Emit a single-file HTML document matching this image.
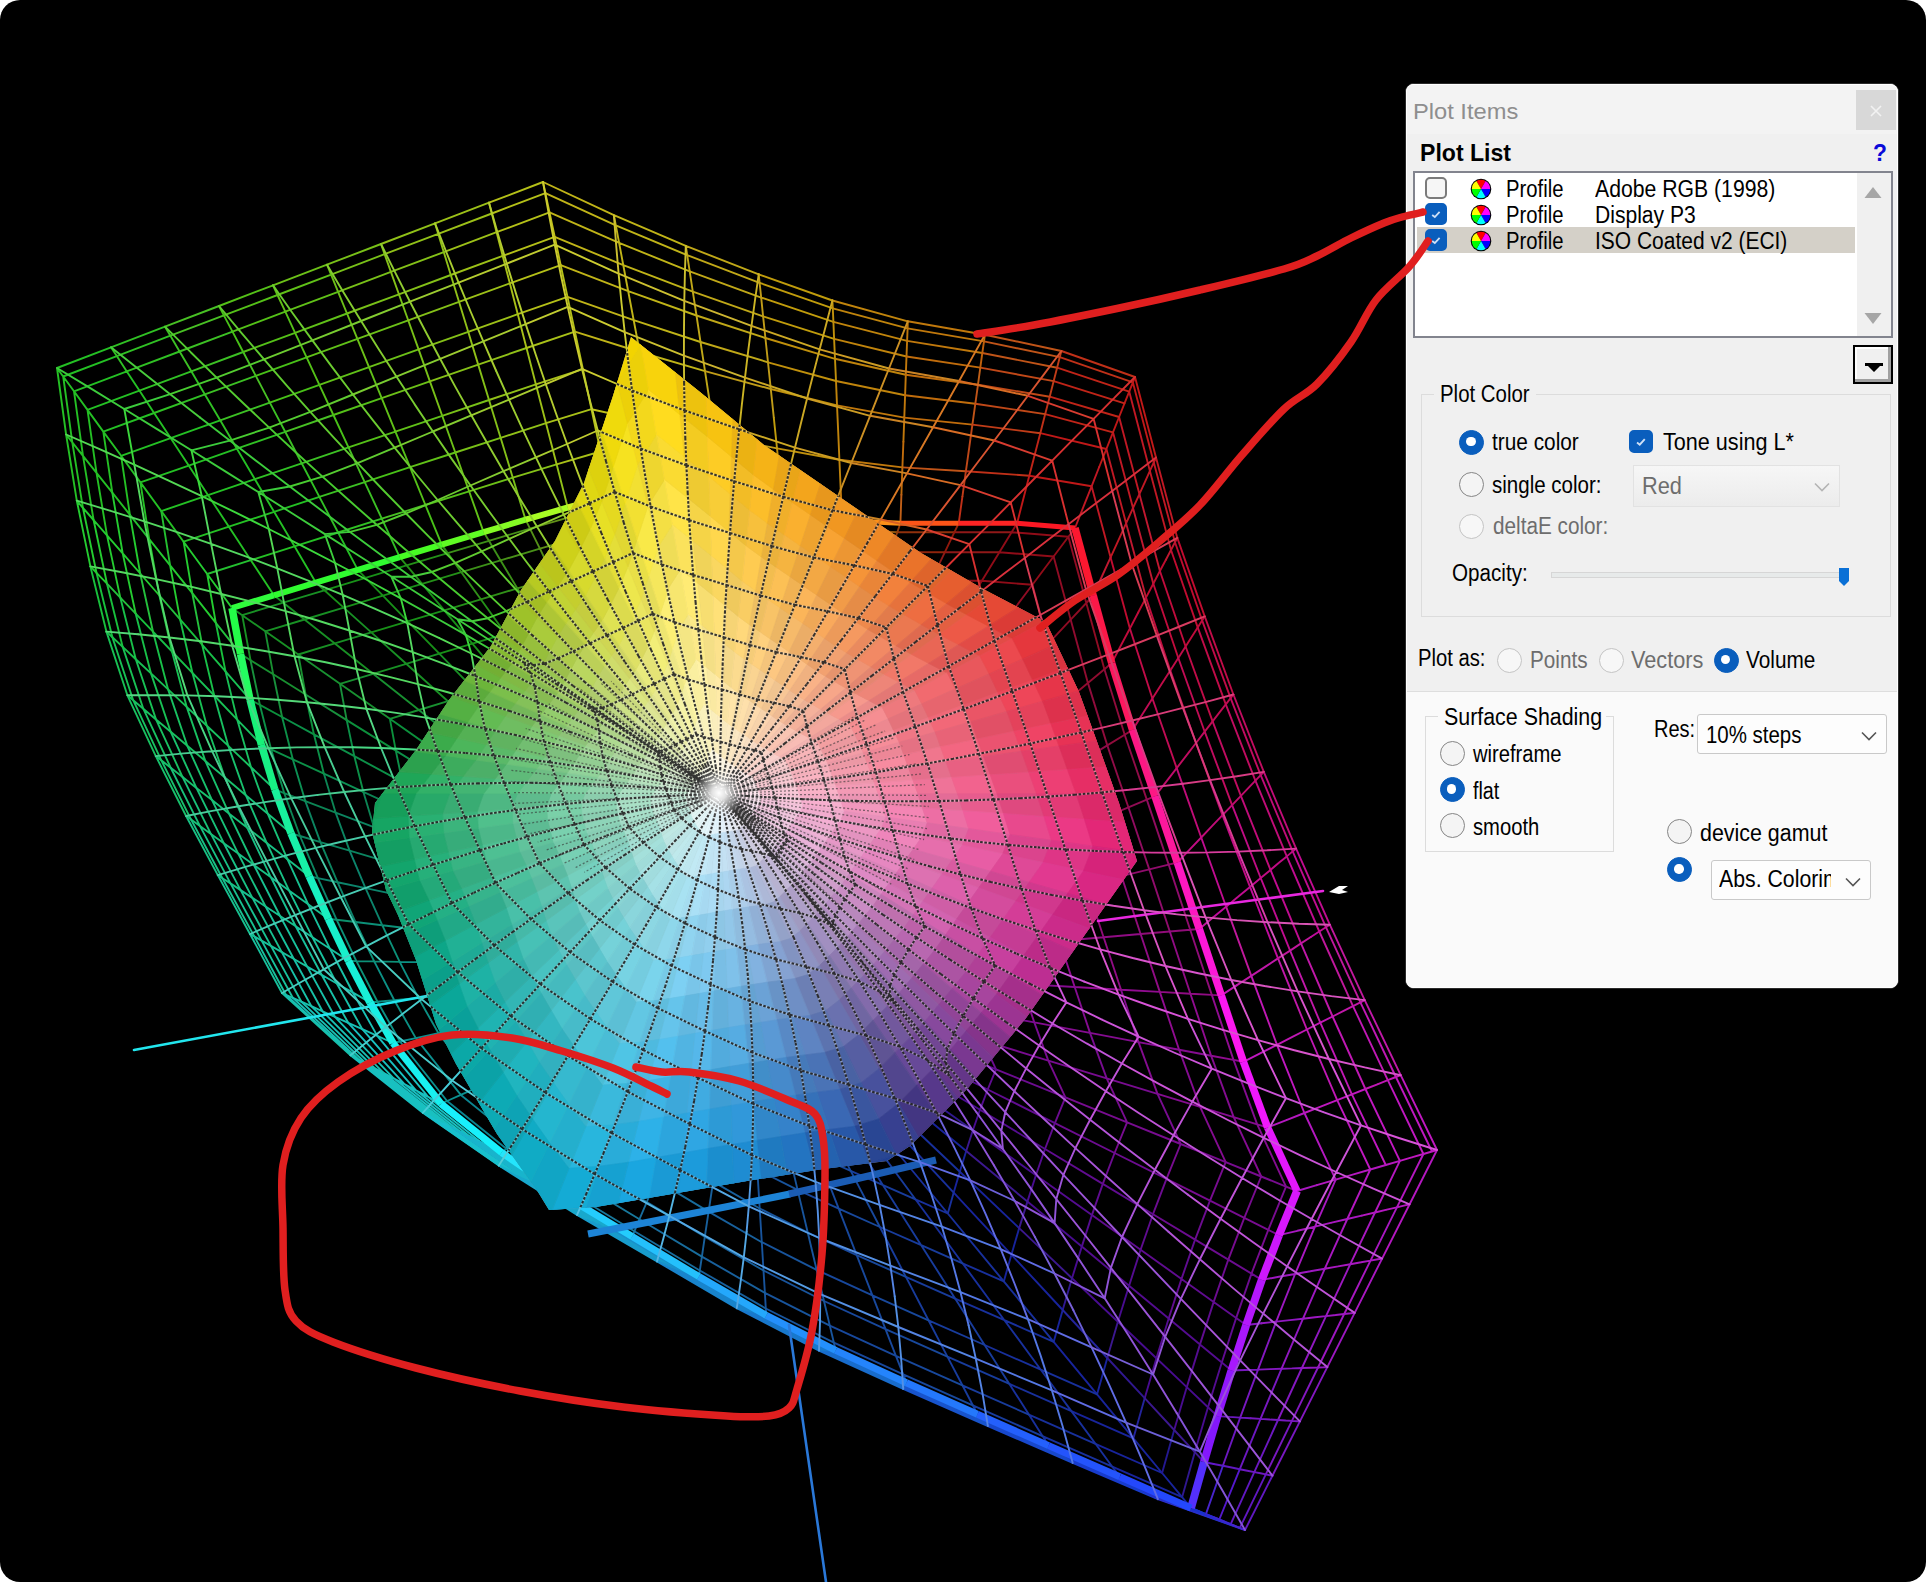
<!DOCTYPE html>
<html><head><meta charset="utf-8"><title>Plot Items</title>
<style>
html,body{margin:0;padding:0;background:#fff;overflow:hidden}
#root{position:relative;width:1926px;height:1582px;background:#000;border-radius:20px;overflow:hidden;font-family:"Liberation Sans",sans-serif}

#panel{position:absolute;left:1405px;top:83px;width:494px;height:906px;box-sizing:border-box;border:1.8px solid #2a2a2a;border-radius:9px;background:#f0f0f0;overflow:hidden}
#pglow{position:absolute;left:0;top:0;right:0;bottom:0;border:1.4px solid #fff;border-radius:7px}
#ptitle{position:absolute;left:0;top:0;width:100%;height:50px;background:#f3f3f3}
#pbottom{position:absolute;left:0;top:607px;width:100%;height:300px;background:#fafafa;border-top:1px solid #dedede}
#list{position:absolute;left:1413px;top:171px;width:480px;height:167px;box-sizing:border-box;border:2px solid #82848e;background:#fff}
.abs{position:absolute}
.t{position:absolute;white-space:nowrap;line-height:1;transform-origin:0 0;font-family:"Liberation Sans",sans-serif}
.rd{position:absolute;width:25px;height:25px;box-sizing:border-box;border:1.6px solid #858585;border-radius:50%}
.rd i{display:block}
.cb{position:absolute;box-sizing:border-box;border:2px solid #7b7b7b;border-radius:5px}
.grp{position:absolute;box-sizing:border-box;border:1.5px solid #dcdcdc}
.cmb{position:absolute;box-sizing:border-box;border:1.5px solid #c9c9c9;border-radius:3px;background:#fdfdfd}

</style></head><body>
<div id="root">
<svg id="plot" width="1926" height="1582" viewBox="0 0 1926 1582" style="position:absolute;left:0;top:0" fill="none" stroke-linecap="round">
<defs><radialGradient id="hub"><stop offset="0" stop-color="#fff"/><stop offset="0.3" stop-color="#fff" stop-opacity="0.85"/><stop offset="1" stop-color="#fff" stop-opacity="0"/></radialGradient><clipPath id="cs"><polygon points="631,337 700,392 764,445 828,489 921,553 985,590 1046,622 1079,692 1100,750 1119,803 1137,861 1096,919 1026,1018 968,1088 910,1146 887,1161 823,1169 747,1181 666,1195 596,1207 549,1210 538,1192 497,1134 456,1064 436,1024 416,960 398,915 386,890 372,832 375,803 416,750 449,700 491,646 521,590 555,541 584,483 613,396"/></clipPath>
<clipPath id="cx"><path clip-rule="evenodd" d="M0 0H1926V1582H0Z M631 337 L700 392 L764 445 L828 489 L921 553 L985 590 L1046 622 L1079 692 L1100 750 L1119 803 L1137 861 L1096 919 L1026 1018 L968 1088 L910 1146 L887 1161 L823 1169 L747 1181 L666 1195 L596 1207 L549 1210 L538 1192 L497 1134 L456 1064 L436 1024 L416 960 L398 915 L386 890 L372 832 L375 803 L416 750 L449 700 L491 646 L521 590 L555 541 L584 483 L613 396 Z"/></clipPath></defs>
<g id="back">
<path d="M57.0 368.0L111.0 347.3M76.8 500.7L66.1 434.5M66.1 434.5L57.0 368.0M63.2 376.5L116.8 356.1M82.9 507.8L72.3 442.3M72.3 442.3L63.2 376.5M74.0 391.3L126.8 371.4M93.6 520.0L83.0 455.8M83.0 455.8L74.0 391.3M87.5 409.9L139.4 390.6M107.0 535.4L96.5 472.8M96.5 472.8L87.5 409.9M103.3 431.6L154.1 413.0M112.3 492.6L103.3 431.6M121.1 455.8L170.6 438.1M170.6 438.1L220.2 420.3M129.9 514.8L121.1 455.8M140.4 482.4L188.7 465.6M188.7 465.6L236.9 448.7M149.2 539.1L140.4 482.4M161.3 511.1L208.1 495.2M208.1 495.2L254.9 479.2M183.6 541.7L228.9 526.7M228.9 526.7L274.1 511.8M274.1 511.8L319.4 496.9M250.8 560.2L294.5 546.3M294.5 546.3L338.1 532.5M273.9 595.3L315.8 582.6M315.8 582.6L357.8 569.9M357.8 569.9L399.7 557.2M57.0 368.0L63.2 376.5M63.2 376.5L74.0 391.3M74.0 391.3L87.5 409.9M87.5 409.9L103.3 431.6M103.3 431.6L121.1 455.8M121.1 455.8L140.4 482.4M140.4 482.4L161.3 511.1M161.3 511.1L183.6 541.7M126.8 371.4L139.4 390.6M139.4 390.6L154.1 413.0M154.1 413.0L170.6 438.1M170.6 438.1L188.7 465.6M188.7 465.6L208.1 495.2M208.1 495.2L228.9 526.7M228.9 526.7L250.8 560.2M250.8 560.2L273.9 595.3M236.9 448.7L254.9 479.2M254.9 479.2L274.1 511.8M274.1 511.8L294.5 546.3M294.5 546.3L315.8 582.6M338.1 532.5L357.8 569.9M66.1 434.5L72.3 442.3M72.3 442.3L83.0 455.8M83.0 455.8L96.5 472.8M96.5 472.8L112.3 492.6M112.3 492.6L129.9 514.8" stroke="#24c024" stroke-width="1.9" />
<path d="M111.0 347.3L165.0 326.7M116.8 356.1L170.4 335.7M126.8 371.4L179.6 351.5M139.4 390.6L191.3 371.3M154.1 413.0L204.9 394.4M236.9 448.7L285.2 431.8M254.9 479.2L301.7 463.3M338.1 532.5L381.8 518.7M111.0 347.3L116.8 356.1M116.8 356.1L126.8 371.4M191.3 371.3L204.9 394.4M204.9 394.4L220.2 420.3M220.2 420.3L236.9 448.7M301.7 463.3L319.4 496.9M319.4 496.9L338.1 532.5M381.8 518.7L399.7 557.2" stroke="#30c024" stroke-width="1.9" />
<path d="M165.0 326.7L219.0 306.0M170.4 335.7L223.9 315.4M285.2 431.8L333.4 415.0M381.8 518.7L425.4 505.0M243.2 352.0L255.8 375.9M255.8 375.9L269.8 402.6M348.5 447.4L364.7 482.1" stroke="#48c024" stroke-width="1.9" />
<path d="M219.0 306.0L273.0 285.3M223.9 315.4L277.5 295.0M232.5 331.6L285.3 311.7M243.2 352.0L295.1 332.8M333.4 415.0L381.7 398.1M348.5 447.4L395.4 431.6M425.4 505.0L469.1 491.3M441.7 544.6L483.6 532.1M285.3 311.7L295.1 332.8M295.1 332.8L306.6 357.3M306.6 357.3L319.4 384.9M319.4 384.9L333.4 415.0M395.4 431.6L410.0 467.2M410.0 467.2L425.4 505.0" stroke="#54c018" stroke-width="1.9" />
<path d="M273.0 285.3L327.0 264.7M357.4 338.8L408.2 320.3M369.0 367.1L418.6 349.4M381.7 398.1L429.9 381.4M469.1 491.3L512.8 477.7M483.6 532.1L525.6 519.7M327.0 264.7L331.1 274.6M331.1 274.6L338.1 291.8M338.1 291.8L347.0 313.5M347.0 313.5L357.4 338.8M357.4 338.8L369.0 367.1M442.2 415.8L455.3 452.5M455.3 452.5L469.1 491.3" stroke="#6cc018" stroke-width="1.9" />
<path d="M327.0 264.7L381.0 244.0M331.1 274.6L384.6 254.2M338.1 291.8L390.9 271.9M347.0 313.5L398.9 294.3M442.2 415.8L489.0 400.0M455.3 452.5L500.6 437.8M398.9 294.3L408.2 320.3M408.2 320.3L418.6 349.4M418.6 349.4L429.9 381.4M429.9 381.4L442.2 415.8M512.8 477.7L525.6 519.7" stroke="#78c018" stroke-width="1.9" />
<path d="M381.0 244.0L435.0 223.3M384.6 254.2L438.2 233.8M478.2 364.6L526.5 348.0M489.0 400.0L535.9 384.4M500.6 437.8L546.0 423.2M435.0 223.3L438.2 233.8M438.2 233.8L443.8 252.1M443.8 252.1L450.8 275.0M450.8 275.0L459.0 301.8M459.0 301.8L468.2 331.8M468.2 331.8L478.2 364.6M556.6 464.3L567.7 507.5" stroke="#90c018" stroke-width="1.9" />
<path d="M435.0 223.3L489.0 202.7M438.2 233.8L491.8 213.5M443.8 252.1L496.6 232.2M450.8 275.0L502.7 255.9M459.0 301.8L509.9 283.4M468.2 331.8L517.8 314.2M567.7 507.5L610.0 496.0M526.5 348.0L535.9 384.4M535.9 384.4L546.0 423.2M546.0 423.2L556.6 464.3" stroke="#9cc018" stroke-width="1.9" />
<path d="M489.0 202.7L543.0 182.0M491.8 213.5L545.4 193.1M496.6 232.2L549.5 212.4M502.7 255.9L554.7 236.8M509.9 283.4L560.7 265.2M517.8 314.2L567.5 296.9M560.7 265.2L567.5 296.9M567.5 296.9L574.9 331.7M574.9 331.7L582.9 369.2M582.9 369.2L591.5 409.2M591.5 409.2L600.5 451.5M600.5 451.5L610.0 496.0" stroke="#b4c018" stroke-width="1.9" />
<path d="M543.0 182.0L613.9 215.1M613.9 215.1L685.8 245.9M545.4 193.1L615.8 225.3M615.8 225.3L687.2 255.2M549.5 212.4L619.1 242.9M619.1 242.9L689.7 271.4M554.7 236.8L623.3 265.2M623.3 265.2L692.8 291.7M560.7 265.2L628.2 291.2M628.2 291.2L696.5 315.5M567.5 296.9L633.7 320.2M633.7 320.2L700.5 342.0M574.9 331.7L639.7 352.0M639.7 352.0L705.0 371.1M613.9 215.1L615.8 225.3M615.8 225.3L619.1 242.9M619.1 242.9L623.3 265.2M623.3 265.2L628.2 291.2M628.2 291.2L633.7 320.2M633.7 320.2L639.7 352.0M639.7 352.0L646.2 386.3M646.2 386.3L653.1 422.9M653.1 422.9L660.3 461.6M660.3 461.6L668.0 502.2" stroke="#c0b418" stroke-width="1.9" />
<path d="M685.8 245.9L758.7 274.3M687.2 255.2L759.6 282.8M689.7 271.4L761.2 297.6M692.8 291.7L763.1 316.3M696.5 315.5L765.4 338.0M700.5 342.0L768.0 362.3M653.1 422.9L714.9 435.9M668.0 502.2L726.0 508.5M685.8 245.9L687.2 255.2M687.2 255.2L689.7 271.4M689.7 271.4L692.8 291.7M692.8 291.7L696.5 315.5M696.5 315.5L700.5 342.0M700.5 342.0L705.0 371.1M705.0 371.1L709.8 402.5M709.8 402.5L714.9 435.9M714.9 435.9L720.3 471.3M720.3 471.3L726.0 508.5" stroke="#c0a818" stroke-width="1.9" />
<path d="M758.7 274.3L832.4 300.5M759.6 282.8L832.8 308.3M761.2 297.6L833.4 321.8M763.1 316.3L834.1 338.9M773.8 417.7L777.0 448.4" stroke="#c09c0c" stroke-width="1.9" />
<path d="M832.4 300.5L907.8 321.3M832.8 308.3L907.6 328.4M833.4 321.8L907.1 340.9M834.1 338.9L906.5 356.5M835.0 358.8L905.8 374.8M836.0 381.0L905.1 395.2M784.0 514.9L842.1 520.6M836.0 381.0L837.0 405.4M837.0 405.4L838.2 431.7M838.2 431.7L839.4 459.7M839.4 459.7L840.7 489.4" stroke="#c0840c" stroke-width="1.9" />
<path d="M907.8 321.3L984.9 334.7M907.6 328.4L984.0 341.4M907.1 340.9L982.3 353.0M837.0 405.4L904.3 417.6M839.4 459.7L902.4 467.4M840.7 489.4L842.1 520.6M907.8 321.3L907.6 328.4M907.6 328.4L907.1 340.9M907.1 340.9L906.5 356.5M906.5 356.5L905.8 374.8M905.8 374.8L905.1 395.2M905.1 395.2L904.3 417.6M904.3 417.6L903.4 441.7" stroke="#c0780c" stroke-width="1.9" />
<path d="M984.9 334.7L1061.4 351.0M984.0 341.4L1059.8 357.1M982.3 353.0L1057.1 367.7M902.4 467.4L965.9 471.2M978.0 384.7L975.3 403.8M975.3 403.8L972.4 424.6" stroke="#c05418" stroke-width="1.9" />
<path d="M1061.4 351.0L1135.0 377.0M1059.8 357.1L1132.9 382.4M965.9 471.2L1029.3 475.7M962.4 496.6L958.7 523.3M1049.7 396.7L1045.2 414.1M1045.2 414.1L1040.3 433.2" stroke="#c03018" stroke-width="1.9" />
<path d="M1135.0 377.0L1156.0 457.5M1132.9 382.4L1153.8 462.4M1040.3 433.2L1106.4 449.0M1029.3 475.7L1091.6 486.3M958.7 523.3L1017.1 523.3M1029.3 475.7L1023.3 498.9M1023.3 498.9L1017.1 523.3M1135.0 377.0L1132.9 382.4M1132.9 382.4L1129.2 391.6M1129.2 391.6L1124.5 403.4M1124.5 403.4L1119.1 417.0M1119.1 417.0L1113.0 432.3M1113.0 432.3L1106.4 449.0M1106.4 449.0L1099.2 467.0" stroke="#c01818" stroke-width="1.9" />
<path d="M1156.0 457.5L1177.3 537.9M1153.8 462.4L1175.0 542.3M1129.2 391.6L1149.9 470.9M1149.9 470.9L1171.0 550.0M1119.1 417.0L1139.4 494.1M1113.0 432.3L1133.0 508.0M1106.4 449.0L1126.1 523.3M1091.6 486.3L1110.6 557.4M1017.1 523.3L1075.0 528.0M1075.0 528.0L1093.2 595.6M1099.2 467.0L1091.6 486.3M1091.6 486.3L1083.5 506.6M1083.5 506.6L1075.0 528.0M1156.0 457.5L1153.8 462.4M1153.8 462.4L1149.9 470.9M1149.9 470.9L1145.1 481.6M1145.1 481.6L1139.4 494.1M1139.4 494.1L1133.0 508.0M1133.0 508.0L1126.1 523.3M1126.1 523.3L1118.6 539.8M1118.6 539.8L1110.6 557.4" stroke="#c01824" stroke-width="1.9" />
<path d="M1177.3 537.9L1204.7 616.4M1175.0 542.3L1202.1 620.4M1171.0 550.0L1197.7 627.4M1110.6 557.4L1129.9 628.5M1165.9 559.7L1159.9 571.0M1159.9 571.0L1153.3 583.7M1153.3 583.7L1146.0 597.6M1146.0 597.6L1138.2 612.5" stroke="#c00c30" stroke-width="1.9" />
<path d="M1204.7 616.4L1233.4 694.5M1202.1 620.4L1230.6 698.1M1197.7 627.4L1225.8 704.4M1185.6 646.5L1212.6 721.4M1129.9 628.5L1152.4 698.5M1111.7 663.1L1132.5 729.9M1185.6 646.5L1178.3 658.0M1178.3 658.0L1170.3 670.5M1170.3 670.5L1161.6 684.1M1161.6 684.1L1152.4 698.5" stroke="#c00c48" stroke-width="1.9" />
<path d="M1233.4 694.5L1263.8 771.9M1230.6 698.1L1260.7 775.2M1225.8 704.4L1255.4 780.7M1212.6 721.4L1240.9 795.9M1204.7 731.7L1232.1 805.1M1132.5 729.9L1155.0 796.2M1204.7 731.7L1196.0 743.0M1196.0 743.0L1186.7 755.1M1186.7 755.1L1176.7 768.1" stroke="#c00c60" stroke-width="1.9" />
<path d="M1263.8 771.9L1296.1 848.6M1260.7 775.2L1292.7 851.4M1255.4 780.7L1286.8 856.4M1240.9 795.9L1270.5 869.9M1176.7 768.1L1201.2 837.5M1155.0 796.2L1177.3 862.5M1232.1 805.1L1222.5 815.1M1222.5 815.1L1212.2 825.9M1212.2 825.9L1201.2 837.5" stroke="#c00c78" stroke-width="1.9" />
<path d="M1296.1 848.6L1329.8 924.7M1292.7 851.4L1325.9 927.2M1286.8 856.4L1319.3 931.5M1270.5 869.9L1301.0 943.4M1260.7 878.0L1290.1 950.6M1201.2 837.5L1226.1 906.7M1177.3 862.5L1199.3 929.0M1260.7 878.0L1250.0 886.9M1250.0 886.9L1238.4 896.5M1238.4 896.5L1226.1 906.7M1329.8 924.7L1325.9 927.2M1325.9 927.2L1319.3 931.5" stroke="#c00c90" stroke-width="1.9" />
<path d="M1329.8 924.7L1364.7 1000.1M1325.9 927.2L1360.4 1002.3M1319.3 931.5L1353.0 1006.1M1226.1 906.7L1251.3 975.9M1213.0 917.6L1199.3 929.0M1310.8 937.0L1301.0 943.4M1301.0 943.4L1290.1 950.6M1290.1 950.6L1278.0 958.4" stroke="#c0189c" stroke-width="1.9" />
<path d="M1364.7 1000.1L1400.7 1075.2M1301.0 943.4L1332.6 1016.5M1290.1 950.6L1320.3 1022.7M1278.0 958.4L1306.9 1029.5M1199.3 929.0L1221.3 995.4M1278.0 958.4L1265.1 966.9M1265.1 966.9L1251.3 975.9M1251.3 975.9L1236.6 985.4M1364.7 1000.1L1360.4 1002.3M1360.4 1002.3L1353.0 1006.1M1353.0 1006.1L1343.6 1010.9M1343.6 1010.9L1332.6 1016.5" stroke="#c018a8" stroke-width="1.9" />
<path d="M1400.7 1075.2L1437.0 1150.0M1395.9 1077.0L1432.0 1151.5M1387.8 1080.2L1423.4 1154.0M1365.4 1089.0L1399.9 1160.9M1351.9 1094.3L1385.8 1165.0M1337.2 1100.1L1370.3 1169.5M1277.0 1044.8L1304.4 1113.0M1221.3 995.4L1243.4 1061.8M1277.0 1044.8L1260.6 1053.1M1260.6 1053.1L1243.4 1061.8M1365.4 1089.0L1351.9 1094.3M1351.9 1094.3L1337.2 1100.1M1337.2 1100.1L1321.3 1106.4M1321.3 1106.4L1304.4 1113.0M1437.0 1150.0L1432.0 1151.5M1432.0 1151.5L1423.4 1154.0M1423.4 1154.0L1412.6 1157.2M1412.6 1157.2L1399.9 1160.9" stroke="#c018c0" stroke-width="1.9" />
<path d="M1437.0 1150.0L1409.6 1204.3M1409.6 1204.3L1382.1 1258.6M1423.4 1154.0L1396.9 1207.3M1399.9 1160.9L1375.0 1212.5M1370.3 1169.5L1347.3 1219.0M1304.4 1113.0L1335.7 1179.7M1243.4 1061.8L1267.6 1127.5M1267.6 1127.5L1297.0 1191.0M1304.4 1113.0L1286.4 1120.1M1286.4 1120.1L1267.6 1127.5M1399.9 1160.9L1385.8 1165.0M1385.8 1165.0L1370.3 1169.5M1370.3 1169.5L1353.5 1174.4M1353.5 1174.4L1335.7 1179.7M1335.7 1179.7L1316.8 1185.2M1409.6 1204.3L1404.9 1205.4M1404.9 1205.4L1396.9 1207.3M1396.9 1207.3L1386.8 1209.7M1386.8 1209.7L1375.0 1212.5M1375.0 1212.5L1361.7 1215.6" stroke="#b418c0" stroke-width="1.9" />
<path d="M1382.1 1258.6L1354.7 1312.9M1396.9 1207.3L1370.5 1260.6M1370.5 1260.6L1344.2 1314.0M1375.0 1212.5L1350.3 1264.2M1347.3 1219.0L1324.8 1268.7M1335.7 1179.7L1315.0 1226.7M1315.0 1226.7L1295.1 1274.0M1297.0 1191.0L1278.9 1235.2M1316.8 1185.2L1297.0 1191.0M1361.7 1215.6L1347.3 1219.0M1347.3 1219.0L1331.7 1222.7M1331.7 1222.7L1315.0 1226.7M1315.0 1226.7L1297.4 1230.8M1297.4 1230.8L1278.9 1235.2M1382.1 1258.6L1377.9 1259.3M1377.9 1259.3L1370.5 1260.6M1370.5 1260.6L1361.1 1262.3M1361.1 1262.3L1350.3 1264.2M1350.3 1264.2L1338.1 1266.4M1338.1 1266.4L1324.8 1268.7" stroke="#a818c0" stroke-width="1.9" />
<path d="M1354.7 1312.9L1327.3 1367.1M1344.2 1314.0L1318.0 1367.5M1350.3 1264.2L1326.0 1316.1M1324.8 1268.7L1303.0 1318.7M1295.1 1274.0L1276.2 1321.6M1278.9 1235.2L1261.8 1279.9M1324.8 1268.7L1310.4 1271.3M1310.4 1271.3L1295.1 1274.0M1295.1 1274.0L1278.9 1276.8M1278.9 1276.8L1261.8 1279.9M1354.7 1312.9L1350.9 1313.3M1350.9 1313.3L1344.2 1314.0M1344.2 1314.0L1335.8 1315.0M1335.8 1315.0L1326.0 1316.1M1326.0 1316.1L1315.0 1317.3M1315.0 1317.3L1303.0 1318.7" stroke="#9c18c0" stroke-width="1.9" />
<path d="M1327.3 1367.1L1299.9 1421.4M1318.0 1367.5L1291.9 1420.9M1301.9 1368.0L1278.0 1420.0M1276.2 1321.6L1258.0 1369.6M1246.2 1325.0L1231.5 1370.5M1261.6 1323.3L1246.2 1325.0M1301.9 1368.0L1292.2 1368.4M1292.2 1368.4L1281.6 1368.7M1281.6 1368.7L1270.2 1369.1M1270.2 1369.1L1258.0 1369.6" stroke="#8418c0" stroke-width="1.9" />
<path d="M1299.9 1421.4L1272.4 1475.7M1291.9 1420.9L1265.8 1474.4M1281.6 1368.7L1260.5 1418.9M1258.0 1369.6L1240.2 1417.6M1258.0 1369.6L1245.1 1370.0M1245.1 1370.0L1231.5 1370.5M1299.9 1421.4L1296.9 1421.2M1296.9 1421.2L1291.9 1420.9M1291.9 1420.9L1285.5 1420.5M1285.5 1420.5L1278.0 1420.0M1278.0 1420.0L1269.7 1419.5M1269.7 1419.5L1260.5 1418.9M1260.5 1418.9L1250.7 1418.3" stroke="#7818c0" stroke-width="1.9" />
<path d="M1272.4 1475.7L1245.0 1530.0M1265.8 1474.4L1239.8 1527.9M1254.3 1472.1L1230.7 1524.2M1217.4 1416.1L1204.0 1462.0M1239.8 1469.2L1231.6 1467.5M1231.6 1467.5L1222.9 1465.8M1222.9 1465.8L1213.7 1464.0" stroke="#6018c0" stroke-width="1.9" />
<path d="M1245.0 1530.0L1157.9 1499.2M1243.1 1529.2L1156.5 1498.4M1205.9 1514.1L1198.7 1511.1" stroke="#3030cc" stroke-width="1.9" />
<path d="M1157.9 1499.2L1072.7 1463.0M1156.5 1498.4L1071.9 1462.4M1154.2 1497.0L1070.4 1461.3M1151.2 1495.3L1068.5 1459.9M1147.8 1493.3L1066.3 1458.4M1143.9 1491.0L1063.9 1456.6M1139.7 1488.5L1061.2 1454.7M1135.2 1485.8L1058.3 1452.6M1130.3 1483.0L1055.3 1450.4M1125.2 1480.0L1052.0 1448.1M1119.8 1476.8L1048.6 1445.6M1157.9 1499.2L1156.5 1498.4M1156.5 1498.4L1154.2 1497.0M1154.2 1497.0L1151.2 1495.3M1151.2 1495.3L1147.8 1493.3M1147.8 1493.3L1143.9 1491.0M1143.9 1491.0L1139.7 1488.5M1139.7 1488.5L1135.2 1485.8M1135.2 1485.8L1130.3 1483.0M1130.3 1483.0L1125.2 1480.0M1125.2 1480.0L1119.8 1476.8" stroke="#183ccc" stroke-width="1.9" />
<path d="M1072.7 1463.0L987.9 1426.1M1071.9 1462.4L987.5 1425.6M1070.4 1461.3L986.9 1424.9M1068.5 1459.9L986.1 1424.0M1066.3 1458.4L985.1 1422.9M1063.9 1456.6L984.1 1421.7M1061.2 1454.7L982.9 1420.4M1058.3 1452.6L981.7 1419.0M1055.3 1450.4L980.3 1417.5M1052.0 1448.1L978.9 1415.9M1072.7 1463.0L1071.9 1462.4M1071.9 1462.4L1070.4 1461.3M1070.4 1461.3L1068.5 1459.9M1068.5 1459.9L1066.3 1458.4M1066.3 1458.4L1063.9 1456.6M1063.9 1456.6L1061.2 1454.7M1061.2 1454.7L1058.3 1452.6M1058.3 1452.6L1055.3 1450.4M1055.3 1450.4L1052.0 1448.1M1052.0 1448.1L1048.6 1445.6" stroke="#1848cc" stroke-width="1.9" />
<path d="M987.9 1426.1L903.2 1388.9M987.5 1425.6L903.3 1388.7M986.9 1424.9L903.5 1388.3M986.1 1424.0L903.7 1387.8M985.1 1422.9L904.0 1387.3M984.1 1421.7L904.4 1386.6M982.9 1420.4L904.7 1385.9M981.7 1419.0L905.1 1385.2M980.3 1417.5L905.5 1384.4M978.9 1415.9L905.9 1383.6M1048.6 1445.6L977.4 1414.2M977.4 1414.2L906.4 1382.7M987.9 1426.1L987.5 1425.6M987.5 1425.6L986.9 1424.9M986.9 1424.9L986.1 1424.0M986.1 1424.0L985.1 1422.9M985.1 1422.9L984.1 1421.7M984.1 1421.7L982.9 1420.4M982.9 1420.4L981.7 1419.0M981.7 1419.0L980.3 1417.5M980.3 1417.5L978.9 1415.9M978.9 1415.9L977.4 1414.2" stroke="#1854cc" stroke-width="1.9" />
<path d="M903.2 1388.9L819.0 1350.6M903.3 1388.7L819.6 1350.6M903.5 1388.3L820.6 1350.6M903.7 1387.8L821.9 1350.6M904.0 1387.3L823.4 1350.5M904.4 1386.6L825.1 1350.5M904.7 1385.9L826.9 1350.5M905.1 1385.2L828.9 1350.5M819.0 1350.6L819.6 1350.6M819.6 1350.6L820.6 1350.6M820.6 1350.6L821.9 1350.6M821.9 1350.6L823.4 1350.5M823.4 1350.5L825.1 1350.5M825.1 1350.5L826.9 1350.5M826.9 1350.5L828.9 1350.5M828.9 1350.5L831.1 1350.4M831.1 1350.4L833.3 1350.4M833.3 1350.4L835.7 1350.4" stroke="#186ccc" stroke-width="1.9" />
<path d="M819.0 1350.6L736.8 1308.2M819.6 1350.6L737.8 1308.4M820.6 1350.6L739.7 1308.9M821.9 1350.6L741.9 1309.4M823.4 1350.5L744.6 1310.1M825.1 1350.5L747.6 1310.8M826.9 1350.5L750.8 1311.6M828.9 1350.5L754.4 1312.5M831.1 1350.4L758.1 1313.4M833.3 1350.4L762.1 1314.4M835.7 1350.4L766.3 1315.4M744.6 1310.1L747.6 1310.8M747.6 1310.8L750.8 1311.6M750.8 1311.6L754.4 1312.5M754.4 1312.5L758.1 1313.4M758.1 1313.4L762.1 1314.4M762.1 1314.4L766.3 1315.4" stroke="#1878cc" stroke-width="1.9" />
<path d="M736.8 1308.2L657.0 1261.4M737.8 1308.4L658.5 1261.9M739.7 1308.9L661.1 1262.9M741.9 1309.4L664.3 1264.0M744.6 1310.1L668.1 1265.4M747.6 1310.8L672.3 1267.0M750.8 1311.6L677.0 1268.6M754.4 1312.5L682.0 1270.5M758.1 1313.4L687.3 1272.4M762.1 1314.4L693.0 1274.5M766.3 1315.4L698.9 1276.6M736.8 1308.2L737.8 1308.4M737.8 1308.4L739.7 1308.9M739.7 1308.9L741.9 1309.4M741.9 1309.4L744.6 1310.1M693.0 1274.5L698.9 1276.6" stroke="#1884cc" stroke-width="1.9" />
<path d="M657.0 1261.4L577.1 1214.9M658.5 1261.9L579.0 1215.6M661.1 1262.9L582.4 1217.0M664.3 1264.0L586.7 1218.7M668.1 1265.4L591.7 1220.6M672.3 1267.0L597.2 1222.8M677.0 1268.6L603.3 1225.3M624.4 1233.6L556.2 1192.0M632.2 1236.6L565.7 1196.4M586.7 1218.7L591.7 1220.6M591.7 1220.6L597.2 1222.8M597.2 1222.8L603.3 1225.3M603.3 1225.3L609.9 1227.9M609.9 1227.9L617.0 1230.6M617.0 1230.6L624.4 1233.6M624.4 1233.6L632.2 1236.6" stroke="#189ccc" stroke-width="1.9" />
<path d="M577.1 1214.9L498.8 1165.5M579.0 1215.6L501.2 1166.6M582.4 1217.0L505.3 1168.5M586.7 1218.7L510.5 1170.9M591.7 1220.6L516.5 1173.7M597.2 1222.8L523.3 1176.8M603.3 1225.3L530.7 1180.2M609.9 1227.9L538.7 1183.9M617.0 1230.6L547.2 1187.9M577.1 1214.9L579.0 1215.6M579.0 1215.6L582.4 1217.0M582.4 1217.0L586.7 1218.7M538.7 1183.9L547.2 1187.9M547.2 1187.9L556.2 1192.0M556.2 1192.0L565.7 1196.4" stroke="#18a8cc" stroke-width="1.9" />
<path d="M498.8 1165.5L422.8 1112.8M422.8 1112.8L350.5 1055.2M425.6 1114.2L353.7 1056.9M430.5 1116.6L359.2 1059.9M436.6 1119.7L366.3 1063.7M443.7 1123.3L374.5 1068.0M451.6 1127.3L383.6 1072.9M460.4 1131.7L393.7 1078.3M469.8 1136.4L404.5 1084.1M404.5 1084.1L348.2 1022.8M479.8 1141.5L416.0 1090.3M416.0 1090.3L362.3 1029.2M490.4 1146.8L428.2 1096.8M428.2 1096.8L377.3 1035.9M441.1 1103.7L393.0 1043.0M422.8 1112.8L425.6 1114.2M425.6 1114.2L430.5 1116.6M430.5 1116.6L436.6 1119.7M436.6 1119.7L443.7 1123.3M443.7 1123.3L451.6 1127.3M451.6 1127.3L460.4 1131.7M460.4 1131.7L469.8 1136.4M359.2 1059.9L366.3 1063.7M366.3 1063.7L374.5 1068.0M374.5 1068.0L383.6 1072.9M383.6 1072.9L393.7 1078.3M393.7 1078.3L404.5 1084.1M404.5 1084.1L416.0 1090.3M416.0 1090.3L428.2 1096.8M428.2 1096.8L441.1 1103.7" stroke="#18c0c0" stroke-width="1.9" />
<path d="M350.5 1055.2L282.0 993.0M311.4 1006.2L281.8 952.1M322.6 1011.3L293.9 959.0M334.9 1016.8L307.2 966.6M348.2 1022.8L321.6 974.8M362.3 1029.2L336.8 983.5M353.0 992.7L330.0 948.8M370.0 1002.4L348.5 960.9M282.0 993.0L285.9 994.8M285.9 994.8L292.8 997.8M292.8 997.8L301.4 1001.7M301.4 1001.7L311.4 1006.2M311.4 1006.2L322.6 1011.3M322.6 1011.3L334.9 1016.8M307.2 966.6L321.6 974.8M321.6 974.8L336.8 983.5M336.8 983.5L353.0 992.7M353.0 992.7L370.0 1002.4" stroke="#18c0a8" stroke-width="1.9" />
<path d="M282.0 993.0L250.0 934.0M285.9 994.8L254.3 936.4M292.8 997.8L261.6 940.6M301.4 1001.7L270.9 945.9M293.9 959.0L265.6 906.5M307.2 966.6L280.1 916.0M321.6 974.8L295.7 926.3M336.8 983.5L312.4 937.2M330.0 948.8L308.2 904.3M348.5 960.9L328.4 918.9M250.0 934.0L254.3 936.4M254.3 936.4L261.6 940.6M261.6 940.6L270.9 945.9M270.9 945.9L281.8 952.1M281.8 952.1L293.9 959.0M293.9 959.0L307.2 966.6M295.7 926.3L312.4 937.2M312.4 937.2L330.0 948.8M330.0 948.8L348.5 960.9" stroke="#18c09c" stroke-width="1.9" />
<path d="M250.0 934.0L217.8 875.1M254.3 936.4L222.4 878.2M261.6 940.6L230.5 883.4M270.9 945.9L240.6 890.1M281.8 952.1L252.4 897.9M280.1 916.0L253.9 865.0M295.7 926.3L270.9 877.3M312.4 937.2L289.0 890.4M308.2 904.3L287.5 859.3M328.4 918.9L309.2 876.3M240.6 890.1L252.4 897.9M252.4 897.9L265.6 906.5M265.6 906.5L280.1 916.0M280.1 916.0L295.7 926.3M270.9 877.3L289.0 890.4M289.0 890.4L308.2 904.3M308.2 904.3L328.4 918.9" stroke="#18c090" stroke-width="1.9" />
<path d="M217.8 875.1L186.1 816.0M222.4 878.2L191.1 819.6M230.5 883.4L199.9 825.9M240.6 890.1L210.9 833.9M252.4 897.9L223.8 843.2M265.6 906.5L238.2 853.6M270.9 877.3L247.3 827.8M289.0 890.4L266.8 843.1M309.2 876.3L291.0 833.3M217.8 875.1L222.4 878.2M222.4 878.2L230.5 883.4M230.5 883.4L240.6 890.1M223.8 843.2L238.2 853.6M238.2 853.6L253.9 865.0M253.9 865.0L270.9 877.3M266.8 843.1L287.5 859.3M287.5 859.3L309.2 876.3" stroke="#18c084" stroke-width="1.9" />
<path d="M186.1 816.0L155.8 756.1M191.1 819.6L161.3 760.3M196.4 787.9L170.7 731.8M212.0 800.1L187.3 745.8M228.9 813.4L205.4 761.1M245.8 795.2L228.3 745.9M267.8 813.8L251.0 767.2M274.8 789.5L261.4 744.8M155.8 756.1L161.3 760.3M161.3 760.3L170.7 767.7M170.7 767.7L182.6 777.1M182.6 777.1L196.4 787.9M196.4 787.9L212.0 800.1M205.4 761.1L224.9 777.6M224.9 777.6L245.8 795.2M251.0 767.2L274.8 789.5" stroke="#18c06c" stroke-width="1.9" />
<path d="M155.8 756.1L127.4 695.3M161.3 760.3L133.2 700.2M170.7 767.7L143.3 708.7M182.6 777.1L156.0 719.4M187.3 745.8L168.1 689.4M205.4 761.1L186.7 706.9M224.9 777.6L206.8 725.8M228.3 745.9L214.2 695.5M251.0 767.2L237.2 719.6M261.4 744.8L250.0 699.6M133.2 700.2L143.3 708.7M143.3 708.7L156.0 719.4M156.0 719.4L170.7 731.8M170.7 731.8L187.3 745.8M187.3 745.8L205.4 761.1M186.7 706.9L206.8 725.8M206.8 725.8L228.3 745.9M228.3 745.9L251.0 767.2M237.2 719.6L261.4 744.8" stroke="#18c060" stroke-width="1.9" />
<path d="M127.4 695.3L106.4 631.6M133.2 700.2L112.4 637.2M143.3 708.7L122.7 646.9M156.0 719.4L135.8 659.2M170.7 731.8L151.0 673.4M186.7 706.9L172.0 651.5M206.8 725.8L192.4 672.8M237.2 719.6L225.5 671.4M127.4 695.3L133.2 700.2M135.8 659.2L151.0 673.4M151.0 673.4L168.1 689.4M168.1 689.4L186.7 706.9M192.4 672.8L214.2 695.5M214.2 695.5L237.2 719.6M225.5 671.4L250.0 699.6" stroke="#18c054" stroke-width="1.9" />
<path d="M106.4 631.6L90.4 566.4M112.4 637.2L96.5 572.8M122.7 646.9L107.0 583.7M172.0 651.5L159.4 595.5M225.5 671.4L215.8 622.8M135.7 613.7L153.0 631.7M180.1 619.3L202.1 644.6" stroke="#18c03c" stroke-width="1.9" />
<path d="M90.4 566.4L76.8 500.7M96.5 572.8L82.9 507.8M107.0 583.7L93.6 520.0M120.3 597.6L107.0 535.4M135.7 613.7L122.7 553.4M122.7 553.4L112.3 492.6M140.2 573.5L129.9 514.8M159.4 595.5L149.2 539.1M180.1 619.3L170.1 565.3M192.3 593.2L183.6 541.7M215.8 622.8L207.2 574.0M232.0 608.0L273.9 595.3M183.6 541.7L207.2 574.0M207.2 574.0L232.0 608.0M90.4 566.4L96.5 572.8M96.5 572.8L107.0 583.7M76.8 500.7L82.9 507.8M82.9 507.8L93.6 520.0M93.6 520.0L107.0 535.4M107.0 535.4L122.7 553.4M122.7 553.4L140.2 573.5M140.2 573.5L159.4 595.5M149.2 539.1L170.1 565.3M170.1 565.3L192.3 593.2M192.3 593.2L215.8 622.8" stroke="#24cc30" stroke-width="1.9" />
<path d="M277.5 295.0L331.1 274.6M285.3 311.7L338.1 291.8M295.1 332.8L347.0 313.5M306.6 357.3L357.4 338.8M319.4 384.9L369.0 367.1M395.4 431.6L442.2 415.8M410.0 467.2L455.3 452.5M273.0 285.3L277.5 295.0M277.5 295.0L285.3 311.7M369.0 367.1L381.7 398.1M381.7 398.1L395.4 431.6M469.1 491.3L483.6 532.1" stroke="#60c018" stroke-width="1.9" />
<path d="M1360.4 1002.3L1395.9 1077.0M1353.0 1006.1L1387.8 1080.2M1332.6 1016.5L1365.4 1089.0M1320.3 1022.7L1351.9 1094.3M1306.9 1029.5L1337.2 1100.1M1251.3 975.9L1277.0 1044.8M1236.6 985.4L1221.3 995.4M1332.6 1016.5L1320.3 1022.7M1320.3 1022.7L1306.9 1029.5M1306.9 1029.5L1292.4 1036.9M1292.4 1036.9L1277.0 1044.8M1400.7 1075.2L1395.9 1077.0M1395.9 1077.0L1387.8 1080.2M1387.8 1080.2L1377.4 1084.3M1377.4 1084.3L1365.4 1089.0" stroke="#c018b4" stroke-width="1.9" />
<path d="M501.2 1166.6L425.6 1114.2M505.3 1168.5L430.5 1116.6M510.5 1170.9L436.6 1119.7M516.5 1173.7L443.7 1123.3M501.6 1152.5L441.1 1103.7M469.8 1136.4L479.8 1141.5M479.8 1141.5L490.4 1146.8" stroke="#18c0cc" stroke-width="1.9" />
<path d="M353.7 1056.9L285.9 994.8M359.2 1059.9L292.8 997.8M366.3 1063.7L301.4 1001.7M374.5 1068.0L311.4 1006.2M383.6 1072.9L322.6 1011.3M393.7 1078.3L334.9 1016.8M377.3 1035.9L353.0 992.7M393.0 1043.0L370.0 1002.4M350.5 1055.2L353.7 1056.9M353.7 1056.9L359.2 1059.9M334.9 1016.8L348.2 1022.8M348.2 1022.8L362.3 1029.2M362.3 1029.2L377.3 1035.9M377.3 1035.9L393.0 1043.0" stroke="#18c0b4" stroke-width="1.9" />
<path d="M179.6 351.5L232.5 331.6M191.3 371.3L243.2 352.0M204.9 394.4L255.8 375.9M220.2 420.3L269.8 402.6M301.7 463.3L348.5 447.4M319.4 496.9L364.7 482.1M399.7 557.2L441.7 544.6M165.0 326.7L170.4 335.7M170.4 335.7L179.6 351.5M179.6 351.5L191.3 371.3M269.8 402.6L285.2 431.8M285.2 431.8L301.7 463.3M364.7 482.1L381.8 518.7" stroke="#3cc024" stroke-width="1.9" />
<path d="M390.9 271.9L443.8 252.1M398.9 294.3L450.8 275.0M408.2 320.3L459.0 301.8M418.6 349.4L468.2 331.8M429.9 381.4L478.2 364.6M512.8 477.7L556.6 464.3M525.6 519.7L567.7 507.5M381.0 244.0L384.6 254.2M384.6 254.2L390.9 271.9M390.9 271.9L398.9 294.3M478.2 364.6L489.0 400.0M489.0 400.0L500.6 437.8M500.6 437.8L512.8 477.7" stroke="#84c018" stroke-width="1.9" />
<path d="M1057.1 367.7L1129.2 391.6M1053.7 381.1L1124.5 403.4M1049.7 396.7L1119.1 417.0M1045.2 414.1L1113.0 432.3M1040.3 433.2L1035.0 453.8M1035.0 453.8L1029.3 475.7" stroke="#c02418" stroke-width="1.9" />
<path d="M1239.8 1527.9L1154.2 1497.0M1235.6 1526.2L1151.2 1495.3M1230.7 1524.2L1147.8 1493.3M1225.2 1521.9L1143.9 1491.0M1198.7 1511.1L1191.0 1508.0" stroke="#2430cc" stroke-width="1.9" />
<path d="M199.9 825.9L170.7 767.7M210.9 833.9L182.6 777.1M223.8 843.2L196.4 787.9M238.2 853.6L212.0 800.1M253.9 865.0L228.9 813.4M247.3 827.8L224.9 777.6M266.8 843.1L245.8 795.2M287.5 859.3L267.8 813.8M291.0 833.3L274.8 789.5M186.1 816.0L191.1 819.6M191.1 819.6L199.9 825.9M199.9 825.9L210.9 833.9M210.9 833.9L223.8 843.2M212.0 800.1L228.9 813.4M228.9 813.4L247.3 827.8M247.3 827.8L266.8 843.1M245.8 795.2L267.8 813.8M267.8 813.8L291.0 833.3" stroke="#18c078" stroke-width="1.9" />
<path d="M906.5 356.5L980.3 367.6M905.8 374.8L978.0 384.7M905.1 395.2L975.3 403.8M904.3 417.6L972.4 424.6M842.1 520.6L900.4 523.3M903.4 441.7L902.4 467.4M902.4 467.4L901.4 494.7M984.9 334.7L984.0 341.4" stroke="#c06c0c" stroke-width="1.9" />
<path d="M980.3 367.6L1053.7 381.1M978.0 384.7L1049.7 396.7M975.3 403.8L1045.2 414.1M972.4 424.6L969.3 447.2M969.3 447.2L965.9 471.2" stroke="#c04818" stroke-width="1.9" />
<path d="M135.8 659.2L120.3 597.6M151.0 673.4L135.7 613.7M168.1 689.4L153.0 631.7M192.4 672.8L180.1 619.3M214.2 695.5L202.1 644.6M250.0 699.6L240.5 653.9M106.4 631.6L112.4 637.2M112.4 637.2L122.7 646.9M122.7 646.9L135.8 659.2M153.0 631.7L172.0 651.5M172.0 651.5L192.4 672.8M202.1 644.6L225.5 671.4" stroke="#18c048" stroke-width="1.9" />
<path d="M255.8 375.9L306.6 357.3M269.8 402.6L319.4 384.9M364.7 482.1L410.0 467.2M219.0 306.0L223.9 315.4M223.9 315.4L232.5 331.6M232.5 331.6L243.2 352.0M333.4 415.0L348.5 447.4M425.4 505.0L441.7 544.6" stroke="#48c018" stroke-width="1.9" />
<path d="M765.4 338.0L835.0 358.8M768.0 362.3L836.0 381.0M770.8 389.0L837.0 405.4M777.0 448.4L839.4 459.7M777.0 448.4L780.4 480.8M780.4 480.8L784.0 514.9M832.4 300.5L832.8 308.3M832.8 308.3L833.4 321.8M833.4 321.8L834.1 338.9M834.1 338.9L835.0 358.8M835.0 358.8L836.0 381.0" stroke="#c0900c" stroke-width="1.9" />
<path d="M1139.4 494.1L1159.9 571.0M1133.0 508.0L1153.3 583.7M1126.1 523.3L1146.0 597.6M1110.6 557.4L1102.1 576.0M1102.1 576.0L1093.2 595.6M1177.3 537.9L1175.0 542.3M1175.0 542.3L1171.0 550.0M1171.0 550.0L1165.9 559.7" stroke="#c01830" stroke-width="1.9" />
<path d="M1159.9 571.0L1185.6 646.5M1153.3 583.7L1178.3 658.0M1146.0 597.6L1170.3 670.5M1093.2 595.6L1111.7 663.1M1138.2 612.5L1129.9 628.5M1129.9 628.5L1121.0 645.3M1121.0 645.3L1111.7 663.1M1204.7 616.4L1202.1 620.4M1202.1 620.4L1197.7 627.4M1197.7 627.4L1192.1 636.2M1192.1 636.2L1185.6 646.5" stroke="#c00c3c" stroke-width="1.9" />
<path d="M1326.0 1316.1L1301.9 1368.0M1303.0 1318.7L1281.6 1368.7M1261.8 1279.9L1246.2 1325.0M1303.0 1318.7L1290.0 1320.1M1290.0 1320.1L1276.2 1321.6M1276.2 1321.6L1261.6 1323.3M1327.3 1367.1L1323.9 1367.3M1323.9 1367.3L1318.0 1367.5M1318.0 1367.5L1310.6 1367.7M1310.6 1367.7L1301.9 1368.0" stroke="#9018c0" stroke-width="1.9" />
<path d="M1278.0 1420.0L1254.3 1472.1M1260.5 1418.9L1239.8 1469.2M1240.2 1417.6L1222.9 1465.8M1231.5 1370.5L1217.4 1416.1M1250.7 1418.3L1240.2 1417.6M1240.2 1417.6L1229.1 1416.9M1229.1 1416.9L1217.4 1416.1M1272.4 1475.7L1270.0 1475.2M1270.0 1475.2L1265.8 1474.4M1265.8 1474.4L1260.5 1473.3M1260.5 1473.3L1254.3 1472.1M1254.3 1472.1L1247.4 1470.7M1247.4 1470.7L1239.8 1469.2" stroke="#6c18c0" stroke-width="1.9" />
<path d="M1178.3 658.0L1204.7 731.7M1170.3 670.5L1196.0 743.0M1152.4 698.5L1176.7 768.1M1152.4 698.5L1142.7 713.8M1142.7 713.8L1132.5 729.9M1233.4 694.5L1230.6 698.1M1230.6 698.1L1225.8 704.4M1225.8 704.4L1219.7 712.2M1219.7 712.2L1212.6 721.4M1212.6 721.4L1204.7 731.7" stroke="#c00c54" stroke-width="1.9" />
<path d="M1232.1 805.1L1260.7 878.0M1222.5 815.1L1250.0 886.9M1201.2 837.5L1189.6 849.7M1189.6 849.7L1177.3 862.5M1296.1 848.6L1292.7 851.4M1292.7 851.4L1286.8 856.4M1286.8 856.4L1279.2 862.6M1279.2 862.6L1270.5 869.9M1270.5 869.9L1260.7 878.0" stroke="#c00c84" stroke-width="1.9" />
<path d="M523.3 1176.8L451.6 1127.3M530.7 1180.2L460.4 1131.7M538.7 1183.9L469.8 1136.4M547.2 1187.9L479.8 1141.5M556.2 1192.0L490.4 1146.8M565.7 1196.4L501.6 1152.5M498.8 1165.5L501.2 1166.6M501.2 1166.6L505.3 1168.5M505.3 1168.5L510.5 1170.9M510.5 1170.9L516.5 1173.7M516.5 1173.7L523.3 1176.8M523.3 1176.8L530.7 1180.2M530.7 1180.2L538.7 1183.9M490.4 1146.8L501.6 1152.5" stroke="#18b4cc" stroke-width="1.9" />
<path d="M153.0 631.7L140.2 573.5M202.1 644.6L192.3 593.2M240.5 653.9L232.0 608.0M107.0 583.7L120.3 597.6M120.3 597.6L135.7 613.7M159.4 595.5L180.1 619.3M215.8 622.8L240.5 653.9" stroke="#24c03c" stroke-width="1.9" />
<path d="M526.5 348.0L574.9 331.7M535.9 384.4L582.9 369.2M546.0 423.2L591.5 409.2M556.6 464.3L600.5 451.5M489.0 202.7L491.8 213.5M491.8 213.5L496.6 232.2M496.6 232.2L502.7 255.9M502.7 255.9L509.9 283.4M509.9 283.4L517.8 314.2M517.8 314.2L526.5 348.0" stroke="#a8c018" stroke-width="1.9" />
<path d="M705.0 371.1L770.8 389.0M714.9 435.9L777.0 448.4M726.0 508.5L784.0 514.9M758.7 274.3L759.6 282.8M759.6 282.8L761.2 297.6M761.2 297.6L763.1 316.3M763.1 316.3L765.4 338.0M765.4 338.0L768.0 362.3M768.0 362.3L770.8 389.0M770.8 389.0L773.8 417.7" stroke="#c09c18" stroke-width="1.9" />
<path d="M972.4 424.6L1040.3 433.2M900.4 523.3L958.7 523.3M965.9 471.2L962.4 496.6M1061.4 351.0L1059.8 357.1M1059.8 357.1L1057.1 367.7M1057.1 367.7L1053.7 381.1M1053.7 381.1L1049.7 396.7" stroke="#c03c18" stroke-width="1.9" />
<path d="M1196.0 743.0L1222.5 815.1M1176.7 768.1L1166.1 781.8M1166.1 781.8L1155.0 796.2M1263.8 771.9L1260.7 775.2M1260.7 775.2L1255.4 780.7M1255.4 780.7L1248.7 787.7M1248.7 787.7L1240.9 795.9M1240.9 795.9L1232.1 805.1" stroke="#c00c6c" stroke-width="1.9" />
<path d="M1250.0 886.9L1278.0 958.4M1226.1 906.7L1213.0 917.6M1319.3 931.5L1310.8 937.0" stroke="#c00c9c" stroke-width="1.9" />
<path d="M1239.8 1469.2L1219.3 1519.5" stroke="#5418cc" stroke-width="1.9" />
<path d="M1219.3 1519.5L1139.7 1488.5M1212.8 1516.9L1135.2 1485.8M1205.9 1514.1L1130.3 1483.0M1198.7 1511.1L1125.2 1480.0M1191.0 1508.0L1119.8 1476.8" stroke="#1830cc" stroke-width="1.9" />
<path d="M682.0 1270.5L609.9 1227.9M687.3 1272.4L617.0 1230.6M693.0 1274.5L624.4 1233.6M698.9 1276.6L632.2 1236.6M657.0 1261.4L658.5 1261.9M658.5 1261.9L661.1 1262.9M661.1 1262.9L664.3 1264.0M664.3 1264.0L668.1 1265.4M668.1 1265.4L672.3 1267.0M672.3 1267.0L677.0 1268.6M677.0 1268.6L682.0 1270.5M682.0 1270.5L687.3 1272.4M687.3 1272.4L693.0 1274.5" stroke="#1890cc" stroke-width="1.9" />
<path d="M170.1 565.3L161.3 511.1M207.2 574.0L250.8 560.2M129.9 514.8L149.2 539.1" stroke="#24c030" stroke-width="1.9" />
<path d="M591.5 409.2L653.1 422.9M610.0 496.0L668.0 502.2M543.0 182.0L545.4 193.1M545.4 193.1L549.5 212.4M549.5 212.4L554.7 236.8M554.7 236.8L560.7 265.2" stroke="#c0c018" stroke-width="1.9" />
<path d="M1222.9 1465.8L1205.9 1514.1M1243.1 1529.2L1239.8 1527.9M1239.8 1527.9L1235.6 1526.2M1235.6 1526.2L1230.7 1524.2" stroke="#4824cc" stroke-width="1.9" />
<path d="M905.5 1384.4L831.1 1350.4M905.9 1383.6L833.3 1350.4M906.4 1382.7L835.7 1350.4M903.2 1388.9L903.3 1388.7M903.3 1388.7L903.5 1388.3M903.5 1388.3L903.7 1387.8M903.7 1387.8L904.0 1387.3M904.0 1387.3L904.4 1386.6M904.4 1386.6L904.7 1385.9M904.7 1385.9L905.1 1385.2M905.1 1385.2L905.5 1384.4M905.5 1384.4L905.9 1383.6M905.9 1383.6L906.4 1382.7" stroke="#1860cc" stroke-width="1.9" />
<path d="M1204.0 1462.0L1191.0 1508.0M1230.7 1524.2L1225.2 1521.9M1225.2 1521.9L1219.3 1519.5M1219.3 1519.5L1212.8 1516.9" stroke="#3c24cc" stroke-width="1.9" />
<path d="M901.4 494.7L900.4 523.3M980.3 367.6L978.0 384.7" stroke="#c06018" stroke-width="1.9" />
<path d="M984.0 341.4L982.3 353.0M982.3 353.0L980.3 367.6" stroke="#c0600c" stroke-width="1.9" />
<path d="M1213.7 1464.0L1204.0 1462.0" stroke="#6018cc" stroke-width="1.9" />
<path d="M1245.0 1530.0L1243.1 1529.2" stroke="#4818cc" stroke-width="1.9" />
<path d="M1212.8 1516.9L1205.9 1514.1" stroke="#3024cc" stroke-width="1.9" />
<path d="M242.2 615.2L283.3 602.7M283.3 602.7L324.4 590.3M250.5 660.2L242.2 615.2M265.3 631.3L304.5 619.5M304.5 619.5L343.7 607.6M298.3 654.5L334.8 643.4M334.8 643.4L371.3 632.4M373.1 673.8L406.2 663.8M406.2 663.8L439.3 653.7M447.9 701.2L477.0 692.4M477.0 692.4L506.0 683.7M544.6 729.6L568.9 722.3M232.0 608.0L242.2 615.2M242.2 615.2L265.3 631.3M265.3 631.3L298.3 654.5M273.9 595.3L283.3 602.7M283.3 602.7L304.5 619.5M304.5 619.5L334.8 643.4M334.8 643.4L373.1 673.8M343.7 607.6L371.3 632.4M371.3 632.4L406.2 663.8M406.2 663.8L447.9 701.2M439.3 653.7L477.0 692.4M477.0 692.4L520.3 736.9M506.0 683.7L544.6 729.6M568.9 722.3L607.1 775.5M593.3 715.0L626.2 769.8" stroke="#189024" stroke-width="1.9" />
<path d="M324.4 590.3L365.5 577.8M365.5 577.8L406.6 565.4M343.7 607.6L382.9 595.7M382.9 595.7L422.1 583.9M371.3 632.4L407.8 621.3M407.8 621.3L444.3 610.3M439.3 653.7L472.4 643.7M472.4 643.7L505.6 633.8M506.0 683.7L535.0 674.9M568.9 722.3L593.3 715.0M645.3 764.2L664.4 758.6M315.8 582.6L324.4 590.3M324.4 590.3L343.7 607.6M357.8 569.9L365.5 577.8M365.5 577.8L382.9 595.7M382.9 595.7L407.8 621.3M407.8 621.3L439.3 653.7M422.1 583.9L444.3 610.3M444.3 610.3L472.4 643.7M472.4 643.7L506.0 683.7M535.0 674.9L568.9 722.3M617.7 707.8L645.3 764.2" stroke="#189018" stroke-width="1.9" />
<path d="M406.6 565.4L447.7 553.1M422.1 583.9L461.3 572.1M444.3 610.3L480.8 599.3M535.0 674.9L564.1 666.3M593.3 715.0L617.7 707.8M399.7 557.2L406.6 565.4M406.6 565.4L422.1 583.9M480.8 599.3L505.6 633.8M505.6 633.8L535.0 674.9M564.1 666.3L593.3 715.0" stroke="#249018" stroke-width="1.9" />
<path d="M447.7 553.1L488.9 540.8M461.3 572.1L500.6 560.4M538.7 623.9L571.8 614.1M617.7 707.8L642.1 700.7M488.9 540.8L500.6 560.4M500.6 560.4L517.4 588.4M517.4 588.4L538.7 623.9M593.2 657.7L617.7 707.8M642.1 700.7L664.4 758.6" stroke="#3c9018" stroke-width="1.9" />
<path d="M488.9 540.8L530.0 528.6M500.6 560.4L539.9 548.7M517.4 588.4L554.0 577.6M593.2 657.7L622.3 649.2M483.6 532.1L488.9 540.8M554.0 577.6L571.8 614.1M571.8 614.1L593.2 657.7M710.0 756.2L720.7 821.0" stroke="#489018" stroke-width="1.9" />
<path d="M530.0 528.6L571.3 516.7M539.9 548.7L579.2 537.4M554.0 577.6L590.6 567.0M683.6 753.4L710.0 756.2M590.6 567.0L605.1 604.5M605.1 604.5L622.3 649.2M666.6 694.1L683.6 753.4" stroke="#609018" stroke-width="1.9" />
<path d="M571.3 516.7L612.7 505.4M579.2 537.4L618.8 526.6M618.8 526.6L627.4 557.0M627.4 557.0L638.4 595.4M638.4 595.4L651.6 641.3" stroke="#789018" stroke-width="1.9" />
<path d="M612.7 505.4L669.5 511.5M618.8 526.6L673.0 532.4M627.4 557.0L678.0 562.4" stroke="#909018" stroke-width="1.9" />
<path d="M669.5 511.5L726.4 517.7M673.0 532.4L727.3 538.3M678.0 562.4L728.5 567.9M684.2 600.3L730.0 605.3M668.0 502.2L669.5 511.5M669.5 511.5L673.0 532.4M673.0 532.4L678.0 562.4M678.0 562.4L684.2 600.3M684.2 600.3L691.7 645.6M691.7 645.6L700.3 697.7M700.3 697.7L710.0 756.2" stroke="#90840c" stroke-width="1.9" />
<path d="M726.4 517.7L783.2 523.9M727.3 538.3L781.5 544.2M728.5 567.9L779.0 573.4M730.0 605.3L775.8 610.3M731.9 649.9L772.0 654.3M734.0 701.3L736.4 759.1M784.0 514.9L783.2 523.9M783.2 523.9L781.5 544.2M781.5 544.2L779.0 573.4M779.0 573.4L775.8 610.3" stroke="#906c0c" stroke-width="1.9" />
<path d="M783.2 523.9L840.2 529.5M781.5 544.2L835.8 549.6M779.0 573.4L829.6 578.4M734.0 701.3L767.7 705.0M775.8 610.3L772.0 654.3" stroke="#90600c" stroke-width="1.9" />
<path d="M840.2 529.5L897.3 532.2M775.8 610.3L821.6 614.8M772.0 654.3L812.2 658.3M772.0 654.3L767.7 705.0M842.1 520.6L840.2 529.5M840.2 529.5L835.8 549.6M835.8 549.6L829.6 578.4M829.6 578.4L821.6 614.8" stroke="#90540c" stroke-width="1.9" />
<path d="M897.3 532.2L954.4 532.2M767.7 705.0L801.3 708.3M767.7 705.0L762.7 762.0M812.2 658.3L801.3 708.3M890.3 552.1L880.3 580.7M880.3 580.7L867.6 616.9" stroke="#90300c" stroke-width="1.9" />
<path d="M954.4 532.2L1011.6 532.2M944.9 552.2L999.4 552.2M867.6 616.9L913.7 617.0M944.9 552.2L931.1 580.8M931.1 580.8L913.7 617.0" stroke="#901818" stroke-width="1.9" />
<path d="M1011.6 532.2L1068.4 536.8M999.4 552.2L1053.6 556.5M931.1 580.8L981.9 580.8M981.9 580.8L1032.4 584.8M913.7 617.0L959.8 617.0M959.8 617.0L1005.5 620.7M852.5 660.2L892.9 660.2M892.9 660.2L933.3 660.2M801.3 708.3L835.2 709.9M801.3 708.3L789.1 764.6M852.5 660.2L835.2 709.9M913.7 617.0L892.9 660.2M892.9 660.2L869.0 709.9M1017.1 523.3L1011.6 532.2M1011.6 532.2L999.4 552.2M999.4 552.2L981.9 580.8M981.9 580.8L959.8 617.0M959.8 617.0L933.3 660.2M1075.0 528.0L1068.4 536.8M1068.4 536.8L1053.6 556.5M1053.6 556.5L1032.4 584.8" stroke="#900c18" stroke-width="1.9" />
<path d="M1068.4 536.8L1086.3 603.0M1086.3 603.0L1104.4 669.2M1053.6 556.5L1070.7 619.7M1032.4 584.8L1048.3 643.7M1005.5 620.7L1019.9 674.0M933.3 660.2L973.4 663.4M973.4 663.4L986.0 710.2M835.2 709.9L869.0 709.9M869.0 709.9L902.9 709.9M902.9 709.9L936.5 712.6M762.7 762.0L789.1 764.6M835.2 709.9L815.6 765.8M869.0 709.9L842.2 765.8M933.3 660.2L902.9 709.9M1032.4 584.8L1005.5 620.7M1005.5 620.7L973.4 663.4M973.4 663.4L936.5 712.6M1093.2 595.6L1086.3 603.0M1086.3 603.0L1070.7 619.7M1070.7 619.7L1048.3 643.7M1048.3 643.7L1019.9 674.0" stroke="#900c24" stroke-width="1.9" />
<path d="M1104.4 669.2L1124.7 734.7M1087.9 682.9L1107.3 745.4M1064.4 702.5L1082.4 760.7M986.0 710.2L998.8 756.9M815.6 765.8L842.2 765.8M842.2 765.8L868.7 765.8M868.7 765.8L895.0 767.9M736.4 759.1L739.0 822.9M986.0 710.2L947.1 751.9M1064.4 702.5L1034.5 727.3M1034.5 727.3L998.8 756.9M1132.5 729.9L1124.7 734.7M1124.7 734.7L1107.3 745.4" stroke="#900c3c" stroke-width="1.9" />
<path d="M1124.7 734.7L1146.8 799.6M1107.3 745.4L1128.4 807.3M1034.5 727.3L1050.9 780.1M998.8 756.9L1013.2 803.2M947.1 751.9L957.8 791.0M895.0 767.9L903.3 798.7M947.1 751.9L903.3 798.7M998.8 756.9L957.8 791.0M1107.3 745.4L1082.4 760.7M1082.4 760.7L1050.9 780.1" stroke="#900c48" stroke-width="1.9" />
<path d="M1146.8 799.6L1168.7 864.6M1128.4 807.3L1149.3 869.4M1102.0 818.4L1121.5 876.1M1013.2 803.2L1028.8 849.1M957.8 791.0L969.9 829.8M903.3 798.7L911.7 829.4M957.8 791.0L911.7 829.4M1013.2 803.2L969.9 829.8M1102.0 818.4L1068.6 832.4M1068.6 832.4L1028.8 849.1M1177.3 862.5L1168.7 864.6" stroke="#900c60" stroke-width="1.9" />
<path d="M1168.7 864.6L1190.2 929.8M1149.3 869.4L1169.8 931.5M1068.6 832.4L1086.3 884.7M1028.8 849.1L1044.3 895.0M969.9 829.8L983.0 868.3M903.3 798.7L854.9 850.4M969.9 829.8L921.2 859.8M1028.8 849.1L983.0 868.3M1168.7 864.6L1149.3 869.4M1149.3 869.4L1121.5 876.1M1121.5 876.1L1086.3 884.7" stroke="#900c6c" stroke-width="1.9" />
<path d="M1190.2 929.8L1211.8 994.9M1121.5 876.1L1140.6 934.0M1086.3 884.7L1103.6 937.2M983.0 868.3L995.9 906.8M911.7 829.4L921.2 859.8M812.5 827.6L830.9 827.6M830.9 827.6L849.2 829.1M849.2 829.1L854.9 850.4M911.7 829.4L860.8 871.7M1086.3 884.7L1044.3 895.0M1199.3 929.0L1190.2 929.8M1190.2 929.8L1169.8 931.5M1169.8 931.5L1140.6 934.0" stroke="#900c78" stroke-width="1.9" />
<path d="M1211.8 994.9L1233.5 1059.9M1190.4 993.7L1211.1 1055.7M1159.8 991.9L1179.1 1049.7M1059.5 941.0L1074.7 987.0M995.9 906.8L1008.7 945.4M931.4 889.9L941.6 920.0M775.7 826.7L794.0 827.6M854.9 850.4L860.8 871.7M921.2 859.8L867.3 892.8M995.9 906.8L941.6 920.0M1059.5 941.0L1008.7 945.4M1159.8 991.9L1121.0 989.7M1121.0 989.7L1074.7 987.0M1243.4 1061.8L1233.5 1059.9M1233.5 1059.9L1211.1 1055.7" stroke="#900c90" stroke-width="1.9" />
<path d="M1233.5 1059.9L1257.2 1124.3M1257.2 1124.3L1286.0 1186.6M1211.1 1055.7L1233.7 1117.2M1233.7 1117.2L1261.2 1176.5M1179.1 1049.7L1200.1 1106.9M1200.1 1106.9L1225.7 1162.2M1121.0 989.7L1138.5 1042.1M1138.5 1042.1L1157.5 1093.9M1074.7 987.0L1090.0 1032.9M1008.7 945.4L1021.4 983.9M1021.4 983.9L1034.3 1022.4M941.6 920.0L951.6 950.3M757.3 824.9L775.7 826.7M860.8 871.7L867.3 892.8M849.2 829.1L799.1 895.8M931.4 889.9L874.4 913.8M1008.7 945.4L951.6 950.3M1074.7 987.0L1021.4 983.9M1211.1 1055.7L1179.1 1049.7M1179.1 1049.7L1138.5 1042.1M1138.5 1042.1L1090.0 1032.9M1090.0 1032.9L1034.3 1022.4M1267.6 1127.5L1257.2 1124.3M1257.2 1124.3L1233.7 1117.2M1233.7 1117.2L1200.1 1106.9M1200.1 1106.9L1157.5 1093.9M1297.0 1191.0L1286.0 1186.6" stroke="#840c90" stroke-width="1.9" />
<path d="M1286.0 1186.6L1268.3 1229.9M1268.3 1229.9L1251.5 1273.6M1261.2 1176.5L1244.3 1217.9M1244.3 1217.9L1228.3 1259.6M1225.7 1162.2L1210.0 1200.7M1157.5 1093.9L1180.7 1144.0M1180.7 1144.0L1166.5 1178.9M1090.0 1032.9L1106.7 1078.4M1106.7 1078.4L1127.1 1122.4M1127.1 1122.4L1114.6 1153.0M1034.3 1022.4L1048.3 1060.6M1048.3 1060.6L1065.4 1097.4M951.6 950.3L961.5 980.5M961.5 980.5L971.6 1010.7M867.3 892.8L874.4 913.8M874.4 913.8L881.5 934.7M830.9 827.6L789.6 895.1M854.9 850.4L802.1 906.9M941.6 920.0L881.5 934.7M951.6 950.3L888.4 955.7M1021.4 983.9L961.5 980.5M1034.3 1022.4L971.6 1010.7M1157.5 1093.9L1106.7 1078.4M1106.7 1078.4L1048.3 1060.6M1048.3 1060.6L982.6 1040.5M1286.0 1186.6L1261.2 1176.5M1261.2 1176.5L1225.7 1162.2M1225.7 1162.2L1180.7 1144.0M1180.7 1144.0L1127.1 1122.4M1127.1 1122.4L1065.4 1097.4M1278.9 1235.2L1268.3 1229.9M1268.3 1229.9L1244.3 1217.9M1244.3 1217.9L1210.0 1200.7M1210.0 1200.7L1166.5 1178.9" stroke="#780c90" stroke-width="1.9" />
<path d="M1251.5 1273.6L1236.2 1317.9M1228.3 1259.6L1213.7 1301.9M1210.0 1200.7L1195.1 1239.6M1166.5 1178.9L1153.0 1214.2M1114.6 1153.0L1102.8 1183.9M1065.4 1097.4L1054.9 1123.1M971.6 1010.7L982.6 1040.5M982.6 1040.5L996.0 1069.4M881.5 934.7L888.4 955.7M812.5 827.6L780.0 895.1M860.8 871.7L805.1 918.0M961.5 980.5L895.4 976.7M971.6 1010.7L902.4 997.6M1065.4 1097.4L996.0 1069.4M1166.5 1178.9L1114.6 1153.0M1114.6 1153.0L1054.9 1123.1M1261.8 1279.9L1251.5 1273.6M1251.5 1273.6L1228.3 1259.6M1228.3 1259.6L1195.1 1239.6M1195.1 1239.6L1153.0 1214.2" stroke="#6c0c90" stroke-width="1.9" />
<path d="M1236.2 1317.9L1221.8 1362.5M1213.7 1301.9L1200.0 1344.4M1195.1 1239.6L1181.5 1278.9M1181.5 1278.9L1168.7 1318.5M1153.0 1214.2L1140.6 1249.8M1102.8 1183.9L1091.9 1215.1M1054.9 1123.1L1045.0 1149.0M996.0 1069.4L987.7 1089.5M739.0 822.9L757.3 824.9M888.4 955.7L895.4 976.7M895.4 976.7L902.4 997.6M794.0 827.6L770.5 895.1M867.3 892.8L808.5 929.0M874.4 913.8L812.2 939.8M982.6 1040.5L910.0 1018.4M996.0 1069.4L919.3 1038.4M1054.9 1123.1L987.7 1089.5M1153.0 1214.2L1102.8 1183.9M1102.8 1183.9L1045.0 1149.0M1246.2 1325.0L1236.2 1317.9M1236.2 1317.9L1213.7 1301.9M1213.7 1301.9L1181.5 1278.9M1181.5 1278.9L1140.6 1249.8M1140.6 1249.8L1091.9 1215.1" stroke="#600c90" stroke-width="1.9" />
<path d="M1221.8 1362.5L1208.0 1407.2M1200.0 1344.4L1186.8 1387.1M1168.7 1318.5L1156.4 1358.3M1140.6 1249.8L1129.1 1285.7M1091.9 1215.1L1081.8 1246.6M1045.0 1149.0L1035.9 1175.2M987.7 1089.5L980.0 1109.8M902.4 997.6L910.0 1018.4M910.0 1018.4L919.3 1038.4M881.5 934.7L815.9 950.7M888.4 955.7L819.5 961.6M987.7 1089.5L913.5 1052.4M1045.0 1149.0L980.0 1109.8M1091.9 1215.1L1035.9 1175.2M1231.5 1370.5L1221.8 1362.5M1221.8 1362.5L1200.0 1344.4M1200.0 1344.4L1168.7 1318.5M1168.7 1318.5L1129.1 1285.7M1129.1 1285.7L1081.8 1246.6M1217.4 1416.1L1208.0 1407.2" stroke="#540c90" stroke-width="1.9" />
<path d="M1208.0 1407.2L1194.8 1452.2M1186.8 1387.1L1174.2 1430.0M1156.4 1358.3L1144.7 1398.2M1129.1 1285.7L1117.9 1321.8M1081.8 1246.6L1072.0 1278.2M1035.9 1175.2L1027.4 1201.6M980.0 1109.8L972.9 1130.3M919.3 1038.4L913.5 1052.4M789.6 895.1L799.1 895.8M799.1 895.8L802.1 906.9M895.4 976.7L823.1 972.5M902.4 997.6L826.7 983.4M980.0 1109.8L908.2 1066.4M1035.9 1175.2L972.9 1130.3M1081.8 1246.6L1027.4 1201.6M1208.0 1407.2L1186.8 1387.1M1186.8 1387.1L1156.4 1358.3M1156.4 1358.3L1117.9 1321.8M1117.9 1321.8L1072.0 1278.2" stroke="#480c90" stroke-width="1.9" />
<path d="M1194.8 1452.2L1182.1 1497.2M1072.0 1278.2L1062.7 1310.0M802.1 906.9L805.1 918.0M919.3 1038.4L835.5 1004.6M972.9 1130.3L903.2 1080.7M1144.7 1398.2L1107.3 1358.0" stroke="#301890" stroke-width="1.9" />
<path d="M1182.1 1497.2L1112.3 1466.7M1162.1 1473.0L1095.5 1443.8M1133.4 1438.3L1071.4 1411.1M1107.3 1358.0L1097.1 1394.3M1062.7 1310.0L1053.7 1341.8M1019.2 1228.1L1011.4 1254.7M1011.4 1254.7L1003.8 1281.4M966.2 1151.0L959.8 1171.8M959.8 1171.8L953.7 1192.6M903.2 1080.7L898.6 1095.1M780.0 895.1L789.6 895.1M808.5 929.0L812.2 939.8M812.2 939.8L815.9 950.7M815.9 950.7L819.5 961.6M913.5 1052.4L832.6 1011.8M966.2 1151.0L898.6 1095.1M1019.2 1228.1L959.8 1171.8M1062.7 1310.0L1011.4 1254.7M1011.4 1254.7L953.7 1192.6M1191.0 1508.0L1182.1 1497.2M1182.1 1497.2L1162.1 1473.0M1162.1 1473.0L1133.4 1438.3M1133.4 1438.3L1097.1 1394.3M1097.1 1394.3L1053.7 1341.8" stroke="#18249c" stroke-width="1.9" />
<path d="M1112.3 1466.7L1042.5 1436.1M1095.5 1443.8L1028.9 1414.6M1071.4 1411.1L1009.4 1383.9M1097.1 1394.3L1040.8 1369.7M1040.8 1369.7L984.6 1345.0M1053.7 1341.8L1004.4 1320.2M1004.4 1320.2L955.1 1298.6M1003.8 1281.4L962.5 1263.3M953.7 1192.6L947.8 1213.5M947.8 1213.5L915.4 1199.3M898.6 1095.1L894.1 1109.5M894.1 1109.5L889.9 1124.0M889.9 1124.0L885.8 1138.5M770.5 895.1L780.0 895.1M819.5 961.6L823.1 972.5M823.1 972.5L826.7 983.4M826.7 983.4L830.7 994.2M830.7 994.2L835.5 1004.6M835.5 1004.6L832.6 1011.8M832.6 1011.8L829.8 1019.1M757.3 824.9L751.4 893.7M908.2 1066.4L829.8 1019.1M903.2 1080.7L827.2 1026.5M898.6 1095.1L824.8 1034.0M959.8 1171.8L894.1 1109.5M953.7 1192.6L889.9 1124.0M1053.7 1341.8L1003.8 1281.4M1003.8 1281.4L947.8 1213.5M947.8 1213.5L885.8 1138.5M1119.8 1476.8L1112.3 1466.7M1112.3 1466.7L1095.5 1443.8M1095.5 1443.8L1071.4 1411.1M1071.4 1411.1L1040.8 1369.7M1040.8 1369.7L1004.4 1320.2M1004.4 1320.2L962.5 1263.3M962.5 1263.3L915.4 1199.3M1048.6 1445.6L1042.5 1436.1M1042.5 1436.1L1028.9 1414.6M1028.9 1414.6L1009.4 1383.9" stroke="#18309c" stroke-width="1.9" />
<path d="M1042.5 1436.1L972.8 1405.3M1028.9 1414.6L962.4 1385.3M1009.4 1383.9L947.4 1356.6M984.6 1345.0L928.5 1320.3M955.1 1298.6L905.9 1276.9M962.5 1263.3L921.2 1245.2M921.2 1245.2L879.9 1227.0M915.4 1199.3L883.0 1185.2M883.0 1185.2L850.7 1170.9M885.8 1138.5L863.3 1128.6M863.3 1128.6L840.8 1118.8M760.9 894.6L770.5 895.1M829.8 1019.1L827.2 1026.5M827.2 1026.5L824.8 1034.0M824.8 1034.0L822.5 1041.5M822.5 1041.5L820.3 1049.0M820.3 1049.0L818.1 1056.6M799.1 895.8L745.0 968.0M802.1 906.9L745.0 968.0M894.1 1109.5L822.5 1041.5M889.9 1124.0L820.3 1049.0M885.8 1138.5L818.1 1056.6M915.4 1199.3L863.3 1128.6M863.3 1128.6L806.5 1051.4M1009.4 1383.9L984.6 1345.0M984.6 1345.0L955.1 1298.6M955.1 1298.6L921.2 1245.2M921.2 1245.2L883.0 1185.2M883.0 1185.2L840.8 1118.8M977.4 1414.2L972.8 1405.3M972.8 1405.3L962.4 1385.3M962.4 1385.3L947.4 1356.6M947.4 1356.6L928.5 1320.3M928.5 1320.3L905.9 1276.9M905.9 1276.9L879.9 1227.0" stroke="#183c9c" stroke-width="1.9" />
<path d="M972.8 1405.3L903.2 1374.4M903.2 1374.4L833.9 1342.7M962.4 1385.3L895.9 1355.8M895.9 1355.8L829.8 1325.6M947.4 1356.6L885.5 1329.1M885.5 1329.1L824.0 1301.0M928.5 1320.3L872.4 1295.4M872.4 1295.4L816.6 1269.8M905.9 1276.9L856.7 1255.1M856.7 1255.1L807.8 1232.7M879.9 1227.0L838.7 1208.7M838.7 1208.7L797.6 1189.9M850.7 1170.9L818.4 1156.5M818.4 1156.5L786.2 1141.8M720.7 821.0L739.0 822.9M840.8 1118.8L818.4 1108.9M818.4 1108.9L795.9 1098.9M741.9 892.7L751.4 893.7M751.4 893.7L760.9 894.6M818.1 1056.6L806.5 1051.4M806.5 1051.4L794.8 1046.3M794.8 1046.3L783.1 1041.2M783.1 1041.2L771.5 1036.0M739.0 822.9L741.9 892.7M760.9 894.6L745.0 968.0M770.5 895.1L745.0 968.0M780.0 895.1L745.0 968.0M789.6 895.1L745.0 968.0M805.1 918.0L745.0 968.0M808.5 929.0L745.0 968.0M812.2 939.8L745.0 968.0M815.9 950.7L745.0 968.0M819.5 961.6L745.0 968.0M823.1 972.5L745.0 968.0M826.7 983.4L745.0 968.0M830.7 994.2L745.0 968.0M835.5 1004.6L745.0 968.0M832.6 1011.8L745.0 968.0M829.8 1019.1L745.0 968.0M827.2 1026.5L745.0 968.0M824.8 1034.0L745.0 968.0M822.5 1041.5L745.0 968.0M820.3 1049.0L745.0 968.0M818.1 1056.6L745.0 968.0M806.5 1051.4L745.0 968.0M840.8 1118.8L794.8 1046.3M794.8 1046.3L745.0 968.0M879.9 1227.0L850.7 1170.9M850.7 1170.9L818.4 1108.9M818.4 1108.9L783.1 1041.2M906.4 1382.7L903.2 1374.4M903.2 1374.4L895.9 1355.8M895.9 1355.8L885.5 1329.1M885.5 1329.1L872.4 1295.4M872.4 1295.4L856.7 1255.1M856.7 1255.1L838.7 1208.7M838.7 1208.7L818.4 1156.5M818.4 1156.5L795.9 1098.9M795.9 1098.9L771.5 1036.0" stroke="#18489c" stroke-width="1.9" />
<path d="M833.9 1342.7L765.8 1308.5M829.8 1325.6L764.9 1292.9M824.0 1301.0L763.5 1270.5M816.6 1269.8L761.8 1242.2M807.8 1232.7L759.7 1208.5M797.6 1189.9L757.3 1169.6M786.2 1141.8L754.7 1125.9M795.9 1098.9L773.6 1088.7M773.6 1088.7L751.7 1077.7M732.4 891.6L741.9 892.7M771.5 1036.0L759.9 1030.7M759.9 1030.7L748.5 1025.0M748.5 1025.0L737.4 1018.6M722.9 890.6L745.0 968.0M720.7 821.0L732.4 891.6M732.4 891.6L745.0 968.0M741.9 892.7L745.0 968.0M751.4 893.7L745.0 968.0M783.1 1041.2L745.0 968.0M771.5 1036.0L745.0 968.0M835.7 1350.4L833.9 1342.7M833.9 1342.7L829.8 1325.6M829.8 1325.6L824.0 1301.0M824.0 1301.0L816.6 1269.8M816.6 1269.8L807.8 1232.7M807.8 1232.7L797.6 1189.9M797.6 1189.9L786.2 1141.8M786.2 1141.8L773.6 1088.7M773.6 1088.7L759.9 1030.7M759.9 1030.7L745.0 968.0M766.3 1315.4L765.8 1308.5M765.8 1308.5L764.9 1292.9M764.9 1292.9L763.5 1270.5M763.5 1270.5L761.8 1242.2M761.8 1242.2L759.7 1208.5M759.7 1208.5L757.3 1169.6M757.3 1169.6L754.7 1125.9M754.7 1125.9L751.7 1077.7M751.7 1077.7L748.5 1025.0M748.5 1025.0L745.0 968.0M737.4 1018.6L745.0 968.0" stroke="#18549c" stroke-width="1.9" />
<path d="M765.8 1308.5L699.8 1270.5M764.9 1292.9L701.9 1256.6M763.5 1270.5L704.8 1236.8M761.8 1242.2L708.6 1211.6M759.7 1208.5L713.1 1181.6M757.3 1169.6L718.2 1147.1M754.7 1125.9L724.0 1108.3M724.0 1108.3L693.7 1090.1M751.7 1077.7L730.4 1065.4M730.4 1065.4L709.4 1052.8M715.9 892.5L722.9 890.6M722.9 890.6L732.4 891.6M737.4 1018.6L726.5 1012.1M726.5 1012.1L715.6 1005.5M715.6 1005.5L705.1 998.2M681.5 902.7L745.0 968.0M688.4 900.6L745.0 968.0M695.3 898.6L745.0 968.0M702.1 896.5L745.0 968.0M709.0 894.5L745.0 968.0M715.9 892.5L745.0 968.0M698.9 1276.6L699.8 1270.5M699.8 1270.5L701.9 1256.6M701.9 1256.6L704.8 1236.8M704.8 1236.8L708.6 1211.6M708.6 1211.6L713.1 1181.6M713.1 1181.6L718.2 1147.1M718.2 1147.1L724.0 1108.3M724.0 1108.3L730.4 1065.4M730.4 1065.4L737.4 1018.6M709.4 1052.8L726.5 1012.1M726.5 1012.1L745.0 968.0M715.6 1005.5L745.0 968.0M705.1 998.2L745.0 968.0M695.2 990.3L745.0 968.0M687.3 980.3L745.0 968.0M683.5 973.6L745.0 968.0M680.0 966.8L745.0 968.0M676.7 959.9L745.0 968.0" stroke="#18609c" stroke-width="1.9" />
<path d="M699.8 1270.5L634.4 1231.3M701.9 1256.6L639.5 1219.2M704.8 1236.8L646.8 1202.0M708.6 1211.6L656.0 1180.1M713.1 1181.6L666.9 1154.0M718.2 1147.1L679.5 1123.9M679.5 1123.9L640.9 1100.5M693.7 1090.1L663.5 1071.8M709.4 1052.8L688.4 1040.1M688.4 1040.1L668.2 1026.2M695.3 898.6L702.1 896.5M702.1 896.5L709.0 894.5M709.0 894.5L715.9 892.5M705.1 998.2L695.2 990.3M695.2 990.3L687.3 980.3M687.3 980.3L683.5 973.6M660.9 909.0L745.0 968.0M667.7 906.9L745.0 968.0M674.6 904.8L745.0 968.0M702.4 819.0L722.9 890.6M632.2 1236.6L634.4 1231.3M634.4 1231.3L639.5 1219.2M639.5 1219.2L646.8 1202.0M646.8 1202.0L656.0 1180.1M656.0 1180.1L666.9 1154.0M666.9 1154.0L679.5 1123.9M679.5 1123.9L693.7 1090.1M693.7 1090.1L709.4 1052.8M663.5 1071.8L688.4 1040.1M688.4 1040.1L715.6 1005.5M668.2 1026.2L705.1 998.2M673.5 953.0L745.0 968.0M670.5 945.9L745.0 968.0M667.9 938.7L745.0 968.0M665.7 931.4L745.0 968.0M663.8 924.0L745.0 968.0M662.3 916.5L745.0 968.0" stroke="#186c9c" stroke-width="1.9" />
<path d="M634.4 1231.3L569.3 1191.8M639.5 1219.2L577.3 1181.6M646.8 1202.0L588.9 1166.9M656.0 1180.1L603.5 1148.3M666.9 1154.0L620.9 1126.1M620.9 1126.1L576.5 1095.7M640.9 1100.5L603.7 1075.1M663.5 1071.8L634.3 1051.9M702.4 819.0L720.7 821.0M668.2 1026.2L649.1 1010.8M649.1 1010.8L633.9 991.7M674.6 904.8L681.5 902.7M681.5 902.7L688.4 900.6M688.4 900.6L695.3 898.6M683.5 973.6L680.0 966.8M680.0 966.8L676.7 959.9M676.7 959.9L673.5 953.0M673.5 953.0L670.5 945.9M670.5 945.9L667.9 938.7M667.9 938.7L665.7 931.4M689.0 822.6L715.9 892.5M565.7 1196.4L569.3 1191.8M569.3 1191.8L577.3 1181.6M577.3 1181.6L588.9 1166.9M588.9 1166.9L603.5 1148.3M603.5 1148.3L620.9 1126.1M620.9 1126.1L640.9 1100.5M640.9 1100.5L663.5 1071.8M603.7 1075.1L634.3 1051.9M634.3 1051.9L668.2 1026.2M649.1 1010.8L695.2 990.3M633.9 991.7L687.3 980.3M626.6 978.9L683.5 973.6" stroke="#18789c" stroke-width="1.9" />
<path d="M569.3 1191.8L506.4 1148.8M577.3 1181.6L517.3 1140.5M588.9 1166.9L533.0 1128.6M633.9 991.7L626.6 978.9M660.9 909.0L667.7 906.9M667.7 906.9L674.6 904.8M663.8 924.0L662.3 916.5M576.5 1095.7L603.7 1075.1M613.5 952.5L676.7 959.9" stroke="#0c849c" stroke-width="1.9" />
<path d="M506.4 1148.8L447.1 1101.0M517.3 1140.5L460.8 1094.9M533.0 1128.6L480.3 1086.2M552.8 1113.6L505.1 1075.1M576.5 1095.7L534.6 1061.9M603.7 1075.1L568.6 1046.7M568.6 1046.7L540.7 1011.5M606.8 1029.7L585.0 1002.1M585.0 1002.1L574.5 983.6M626.6 978.9L619.8 965.8M619.8 965.8L613.5 952.5M613.5 952.5L607.4 939.0M662.3 916.5L660.9 909.0M649.2 834.3L695.3 898.6M662.5 830.4L702.1 896.5M501.6 1152.5L506.4 1148.8M506.4 1148.8L517.3 1140.5M517.3 1140.5L533.0 1128.6M533.0 1128.6L552.8 1113.6M552.8 1113.6L576.5 1095.7M505.1 1075.1L534.6 1061.9M534.6 1061.9L568.6 1046.7M568.6 1046.7L606.8 1029.7M540.7 1011.5L585.0 1002.1M585.0 1002.1L633.9 991.7M574.5 983.6L626.6 978.9M564.7 964.8L619.8 965.8M607.4 939.0L673.5 953.0M601.7 925.5L670.5 945.9M596.6 911.7L667.9 938.7" stroke="#0c8490" stroke-width="1.9" />
<path d="M447.1 1101.0L400.0 1041.5M460.8 1094.9L415.8 1038.1M480.3 1086.2L438.5 1033.3M505.1 1075.1L467.1 1027.2M467.1 1027.2L449.0 995.1M534.6 1061.9L501.3 1019.9M501.3 1019.9L485.4 991.8M540.7 1011.5L527.4 988.0M527.4 988.0L514.9 963.9M574.5 983.6L564.7 964.8M564.7 964.8L555.6 945.7M555.6 945.7L546.9 926.3M675.8 826.5L689.0 822.6M689.0 822.6L702.4 819.0M607.4 939.0L601.7 925.5M601.7 925.5L596.6 911.7M596.6 911.7L592.3 897.5M583.1 854.4L660.9 909.0M596.3 850.3L667.7 906.9M609.5 846.3L674.6 904.8M622.8 842.3L681.5 902.7M636.0 838.3L688.4 900.6M441.1 1103.7L447.1 1101.0M447.1 1101.0L460.8 1094.9M460.8 1094.9L480.3 1086.2M480.3 1086.2L505.1 1075.1M400.0 1041.5L415.8 1038.1M415.8 1038.1L438.5 1033.3M438.5 1033.3L467.1 1027.2M467.1 1027.2L501.3 1019.9M501.3 1019.9L540.7 1011.5M449.0 995.1L485.4 991.8M485.4 991.8L527.4 988.0M527.4 988.0L574.5 983.6M514.9 963.9L564.7 964.8M503.2 939.5L555.6 945.7M555.6 945.7L613.5 952.5M546.9 926.3L607.4 939.0M538.6 906.8L601.7 925.5M592.3 897.5L665.7 931.4M588.7 883.3L663.8 924.0M585.7 868.8L662.3 916.5" stroke="#0c9090" stroke-width="1.9" />
<path d="M400.0 1041.5L377.5 1001.7M415.8 1038.1L394.3 1000.2M394.3 1000.2L374.2 961.4M438.5 1033.3L418.4 997.9M418.4 997.9L399.7 961.9M449.0 995.1L432.0 962.4M485.4 991.8L470.6 963.1M470.6 963.1L456.6 934.0M514.9 963.9L503.2 939.5M503.2 939.5L492.1 914.8M546.9 926.3L538.6 906.8M538.6 906.8L531.2 886.9M636.0 838.3L649.2 834.3M649.2 834.3L662.5 830.4M662.5 830.4L675.8 826.5M592.3 897.5L588.7 883.3M588.7 883.3L585.7 868.8M393.0 1043.0L400.0 1041.5M370.0 1002.4L377.5 1001.7M377.5 1001.7L394.3 1000.2M394.3 1000.2L418.4 997.9M418.4 997.9L449.0 995.1M399.7 961.9L432.0 962.4M432.0 962.4L470.6 963.1M470.6 963.1L514.9 963.9M456.6 934.0L503.2 939.5M492.1 914.8L546.9 926.3M531.2 886.9L596.6 911.7M525.1 866.5L592.3 897.5" stroke="#0c9084" stroke-width="1.9" />
<path d="M377.5 1001.7L356.4 961.1M356.4 961.1L336.7 919.8M374.2 961.4L355.4 922.0M399.7 961.9L382.2 925.2M432.0 962.4L416.1 929.2M416.1 929.2L401.0 895.6M456.6 934.0L443.3 904.5M492.1 914.8L481.5 889.8M531.2 886.9L525.1 866.5M583.1 854.4L596.3 850.3M596.3 850.3L609.5 846.3M609.5 846.3L622.8 842.3M622.8 842.3L636.0 838.3M585.7 868.8L583.1 854.4M348.5 960.9L356.4 961.1M356.4 961.1L374.2 961.4M374.2 961.4L399.7 961.9M355.4 922.0L382.2 925.2M382.2 925.2L416.1 929.2M416.1 929.2L456.6 934.0M401.0 895.6L443.3 904.5M443.3 904.5L492.1 914.8M481.5 889.8L538.6 906.8M472.1 864.4L531.2 886.9M519.9 846.0L588.7 883.3" stroke="#0c9078" stroke-width="1.9" />
<path d="M336.7 919.8L317.9 878.1M355.4 922.0L337.5 882.2M382.2 925.2L365.5 888.1M365.5 888.1L349.6 850.7M401.0 895.6L386.6 861.7M430.7 874.8L419.6 844.5M472.1 864.4L464.3 838.5M525.1 866.5L519.9 846.0M519.9 846.0L515.6 825.2M511.8 804.3L583.1 854.4M328.4 918.9L336.7 919.8M309.2 876.3L317.9 878.1M317.9 878.1L337.5 882.2M337.5 882.2L365.5 888.1M365.5 888.1L401.0 895.6M386.6 861.7L430.7 874.8M419.6 844.5L472.1 864.4M464.3 838.5L525.1 866.5M515.6 825.2L585.7 868.8" stroke="#0c846c" stroke-width="1.9" />
<path d="M317.9 878.1L300.0 836.0M337.5 882.2L320.4 842.1M320.4 842.1L305.3 801.1M349.6 850.7L335.6 812.6M386.6 861.7L373.9 827.1M419.6 844.5L410.3 813.5M464.3 838.5L457.7 812.2M515.6 825.2L511.8 804.3M530.8 798.5L596.3 850.3M549.9 792.8L609.5 846.3M568.9 787.0L622.8 842.3M588.0 781.2L636.0 838.3M607.1 775.5L649.2 834.3M626.2 769.8L662.5 830.4M291.0 833.3L300.0 836.0M300.0 836.0L320.4 842.1M320.4 842.1L349.6 850.7M349.6 850.7L386.6 861.7M335.6 812.6L373.9 827.1M373.9 827.1L419.6 844.5M410.3 813.5L464.3 838.5M457.7 812.2L519.9 846.0" stroke="#0c8460" stroke-width="1.9" />
<path d="M300.0 836.0L284.2 793.1M335.6 812.6L323.9 773.7M373.9 827.1L363.3 791.8M410.3 813.5L402.4 782.2M457.7 812.2L452.2 785.7M511.8 804.3L530.8 798.5M530.8 798.5L549.9 792.8M645.3 764.2L675.8 826.5M274.8 789.5L284.2 793.1M284.2 793.1L305.3 801.1M305.3 801.1L335.6 812.6M363.3 791.8L410.3 813.5M402.4 782.2L457.7 812.2M452.2 785.7L515.6 825.2" stroke="#0c8454" stroke-width="1.9" />
<path d="M284.2 793.1L271.1 749.3M305.3 801.1L292.8 759.3M549.9 792.8L568.9 787.0M447.3 759.1L511.8 804.3M323.9 773.7L363.3 791.8" stroke="#0c9054" stroke-width="1.9" />
<path d="M271.1 749.3L259.9 704.9M292.8 759.3L282.1 717.0M323.9 773.7L313.9 734.3M363.3 791.8L354.3 756.1M354.3 756.1L346.7 720.1M402.4 782.2L395.8 750.6M447.3 759.1L471.6 751.7M452.2 785.7L447.3 759.1M568.9 787.0L588.0 781.2M588.0 781.2L607.1 775.5M471.6 751.7L530.8 798.5M495.9 744.3L549.9 792.8M664.4 758.6L689.0 822.6M261.4 744.8L271.1 749.3M271.1 749.3L292.8 759.3M292.8 759.3L323.9 773.7M282.1 717.0L313.9 734.3M313.9 734.3L354.3 756.1M354.3 756.1L402.4 782.2M395.8 750.6L452.2 785.7" stroke="#0c9048" stroke-width="1.9" />
<path d="M259.9 704.9L250.5 660.2M282.1 717.0L273.2 674.3M346.7 720.1L340.0 683.8M418.9 710.0L471.6 751.7M305.6 694.5L346.7 720.1" stroke="#18903c" stroke-width="1.9" />
<path d="M835.8 549.6L890.3 552.1M829.6 578.4L880.3 580.7M821.6 614.8L812.2 658.3" stroke="#90480c" stroke-width="1.9" />
<path d="M890.3 552.1L944.9 552.2M880.3 580.7L931.1 580.8M812.2 658.3L852.5 660.2M736.4 759.1L762.7 762.0M867.6 616.9L852.5 660.2M958.7 523.3L954.4 532.2" stroke="#90240c" stroke-width="1.9" />
<path d="M1070.7 619.7L1087.9 682.9M1048.3 643.7L1064.4 702.5M1019.9 674.0L1034.5 727.3M936.5 712.6L947.1 751.9M789.1 764.6L815.6 765.8M902.9 709.9L868.7 765.8M936.5 712.6L895.0 767.9M1019.9 674.0L986.0 710.2M1111.7 663.1L1104.4 669.2M1104.4 669.2L1087.9 682.9M1087.9 682.9L1064.4 702.5" stroke="#900c30" stroke-width="1.9" />
<path d="M1169.8 931.5L1190.4 993.7M1140.6 934.0L1159.8 991.9M1103.6 937.2L1121.0 989.7M1044.3 895.0L1059.5 941.0M921.2 859.8L931.4 889.9M794.0 827.6L812.5 827.6M983.0 868.3L931.4 889.9M1044.3 895.0L995.9 906.8M1140.6 934.0L1103.6 937.2M1103.6 937.2L1059.5 941.0M1221.3 995.4L1211.8 994.9M1211.8 994.9L1190.4 993.7M1190.4 993.7L1159.8 991.9" stroke="#900c84" stroke-width="1.9" />
<path d="M1174.2 1430.0L1162.1 1473.0" stroke="#241890" stroke-width="1.9" />
<path d="M273.2 674.3L265.3 631.3M305.6 694.5L298.3 654.5M340.0 683.8L373.1 673.8M389.9 718.8L418.9 710.0M418.9 710.0L447.9 701.2M495.9 744.3L520.3 736.9M520.3 736.9L544.6 729.6M626.2 769.8L645.3 764.2M298.3 654.5L340.0 683.8M340.0 683.8L389.9 718.8M373.1 673.8L418.9 710.0M447.9 701.2L495.9 744.3M544.6 729.6L588.0 781.2M683.6 753.4L702.4 819.0M240.5 653.9L250.5 660.2M250.5 660.2L273.2 674.3M273.2 674.3L305.6 694.5" stroke="#189030" stroke-width="1.9" />
<path d="M480.8 599.3L517.4 588.4M505.6 633.8L538.7 623.9M564.1 666.3L593.2 657.7M664.4 758.6L683.6 753.4M441.7 544.6L447.7 553.1M447.7 553.1L461.3 572.1M461.3 572.1L480.8 599.3M538.7 623.9L564.1 666.3" stroke="#309018" stroke-width="1.9" />
<path d="M590.6 567.0L627.4 557.0M605.1 604.5L638.4 595.4M622.3 649.2L651.6 641.3M567.7 507.5L571.3 516.7M571.3 516.7L579.2 537.4M579.2 537.4L590.6 567.0M651.6 641.3L666.6 694.1" stroke="#6c9018" stroke-width="1.9" />
<path d="M1082.4 760.7L1102.0 818.4M1050.9 780.1L1068.6 832.4M762.7 762.0L757.3 824.9M789.1 764.6L775.7 826.7M815.6 765.8L794.0 827.6M842.2 765.8L812.5 827.6M868.7 765.8L830.9 827.6M895.0 767.9L849.2 829.1M1050.9 780.1L1013.2 803.2M1155.0 796.2L1146.8 799.6M1146.8 799.6L1128.4 807.3M1128.4 807.3L1102.0 818.4" stroke="#900c54" stroke-width="1.9" />
<path d="M1144.7 1398.2L1133.4 1438.3M908.2 1066.4L903.2 1080.7M805.1 918.0L808.5 929.0M1107.3 1358.0L1062.7 1310.0" stroke="#24249c" stroke-width="1.9" />
<path d="M313.9 734.3L305.6 694.5M395.8 750.6L389.9 718.8M471.6 751.7L495.9 744.3M607.1 775.5L626.2 769.8M389.9 718.8L447.3 759.1M520.3 736.9L568.9 787.0M250.0 699.6L259.9 704.9M259.9 704.9L282.1 717.0M346.7 720.1L395.8 750.6" stroke="#0c903c" stroke-width="1.9" />
<path d="M571.8 614.1L605.1 604.5M642.1 700.7L666.6 694.1M525.6 519.7L530.0 528.6M530.0 528.6L539.9 548.7M539.9 548.7L554.0 577.6M622.3 649.2L642.1 700.7" stroke="#549018" stroke-width="1.9" />
<path d="M638.4 595.4L684.2 600.3M651.6 641.3L691.7 645.6M666.6 694.1L700.3 697.7M610.0 496.0L612.7 505.4M612.7 505.4L618.8 526.6" stroke="#849018" stroke-width="1.9" />
<path d="M821.6 614.8L867.6 616.9M900.4 523.3L897.3 532.2M897.3 532.2L890.3 552.1" stroke="#903c0c" stroke-width="1.9" />
<path d="M1117.9 1321.8L1107.3 1358.0M1027.4 1201.6L1019.2 1228.1M972.9 1130.3L966.2 1151.0M913.5 1052.4L908.2 1066.4M775.7 826.7L760.9 894.6M910.0 1018.4L830.7 994.2M1027.4 1201.6L966.2 1151.0M1072.0 1278.2L1019.2 1228.1M1204.0 1462.0L1194.8 1452.2M1194.8 1452.2L1174.2 1430.0M1174.2 1430.0L1144.7 1398.2" stroke="#3c1890" stroke-width="1.9" />
<path d="M603.5 1148.3L552.8 1113.6M634.3 1051.9L606.8 1029.7M665.7 931.4L663.8 924.0M675.8 826.5L709.0 894.5M606.8 1029.7L649.1 1010.8M619.8 965.8L680.0 966.8" stroke="#0c789c" stroke-width="1.9" />
<path d="M691.7 645.6L731.9 649.9M700.3 697.7L734.0 701.3M710.0 756.2L736.4 759.1M726.0 508.5L726.4 517.7M726.4 517.7L727.3 538.3M727.3 538.3L728.5 567.9M728.5 567.9L730.0 605.3M730.0 605.3L731.9 649.9M731.9 649.9L734.0 701.3" stroke="#90780c" stroke-width="1.9" />
<path d="M443.3 904.5L430.7 874.8M481.5 889.8L472.1 864.4M336.7 919.8L355.4 922.0M430.7 874.8L481.5 889.8" stroke="#0c906c" stroke-width="1.9" />
<path d="M954.4 532.2L944.9 552.2" stroke="#90180c" stroke-width="1.9" />
</g>
<g id="thick">
<path d="M232.0 608.0L273.9 595.3" stroke="#30fc3c" stroke-width="6.0" stroke-linecap="butt"/>
<path d="M273.9 595.3L315.8 582.6M315.8 582.6L357.8 569.9M357.8 569.9L399.7 557.2" stroke="#30fc30" stroke-width="6.0" stroke-linecap="butt"/>
<path d="M399.7 557.2L441.7 544.6" stroke="#48fc24" stroke-width="6.0" stroke-linecap="butt"/>
<path d="M441.7 544.6L483.6 532.1" stroke="#60fc24" stroke-width="6.0" stroke-linecap="butt"/>
<path d="M483.6 532.1L525.6 519.7" stroke="#84fc24" stroke-width="6.0" stroke-linecap="butt"/>
<path d="M525.6 519.7L567.7 507.5" stroke="#a8fc24" stroke-width="6.0" stroke-linecap="butt"/>
<path d="M567.7 507.5L610.0 496.0" stroke="#ccf024" stroke-width="6.0" stroke-linecap="butt"/>
<path d="M610.0 496.0L668.0 502.2" stroke="#f0f024" stroke-width="5.0" stroke-linecap="butt"/>
<path d="M668.0 502.2L726.0 508.5" stroke="#f0d818" stroke-width="5.0" stroke-linecap="butt"/>
<path d="M726.0 508.5L784.0 514.9" stroke="#f0cc18" stroke-width="5.0" stroke-linecap="butt"/>
<path d="M784.0 514.9L842.1 520.6" stroke="#f0a818" stroke-width="5.0" stroke-linecap="butt"/>
<path d="M842.1 520.6L900.4 523.3" stroke="#fc9018" stroke-width="5.0" stroke-linecap="butt"/>
<path d="M900.4 523.3L958.7 523.3" stroke="#fc5418" stroke-width="5.0" stroke-linecap="butt"/>
<path d="M958.7 523.3L1017.1 523.3" stroke="#fc2424" stroke-width="5.0" stroke-linecap="butt"/>
<path d="M1017.1 523.3L1075.0 528.0" stroke="#fc1824" stroke-width="5.0" stroke-linecap="butt"/>
<path d="M1075.0 528.0L1093.2 595.6" stroke="#fc1830" stroke-width="7.5" stroke-linecap="butt"/>
<path d="M1093.2 595.6L1111.7 663.1" stroke="#fc1848" stroke-width="7.5" stroke-linecap="butt"/>
<path d="M1111.7 663.1L1132.5 729.9" stroke="#fc1860" stroke-width="7.5" stroke-linecap="butt"/>
<path d="M1132.5 729.9L1155.0 796.2" stroke="#fc1884" stroke-width="7.5" stroke-linecap="butt"/>
<path d="M1155.0 796.2L1177.3 862.5" stroke="#fc189c" stroke-width="7.5" stroke-linecap="butt"/>
<path d="M1177.3 862.5L1199.3 929.0" stroke="#fc18c0" stroke-width="7.5" stroke-linecap="butt"/>
<path d="M1199.3 929.0L1221.3 995.4" stroke="#fc18d8" stroke-width="7.5" stroke-linecap="butt"/>
<path d="M1221.3 995.4L1243.4 1061.8" stroke="#fc18f0" stroke-width="7.5" stroke-linecap="butt"/>
<path d="M1243.4 1061.8L1267.6 1127.5" stroke="#f018fc" stroke-width="7.5" stroke-linecap="butt"/>
<path d="M1267.6 1127.5L1297.0 1191.0" stroke="#e418fc" stroke-width="7.5" stroke-linecap="butt"/>
<path d="M1297.0 1191.0L1278.9 1235.2" stroke="#d818fc" stroke-width="8.0" stroke-linecap="butt"/>
<path d="M1278.9 1235.2L1261.8 1279.9" stroke="#cc18fc" stroke-width="8.0" stroke-linecap="butt"/>
<path d="M1261.8 1279.9L1246.2 1325.0" stroke="#b418fc" stroke-width="8.0" stroke-linecap="butt"/>
<path d="M1246.2 1325.0L1231.5 1370.5" stroke="#a818fc" stroke-width="8.0" stroke-linecap="butt"/>
<path d="M1231.5 1370.5L1217.4 1416.1" stroke="#9018fc" stroke-width="8.0" stroke-linecap="butt"/>
<path d="M1217.4 1416.1L1204.0 1462.0" stroke="#8418fc" stroke-width="8.0" stroke-linecap="butt"/>
<path d="M1204.0 1462.0L1191.0 1508.0" stroke="#5430fc" stroke-width="8.0" stroke-linecap="butt"/>
<path d="M1191.0 1508.0L1119.8 1476.8" stroke="#2448fc" stroke-width="7.0" stroke-linecap="butt"/>
<path d="M1119.8 1476.8L1048.6 1445.6" stroke="#2454fc" stroke-width="7.0" stroke-linecap="butt"/>
<path d="M1048.6 1445.6L977.4 1414.2" stroke="#2460fc" stroke-width="7.0" stroke-linecap="butt"/>
<path d="M977.4 1414.2L906.4 1382.7" stroke="#2478fc" stroke-width="7.0" stroke-linecap="butt"/>
<path d="M906.4 1382.7L835.7 1350.4" stroke="#2484fc" stroke-width="7.0" stroke-linecap="butt"/>
<path d="M835.7 1350.4L766.3 1315.4" stroke="#2490fc" stroke-width="7.0" stroke-linecap="butt"/>
<path d="M766.3 1315.4L698.9 1276.6" stroke="#24a8fc" stroke-width="7.0" stroke-linecap="butt"/>
<path d="M698.9 1276.6L632.2 1236.6" stroke="#24c0fc" stroke-width="7.0" stroke-linecap="butt"/>
<path d="M632.2 1236.6L565.7 1196.4" stroke="#24ccfc" stroke-width="7.0" stroke-linecap="butt"/>
<path d="M565.7 1196.4L501.6 1152.5" stroke="#24e4fc" stroke-width="7.0" stroke-linecap="butt"/>
<path d="M501.6 1152.5L441.1 1103.7" stroke="#18f0fc" stroke-width="7.0" stroke-linecap="butt"/>
<path d="M441.1 1103.7L393.0 1043.0" stroke="#18f0f0" stroke-width="7.0" stroke-linecap="butt"/>
<path d="M393.0 1043.0L370.0 1002.4" stroke="#18f0e4" stroke-width="7.5" stroke-linecap="butt"/>
<path d="M370.0 1002.4L348.5 960.9" stroke="#18f0d8" stroke-width="7.5" stroke-linecap="butt"/>
<path d="M348.5 960.9L328.4 918.9" stroke="#18f0cc" stroke-width="7.5" stroke-linecap="butt"/>
<path d="M328.4 918.9L309.2 876.3" stroke="#18f0c0" stroke-width="7.5" stroke-linecap="butt"/>
<path d="M309.2 876.3L291.0 833.3" stroke="#18f0a8" stroke-width="7.5" stroke-linecap="butt"/>
<path d="M291.0 833.3L274.8 789.5" stroke="#18f09c" stroke-width="7.5" stroke-linecap="butt"/>
<path d="M274.8 789.5L261.4 744.8" stroke="#18f084" stroke-width="7.5" stroke-linecap="butt"/>
<path d="M261.4 744.8L250.0 699.6" stroke="#18f078" stroke-width="7.5" stroke-linecap="butt"/>
<path d="M250.0 699.6L240.5 653.9" stroke="#24fc60" stroke-width="7.5" stroke-linecap="butt"/>
<path d="M240.5 653.9L232.0 608.0" stroke="#24fc48" stroke-width="7.5" stroke-linecap="butt"/>
</g>
<path d="M134 1050L454 991" stroke="#22e6ee" stroke-width="2.6"/>
<path d="M1098 921L1323 891" stroke="#e828e0" stroke-width="2.6"/>
<path d="M789 1325L826 1582" stroke="#2a78d8" stroke-width="2.6"/>
<path d="M1329 892l10-6l9 0l-6 4l6 2l-9 2z" fill="#fff" stroke="none"/>
<path d="M588 1234L700 1212L790 1194" stroke="#1d84d6" stroke-width="7" stroke-linecap="butt"/><path d="M789 1194L860 1178L936 1160" stroke="#1b5cb4" stroke-width="7" stroke-linecap="butt"/>
<g id="solid">
<polygon points="631,337 700,392 764,445 828,489 921,553 985,590 1046,622 1079,692 1100,750 1119,803 1137,861 1096,919 1026,1018 968,1088 910,1146 887,1161 823,1169 747,1181 666,1195 596,1207 549,1210 538,1192 497,1134 456,1064 436,1024 416,960 398,915 386,890 372,832 375,803 416,750 449,700 491,646 521,590 555,541 584,483 613,396" fill="#999"/>
<g clip-path="url(#cs)">
<polygon points="720.0,794.0 720.0,794.0 687.9,791.8 686.2,794.0" fill="#e5f5ec" stroke="#e5f5ec" stroke-width="0.7"/>
<polygon points="686.2,794.0 687.9,791.8 655.9,789.5 652.4,794.0" fill="#c4e8d3" stroke="#c4e8d3" stroke-width="0.7"/>
<polygon points="652.4,794.0 655.9,789.5 623.8,787.3 618.6,794.0" fill="#ace0c2" stroke="#ace0c2" stroke-width="0.7"/>
<polygon points="618.6,794.0 623.8,787.3 591.7,785.0 584.8,794.0" fill="#93d4af" stroke="#93d4af" stroke-width="0.7"/>
<polygon points="584.8,794.0 591.7,785.0 559.7,782.8 551.0,794.0" fill="#80d0a2" stroke="#80d0a2" stroke-width="0.7"/>
<polygon points="551.0,794.0 559.7,782.8 527.6,780.5 517.2,794.0" fill="#69c48f" stroke="#69c48f" stroke-width="0.7"/>
<polygon points="517.2,794.0 527.6,780.5 495.5,778.3 483.4,794.0" fill="#57c184" stroke="#57c184" stroke-width="0.7"/>
<polygon points="483.4,794.0 495.5,778.3 463.4,776.1 449.6,794.0" fill="#43b573" stroke="#43b573" stroke-width="0.7"/>
<polygon points="449.6,794.0 463.4,776.1 431.4,773.8 415.8,794.0" fill="#32b168" stroke="#32b168" stroke-width="0.7"/>
<polygon points="415.8,794.0 431.4,773.8 399.3,771.6 382.0,794.0" fill="#1fa658" stroke="#1fa658" stroke-width="0.7"/>
<polygon points="382.0,794.0 399.3,771.6 287.1,763.7 263.6,794.0" fill="#17a754" stroke="#17a754" stroke-width="0.7"/>
<polygon points="720.0,794.0 720.0,794.0 689.5,789.7 687.9,791.8" fill="#e6f4ea" stroke="#e6f4ea" stroke-width="0.7"/>
<polygon points="687.9,791.8 689.5,789.7 659.0,785.4 655.9,789.5" fill="#c5e5cf" stroke="#c5e5cf" stroke-width="0.7"/>
<polygon points="655.9,789.5 659.0,785.4 628.5,781.1 623.8,787.3" fill="#aedcbb" stroke="#aedcbb" stroke-width="0.7"/>
<polygon points="623.8,787.3 628.5,781.1 598.0,776.9 591.7,785.0" fill="#95cfa6" stroke="#95cfa6" stroke-width="0.7"/>
<polygon points="591.7,785.0 598.0,776.9 567.6,772.6 559.7,782.8" fill="#83ca98" stroke="#83ca98" stroke-width="0.7"/>
<polygon points="559.7,782.8 567.6,772.6 537.1,768.3 527.6,780.5" fill="#6ebd84" stroke="#6ebd84" stroke-width="0.7"/>
<polygon points="527.6,780.5 537.1,768.3 506.6,764.0 495.5,778.3" fill="#5fba79" stroke="#5fba79" stroke-width="0.7"/>
<polygon points="495.5,778.3 506.6,764.0 476.1,759.7 463.4,776.1" fill="#4caf68" stroke="#4caf68" stroke-width="0.7"/>
<polygon points="463.4,776.1 476.1,759.7 445.6,755.4 431.4,773.8" fill="#3dac5d" stroke="#3dac5d" stroke-width="0.7"/>
<polygon points="431.4,773.8 445.6,755.4 415.1,751.2 399.3,771.6" fill="#2ca14e" stroke="#2ca14e" stroke-width="0.7"/>
<polygon points="399.3,771.6 415.1,751.2 308.4,736.2 287.1,763.7" fill="#25a249" stroke="#25a249" stroke-width="0.7"/>
<polygon points="720.0,794.0 720.0,794.0 690.8,787.8 689.5,789.7" fill="#e8f6ea" stroke="#e8f6ea" stroke-width="0.7"/>
<polygon points="689.5,789.7 690.8,787.8 661.6,781.6 659.0,785.4" fill="#cce9d0" stroke="#cce9d0" stroke-width="0.7"/>
<polygon points="659.0,785.4 661.6,781.6 632.4,775.4 628.5,781.1" fill="#b7e2bd" stroke="#b7e2bd" stroke-width="0.7"/>
<polygon points="628.5,781.1 632.4,775.4 603.2,769.2 598.0,776.9" fill="#a0d7a8" stroke="#a0d7a8" stroke-width="0.7"/>
<polygon points="598.0,776.9 603.2,769.2 574.0,763.0 567.6,772.6" fill="#91d39a" stroke="#91d39a" stroke-width="0.7"/>
<polygon points="567.6,772.6 574.0,763.0 544.8,756.8 537.1,768.3" fill="#7cc787" stroke="#7cc787" stroke-width="0.7"/>
<polygon points="537.1,768.3 544.8,756.8 515.6,750.5 506.6,764.0" fill="#6dc47a" stroke="#6dc47a" stroke-width="0.7"/>
<polygon points="506.6,764.0 515.6,750.5 486.3,744.3 476.1,759.7" fill="#5ab968" stroke="#5ab968" stroke-width="0.7"/>
<polygon points="476.1,759.7 486.3,744.3 457.1,738.1 445.6,755.4" fill="#4cb65b" stroke="#4cb65b" stroke-width="0.7"/>
<polygon points="445.6,755.4 457.1,738.1 427.9,731.9 415.1,751.2" fill="#3bab4b" stroke="#3bab4b" stroke-width="0.7"/>
<polygon points="415.1,751.2 427.9,731.9 325.7,710.2 308.4,736.2" fill="#35ac46" stroke="#35ac46" stroke-width="0.7"/>
<polygon points="720.0,794.0 720.0,794.0 692.0,786.0 690.8,787.8" fill="#e9f5e9" stroke="#e9f5e9" stroke-width="0.7"/>
<polygon points="690.8,787.8 692.0,786.0 664.0,777.9 661.6,781.6" fill="#cce7cc" stroke="#cce7cc" stroke-width="0.7"/>
<polygon points="661.6,781.6 664.0,777.9 636.0,769.9 632.4,775.4" fill="#b8deb7" stroke="#b8deb7" stroke-width="0.7"/>
<polygon points="632.4,775.4 636.0,769.9 608.0,761.9 603.2,769.2" fill="#a1d1a1" stroke="#a1d1a1" stroke-width="0.7"/>
<polygon points="603.2,769.2 608.0,761.9 580.0,753.8 574.0,763.0" fill="#92cd92" stroke="#92cd92" stroke-width="0.7"/>
<polygon points="574.0,763.0 580.0,753.8 552.0,745.8 544.8,756.8" fill="#7ec07e" stroke="#7ec07e" stroke-width="0.7"/>
<polygon points="544.8,756.8 552.0,745.8 524.0,737.8 515.6,750.5" fill="#72be71" stroke="#72be71" stroke-width="0.7"/>
<polygon points="515.6,750.5 524.0,737.8 496.0,729.8 486.3,744.3" fill="#60b360" stroke="#60b360" stroke-width="0.7"/>
<polygon points="486.3,744.3 496.0,729.8 468.0,721.7 457.1,738.1" fill="#54b154" stroke="#54b154" stroke-width="0.7"/>
<polygon points="457.1,738.1 468.0,721.7 440.0,713.7 427.9,731.9" fill="#44a644" stroke="#44a644" stroke-width="0.7"/>
<polygon points="427.9,731.9 440.0,713.7 341.9,685.6 325.7,710.2" fill="#3fa73f" stroke="#3fa73f" stroke-width="0.7"/>
<polygon points="720.0,794.0 720.0,794.0 693.2,784.2 692.0,786.0" fill="#ebf6e9" stroke="#ebf6e9" stroke-width="0.7"/>
<polygon points="692.0,786.0 693.2,784.2 666.4,774.5 664.0,777.9" fill="#d2eace" stroke="#d2eace" stroke-width="0.7"/>
<polygon points="664.0,777.9 666.4,774.5 639.5,764.7 636.0,769.9" fill="#c0e4ba" stroke="#c0e4ba" stroke-width="0.7"/>
<polygon points="636.0,769.9 639.5,764.7 612.7,755.0 608.0,761.9" fill="#acd9a4" stroke="#acd9a4" stroke-width="0.7"/>
<polygon points="608.0,761.9 612.7,755.0 585.9,745.2 580.0,753.8" fill="#9fd695" stroke="#9fd695" stroke-width="0.7"/>
<polygon points="580.0,753.8 585.9,745.2 559.1,735.4 552.0,745.8" fill="#8ccb81" stroke="#8ccb81" stroke-width="0.7"/>
<polygon points="552.0,745.8 559.1,735.4 532.3,725.7 524.0,737.8" fill="#80c873" stroke="#80c873" stroke-width="0.7"/>
<polygon points="524.0,737.8 532.3,725.7 505.4,715.9 496.0,729.8" fill="#6fbd61" stroke="#6fbd61" stroke-width="0.7"/>
<polygon points="496.0,729.8 505.4,715.9 478.6,706.1 468.0,721.7" fill="#63bb53" stroke="#63bb53" stroke-width="0.7"/>
<polygon points="468.0,721.7 478.6,706.1 451.8,696.4 440.0,713.7" fill="#54b043" stroke="#54b043" stroke-width="0.7"/>
<polygon points="440.0,713.7 451.8,696.4 357.9,662.2 341.9,685.6" fill="#4fb13d" stroke="#4fb13d" stroke-width="0.7"/>
<polygon points="720.0,794.0 720.0,794.0 694.4,782.6 693.2,784.2" fill="#ecf5e8" stroke="#ecf5e8" stroke-width="0.7"/>
<polygon points="693.2,784.2 694.4,782.6 668.9,771.2 666.4,774.5" fill="#d2e8ca" stroke="#d2e8ca" stroke-width="0.7"/>
<polygon points="666.4,774.5 668.9,771.2 643.3,759.9 639.5,764.7" fill="#c1e0b4" stroke="#c1e0b4" stroke-width="0.7"/>
<polygon points="639.5,764.7 643.3,759.9 617.8,748.5 612.7,755.0" fill="#add49d" stroke="#add49d" stroke-width="0.7"/>
<polygon points="612.7,755.0 617.8,748.5 592.2,737.1 585.9,745.2" fill="#a0cf8d" stroke="#a0cf8d" stroke-width="0.7"/>
<polygon points="585.9,745.2 592.2,737.1 566.6,725.7 559.1,735.4" fill="#8ec378" stroke="#8ec378" stroke-width="0.7"/>
<polygon points="559.1,735.4 566.6,725.7 541.1,714.3 532.3,725.7" fill="#84c26b" stroke="#84c26b" stroke-width="0.7"/>
<polygon points="532.3,725.7 541.1,714.3 515.5,703.0 505.4,715.9" fill="#74b759" stroke="#74b759" stroke-width="0.7"/>
<polygon points="505.4,715.9 515.5,703.0 490.0,691.6 478.6,706.1" fill="#6ab54c" stroke="#6ab54c" stroke-width="0.7"/>
<polygon points="478.6,706.1 490.0,691.6 464.4,680.2 451.8,696.4" fill="#5cab3c" stroke="#5cab3c" stroke-width="0.7"/>
<polygon points="451.8,696.4 464.4,680.2 374.9,640.4 357.9,662.2" fill="#58ac36" stroke="#58ac36" stroke-width="0.7"/>
<polygon points="720.0,794.0 720.0,794.0 695.7,781.1 694.4,782.6" fill="#eef7e8" stroke="#eef7e8" stroke-width="0.7"/>
<polygon points="694.4,782.6 695.7,781.1 671.3,768.1 668.9,771.2" fill="#d9eccb" stroke="#d9eccb" stroke-width="0.7"/>
<polygon points="668.9,771.2 671.3,768.1 647.0,755.2 643.3,759.9" fill="#cae6b6" stroke="#cae6b6" stroke-width="0.7"/>
<polygon points="643.3,759.9 647.0,755.2 622.6,742.2 617.8,748.5" fill="#b8dca0" stroke="#b8dca0" stroke-width="0.7"/>
<polygon points="617.8,748.5 622.6,742.2 598.3,729.3 592.2,737.1" fill="#aed990" stroke="#aed990" stroke-width="0.7"/>
<polygon points="592.2,737.1 598.3,729.3 573.9,716.3 566.6,725.7" fill="#9dce7b" stroke="#9dce7b" stroke-width="0.7"/>
<polygon points="566.6,725.7 573.9,716.3 549.6,703.4 541.1,714.3" fill="#93cc6c" stroke="#93cc6c" stroke-width="0.7"/>
<polygon points="541.1,714.3 549.6,703.4 525.3,690.4 515.5,703.0" fill="#84c159" stroke="#84c159" stroke-width="0.7"/>
<polygon points="515.5,703.0 525.3,690.4 500.9,677.5 490.0,691.6" fill="#7bbf4b" stroke="#7bbf4b" stroke-width="0.7"/>
<polygon points="490.0,691.6 500.9,677.5 476.6,664.6 464.4,680.2" fill="#6cb53a" stroke="#6cb53a" stroke-width="0.7"/>
<polygon points="464.4,680.2 476.6,664.6 391.4,619.3 374.9,640.4" fill="#69b634" stroke="#69b634" stroke-width="0.7"/>
<polygon points="720.0,794.0 720.0,794.0 696.8,779.5 695.7,781.1" fill="#eef6e7" stroke="#eef6e7" stroke-width="0.7"/>
<polygon points="695.7,781.1 696.8,779.5 673.7,765.1 671.3,768.1" fill="#d9e9c8" stroke="#d9e9c8" stroke-width="0.7"/>
<polygon points="671.3,768.1 673.7,765.1 650.5,750.6 647.0,755.2" fill="#cae2b1" stroke="#cae2b1" stroke-width="0.7"/>
<polygon points="647.0,755.2 650.5,750.6 627.4,736.1 622.6,742.2" fill="#b8d699" stroke="#b8d699" stroke-width="0.7"/>
<polygon points="622.6,742.2 627.4,736.1 604.2,721.7 598.3,729.3" fill="#aed288" stroke="#aed288" stroke-width="0.7"/>
<polygon points="598.3,729.3 604.2,721.7 581.1,707.2 573.9,716.3" fill="#9ec773" stroke="#9ec773" stroke-width="0.7"/>
<polygon points="573.9,716.3 581.1,707.2 557.9,692.7 549.6,703.4" fill="#96c564" stroke="#96c564" stroke-width="0.7"/>
<polygon points="549.6,703.4 557.9,692.7 534.7,678.2 525.3,690.4" fill="#88bb52" stroke="#88bb52" stroke-width="0.7"/>
<polygon points="525.3,690.4 534.7,678.2 511.6,663.8 500.9,677.5" fill="#81b944" stroke="#81b944" stroke-width="0.7"/>
<polygon points="500.9,677.5 511.6,663.8 488.4,649.3 476.6,664.6" fill="#73af33" stroke="#73af33" stroke-width="0.7"/>
<polygon points="476.6,664.6 488.4,649.3 407.4,598.7 391.4,619.3" fill="#71b12d" stroke="#71b12d" stroke-width="0.7"/>
<polygon points="720.0,794.0 720.0,794.0 697.8,777.9 696.8,779.5" fill="#f1f7e7" stroke="#f1f7e7" stroke-width="0.7"/>
<polygon points="696.8,779.5 697.8,777.9 675.6,761.8 673.7,765.1" fill="#dfedc9" stroke="#dfedc9" stroke-width="0.7"/>
<polygon points="673.7,765.1 675.6,761.8 653.4,745.6 650.5,750.6" fill="#d3e8b3" stroke="#d3e8b3" stroke-width="0.7"/>
<polygon points="650.5,750.6 653.4,745.6 631.2,729.5 627.4,736.1" fill="#c4de9c" stroke="#c4de9c" stroke-width="0.7"/>
<polygon points="627.4,736.1 631.2,729.5 609.0,713.4 604.2,721.7" fill="#bcdc8b" stroke="#bcdc8b" stroke-width="0.7"/>
<polygon points="604.2,721.7 609.0,713.4 586.9,697.3 581.1,707.2" fill="#add175" stroke="#add175" stroke-width="0.7"/>
<polygon points="581.1,707.2 586.9,697.3 564.7,681.1 557.9,692.7" fill="#a7d065" stroke="#a7d065" stroke-width="0.7"/>
<polygon points="557.9,692.7 564.7,681.1 542.5,665.0 534.7,678.2" fill="#98c552" stroke="#98c552" stroke-width="0.7"/>
<polygon points="534.7,678.2 542.5,665.0 520.3,648.9 511.6,663.8" fill="#92c443" stroke="#92c443" stroke-width="0.7"/>
<polygon points="511.6,663.8 520.3,648.9 498.1,632.8 488.4,649.3" fill="#85ba31" stroke="#85ba31" stroke-width="0.7"/>
<polygon points="488.4,649.3 498.1,632.8 420.4,576.3 407.4,598.7" fill="#83bc2b" stroke="#83bc2b" stroke-width="0.7"/>
<polygon points="720.0,794.0 720.0,794.0 698.7,776.2 697.8,777.9" fill="#f1f7e6" stroke="#f1f7e6" stroke-width="0.7"/>
<polygon points="697.8,777.9 698.7,776.2 677.5,758.3 675.6,761.8" fill="#dfebc5" stroke="#dfebc5" stroke-width="0.7"/>
<polygon points="675.6,761.8 677.5,758.3 656.2,740.5 653.4,745.6" fill="#d3e4ae" stroke="#d3e4ae" stroke-width="0.7"/>
<polygon points="653.4,745.6 656.2,740.5 634.9,722.6 631.2,729.5" fill="#c4d995" stroke="#c4d995" stroke-width="0.7"/>
<polygon points="631.2,729.5 634.9,722.6 613.7,704.8 609.0,713.4" fill="#bcd683" stroke="#bcd683" stroke-width="0.7"/>
<polygon points="609.0,713.4 613.7,704.8 592.4,686.9 586.9,697.3" fill="#aeca6d" stroke="#aeca6d" stroke-width="0.7"/>
<polygon points="586.9,697.3 592.4,686.9 571.1,669.1 564.7,681.1" fill="#a9ca5e" stroke="#a9ca5e" stroke-width="0.7"/>
<polygon points="564.7,681.1 571.1,669.1 549.9,651.2 542.5,665.0" fill="#9cbf4b" stroke="#9cbf4b" stroke-width="0.7"/>
<polygon points="542.5,665.0 549.9,651.2 528.6,633.4 520.3,648.9" fill="#97bf3c" stroke="#97bf3c" stroke-width="0.7"/>
<polygon points="520.3,648.9 528.6,633.4 507.3,615.5 498.1,632.8" fill="#8bb52b" stroke="#8bb52b" stroke-width="0.7"/>
<polygon points="498.1,632.8 507.3,615.5 432.9,553.1 420.4,576.3" fill="#8ab725" stroke="#8ab725" stroke-width="0.7"/>
<polygon points="720.0,794.0 720.0,794.0 699.7,774.4 698.7,776.2" fill="#f4f8e6" stroke="#f4f8e6" stroke-width="0.7"/>
<polygon points="698.7,776.2 699.7,774.4 679.4,754.8 677.5,758.3" fill="#e6efc7" stroke="#e6efc7" stroke-width="0.7"/>
<polygon points="677.5,758.3 679.4,754.8 659.0,735.1 656.2,740.5" fill="#ddebb0" stroke="#ddebb0" stroke-width="0.7"/>
<polygon points="656.2,740.5 659.0,735.1 638.7,715.5 634.9,722.6" fill="#d0e298" stroke="#d0e298" stroke-width="0.7"/>
<polygon points="634.9,722.6 638.7,715.5 618.4,695.9 613.7,704.8" fill="#cce186" stroke="#cce186" stroke-width="0.7"/>
<polygon points="613.7,704.8 618.4,695.9 598.1,676.3 592.4,686.9" fill="#bed670" stroke="#bed670" stroke-width="0.7"/>
<polygon points="592.4,686.9 598.1,676.3 577.8,656.7 571.1,669.1" fill="#bad65f" stroke="#bad65f" stroke-width="0.7"/>
<polygon points="571.1,669.1 577.8,656.7 557.5,637.0 549.9,651.2" fill="#aecc4b" stroke="#aecc4b" stroke-width="0.7"/>
<polygon points="549.9,651.2 557.5,637.0 537.1,617.4 528.6,633.4" fill="#aacb3b" stroke="#aacb3b" stroke-width="0.7"/>
<polygon points="528.6,633.4 537.1,617.4 516.8,597.8 507.3,615.5" fill="#9ec229" stroke="#9ec229" stroke-width="0.7"/>
<polygon points="507.3,615.5 516.8,597.8 445.7,529.1 432.9,553.1" fill="#9ec422" stroke="#9ec422" stroke-width="0.7"/>
<polygon points="720.0,794.0 720.0,794.0 700.8,772.6 699.7,774.4" fill="#f4f8e5" stroke="#f4f8e5" stroke-width="0.7"/>
<polygon points="699.7,774.4 700.8,772.6 681.5,751.3 679.4,754.8" fill="#e6edc3" stroke="#e6edc3" stroke-width="0.7"/>
<polygon points="679.4,754.8 681.5,751.3 662.3,729.9 659.0,735.1" fill="#dde7ab" stroke="#dde7ab" stroke-width="0.7"/>
<polygon points="659.0,735.1 662.3,729.9 643.1,708.6 638.7,715.5" fill="#d0dd91" stroke="#d0dd91" stroke-width="0.7"/>
<polygon points="638.7,715.5 643.1,708.6 623.8,687.2 618.4,695.9" fill="#cbda7f" stroke="#cbda7f" stroke-width="0.7"/>
<polygon points="618.4,695.9 623.8,687.2 604.6,665.8 598.1,676.3" fill="#bed068" stroke="#bed068" stroke-width="0.7"/>
<polygon points="598.1,676.3 604.6,665.8 585.4,644.5 577.8,656.7" fill="#bcd058" stroke="#bcd058" stroke-width="0.7"/>
<polygon points="577.8,656.7 585.4,644.5 566.1,623.1 557.5,637.0" fill="#b0c645" stroke="#b0c645" stroke-width="0.7"/>
<polygon points="557.5,637.0 566.1,623.1 546.9,601.8 537.1,617.4" fill="#aec635" stroke="#aec635" stroke-width="0.7"/>
<polygon points="537.1,617.4 546.9,601.8 527.7,580.4 516.8,597.8" fill="#a3bd24" stroke="#a3bd24" stroke-width="0.7"/>
<polygon points="516.8,597.8 527.7,580.4 460.3,505.6 445.7,529.1" fill="#a4c01d" stroke="#a4c01d" stroke-width="0.7"/>
<polygon points="720.0,794.0 720.0,794.0 702.0,770.9 700.8,772.6" fill="#f7f9e5" stroke="#f7f9e5" stroke-width="0.7"/>
<polygon points="700.8,772.6 702.0,770.9 683.9,747.8 681.5,751.3" fill="#ecf1c5" stroke="#ecf1c5" stroke-width="0.7"/>
<polygon points="681.5,751.3 683.9,747.8 665.9,724.7 662.3,729.9" fill="#e7eead" stroke="#e7eead" stroke-width="0.7"/>
<polygon points="662.3,729.9 665.9,724.7 647.9,701.7 643.1,708.6" fill="#dde694" stroke="#dde694" stroke-width="0.7"/>
<polygon points="643.1,708.6 647.9,701.7 629.8,678.6 623.8,687.2" fill="#dbe681" stroke="#dbe681" stroke-width="0.7"/>
<polygon points="623.8,687.2 629.8,678.6 611.8,655.5 604.6,665.8" fill="#cfdc6b" stroke="#cfdc6b" stroke-width="0.7"/>
<polygon points="604.6,665.8 611.8,655.5 593.7,632.4 585.4,644.5" fill="#cedc59" stroke="#cedc59" stroke-width="0.7"/>
<polygon points="585.4,644.5 593.7,632.4 575.7,609.3 566.1,623.1" fill="#c3d345" stroke="#c3d345" stroke-width="0.7"/>
<polygon points="566.1,623.1 575.7,609.3 557.7,586.2 546.9,601.8" fill="#c2d334" stroke="#c2d334" stroke-width="0.7"/>
<polygon points="546.9,601.8 557.7,586.2 539.6,563.1 527.7,580.4" fill="#b7ca22" stroke="#b7ca22" stroke-width="0.7"/>
<polygon points="527.7,580.4 539.6,563.1 476.5,482.3 460.3,505.6" fill="#b9cc1a" stroke="#b9cc1a" stroke-width="0.7"/>
<polygon points="720.0,794.0 720.0,794.0 703.2,769.1 702.0,770.9" fill="#f7f9e4" stroke="#f7f9e4" stroke-width="0.7"/>
<polygon points="702.0,770.9 703.2,769.1 686.4,744.2 683.9,747.8" fill="#ecefc1" stroke="#ecefc1" stroke-width="0.7"/>
<polygon points="683.9,747.8 686.4,744.2 669.6,719.3 665.9,724.7" fill="#e7eaa8" stroke="#e7eaa8" stroke-width="0.7"/>
<polygon points="665.9,724.7 669.6,719.3 652.9,694.5 647.9,701.7" fill="#dce18e" stroke="#dce18e" stroke-width="0.7"/>
<polygon points="647.9,701.7 652.9,694.5 636.1,669.6 629.8,678.6" fill="#d9df7a" stroke="#d9df7a" stroke-width="0.7"/>
<polygon points="629.8,678.6 636.1,669.6 619.3,644.7 611.8,655.5" fill="#cfd563" stroke="#cfd563" stroke-width="0.7"/>
<polygon points="611.8,655.5 619.3,644.7 602.5,619.8 593.7,632.4" fill="#cfd653" stroke="#cfd653" stroke-width="0.7"/>
<polygon points="593.7,632.4 602.5,619.8 585.7,594.9 575.7,609.3" fill="#c5cd3f" stroke="#c5cd3f" stroke-width="0.7"/>
<polygon points="575.7,609.3 585.7,594.9 568.9,570.0 557.7,586.2" fill="#c5ce2e" stroke="#c5ce2e" stroke-width="0.7"/>
<polygon points="557.7,586.2 568.9,570.0 552.1,545.1 539.6,563.1" fill="#bbc51c" stroke="#bbc51c" stroke-width="0.7"/>
<polygon points="539.6,563.1 552.1,545.1 493.4,458.0 476.5,482.3" fill="#bec815" stroke="#bec815" stroke-width="0.7"/>
<polygon points="720.0,794.0 720.0,794.0 704.4,766.9 703.2,769.1" fill="#fafae4" stroke="#fafae4" stroke-width="0.7"/>
<polygon points="703.2,769.1 704.4,766.9 688.8,739.9 686.4,744.2" fill="#f2f3c3" stroke="#f2f3c3" stroke-width="0.7"/>
<polygon points="686.4,744.2 688.8,739.9 673.1,712.8 669.6,719.3" fill="#eff1aa" stroke="#eff1aa" stroke-width="0.7"/>
<polygon points="669.6,719.3 673.1,712.8 657.5,685.8 652.9,694.5" fill="#e8e990" stroke="#e8e990" stroke-width="0.7"/>
<polygon points="652.9,694.5 657.5,685.8 641.9,658.7 636.1,669.6" fill="#e8ea7d" stroke="#e8ea7d" stroke-width="0.7"/>
<polygon points="636.1,669.6 641.9,658.7 626.3,631.7 619.3,644.7" fill="#dee165" stroke="#dee165" stroke-width="0.7"/>
<polygon points="619.3,644.7 626.3,631.7 610.6,604.6 602.5,619.8" fill="#dfe253" stroke="#dfe253" stroke-width="0.7"/>
<polygon points="602.5,619.8 610.6,604.6 595.0,577.5 585.7,594.9" fill="#d6d93e" stroke="#d6d93e" stroke-width="0.7"/>
<polygon points="585.7,594.9 595.0,577.5 579.4,550.5 568.9,570.0" fill="#d7da2d" stroke="#d7da2d" stroke-width="0.7"/>
<polygon points="568.9,570.0 579.4,550.5 563.8,523.4 552.1,545.1" fill="#ced11a" stroke="#ced11a" stroke-width="0.7"/>
<polygon points="552.1,545.1 563.8,523.4 509.1,428.7 493.4,458.0" fill="#d0d412" stroke="#d0d412" stroke-width="0.7"/>
<polygon points="720.0,794.0 720.0,794.0 705.6,764.5 704.4,766.9" fill="#faf9e3" stroke="#faf9e3" stroke-width="0.7"/>
<polygon points="704.4,766.9 705.6,764.5 691.2,735.0 688.8,739.9" fill="#f1f1bf" stroke="#f1f1bf" stroke-width="0.7"/>
<polygon points="688.8,739.9 691.2,735.0 676.8,705.5 673.1,712.8" fill="#ededa5" stroke="#ededa5" stroke-width="0.7"/>
<polygon points="673.1,712.8 676.8,705.5 662.4,676.0 657.5,685.8" fill="#e4e48a" stroke="#e4e48a" stroke-width="0.7"/>
<polygon points="657.5,685.8 662.4,676.0 648.0,646.4 641.9,658.7" fill="#e4e376" stroke="#e4e376" stroke-width="0.7"/>
<polygon points="641.9,658.7 648.0,646.4 633.6,616.9 626.3,631.7" fill="#dad95e" stroke="#dad95e" stroke-width="0.7"/>
<polygon points="626.3,631.7 633.6,616.9 619.2,587.4 610.6,604.6" fill="#dcdb4d" stroke="#dcdb4d" stroke-width="0.7"/>
<polygon points="610.6,604.6 619.2,587.4 604.8,557.9 595.0,577.5" fill="#d3d238" stroke="#d3d238" stroke-width="0.7"/>
<polygon points="595.0,577.5 604.8,557.9 590.5,528.4 579.4,550.5" fill="#d5d427" stroke="#d5d427" stroke-width="0.7"/>
<polygon points="579.4,550.5 590.5,528.4 576.1,498.9 563.8,523.4" fill="#cdcb15" stroke="#cdcb15" stroke-width="0.7"/>
<polygon points="563.8,523.4 576.1,498.9 525.7,395.6 509.1,428.7" fill="#d0cf0d" stroke="#d0cf0d" stroke-width="0.7"/>
<polygon points="720.0,794.0 720.0,794.0 706.9,761.5 705.6,764.5" fill="#fcfbe3" stroke="#fcfbe3" stroke-width="0.7"/>
<polygon points="705.6,764.5 706.9,761.5 693.7,729.0 691.2,735.0" fill="#f7f5c1" stroke="#f7f5c1" stroke-width="0.7"/>
<polygon points="691.2,735.0 693.7,729.0 680.6,696.5 676.8,705.5" fill="#f6f3a7" stroke="#f6f3a7" stroke-width="0.7"/>
<polygon points="676.8,705.5 680.6,696.5 667.5,664.0 662.4,676.0" fill="#f0ec8c" stroke="#f0ec8c" stroke-width="0.7"/>
<polygon points="662.4,676.0 667.5,664.0 654.3,631.5 648.0,646.4" fill="#f2ee78" stroke="#f2ee78" stroke-width="0.7"/>
<polygon points="648.0,646.4 654.3,631.5 641.2,599.0 633.6,616.9" fill="#eae560" stroke="#eae560" stroke-width="0.7"/>
<polygon points="633.6,616.9 641.2,599.0 628.1,566.5 619.2,587.4" fill="#ede74d" stroke="#ede74d" stroke-width="0.7"/>
<polygon points="619.2,587.4 628.1,566.5 614.9,534.0 604.8,557.9" fill="#e4de38" stroke="#e4de38" stroke-width="0.7"/>
<polygon points="604.8,557.9 614.9,534.0 601.8,501.5 590.5,528.4" fill="#e7e025" stroke="#e7e025" stroke-width="0.7"/>
<polygon points="590.5,528.4 601.8,501.5 588.7,469.0 576.1,498.9" fill="#dfd712" stroke="#dfd712" stroke-width="0.7"/>
<polygon points="576.1,498.9 588.7,469.0 542.7,355.2 525.7,395.6" fill="#e3db09" stroke="#e3db09" stroke-width="0.7"/>
<polygon points="720.0,794.0 720.0,794.0 708.2,757.6 706.9,761.5" fill="#fcfae2" stroke="#fcfae2" stroke-width="0.7"/>
<polygon points="706.9,761.5 708.2,757.6 696.3,721.2 693.7,729.0" fill="#f6f2bd" stroke="#f6f2bd" stroke-width="0.7"/>
<polygon points="693.7,729.0 696.3,721.2 684.5,684.8 680.6,696.5" fill="#f4efa2" stroke="#f4efa2" stroke-width="0.7"/>
<polygon points="680.6,696.5 684.5,684.8 672.7,648.4 667.5,664.0" fill="#ede786" stroke="#ede786" stroke-width="0.7"/>
<polygon points="667.5,664.0 672.7,648.4 660.8,612.0 654.3,631.5" fill="#eee671" stroke="#eee671" stroke-width="0.7"/>
<polygon points="654.3,631.5 660.8,612.0 649.0,575.5 641.2,599.0" fill="#e5dd59" stroke="#e5dd59" stroke-width="0.7"/>
<polygon points="641.2,599.0 649.0,575.5 637.2,539.1 628.1,566.5" fill="#e9df47" stroke="#e9df47" stroke-width="0.7"/>
<polygon points="628.1,566.5 637.2,539.1 625.4,502.7 614.9,534.0" fill="#e1d732" stroke="#e1d732" stroke-width="0.7"/>
<polygon points="614.9,534.0 625.4,502.7 613.5,466.3 601.8,501.5" fill="#e5d920" stroke="#e5d920" stroke-width="0.7"/>
<polygon points="601.8,501.5 613.5,466.3 601.7,429.9 588.7,469.0" fill="#ddd10e" stroke="#ddd10e" stroke-width="0.7"/>
<polygon points="588.7,469.0 601.7,429.9 560.3,302.5 542.7,355.2" fill="#e2d505" stroke="#e2d505" stroke-width="0.7"/>
<polygon points="720.0,794.0 720.0,794.0 709.7,752.8 708.2,757.6" fill="#fefbe3" stroke="#fefbe3" stroke-width="0.7"/>
<polygon points="708.2,757.6 709.7,752.8 699.5,711.6 696.3,721.2" fill="#fbf5bf" stroke="#fbf5bf" stroke-width="0.7"/>
<polygon points="696.3,721.2 699.5,711.6 689.2,670.4 684.5,684.8" fill="#fcf4a5" stroke="#fcf4a5" stroke-width="0.7"/>
<polygon points="684.5,684.8 689.2,670.4 678.9,629.2 672.7,648.4" fill="#f8ee8a" stroke="#f8ee8a" stroke-width="0.7"/>
<polygon points="672.7,648.4 678.9,629.2 668.6,588.0 660.8,612.0" fill="#fcef75" stroke="#fcef75" stroke-width="0.7"/>
<polygon points="660.8,612.0 668.6,588.0 658.4,546.8 649.0,575.5" fill="#f5e75c" stroke="#f5e75c" stroke-width="0.7"/>
<polygon points="649.0,575.5 658.4,546.8 648.1,505.6 637.2,539.1" fill="#f9e948" stroke="#f9e948" stroke-width="0.7"/>
<polygon points="637.2,539.1 648.1,505.6 637.8,464.4 625.4,502.7" fill="#f2e032" stroke="#f2e032" stroke-width="0.7"/>
<polygon points="625.4,502.7 637.8,464.4 627.5,423.2 613.5,466.3" fill="#f6e220" stroke="#f6e220" stroke-width="0.7"/>
<polygon points="613.5,466.3 627.5,423.2 617.3,382.0 601.7,429.9" fill="#efda0c" stroke="#efda0c" stroke-width="0.7"/>
<polygon points="601.7,429.9 617.3,382.0 581.3,237.8 560.3,302.5" fill="#f4de03" stroke="#f4de03" stroke-width="0.7"/>
<polygon points="720.0,794.0 720.0,794.0 712.1,749.1 709.7,752.8" fill="#fdfae1" stroke="#fdfae1" stroke-width="0.7"/>
<polygon points="709.7,752.8 712.1,749.1 704.2,704.2 699.5,711.6" fill="#faf2bc" stroke="#faf2bc" stroke-width="0.7"/>
<polygon points="699.5,711.6 704.2,704.2 696.2,659.2 689.2,670.4" fill="#faefa0" stroke="#faefa0" stroke-width="0.7"/>
<polygon points="689.2,670.4 696.2,659.2 688.3,614.3 678.9,629.2" fill="#f4e684" stroke="#f4e684" stroke-width="0.7"/>
<polygon points="678.9,629.2 688.3,614.3 680.4,569.4 668.6,588.0" fill="#f7e66f" stroke="#f7e66f" stroke-width="0.7"/>
<polygon points="668.6,588.0 680.4,569.4 672.5,524.5 658.4,546.8" fill="#efdd57" stroke="#efdd57" stroke-width="0.7"/>
<polygon points="658.4,546.8 672.5,524.5 664.6,479.6 648.1,505.6" fill="#f4df44" stroke="#f4df44" stroke-width="0.7"/>
<polygon points="648.1,505.6 664.6,479.6 656.6,434.6 637.8,464.4" fill="#eed62f" stroke="#eed62f" stroke-width="0.7"/>
<polygon points="637.8,464.4 656.6,434.6 648.7,389.7 627.5,423.2" fill="#f3d81c" stroke="#f3d81c" stroke-width="0.7"/>
<polygon points="627.5,423.2 648.7,389.7 640.8,344.8 617.3,382.0" fill="#ecd009" stroke="#ecd009" stroke-width="0.7"/>
<polygon points="617.3,382.0 640.8,344.8 613.1,187.6 581.3,237.8" fill="#f2d401" stroke="#f2d401" stroke-width="0.7"/>
<polygon points="720.0,794.0 720.0,794.0 715.6,751.9 712.1,749.1" fill="#fffae3" stroke="#fffae3" stroke-width="0.7"/>
<polygon points="712.1,749.1 715.6,751.9 711.1,709.7 704.2,704.2" fill="#fdf4bf" stroke="#fdf4bf" stroke-width="0.7"/>
<polygon points="704.2,704.2 711.1,709.7 706.7,667.6 696.2,659.2" fill="#fff2a5" stroke="#fff2a5" stroke-width="0.7"/>
<polygon points="696.2,659.2 706.7,667.6 702.3,625.5 688.3,614.3" fill="#fcea89" stroke="#fcea89" stroke-width="0.7"/>
<polygon points="688.3,614.3 702.3,625.5 697.9,583.3 680.4,569.4" fill="#ffeb74" stroke="#ffeb74" stroke-width="0.7"/>
<polygon points="680.4,569.4 697.9,583.3 693.4,541.2 672.5,524.5" fill="#fbe25c" stroke="#fbe25c" stroke-width="0.7"/>
<polygon points="672.5,524.5 693.4,541.2 689.0,499.0 664.6,479.6" fill="#ffe448" stroke="#ffe448" stroke-width="0.7"/>
<polygon points="664.6,479.6 689.0,499.0 684.6,456.9 656.6,434.6" fill="#fadb32" stroke="#fadb32" stroke-width="0.7"/>
<polygon points="656.6,434.6 684.6,456.9 680.1,414.8 648.7,389.7" fill="#ffdc1f" stroke="#ffdc1f" stroke-width="0.7"/>
<polygon points="648.7,389.7 680.1,414.8 675.7,372.6 640.8,344.8" fill="#f8d30c" stroke="#f8d30c" stroke-width="0.7"/>
<polygon points="640.8,344.8 675.7,372.6 660.2,225.2 613.1,187.6" fill="#fed702" stroke="#fed702" stroke-width="0.7"/>
<polygon points="720.0,794.0 720.0,794.0 718.6,754.3 715.6,751.9" fill="#fef8e2" stroke="#fef8e2" stroke-width="0.7"/>
<polygon points="715.6,751.9 718.6,754.3 717.2,714.6 711.1,709.7" fill="#faeebd" stroke="#faeebd" stroke-width="0.7"/>
<polygon points="711.1,709.7 717.2,714.6 715.8,674.9 706.7,667.6" fill="#fae9a2" stroke="#fae9a2" stroke-width="0.7"/>
<polygon points="706.7,667.6 715.8,674.9 714.5,635.2 702.3,625.5" fill="#f4df86" stroke="#f4df86" stroke-width="0.7"/>
<polygon points="702.3,625.5 714.5,635.2 713.1,595.5 697.9,583.3" fill="#f7de71" stroke="#f7de71" stroke-width="0.7"/>
<polygon points="697.9,583.3 713.1,595.5 711.7,555.9 693.4,541.2" fill="#f0d359" stroke="#f0d359" stroke-width="0.7"/>
<polygon points="693.4,541.2 711.7,555.9 710.3,516.2 689.0,499.0" fill="#f5d447" stroke="#f5d447" stroke-width="0.7"/>
<polygon points="689.0,499.0 710.3,516.2 708.9,476.5 684.6,456.9" fill="#eeca32" stroke="#eeca32" stroke-width="0.7"/>
<polygon points="684.6,456.9 708.9,476.5 707.5,436.8 680.1,414.8" fill="#f3cb21" stroke="#f3cb21" stroke-width="0.7"/>
<polygon points="680.1,414.8 707.5,436.8 706.1,397.1 675.7,372.6" fill="#edc20e" stroke="#edc20e" stroke-width="0.7"/>
<polygon points="675.7,372.6 706.1,397.1 701.3,258.2 660.2,225.2" fill="#f2c505" stroke="#f2c505" stroke-width="0.7"/>
<polygon points="720.0,794.0 720.0,794.0 721.3,756.5 718.6,754.3" fill="#fff8e3" stroke="#fff8e3" stroke-width="0.7"/>
<polygon points="718.6,754.3 721.3,756.5 722.6,719.1 717.2,714.6" fill="#fdefc1" stroke="#fdefc1" stroke-width="0.7"/>
<polygon points="717.2,714.6 722.6,719.1 723.9,681.6 715.8,674.9" fill="#ffeba7" stroke="#ffeba7" stroke-width="0.7"/>
<polygon points="715.8,674.9 723.9,681.6 725.2,644.2 714.5,635.2" fill="#fce28c" stroke="#fce28c" stroke-width="0.7"/>
<polygon points="714.5,635.2 725.2,644.2 726.5,606.7 713.1,595.5" fill="#ffe178" stroke="#ffe178" stroke-width="0.7"/>
<polygon points="713.1,595.5 726.5,606.7 727.8,569.2 711.7,555.9" fill="#fad760" stroke="#fad760" stroke-width="0.7"/>
<polygon points="711.7,555.9 727.8,569.2 729.2,531.8 710.3,516.2" fill="#ffd74d" stroke="#ffd74d" stroke-width="0.7"/>
<polygon points="710.3,516.2 729.2,531.8 730.5,494.3 708.9,476.5" fill="#f8cd37" stroke="#f8cd37" stroke-width="0.7"/>
<polygon points="708.9,476.5 730.5,494.3 731.8,456.9 707.5,436.8" fill="#fdcc25" stroke="#fdcc25" stroke-width="0.7"/>
<polygon points="707.5,436.8 731.8,456.9 733.1,419.4 706.1,397.1" fill="#f7c311" stroke="#f7c311" stroke-width="0.7"/>
<polygon points="706.1,397.1 733.1,419.4 737.7,288.3 701.3,258.2" fill="#fcc509" stroke="#fcc509" stroke-width="0.7"/>
<polygon points="720.0,794.0 720.0,794.0 723.7,758.5 721.3,756.5" fill="#fdf6e3" stroke="#fdf6e3" stroke-width="0.7"/>
<polygon points="721.3,756.5 723.7,758.5 727.5,723.1 722.6,719.1" fill="#f9eabf" stroke="#f9eabf" stroke-width="0.7"/>
<polygon points="722.6,719.1 727.5,723.1 731.2,687.6 723.9,681.6" fill="#f9e3a4" stroke="#f9e3a4" stroke-width="0.7"/>
<polygon points="723.9,681.6 731.2,687.6 734.9,652.2 725.2,644.2" fill="#f4d889" stroke="#f4d889" stroke-width="0.7"/>
<polygon points="725.2,644.2 734.9,652.2 738.6,616.7 726.5,606.7" fill="#f6d475" stroke="#f6d475" stroke-width="0.7"/>
<polygon points="726.5,606.7 738.6,616.7 742.4,581.3 727.8,569.2" fill="#efc95d" stroke="#efc95d" stroke-width="0.7"/>
<polygon points="727.8,569.2 742.4,581.3 746.1,545.8 729.2,531.8" fill="#f4c84b" stroke="#f4c84b" stroke-width="0.7"/>
<polygon points="729.2,531.8 746.1,545.8 749.8,510.3 730.5,494.3" fill="#edbd37" stroke="#edbd37" stroke-width="0.7"/>
<polygon points="730.5,494.3 749.8,510.3 753.5,474.9 731.8,456.9" fill="#f2bc26" stroke="#f2bc26" stroke-width="0.7"/>
<polygon points="731.8,456.9 753.5,474.9 757.3,439.4 733.1,419.4" fill="#ebb213" stroke="#ebb213" stroke-width="0.7"/>
<polygon points="733.1,419.4 757.3,439.4 770.3,315.3 737.7,288.3" fill="#f1b40b" stroke="#f1b40b" stroke-width="0.7"/>
<polygon points="720.0,794.0 720.0,794.0 726.0,760.2 723.7,758.5" fill="#fef7e4" stroke="#fef7e4" stroke-width="0.7"/>
<polygon points="723.7,758.5 726.0,760.2 731.9,726.4 727.5,723.1" fill="#fcebc2" stroke="#fcebc2" stroke-width="0.7"/>
<polygon points="727.5,723.1 731.9,726.4 737.9,692.5 731.2,687.6" fill="#ffe5a9" stroke="#ffe5a9" stroke-width="0.7"/>
<polygon points="731.2,687.6 737.9,692.5 743.9,658.7 734.9,652.2" fill="#fbdb8f" stroke="#fbdb8f" stroke-width="0.7"/>
<polygon points="734.9,652.2 743.9,658.7 749.8,624.9 738.6,616.7" fill="#ffd87b" stroke="#ffd87b" stroke-width="0.7"/>
<polygon points="738.6,616.7 749.8,624.9 755.8,591.1 742.4,581.3" fill="#f9cd63" stroke="#f9cd63" stroke-width="0.7"/>
<polygon points="742.4,581.3 755.8,591.1 761.7,557.2 746.1,545.8" fill="#fecb51" stroke="#fecb51" stroke-width="0.7"/>
<polygon points="746.1,545.8 761.7,557.2 767.7,523.4 749.8,510.3" fill="#f7c03c" stroke="#f7c03c" stroke-width="0.7"/>
<polygon points="749.8,510.3 767.7,523.4 773.7,489.6 753.5,474.9" fill="#fcbe2a" stroke="#fcbe2a" stroke-width="0.7"/>
<polygon points="753.5,474.9 773.7,489.6 779.6,455.8 757.3,439.4" fill="#f5b317" stroke="#f5b317" stroke-width="0.7"/>
<polygon points="757.3,439.4 779.6,455.8 800.5,337.4 770.3,315.3" fill="#fab50e" stroke="#fab50e" stroke-width="0.7"/>
<polygon points="720.0,794.0 720.0,794.0 728.1,761.6 726.0,760.2" fill="#fdf5e3" stroke="#fdf5e3" stroke-width="0.7"/>
<polygon points="726.0,760.2 728.1,761.6 736.1,729.2 731.9,726.4" fill="#f9e6c0" stroke="#f9e6c0" stroke-width="0.7"/>
<polygon points="731.9,726.4 736.1,729.2 744.2,696.9 737.9,692.5" fill="#f9dea6" stroke="#f9dea6" stroke-width="0.7"/>
<polygon points="737.9,692.5 744.2,696.9 752.3,664.5 743.9,658.7" fill="#f3d18c" stroke="#f3d18c" stroke-width="0.7"/>
<polygon points="743.9,658.7 752.3,664.5 760.4,632.1 749.8,624.9" fill="#f5cc78" stroke="#f5cc78" stroke-width="0.7"/>
<polygon points="749.8,624.9 760.4,632.1 768.4,599.7 755.8,591.1" fill="#eebf61" stroke="#eebf61" stroke-width="0.7"/>
<polygon points="755.8,591.1 768.4,599.7 776.5,567.4 761.7,557.2" fill="#f2bd4f" stroke="#f2bd4f" stroke-width="0.7"/>
<polygon points="761.7,557.2 776.5,567.4 784.6,535.0 767.7,523.4" fill="#ebb23b" stroke="#ebb23b" stroke-width="0.7"/>
<polygon points="767.7,523.4 784.6,535.0 792.6,502.6 773.7,489.6" fill="#f0af2a" stroke="#f0af2a" stroke-width="0.7"/>
<polygon points="773.7,489.6 792.6,502.6 800.7,470.2 779.6,455.8" fill="#e9a518" stroke="#e9a518" stroke-width="0.7"/>
<polygon points="779.6,455.8 800.7,470.2 829.0,356.9 800.5,337.4" fill="#efa610" stroke="#efa610" stroke-width="0.7"/>
<polygon points="720.0,794.0 720.0,794.0 730.1,763.0 728.1,761.6" fill="#fef5e4" stroke="#fef5e4" stroke-width="0.7"/>
<polygon points="728.1,761.6 730.1,763.0 740.1,732.0 736.1,729.2" fill="#fce8c3" stroke="#fce8c3" stroke-width="0.7"/>
<polygon points="736.1,729.2 740.1,732.0 750.2,701.0 744.2,696.9" fill="#fee0ab" stroke="#fee0ab" stroke-width="0.7"/>
<polygon points="744.2,696.9 750.2,701.0 760.3,670.0 752.3,664.5" fill="#fad491" stroke="#fad491" stroke-width="0.7"/>
<polygon points="752.3,664.5 760.3,670.0 770.4,639.0 760.4,632.1" fill="#fed07e" stroke="#fed07e" stroke-width="0.7"/>
<polygon points="760.4,632.1 770.4,639.0 780.4,608.0 768.4,599.7" fill="#f8c367" stroke="#f8c367" stroke-width="0.7"/>
<polygon points="768.4,599.7 780.4,608.0 790.5,577.0 776.5,567.4" fill="#fcc055" stroke="#fcc055" stroke-width="0.7"/>
<polygon points="776.5,567.4 790.5,577.0 800.6,546.0 784.6,535.0" fill="#f5b440" stroke="#f5b440" stroke-width="0.7"/>
<polygon points="784.6,535.0 800.6,546.0 810.7,515.0 792.6,502.6" fill="#fab02f" stroke="#fab02f" stroke-width="0.7"/>
<polygon points="792.6,502.6 810.7,515.0 820.7,484.0 800.7,470.2" fill="#f3a51c" stroke="#f3a51c" stroke-width="0.7"/>
<polygon points="800.7,470.2 820.7,484.0 856.0,375.5 829.0,356.9" fill="#f8a614" stroke="#f8a614" stroke-width="0.7"/>
<polygon points="720.0,794.0 720.0,794.0 732.0,764.3 730.1,763.0" fill="#fdf3e4" stroke="#fdf3e4" stroke-width="0.7"/>
<polygon points="730.1,763.0 732.0,764.3 744.0,734.6 740.1,732.0" fill="#f8e3c1" stroke="#f8e3c1" stroke-width="0.7"/>
<polygon points="740.1,732.0 744.0,734.6 756.0,705.0 750.2,701.0" fill="#f8d8a8" stroke="#f8d8a8" stroke-width="0.7"/>
<polygon points="750.2,701.0 756.0,705.0 768.0,675.3 760.3,670.0" fill="#f2ca8e" stroke="#f2ca8e" stroke-width="0.7"/>
<polygon points="760.3,670.0 768.0,675.3 780.0,645.6 770.4,639.0" fill="#f4c47b" stroke="#f4c47b" stroke-width="0.7"/>
<polygon points="770.4,639.0 780.0,645.6 791.9,615.9 780.4,608.0" fill="#ecb664" stroke="#ecb664" stroke-width="0.7"/>
<polygon points="780.4,608.0 791.9,615.9 803.9,586.2 790.5,577.0" fill="#f1b253" stroke="#f1b253" stroke-width="0.7"/>
<polygon points="790.5,577.0 803.9,586.2 815.9,556.6 800.6,546.0" fill="#eaa63f" stroke="#eaa63f" stroke-width="0.7"/>
<polygon points="800.6,546.0 815.9,556.6 827.9,526.9 810.7,515.0" fill="#eea32f" stroke="#eea32f" stroke-width="0.7"/>
<polygon points="810.7,515.0 827.9,526.9 839.9,497.2 820.7,484.0" fill="#e7971d" stroke="#e7971d" stroke-width="0.7"/>
<polygon points="820.7,484.0 839.9,497.2 881.9,393.3 856.0,375.5" fill="#ec9715" stroke="#ec9715" stroke-width="0.7"/>
<polygon points="720.0,794.0 720.0,794.0 733.9,765.6 732.0,764.3" fill="#fef3e5" stroke="#fef3e5" stroke-width="0.7"/>
<polygon points="732.0,764.3 733.9,765.6 747.7,737.2 744.0,734.6" fill="#fbe4c5" stroke="#fbe4c5" stroke-width="0.7"/>
<polygon points="744.0,734.6 747.7,737.2 761.6,708.8 756.0,705.0" fill="#fddaad" stroke="#fddaad" stroke-width="0.7"/>
<polygon points="756.0,705.0 761.6,708.8 775.4,680.4 768.0,675.3" fill="#f9cd94" stroke="#f9cd94" stroke-width="0.7"/>
<polygon points="768.0,675.3 775.4,680.4 789.3,652.0 780.0,645.6" fill="#fdc781" stroke="#fdc781" stroke-width="0.7"/>
<polygon points="780.0,645.6 789.3,652.0 803.1,623.6 791.9,615.9" fill="#f6ba6a" stroke="#f6ba6a" stroke-width="0.7"/>
<polygon points="791.9,615.9 803.1,623.6 817.0,595.2 803.9,586.2" fill="#fbb559" stroke="#fbb559" stroke-width="0.7"/>
<polygon points="803.9,586.2 817.0,595.2 830.8,566.8 815.9,556.6" fill="#f3a844" stroke="#f3a844" stroke-width="0.7"/>
<polygon points="815.9,556.6 830.8,566.8 844.7,538.4 827.9,526.9" fill="#f8a333" stroke="#f8a333" stroke-width="0.7"/>
<polygon points="827.9,526.9 844.7,538.4 858.5,510.0 839.9,497.2" fill="#f19721" stroke="#f19721" stroke-width="0.7"/>
<polygon points="839.9,497.2 858.5,510.0 907.0,410.6 881.9,393.3" fill="#f69719" stroke="#f69719" stroke-width="0.7"/>
<polygon points="720.0,794.0 720.0,794.0 735.7,766.9 733.9,765.6" fill="#fdf1e4" stroke="#fdf1e4" stroke-width="0.7"/>
<polygon points="733.9,765.6 735.7,766.9 751.3,739.7 747.7,737.2" fill="#f8dfc3" stroke="#f8dfc3" stroke-width="0.7"/>
<polygon points="747.7,737.2 751.3,739.7 767.0,712.6 761.6,708.8" fill="#f7d3aa" stroke="#f7d3aa" stroke-width="0.7"/>
<polygon points="761.6,708.8 767.0,712.6 782.7,685.4 775.4,680.4" fill="#f0c490" stroke="#f0c490" stroke-width="0.7"/>
<polygon points="775.4,680.4 782.7,685.4 798.4,658.3 789.3,652.0" fill="#f2bc7d" stroke="#f2bc7d" stroke-width="0.7"/>
<polygon points="789.3,652.0 798.4,658.3 814.0,631.1 803.1,623.6" fill="#ebad67" stroke="#ebad67" stroke-width="0.7"/>
<polygon points="803.1,623.6 814.0,631.1 829.7,604.0 817.0,595.2" fill="#efa857" stroke="#efa857" stroke-width="0.7"/>
<polygon points="817.0,595.2 829.7,604.0 845.4,576.8 830.8,566.8" fill="#e89b43" stroke="#e89b43" stroke-width="0.7"/>
<polygon points="830.8,566.8 845.4,576.8 861.1,549.7 844.7,538.4" fill="#ec9633" stroke="#ec9633" stroke-width="0.7"/>
<polygon points="844.7,538.4 861.1,549.7 876.7,522.5 858.5,510.0" fill="#e58a22" stroke="#e58a22" stroke-width="0.7"/>
<polygon points="858.5,510.0 876.7,522.5 931.6,427.5 907.0,410.6" fill="#ea891a" stroke="#ea891a" stroke-width="0.7"/>
<polygon points="720.0,794.0 720.0,794.0 737.5,768.1 735.7,766.9" fill="#fef1e6" stroke="#fef1e6" stroke-width="0.7"/>
<polygon points="735.7,766.9 737.5,768.1 754.9,742.2 751.3,739.7" fill="#fbe0c6" stroke="#fbe0c6" stroke-width="0.7"/>
<polygon points="751.3,739.7 754.9,742.2 772.4,716.3 767.0,712.6" fill="#fcd4af" stroke="#fcd4af" stroke-width="0.7"/>
<polygon points="767.0,712.6 772.4,716.3 789.9,690.4 782.7,685.4" fill="#f7c696" stroke="#f7c696" stroke-width="0.7"/>
<polygon points="782.7,685.4 789.9,690.4 807.4,664.5 798.4,658.3" fill="#fbbe84" stroke="#fbbe84" stroke-width="0.7"/>
<polygon points="798.4,658.3 807.4,664.5 824.8,638.6 814.0,631.1" fill="#f4af6d" stroke="#f4af6d" stroke-width="0.7"/>
<polygon points="814.0,631.1 824.8,638.6 842.3,612.7 829.7,604.0" fill="#f9a95c" stroke="#f9a95c" stroke-width="0.7"/>
<polygon points="829.7,604.0 842.3,612.7 859.8,586.7 845.4,576.8" fill="#f19b48" stroke="#f19b48" stroke-width="0.7"/>
<polygon points="845.4,576.8 859.8,586.7 877.3,560.8 861.1,549.7" fill="#f59438" stroke="#f59438" stroke-width="0.7"/>
<polygon points="861.1,549.7 877.3,560.8 894.7,534.9 876.7,522.5" fill="#ee8826" stroke="#ee8826" stroke-width="0.7"/>
<polygon points="876.7,522.5 894.7,534.9 955.9,444.3 931.6,427.5" fill="#f3861e" stroke="#f3861e" stroke-width="0.7"/>
<polygon points="720.0,794.0 720.0,794.0 739.3,769.3 737.5,768.1" fill="#fcefe5" stroke="#fcefe5" stroke-width="0.7"/>
<polygon points="737.5,768.1 739.3,769.3 758.5,744.7 754.9,742.2" fill="#f7dac4" stroke="#f7dac4" stroke-width="0.7"/>
<polygon points="754.9,742.2 758.5,744.7 777.8,720.0 772.4,716.3" fill="#f6ccac" stroke="#f6ccac" stroke-width="0.7"/>
<polygon points="772.4,716.3 777.8,720.0 797.1,695.3 789.9,690.4" fill="#efbb93" stroke="#efbb93" stroke-width="0.7"/>
<polygon points="789.9,690.4 797.1,695.3 816.4,670.7 807.4,664.5" fill="#f0b180" stroke="#f0b180" stroke-width="0.7"/>
<polygon points="807.4,664.5 816.4,670.7 835.6,646.0 824.8,638.6" fill="#e9a16a" stroke="#e9a16a" stroke-width="0.7"/>
<polygon points="824.8,638.6 835.6,646.0 854.9,621.3 842.3,612.7" fill="#ec9a5a" stroke="#ec9a5a" stroke-width="0.7"/>
<polygon points="842.3,612.7 854.9,621.3 874.2,596.6 859.8,586.7" fill="#e58c47" stroke="#e58c47" stroke-width="0.7"/>
<polygon points="859.8,586.7 874.2,596.6 893.5,572.0 877.3,560.8" fill="#e98538" stroke="#e98538" stroke-width="0.7"/>
<polygon points="877.3,560.8 893.5,572.0 912.7,547.3 894.7,534.9" fill="#e27826" stroke="#e27826" stroke-width="0.7"/>
<polygon points="894.7,534.9 912.7,547.3 980.2,461.0 955.9,444.3" fill="#e7761f" stroke="#e7761f" stroke-width="0.7"/>
<polygon points="720.0,794.0 720.0,794.0 741.2,770.5 739.3,769.3" fill="#fdefe6" stroke="#fdefe6" stroke-width="0.7"/>
<polygon points="739.3,769.3 741.2,770.5 762.3,747.0 758.5,744.7" fill="#fadac7" stroke="#fadac7" stroke-width="0.7"/>
<polygon points="758.5,744.7 762.3,747.0 783.5,723.5 777.8,720.0" fill="#faccb0" stroke="#faccb0" stroke-width="0.7"/>
<polygon points="777.8,720.0 783.5,723.5 804.6,700.0 797.1,695.3" fill="#f5bc98" stroke="#f5bc98" stroke-width="0.7"/>
<polygon points="797.1,695.3 804.6,700.0 825.8,676.5 816.4,670.7" fill="#f9b287" stroke="#f9b287" stroke-width="0.7"/>
<polygon points="816.4,670.7 825.8,676.5 846.9,653.0 835.6,646.0" fill="#f2a170" stroke="#f2a170" stroke-width="0.7"/>
<polygon points="835.6,646.0 846.9,653.0 868.1,629.6 854.9,621.3" fill="#f59960" stroke="#f59960" stroke-width="0.7"/>
<polygon points="854.9,621.3 868.1,629.6 889.2,606.1 874.2,596.6" fill="#ee894c" stroke="#ee894c" stroke-width="0.7"/>
<polygon points="874.2,596.6 889.2,606.1 910.4,582.6 893.5,572.0" fill="#f2813c" stroke="#f2813c" stroke-width="0.7"/>
<polygon points="893.5,572.0 910.4,582.6 931.5,559.1 912.7,547.3" fill="#ea732a" stroke="#ea732a" stroke-width="0.7"/>
<polygon points="912.7,547.3 931.5,559.1 1005.6,476.9 980.2,461.0" fill="#ef7023" stroke="#ef7023" stroke-width="0.7"/>
<polygon points="720.0,794.0 720.0,794.0 743.1,771.7 741.2,770.5" fill="#fcede5" stroke="#fcede5" stroke-width="0.7"/>
<polygon points="741.2,770.5 743.1,771.7 766.3,749.3 762.3,747.0" fill="#f6d5c5" stroke="#f6d5c5" stroke-width="0.7"/>
<polygon points="762.3,747.0 766.3,749.3 789.4,727.0 783.5,723.5" fill="#f4c4ae" stroke="#f4c4ae" stroke-width="0.7"/>
<polygon points="783.5,723.5 789.4,727.0 812.6,704.6 804.6,700.0" fill="#edb195" stroke="#edb195" stroke-width="0.7"/>
<polygon points="804.6,700.0 812.6,704.6 835.7,682.3 825.8,676.5" fill="#eea583" stroke="#eea583" stroke-width="0.7"/>
<polygon points="825.8,676.5 835.7,682.3 858.8,659.9 846.9,653.0" fill="#e6946d" stroke="#e6946d" stroke-width="0.7"/>
<polygon points="846.9,653.0 858.8,659.9 882.0,637.6 868.1,629.6" fill="#ea8a5e" stroke="#ea8a5e" stroke-width="0.7"/>
<polygon points="868.1,629.6 882.0,637.6 905.1,615.2 889.2,606.1" fill="#e27b4b" stroke="#e27b4b" stroke-width="0.7"/>
<polygon points="889.2,606.1 905.1,615.2 928.2,592.9 910.4,582.6" fill="#e6723c" stroke="#e6723c" stroke-width="0.7"/>
<polygon points="910.4,582.6 928.2,592.9 951.4,570.6 931.5,559.1" fill="#de642b" stroke="#de642b" stroke-width="0.7"/>
<polygon points="931.5,559.1 951.4,570.6 1032.4,492.4 1005.6,476.9" fill="#e36124" stroke="#e36124" stroke-width="0.7"/>
<polygon points="720.0,794.0 720.0,794.0 745.2,772.9 743.1,771.7" fill="#fdece7" stroke="#fdece7" stroke-width="0.7"/>
<polygon points="743.1,771.7 745.2,772.9 770.4,751.7 766.3,749.3" fill="#f9d5c8" stroke="#f9d5c8" stroke-width="0.7"/>
<polygon points="766.3,749.3 770.4,751.7 795.6,730.6 789.4,727.0" fill="#f9c4b2" stroke="#f9c4b2" stroke-width="0.7"/>
<polygon points="789.4,727.0 795.6,730.6 820.8,709.4 812.6,704.6" fill="#f4b19b" stroke="#f4b19b" stroke-width="0.7"/>
<polygon points="812.6,704.6 820.8,709.4 846.0,688.3 835.7,682.3" fill="#f7a689" stroke="#f7a689" stroke-width="0.7"/>
<polygon points="835.7,682.3 846.0,688.3 871.2,667.1 858.8,659.9" fill="#ef9374" stroke="#ef9374" stroke-width="0.7"/>
<polygon points="858.8,659.9 871.2,667.1 896.4,646.0 882.0,637.6" fill="#f28964" stroke="#f28964" stroke-width="0.7"/>
<polygon points="882.0,637.6 896.4,646.0 921.6,624.8 905.1,615.2" fill="#eb7850" stroke="#eb7850" stroke-width="0.7"/>
<polygon points="905.1,615.2 921.6,624.8 946.8,603.7 928.2,592.9" fill="#ee6d41" stroke="#ee6d41" stroke-width="0.7"/>
<polygon points="928.2,592.9 946.8,603.7 972.0,582.5 951.4,570.6" fill="#e65e2f" stroke="#e65e2f" stroke-width="0.7"/>
<polygon points="951.4,570.6 972.0,582.5 1060.3,508.5 1032.4,492.4" fill="#eb5a28" stroke="#eb5a28" stroke-width="0.7"/>
<polygon points="720.0,794.0 720.0,794.0 747.4,774.1 745.2,772.9" fill="#fbeae6" stroke="#fbeae6" stroke-width="0.7"/>
<polygon points="745.2,772.9 747.4,774.1 774.8,754.2 770.4,751.7" fill="#f5cfc7" stroke="#f5cfc7" stroke-width="0.7"/>
<polygon points="770.4,751.7 774.8,754.2 802.2,734.2 795.6,730.6" fill="#f3bcaf" stroke="#f3bcaf" stroke-width="0.7"/>
<polygon points="795.6,730.6 802.2,734.2 829.7,714.3 820.8,709.4" fill="#eca797" stroke="#eca797" stroke-width="0.7"/>
<polygon points="820.8,709.4 829.7,714.3 857.1,694.4 846.0,688.3" fill="#ec9986" stroke="#ec9986" stroke-width="0.7"/>
<polygon points="846.0,688.3 857.1,694.4 884.5,674.5 871.2,667.1" fill="#e48670" stroke="#e48670" stroke-width="0.7"/>
<polygon points="871.2,667.1 884.5,674.5 911.9,654.6 896.4,646.0" fill="#e77b62" stroke="#e77b62" stroke-width="0.7"/>
<polygon points="896.4,646.0 911.9,654.6 939.3,634.6 921.6,624.8" fill="#df6a4f" stroke="#df6a4f" stroke-width="0.7"/>
<polygon points="921.6,624.8 939.3,634.6 966.7,614.7 946.8,603.7" fill="#e35f41" stroke="#e35f41" stroke-width="0.7"/>
<polygon points="946.8,603.7 966.7,614.7 994.2,594.8 972.0,582.5" fill="#db5030" stroke="#db5030" stroke-width="0.7"/>
<polygon points="972.0,582.5 994.2,594.8 1090.1,525.1 1060.3,508.5" fill="#e04c29" stroke="#e04c29" stroke-width="0.7"/>
<polygon points="720.0,794.0 720.0,794.0 749.8,775.4 747.4,774.1" fill="#fceae7" stroke="#fceae7" stroke-width="0.7"/>
<polygon points="747.4,774.1 749.8,775.4 779.7,756.7 774.8,754.2" fill="#f8cfca" stroke="#f8cfca" stroke-width="0.7"/>
<polygon points="774.8,754.2 779.7,756.7 809.5,738.1 802.2,734.2" fill="#f8bcb5" stroke="#f8bcb5" stroke-width="0.7"/>
<polygon points="802.2,734.2 809.5,738.1 839.4,719.4 829.7,714.3" fill="#f3a79d" stroke="#f3a79d" stroke-width="0.7"/>
<polygon points="829.7,714.3 839.4,719.4 869.2,700.8 857.1,694.4" fill="#f6998d" stroke="#f6998d" stroke-width="0.7"/>
<polygon points="857.1,694.4 869.2,700.8 899.0,682.1 884.5,674.5" fill="#ee8578" stroke="#ee8578" stroke-width="0.7"/>
<polygon points="884.5,674.5 899.0,682.1 928.9,663.5 911.9,654.6" fill="#f17868" stroke="#f17868" stroke-width="0.7"/>
<polygon points="911.9,654.6 928.9,663.5 958.7,644.8 939.3,634.6" fill="#e96655" stroke="#e96655" stroke-width="0.7"/>
<polygon points="939.3,634.6 958.7,644.8 988.6,626.2 966.7,614.7" fill="#ed5947" stroke="#ed5947" stroke-width="0.7"/>
<polygon points="966.7,614.7 988.6,626.2 1018.4,607.5 994.2,594.8" fill="#e54935" stroke="#e54935" stroke-width="0.7"/>
<polygon points="994.2,594.8 1018.4,607.5 1122.9,542.3 1090.1,525.1" fill="#e9432f" stroke="#e9432f" stroke-width="0.7"/>
<polygon points="720.0,794.0 720.0,794.0 752.5,776.7 749.8,775.4" fill="#fbe7e7" stroke="#fbe7e7" stroke-width="0.7"/>
<polygon points="749.8,775.4 752.5,776.7 784.9,759.5 779.7,756.7" fill="#f5cac8" stroke="#f5cac8" stroke-width="0.7"/>
<polygon points="779.7,756.7 784.9,759.5 817.4,742.2 809.5,738.1" fill="#f3b4b2" stroke="#f3b4b2" stroke-width="0.7"/>
<polygon points="809.5,738.1 817.4,742.2 849.9,724.9 839.4,719.4" fill="#eb9d9a" stroke="#eb9d9a" stroke-width="0.7"/>
<polygon points="839.4,719.4 849.9,724.9 882.4,707.7 869.2,700.8" fill="#ec8c89" stroke="#ec8c89" stroke-width="0.7"/>
<polygon points="869.2,700.8 882.4,707.7 914.8,690.4 899.0,682.1" fill="#e47875" stroke="#e47875" stroke-width="0.7"/>
<polygon points="899.0,682.1 914.8,690.4 947.3,673.1 928.9,663.5" fill="#e76a66" stroke="#e76a66" stroke-width="0.7"/>
<polygon points="928.9,663.5 947.3,673.1 979.8,655.9 958.7,644.8" fill="#df5854" stroke="#df5854" stroke-width="0.7"/>
<polygon points="958.7,644.8 979.8,655.9 1012.3,638.6 988.6,626.2" fill="#e24b46" stroke="#e24b46" stroke-width="0.7"/>
<polygon points="988.6,626.2 1012.3,638.6 1044.7,621.3 1018.4,607.5" fill="#db3b36" stroke="#db3b36" stroke-width="0.7"/>
<polygon points="1018.4,607.5 1044.7,621.3 1158.4,560.9 1122.9,542.3" fill="#df3530" stroke="#df3530" stroke-width="0.7"/>
<polygon points="720.0,794.0 720.0,794.0 753.6,779.0 752.5,776.7" fill="#fce8e8" stroke="#fce8e8" stroke-width="0.7"/>
<polygon points="752.5,776.7 753.6,779.0 787.3,764.0 784.9,759.5" fill="#f8cbcc" stroke="#f8cbcc" stroke-width="0.7"/>
<polygon points="784.9,759.5 787.3,764.0 820.9,749.1 817.4,742.2" fill="#f8b5b8" stroke="#f8b5b8" stroke-width="0.7"/>
<polygon points="817.4,742.2 820.9,749.1 854.6,734.1 849.9,724.9" fill="#f39fa1" stroke="#f39fa1" stroke-width="0.7"/>
<polygon points="849.9,724.9 854.6,734.1 888.2,719.1 882.4,707.7" fill="#f68e92" stroke="#f68e92" stroke-width="0.7"/>
<polygon points="882.4,707.7 888.2,719.1 921.9,704.1 914.8,690.4" fill="#ee797d" stroke="#ee797d" stroke-width="0.7"/>
<polygon points="914.8,690.4 921.9,704.1 955.5,689.1 947.3,673.1" fill="#f16a6f" stroke="#f16a6f" stroke-width="0.7"/>
<polygon points="947.3,673.1 955.5,689.1 989.2,674.2 979.8,655.9" fill="#e9575c" stroke="#e9575c" stroke-width="0.7"/>
<polygon points="979.8,655.9 989.2,674.2 1022.8,659.2 1012.3,638.6" fill="#ec494e" stroke="#ec494e" stroke-width="0.7"/>
<polygon points="1012.3,638.6 1022.8,659.2 1056.5,644.2 1044.7,621.3" fill="#e5373d" stroke="#e5373d" stroke-width="0.7"/>
<polygon points="1044.7,621.3 1056.5,644.2 1174.2,591.8 1158.4,560.9" fill="#e93137" stroke="#e93137" stroke-width="0.7"/>
<polygon points="720.0,794.0 720.0,794.0 754.7,781.4 753.6,779.0" fill="#fbe7e8" stroke="#fbe7e8" stroke-width="0.7"/>
<polygon points="753.6,779.0 754.7,781.4 789.5,768.7 787.3,764.0" fill="#f5c8cb" stroke="#f5c8cb" stroke-width="0.7"/>
<polygon points="787.3,764.0 789.5,768.7 824.2,756.1 820.9,749.1" fill="#f3b1b6" stroke="#f3b1b6" stroke-width="0.7"/>
<polygon points="820.9,749.1 824.2,756.1 859.0,743.4 854.6,734.1" fill="#ec999f" stroke="#ec999f" stroke-width="0.7"/>
<polygon points="854.6,734.1 859.0,743.4 893.7,730.8 888.2,719.1" fill="#ed8890" stroke="#ed8890" stroke-width="0.7"/>
<polygon points="888.2,719.1 893.7,730.8 928.5,718.1 921.9,704.1" fill="#e4737b" stroke="#e4737b" stroke-width="0.7"/>
<polygon points="921.9,704.1 928.5,718.1 963.2,705.5 955.5,689.1" fill="#e7656e" stroke="#e7656e" stroke-width="0.7"/>
<polygon points="955.5,689.1 963.2,705.5 998.0,692.8 989.2,674.2" fill="#e0525d" stroke="#e0525d" stroke-width="0.7"/>
<polygon points="989.2,674.2 998.0,692.8 1032.7,680.2 1022.8,659.2" fill="#e34450" stroke="#e34450" stroke-width="0.7"/>
<polygon points="1022.8,659.2 1032.7,680.2 1067.5,667.5 1056.5,644.2" fill="#db3440" stroke="#db3440" stroke-width="0.7"/>
<polygon points="1056.5,644.2 1067.5,667.5 1189.1,623.3 1174.2,591.8" fill="#e02e3b" stroke="#e02e3b" stroke-width="0.7"/>
<polygon points="720.0,794.0 720.0,794.0 755.9,783.7 754.7,781.4" fill="#fde7ea" stroke="#fde7ea" stroke-width="0.7"/>
<polygon points="754.7,781.4 755.9,783.7 791.7,773.4 789.5,768.7" fill="#f9cacf" stroke="#f9cacf" stroke-width="0.7"/>
<polygon points="789.5,768.7 791.7,773.4 827.6,763.2 824.2,756.1" fill="#f9b4bc" stroke="#f9b4bc" stroke-width="0.7"/>
<polygon points="824.2,756.1 827.6,763.2 863.4,752.9 859.0,743.4" fill="#f39da7" stroke="#f39da7" stroke-width="0.7"/>
<polygon points="859.0,743.4 863.4,752.9 899.3,742.6 893.7,730.8" fill="#f68d99" stroke="#f68d99" stroke-width="0.7"/>
<polygon points="893.7,730.8 899.3,742.6 935.2,732.3 928.5,718.1" fill="#ef7785" stroke="#ef7785" stroke-width="0.7"/>
<polygon points="928.5,718.1 935.2,732.3 971.0,722.0 963.2,705.5" fill="#f26878" stroke="#f26878" stroke-width="0.7"/>
<polygon points="963.2,705.5 971.0,722.0 1006.9,711.7 998.0,692.8" fill="#ea5566" stroke="#ea5566" stroke-width="0.7"/>
<polygon points="998.0,692.8 1006.9,711.7 1042.7,701.5 1032.7,680.2" fill="#ee4659" stroke="#ee4659" stroke-width="0.7"/>
<polygon points="1032.7,680.2 1042.7,701.5 1078.6,691.2 1067.5,667.5" fill="#e63549" stroke="#e63549" stroke-width="0.7"/>
<polygon points="1067.5,667.5 1078.6,691.2 1204.1,655.2 1189.1,623.3" fill="#ea2e44" stroke="#ea2e44" stroke-width="0.7"/>
<polygon points="720.0,794.0 720.0,794.0 756.8,786.2 755.9,783.7" fill="#fce6ea" stroke="#fce6ea" stroke-width="0.7"/>
<polygon points="755.9,783.7 756.8,786.2 793.5,778.4 791.7,773.4" fill="#f5c7ce" stroke="#f5c7ce" stroke-width="0.7"/>
<polygon points="791.7,773.4 793.5,778.4 830.3,770.6 827.6,763.2" fill="#f4b0bb" stroke="#f4b0bb" stroke-width="0.7"/>
<polygon points="827.6,763.2 830.3,770.6 867.1,762.7 863.4,752.9" fill="#ec98a5" stroke="#ec98a5" stroke-width="0.7"/>
<polygon points="863.4,752.9 867.1,762.7 903.8,754.9 899.3,742.6" fill="#ed8797" stroke="#ed8797" stroke-width="0.7"/>
<polygon points="899.3,742.6 903.8,754.9 940.6,747.1 935.2,732.3" fill="#e57183" stroke="#e57183" stroke-width="0.7"/>
<polygon points="935.2,732.3 940.6,747.1 977.3,739.3 971.0,722.0" fill="#e86377" stroke="#e86377" stroke-width="0.7"/>
<polygon points="971.0,722.0 977.3,739.3 1014.1,731.5 1006.9,711.7" fill="#e15066" stroke="#e15066" stroke-width="0.7"/>
<polygon points="1006.9,711.7 1014.1,731.5 1050.9,723.7 1042.7,701.5" fill="#e4425b" stroke="#e4425b" stroke-width="0.7"/>
<polygon points="1042.7,701.5 1050.9,723.7 1087.6,715.9 1078.6,691.2" fill="#dd314c" stroke="#dd314c" stroke-width="0.7"/>
<polygon points="1078.6,691.2 1087.6,715.9 1216.3,688.5 1204.1,655.2" fill="#e12b47" stroke="#e12b47" stroke-width="0.7"/>
<polygon points="720.0,794.0 720.0,794.0 757.7,788.7 756.8,786.2" fill="#fde7eb" stroke="#fde7eb" stroke-width="0.7"/>
<polygon points="756.8,786.2 757.7,788.7 795.4,783.4 793.5,778.4" fill="#f9c9d2" stroke="#f9c9d2" stroke-width="0.7"/>
<polygon points="793.5,778.4 795.4,783.4 833.0,778.1 830.3,770.6" fill="#f9b3c1" stroke="#f9b3c1" stroke-width="0.7"/>
<polygon points="830.3,770.6 833.0,778.1 870.7,772.8 867.1,762.7" fill="#f49cad" stroke="#f49cad" stroke-width="0.7"/>
<polygon points="867.1,762.7 870.7,772.8 908.4,767.5 903.8,754.9" fill="#f78ba0" stroke="#f78ba0" stroke-width="0.7"/>
<polygon points="903.8,754.9 908.4,767.5 946.1,762.2 940.6,747.1" fill="#f0768d" stroke="#f0768d" stroke-width="0.7"/>
<polygon points="940.6,747.1 946.1,762.2 983.7,756.9 977.3,739.3" fill="#f36681" stroke="#f36681" stroke-width="0.7"/>
<polygon points="977.3,739.3 983.7,756.9 1021.4,751.6 1014.1,731.5" fill="#eb5370" stroke="#eb5370" stroke-width="0.7"/>
<polygon points="1014.1,731.5 1021.4,751.6 1059.1,746.3 1050.9,723.7" fill="#ef4465" stroke="#ef4465" stroke-width="0.7"/>
<polygon points="1050.9,723.7 1059.1,746.3 1096.8,741.0 1087.6,715.9" fill="#e73255" stroke="#e73255" stroke-width="0.7"/>
<polygon points="1087.6,715.9 1096.8,741.0 1228.6,722.5 1216.3,688.5" fill="#ec2b51" stroke="#ec2b51" stroke-width="0.7"/>
<polygon points="720.0,794.0 720.0,794.0 758.6,791.3 757.7,788.7" fill="#fce6eb" stroke="#fce6eb" stroke-width="0.7"/>
<polygon points="757.7,788.7 758.6,791.3 797.2,788.6 795.4,783.4" fill="#f5c6d2" stroke="#f5c6d2" stroke-width="0.7"/>
<polygon points="795.4,783.4 797.2,788.6 835.8,785.9 833.0,778.1" fill="#f4afc0" stroke="#f4afc0" stroke-width="0.7"/>
<polygon points="833.0,778.1 835.8,785.9 874.4,783.2 870.7,772.8" fill="#ec96ab" stroke="#ec96ab" stroke-width="0.7"/>
<polygon points="870.7,772.8 874.4,783.2 913.0,780.5 908.4,767.5" fill="#ed859e" stroke="#ed859e" stroke-width="0.7"/>
<polygon points="908.4,767.5 913.0,780.5 951.7,777.8 946.1,762.2" fill="#e56f8c" stroke="#e56f8c" stroke-width="0.7"/>
<polygon points="946.1,762.2 951.7,777.8 990.3,775.1 983.7,756.9" fill="#e86082" stroke="#e86082" stroke-width="0.7"/>
<polygon points="983.7,756.9 990.3,775.1 1028.9,772.4 1021.4,751.6" fill="#e04d72" stroke="#e04d72" stroke-width="0.7"/>
<polygon points="1021.4,751.6 1028.9,772.4 1067.5,769.7 1059.1,746.3" fill="#e43f68" stroke="#e43f68" stroke-width="0.7"/>
<polygon points="1059.1,746.3 1067.5,769.7 1106.1,767.0 1096.8,741.0" fill="#dc2e59" stroke="#dc2e59" stroke-width="0.7"/>
<polygon points="1096.8,741.0 1106.1,767.0 1241.2,757.6 1228.6,722.5" fill="#e12755" stroke="#e12755" stroke-width="0.7"/>
<polygon points="720.0,794.0 720.0,794.0 759.6,794.0 758.6,791.3" fill="#fde7ed" stroke="#fde7ed" stroke-width="0.7"/>
<polygon points="758.6,791.3 759.6,794.0 799.2,794.0 797.2,788.6" fill="#f8c8d7" stroke="#f8c8d7" stroke-width="0.7"/>
<polygon points="797.2,788.6 799.2,794.0 838.7,794.0 835.8,785.9" fill="#f9b2c7" stroke="#f9b2c7" stroke-width="0.7"/>
<polygon points="835.8,785.9 838.7,794.0 878.3,794.0 874.4,783.2" fill="#f39ab5" stroke="#f39ab5" stroke-width="0.7"/>
<polygon points="874.4,783.2 878.3,794.0 917.9,794.0 913.0,780.5" fill="#f688a9" stroke="#f688a9" stroke-width="0.7"/>
<polygon points="913.0,780.5 917.9,794.0 957.5,794.0 951.7,777.8" fill="#ef7398" stroke="#ef7398" stroke-width="0.7"/>
<polygon points="951.7,777.8 957.5,794.0 997.0,794.0 990.3,775.1" fill="#f2638e" stroke="#f2638e" stroke-width="0.7"/>
<polygon points="990.3,775.1 997.0,794.0 1036.6,794.0 1028.9,772.4" fill="#ea4f7d" stroke="#ea4f7d" stroke-width="0.7"/>
<polygon points="1028.9,772.4 1036.6,794.0 1076.2,794.0 1067.5,769.7" fill="#ed3f74" stroke="#ed3f74" stroke-width="0.7"/>
<polygon points="1067.5,769.7 1076.2,794.0 1115.8,794.0 1106.1,767.0" fill="#e62e65" stroke="#e62e65" stroke-width="0.7"/>
<polygon points="1106.1,767.0 1115.8,794.0 1254.3,794.0 1241.2,757.6" fill="#ea2661" stroke="#ea2661" stroke-width="0.7"/>
<polygon points="720.0,794.0 720.0,794.0 760.5,796.8 759.6,794.0" fill="#fbe5ed" stroke="#fbe5ed" stroke-width="0.7"/>
<polygon points="759.6,794.0 760.5,796.8 801.0,799.7 799.2,794.0" fill="#f5c5d6" stroke="#f5c5d6" stroke-width="0.7"/>
<polygon points="799.2,794.0 801.0,799.7 841.5,802.5 838.7,794.0" fill="#f3adc6" stroke="#f3adc6" stroke-width="0.7"/>
<polygon points="838.7,794.0 841.5,802.5 882.0,805.3 878.3,794.0" fill="#eb94b3" stroke="#eb94b3" stroke-width="0.7"/>
<polygon points="878.3,794.0 882.0,805.3 922.5,808.2 917.9,794.0" fill="#ec82a8" stroke="#ec82a8" stroke-width="0.7"/>
<polygon points="917.9,794.0 922.5,808.2 963.0,811.0 957.5,794.0" fill="#e46c97" stroke="#e46c97" stroke-width="0.7"/>
<polygon points="957.5,794.0 963.0,811.0 1003.5,813.8 997.0,794.0" fill="#e75c8e" stroke="#e75c8e" stroke-width="0.7"/>
<polygon points="997.0,794.0 1003.5,813.8 1044.0,816.7 1036.6,794.0" fill="#df497f" stroke="#df497f" stroke-width="0.7"/>
<polygon points="1036.6,794.0 1044.0,816.7 1084.5,819.5 1076.2,794.0" fill="#e23a76" stroke="#e23a76" stroke-width="0.7"/>
<polygon points="1076.2,794.0 1084.5,819.5 1125.0,822.3 1115.8,794.0" fill="#db2969" stroke="#db2969" stroke-width="0.7"/>
<polygon points="1115.8,794.0 1125.0,822.3 1266.7,832.2 1254.3,794.0" fill="#df2266" stroke="#df2266" stroke-width="0.7"/>
<polygon points="720.0,794.0 720.0,794.0 761.4,799.8 760.5,796.8" fill="#fce6ef" stroke="#fce6ef" stroke-width="0.7"/>
<polygon points="760.5,796.8 761.4,799.8 802.9,805.6 801.0,799.7" fill="#f8c6db" stroke="#f8c6db" stroke-width="0.7"/>
<polygon points="801.0,799.7 802.9,805.6 844.3,811.5 841.5,802.5" fill="#f7afce" stroke="#f7afce" stroke-width="0.7"/>
<polygon points="841.5,802.5 844.3,811.5 885.7,817.3 882.0,805.3" fill="#f297bd" stroke="#f297bd" stroke-width="0.7"/>
<polygon points="882.0,805.3 885.7,817.3 927.1,823.1 922.5,808.2" fill="#f485b4" stroke="#f485b4" stroke-width="0.7"/>
<polygon points="922.5,808.2 927.1,823.1 968.6,828.9 963.0,811.0" fill="#ed6ea4" stroke="#ed6ea4" stroke-width="0.7"/>
<polygon points="963.0,811.0 968.6,828.9 1010.0,834.8 1003.5,813.8" fill="#f05e9c" stroke="#f05e9c" stroke-width="0.7"/>
<polygon points="1003.5,813.8 1010.0,834.8 1051.4,840.6 1044.0,816.7" fill="#e8498d" stroke="#e8498d" stroke-width="0.7"/>
<polygon points="1044.0,816.7 1051.4,840.6 1092.8,846.4 1084.5,819.5" fill="#eb3985" stroke="#eb3985" stroke-width="0.7"/>
<polygon points="1084.5,819.5 1092.8,846.4 1134.3,852.2 1125.0,822.3" fill="#e32777" stroke="#e32777" stroke-width="0.7"/>
<polygon points="1125.0,822.3 1134.3,852.2 1279.3,872.6 1266.7,832.2" fill="#e72074" stroke="#e72074" stroke-width="0.7"/>
<polygon points="720.0,794.0 720.0,794.0 760.4,802.6 761.4,799.8" fill="#fbe5ef" stroke="#fbe5ef" stroke-width="0.7"/>
<polygon points="761.4,799.8 760.4,802.6 800.7,811.2 802.9,805.6" fill="#f4c3db" stroke="#f4c3db" stroke-width="0.7"/>
<polygon points="802.9,805.6 800.7,811.2 841.1,819.7 844.3,811.5" fill="#f1abcd" stroke="#f1abcd" stroke-width="0.7"/>
<polygon points="844.3,811.5 841.1,819.7 881.5,828.3 885.7,817.3" fill="#e991bb" stroke="#e991bb" stroke-width="0.7"/>
<polygon points="885.7,817.3 881.5,828.3 921.9,836.9 927.1,823.1" fill="#e97eb2" stroke="#e97eb2" stroke-width="0.7"/>
<polygon points="927.1,823.1 921.9,836.9 962.2,845.5 968.6,828.9" fill="#e068a2" stroke="#e068a2" stroke-width="0.7"/>
<polygon points="968.6,828.9 962.2,845.5 1002.6,854.1 1010.0,834.8" fill="#e3589b" stroke="#e3589b" stroke-width="0.7"/>
<polygon points="1010.0,834.8 1002.6,854.1 1043.0,862.6 1051.4,840.6" fill="#db448d" stroke="#db448d" stroke-width="0.7"/>
<polygon points="1051.4,840.6 1043.0,862.6 1083.3,871.2 1092.8,846.4" fill="#de3586" stroke="#de3586" stroke-width="0.7"/>
<polygon points="1092.8,846.4 1083.3,871.2 1123.7,879.8 1134.3,852.2" fill="#d6237a" stroke="#d6237a" stroke-width="0.7"/>
<polygon points="1134.3,852.2 1123.7,879.8 1265.0,909.8 1279.3,872.6" fill="#da1c78" stroke="#da1c78" stroke-width="0.7"/>
<polygon points="720.0,794.0 720.0,794.0 758.6,805.1 760.4,802.6" fill="#fbe6f1" stroke="#fbe6f1" stroke-width="0.7"/>
<polygon points="760.4,802.6 758.6,805.1 797.2,816.1 800.7,811.2" fill="#f5c6de" stroke="#f5c6de" stroke-width="0.7"/>
<polygon points="800.7,811.2 797.2,816.1 835.8,827.2 841.1,819.7" fill="#f4afd3" stroke="#f4afd3" stroke-width="0.7"/>
<polygon points="841.1,819.7 835.8,827.2 874.4,838.3 881.5,828.3" fill="#ed97c3" stroke="#ed97c3" stroke-width="0.7"/>
<polygon points="881.5,828.3 874.4,838.3 913.0,849.4 921.9,836.9" fill="#ef85bb" stroke="#ef85bb" stroke-width="0.7"/>
<polygon points="921.9,836.9 913.0,849.4 951.7,860.4 962.2,845.5" fill="#e66eac" stroke="#e66eac" stroke-width="0.7"/>
<polygon points="962.2,845.5 951.7,860.4 990.3,871.5 1002.6,854.1" fill="#e85da5" stroke="#e85da5" stroke-width="0.7"/>
<polygon points="1002.6,854.1 990.3,871.5 1028.9,882.6 1043.0,862.6" fill="#df4997" stroke="#df4997" stroke-width="0.7"/>
<polygon points="1043.0,862.6 1028.9,882.6 1067.5,893.6 1083.3,871.2" fill="#e13990" stroke="#e13990" stroke-width="0.7"/>
<polygon points="1083.3,871.2 1067.5,893.6 1106.1,904.7 1123.7,879.8" fill="#d92783" stroke="#d92783" stroke-width="0.7"/>
<polygon points="1123.7,879.8 1106.1,904.7 1241.2,943.5 1265.0,909.8" fill="#dc1f81" stroke="#dc1f81" stroke-width="0.7"/>
<polygon points="720.0,794.0 720.0,794.0 756.9,807.4 758.6,805.1" fill="#f9e5f0" stroke="#f9e5f0" stroke-width="0.7"/>
<polygon points="758.6,805.1 756.9,807.4 793.9,820.9 797.2,816.1" fill="#f0c4dc" stroke="#f0c4dc" stroke-width="0.7"/>
<polygon points="797.2,816.1 793.9,820.9 830.8,834.3 835.8,827.2" fill="#ecaccf" stroke="#ecaccf" stroke-width="0.7"/>
<polygon points="835.8,827.2 830.8,834.3 867.7,847.8 874.4,838.3" fill="#e393bf" stroke="#e393bf" stroke-width="0.7"/>
<polygon points="874.4,838.3 867.7,847.8 904.7,861.2 913.0,849.4" fill="#e181b6" stroke="#e181b6" stroke-width="0.7"/>
<polygon points="913.0,849.4 904.7,861.2 941.6,874.7 951.7,860.4" fill="#d86aa7" stroke="#d86aa7" stroke-width="0.7"/>
<polygon points="951.7,860.4 941.6,874.7 978.5,888.1 990.3,871.5" fill="#d95ba1" stroke="#d95ba1" stroke-width="0.7"/>
<polygon points="990.3,871.5 978.5,888.1 1015.5,901.5 1028.9,882.6" fill="#d04793" stroke="#d04793" stroke-width="0.7"/>
<polygon points="1028.9,882.6 1015.5,901.5 1052.4,915.0 1067.5,893.6" fill="#d1388d" stroke="#d1388d" stroke-width="0.7"/>
<polygon points="1067.5,893.6 1052.4,915.0 1089.3,928.4 1106.1,904.7" fill="#c92781" stroke="#c92781" stroke-width="0.7"/>
<polygon points="1106.1,904.7 1089.3,928.4 1218.6,975.5 1241.2,943.5" fill="#cc207f" stroke="#cc207f" stroke-width="0.7"/>
<polygon points="720.0,794.0 720.0,794.0 755.3,809.7 756.9,807.4" fill="#f9e6f2" stroke="#f9e6f2" stroke-width="0.7"/>
<polygon points="756.9,807.4 755.3,809.7 790.6,825.5 793.9,820.9" fill="#f1c7e0" stroke="#f1c7e0" stroke-width="0.7"/>
<polygon points="793.9,820.9 790.6,825.5 826.0,841.2 830.8,834.3" fill="#eeb1d5" stroke="#eeb1d5" stroke-width="0.7"/>
<polygon points="830.8,834.3 826.0,841.2 861.3,856.9 867.7,847.8" fill="#e698c7" stroke="#e698c7" stroke-width="0.7"/>
<polygon points="867.7,847.8 861.3,856.9 896.6,872.6 904.7,861.2" fill="#e687c0" stroke="#e687c0" stroke-width="0.7"/>
<polygon points="904.7,861.2 896.6,872.6 931.9,888.4 941.6,874.7" fill="#dd71b1" stroke="#dd71b1" stroke-width="0.7"/>
<polygon points="941.6,874.7 931.9,888.4 967.2,904.1 978.5,888.1" fill="#dd60ab" stroke="#dd60ab" stroke-width="0.7"/>
<polygon points="978.5,888.1 967.2,904.1 1002.6,919.8 1015.5,901.5" fill="#d44c9d" stroke="#d44c9d" stroke-width="0.7"/>
<polygon points="1015.5,901.5 1002.6,919.8 1037.9,935.5 1052.4,915.0" fill="#d43d97" stroke="#d43d97" stroke-width="0.7"/>
<polygon points="1052.4,915.0 1037.9,935.5 1073.2,951.3 1089.3,928.4" fill="#cb2b8a" stroke="#cb2b8a" stroke-width="0.7"/>
<polygon points="1089.3,928.4 1073.2,951.3 1196.8,1006.3 1218.6,975.5" fill="#ce2389" stroke="#ce2389" stroke-width="0.7"/>
<polygon points="720.0,794.0 720.0,794.0 753.7,811.9 755.3,809.7" fill="#f7e5f1" stroke="#f7e5f1" stroke-width="0.7"/>
<polygon points="755.3,809.7 753.7,811.9 787.5,829.9 790.6,825.5" fill="#edc5de" stroke="#edc5de" stroke-width="0.7"/>
<polygon points="790.6,825.5 787.5,829.9 821.2,847.8 826.0,841.2" fill="#e7add2" stroke="#e7add2" stroke-width="0.7"/>
<polygon points="826.0,841.2 821.2,847.8 855.0,865.8 861.3,856.9" fill="#dc95c2" stroke="#dc95c2" stroke-width="0.7"/>
<polygon points="861.3,856.9 855.0,865.8 888.7,883.7 896.6,872.6" fill="#da83ba" stroke="#da83ba" stroke-width="0.7"/>
<polygon points="896.6,872.6 888.7,883.7 922.5,901.7 931.9,888.4" fill="#cf6dac" stroke="#cf6dac" stroke-width="0.7"/>
<polygon points="931.9,888.4 922.5,901.7 956.2,919.6 967.2,904.1" fill="#cf5ea6" stroke="#cf5ea6" stroke-width="0.7"/>
<polygon points="967.2,904.1 956.2,919.6 990.0,937.6 1002.6,919.8" fill="#c54a99" stroke="#c54a99" stroke-width="0.7"/>
<polygon points="1002.6,919.8 990.0,937.6 1023.7,955.5 1037.9,935.5" fill="#c53c94" stroke="#c53c94" stroke-width="0.7"/>
<polygon points="1037.9,935.5 1023.7,955.5 1057.5,973.5 1073.2,951.3" fill="#bc2b88" stroke="#bc2b88" stroke-width="0.7"/>
<polygon points="1073.2,951.3 1057.5,973.5 1175.6,1036.3 1196.8,1006.3" fill="#be2487" stroke="#be2487" stroke-width="0.7"/>
<polygon points="720.0,794.0 720.0,794.0 752.2,814.1 753.7,811.9" fill="#f8e7f3" stroke="#f8e7f3" stroke-width="0.7"/>
<polygon points="753.7,811.9 752.2,814.1 784.4,834.3 787.5,829.9" fill="#eec8e2" stroke="#eec8e2" stroke-width="0.7"/>
<polygon points="787.5,829.9 784.4,834.3 816.6,854.4 821.2,847.8" fill="#e9b2d8" stroke="#e9b2d8" stroke-width="0.7"/>
<polygon points="821.2,847.8 816.6,854.4 848.8,874.5 855.0,865.8" fill="#e09aca" stroke="#e09aca" stroke-width="0.7"/>
<polygon points="855.0,865.8 848.8,874.5 881.0,894.6 888.7,883.7" fill="#de89c4" stroke="#de89c4" stroke-width="0.7"/>
<polygon points="888.7,883.7 881.0,894.6 913.2,914.8 922.5,901.7" fill="#d473b6" stroke="#d473b6" stroke-width="0.7"/>
<polygon points="922.5,901.7 913.2,914.8 945.5,934.9 956.2,919.6" fill="#d363b0" stroke="#d363b0" stroke-width="0.7"/>
<polygon points="956.2,919.6 945.5,934.9 977.7,955.0 990.0,937.6" fill="#c84fa3" stroke="#c84fa3" stroke-width="0.7"/>
<polygon points="990.0,937.6 977.7,955.0 1009.9,975.1 1023.7,955.5" fill="#c7409e" stroke="#c7409e" stroke-width="0.7"/>
<polygon points="1023.7,955.5 1009.9,975.1 1042.1,995.3 1057.5,973.5" fill="#bd2e92" stroke="#bd2e92" stroke-width="0.7"/>
<polygon points="1057.5,973.5 1042.1,995.3 1154.8,1065.7 1175.6,1036.3" fill="#bf2791" stroke="#bf2791" stroke-width="0.7"/>
<polygon points="720.0,794.0 720.0,794.0 750.7,816.3 752.2,814.1" fill="#f5e6f1" stroke="#f5e6f1" stroke-width="0.7"/>
<polygon points="752.2,814.1 750.7,816.3 781.4,838.6 784.4,834.3" fill="#e6c6df" stroke="#e6c6df" stroke-width="0.7"/>
<polygon points="784.4,834.3 781.4,838.6 812.0,860.9 816.6,854.4" fill="#deafd4" stroke="#deafd4" stroke-width="0.7"/>
<polygon points="816.6,854.4 812.0,860.9 842.7,883.2 848.8,874.5" fill="#d197c4" stroke="#d197c4" stroke-width="0.7"/>
<polygon points="848.8,874.5 842.7,883.2 873.4,905.4 881.0,894.6" fill="#cc85bd" stroke="#cc85bd" stroke-width="0.7"/>
<polygon points="881.0,894.6 873.4,905.4 904.1,927.7 913.2,914.8" fill="#bf70ae" stroke="#bf70ae" stroke-width="0.7"/>
<polygon points="913.2,914.8 904.1,927.7 934.7,950.0 945.5,934.9" fill="#bd61a9" stroke="#bd61a9" stroke-width="0.7"/>
<polygon points="945.5,934.9 934.7,950.0 965.4,972.3 977.7,955.0" fill="#b24e9c" stroke="#b24e9c" stroke-width="0.7"/>
<polygon points="977.7,955.0 965.4,972.3 996.1,994.6 1009.9,975.1" fill="#b04097" stroke="#b04097" stroke-width="0.7"/>
<polygon points="1009.9,975.1 996.1,994.6 1026.8,1016.9 1042.1,995.3" fill="#a52f8b" stroke="#a52f8b" stroke-width="0.7"/>
<polygon points="1042.1,995.3 1026.8,1016.9 1134.2,1094.9 1154.8,1065.7" fill="#a6288b" stroke="#a6288b" stroke-width="0.7"/>
<polygon points="720.0,794.0 720.0,794.0 749.0,818.3 750.7,816.3" fill="#f4e7f3" stroke="#f4e7f3" stroke-width="0.7"/>
<polygon points="750.7,816.3 749.0,818.3 778.0,842.7 781.4,838.6" fill="#e5cae2" stroke="#e5cae2" stroke-width="0.7"/>
<polygon points="781.4,838.6 778.0,842.7 807.0,867.0 812.0,860.9" fill="#dcb4d8" stroke="#dcb4d8" stroke-width="0.7"/>
<polygon points="812.0,860.9 807.0,867.0 836.0,891.3 842.7,883.2" fill="#cf9dca" stroke="#cf9dca" stroke-width="0.7"/>
<polygon points="842.7,883.2 836.0,891.3 865.0,915.7 873.4,905.4" fill="#ca8cc4" stroke="#ca8cc4" stroke-width="0.7"/>
<polygon points="873.4,905.4 865.0,915.7 894.0,940.0 904.1,927.7" fill="#bd77b6" stroke="#bd77b6" stroke-width="0.7"/>
<polygon points="904.1,927.7 894.0,940.0 923.0,964.3 934.7,950.0" fill="#b867b0" stroke="#b867b0" stroke-width="0.7"/>
<polygon points="934.7,950.0 923.0,964.3 952.0,988.7 965.4,972.3" fill="#ac54a3" stroke="#ac54a3" stroke-width="0.7"/>
<polygon points="965.4,972.3 952.0,988.7 981.0,1013.0 996.1,994.6" fill="#a7459e" stroke="#a7459e" stroke-width="0.7"/>
<polygon points="996.1,994.6 981.0,1013.0 1010.0,1037.3 1026.8,1016.9" fill="#9c3492" stroke="#9c3492" stroke-width="0.7"/>
<polygon points="1026.8,1016.9 1010.0,1037.3 1111.5,1122.5 1134.2,1094.9" fill="#9b2d91" stroke="#9b2d91" stroke-width="0.7"/>
<polygon points="720.0,794.0 720.0,794.0 747.3,820.4 749.0,818.3" fill="#f1e7f1" stroke="#f1e7f1" stroke-width="0.7"/>
<polygon points="749.0,818.3 747.3,820.4 774.6,846.7 778.0,842.7" fill="#dec8df" stroke="#dec8df" stroke-width="0.7"/>
<polygon points="778.0,842.7 774.6,846.7 801.9,873.1 807.0,867.0" fill="#d1b1d4" stroke="#d1b1d4" stroke-width="0.7"/>
<polygon points="807.0,867.0 801.9,873.1 829.2,899.5 836.0,891.3" fill="#c199c4" stroke="#c199c4" stroke-width="0.7"/>
<polygon points="836.0,891.3 829.2,899.5 856.5,925.9 865.0,915.7" fill="#b988bd" stroke="#b988bd" stroke-width="0.7"/>
<polygon points="865.0,915.7 856.5,925.9 883.9,952.2 894.0,940.0" fill="#aa73ae" stroke="#aa73ae" stroke-width="0.7"/>
<polygon points="894.0,940.0 883.9,952.2 911.2,978.6 923.0,964.3" fill="#a465a9" stroke="#a465a9" stroke-width="0.7"/>
<polygon points="923.0,964.3 911.2,978.6 938.5,1005.0 952.0,988.7" fill="#97529c" stroke="#97529c" stroke-width="0.7"/>
<polygon points="952.0,988.7 938.5,1005.0 965.8,1031.3 981.0,1013.0" fill="#914497" stroke="#914497" stroke-width="0.7"/>
<polygon points="981.0,1013.0 965.8,1031.3 993.1,1057.7 1010.0,1037.3" fill="#85348b" stroke="#85348b" stroke-width="0.7"/>
<polygon points="1010.0,1037.3 993.1,1057.7 1088.7,1150.0 1111.5,1122.5" fill="#842e8b" stroke="#842e8b" stroke-width="0.7"/>
<polygon points="720.0,794.0 720.0,794.0 745.6,822.4 747.3,820.4" fill="#f0e8f2" stroke="#f0e8f2" stroke-width="0.7"/>
<polygon points="747.3,820.4 745.6,822.4 771.2,850.9 774.6,846.7" fill="#dccbe2" stroke="#dccbe2" stroke-width="0.7"/>
<polygon points="774.6,846.7 771.2,850.9 796.8,879.3 801.9,873.1" fill="#cfb6d8" stroke="#cfb6d8" stroke-width="0.7"/>
<polygon points="801.9,873.1 796.8,879.3 822.4,907.7 829.2,899.5" fill="#bf9fca" stroke="#bf9fca" stroke-width="0.7"/>
<polygon points="829.2,899.5 822.4,907.7 848.0,936.2 856.5,925.9" fill="#b68fc4" stroke="#b68fc4" stroke-width="0.7"/>
<polygon points="856.5,925.9 848.0,936.2 873.6,964.6 883.9,952.2" fill="#a67ab6" stroke="#a67ab6" stroke-width="0.7"/>
<polygon points="883.9,952.2 873.6,964.6 899.2,993.0 911.2,978.6" fill="#9e6bb0" stroke="#9e6bb0" stroke-width="0.7"/>
<polygon points="911.2,978.6 899.2,993.0 924.8,1021.5 938.5,1005.0" fill="#8f58a2" stroke="#8f58a2" stroke-width="0.7"/>
<polygon points="938.5,1005.0 924.8,1021.5 950.4,1049.9 965.8,1031.3" fill="#87499d" stroke="#87499d" stroke-width="0.7"/>
<polygon points="965.8,1031.3 950.4,1049.9 976.0,1078.3 993.1,1057.7" fill="#7a3891" stroke="#7a3891" stroke-width="0.7"/>
<polygon points="993.1,1057.7 976.0,1078.3 1065.6,1177.8 1088.7,1150.0" fill="#773290" stroke="#773290" stroke-width="0.7"/>
<polygon points="720.0,794.0 720.0,794.0 743.8,824.4 745.6,822.4" fill="#ede7f1" stroke="#ede7f1" stroke-width="0.7"/>
<polygon points="745.6,822.4 743.8,824.4 767.5,854.9 771.2,850.9" fill="#d5c8de" stroke="#d5c8de" stroke-width="0.7"/>
<polygon points="771.2,850.9 767.5,854.9 791.3,885.3 796.8,879.3" fill="#c4b2d2" stroke="#c4b2d2" stroke-width="0.7"/>
<polygon points="796.8,879.3 791.3,885.3 815.1,915.7 822.4,907.7" fill="#b19ac2" stroke="#b19ac2" stroke-width="0.7"/>
<polygon points="822.4,907.7 815.1,915.7 838.9,946.1 848.0,936.2" fill="#a589ba" stroke="#a589ba" stroke-width="0.7"/>
<polygon points="848.0,936.2 838.9,946.1 862.6,976.6 873.6,964.6" fill="#9474ac" stroke="#9474ac" stroke-width="0.7"/>
<polygon points="873.6,964.6 862.6,976.6 886.4,1007.0 899.2,993.0" fill="#8a66a6" stroke="#8a66a6" stroke-width="0.7"/>
<polygon points="899.2,993.0 886.4,1007.0 910.2,1037.4 924.8,1021.5" fill="#7b5499" stroke="#7b5499" stroke-width="0.7"/>
<polygon points="924.8,1021.5 910.2,1037.4 934.0,1067.8 950.4,1049.9" fill="#724694" stroke="#724694" stroke-width="0.7"/>
<polygon points="950.4,1049.9 934.0,1067.8 957.7,1098.3 976.0,1078.3" fill="#643688" stroke="#643688" stroke-width="0.7"/>
<polygon points="976.0,1078.3 957.7,1098.3 1040.9,1204.8 1065.6,1177.8" fill="#613087" stroke="#613087" stroke-width="0.7"/>
<polygon points="720.0,794.0 720.0,794.0 741.8,826.4 743.8,824.4" fill="#ece8f2" stroke="#ece8f2" stroke-width="0.7"/>
<polygon points="743.8,824.4 741.8,826.4 763.7,858.7 767.5,854.9" fill="#d3cbe1" stroke="#d3cbe1" stroke-width="0.7"/>
<polygon points="767.5,854.9 763.7,858.7 785.5,891.1 791.3,885.3" fill="#c2b6d6" stroke="#c2b6d6" stroke-width="0.7"/>
<polygon points="791.3,885.3 785.5,891.1 807.3,923.5 815.1,915.7" fill="#ae9fc7" stroke="#ae9fc7" stroke-width="0.7"/>
<polygon points="815.1,915.7 807.3,923.5 829.2,955.8 838.9,946.1" fill="#a18fc0" stroke="#a18fc0" stroke-width="0.7"/>
<polygon points="838.9,946.1 829.2,955.8 851.0,988.2 862.6,976.6" fill="#8f7ab1" stroke="#8f7ab1" stroke-width="0.7"/>
<polygon points="862.6,976.6 851.0,988.2 872.8,1020.6 886.4,1007.0" fill="#836bab" stroke="#836bab" stroke-width="0.7"/>
<polygon points="886.4,1007.0 872.8,1020.6 894.7,1052.9 910.2,1037.4" fill="#72589d" stroke="#72589d" stroke-width="0.7"/>
<polygon points="910.2,1037.4 894.7,1052.9 916.5,1085.3 934.0,1067.8" fill="#674998" stroke="#674998" stroke-width="0.7"/>
<polygon points="934.0,1067.8 916.5,1085.3 938.3,1117.7 957.7,1098.3" fill="#57388b" stroke="#57388b" stroke-width="0.7"/>
<polygon points="957.7,1098.3 938.3,1117.7 1014.7,1231.0 1040.9,1204.8" fill="#53328a" stroke="#53328a" stroke-width="0.7"/>
<polygon points="720.0,794.0 720.0,794.0 739.8,828.4 741.8,826.4" fill="#e8e7f0" stroke="#e8e7f0" stroke-width="0.7"/>
<polygon points="741.8,826.4 739.8,828.4 759.7,862.7 763.7,858.7" fill="#ccc8dd" stroke="#ccc8dd" stroke-width="0.7"/>
<polygon points="763.7,858.7 759.7,862.7 779.5,897.1 785.5,891.1" fill="#b7b2d0" stroke="#b7b2d0" stroke-width="0.7"/>
<polygon points="785.5,891.1 779.5,897.1 799.4,931.4 807.3,923.5" fill="#a09ac0" stroke="#a09ac0" stroke-width="0.7"/>
<polygon points="807.3,923.5 799.4,931.4 819.2,965.8 829.2,955.8" fill="#9189b7" stroke="#9189b7" stroke-width="0.7"/>
<polygon points="829.2,955.8 819.2,965.8 839.0,1000.2 851.0,988.2" fill="#7d74a8" stroke="#7d74a8" stroke-width="0.7"/>
<polygon points="851.0,988.2 839.0,1000.2 858.9,1034.5 872.8,1020.6" fill="#7066a2" stroke="#7066a2" stroke-width="0.7"/>
<polygon points="872.8,1020.6 858.9,1034.5 878.7,1068.9 894.7,1052.9" fill="#5f5494" stroke="#5f5494" stroke-width="0.7"/>
<polygon points="894.7,1052.9 878.7,1068.9 898.5,1103.3 916.5,1085.3" fill="#52468e" stroke="#52468e" stroke-width="0.7"/>
<polygon points="916.5,1085.3 898.5,1103.3 918.4,1137.6 938.3,1117.7" fill="#433682" stroke="#433682" stroke-width="0.7"/>
<polygon points="938.3,1117.7 918.4,1137.6 987.8,1257.9 1014.7,1231.0" fill="#3d3081" stroke="#3d3081" stroke-width="0.7"/>
<polygon points="720.0,794.0 720.0,794.0 737.6,830.1 739.8,828.4" fill="#e8e9f2" stroke="#e8e9f2" stroke-width="0.7"/>
<polygon points="739.8,828.4 737.6,830.1 755.2,866.2 759.7,862.7" fill="#cacde2" stroke="#cacde2" stroke-width="0.7"/>
<polygon points="759.7,862.7 755.2,866.2 772.8,902.3 779.5,897.1" fill="#b5b9d8" stroke="#b5b9d8" stroke-width="0.7"/>
<polygon points="779.5,897.1 772.8,902.3 790.4,938.4 799.4,931.4" fill="#9ea3ca" stroke="#9ea3ca" stroke-width="0.7"/>
<polygon points="799.4,931.4 790.4,938.4 808.1,974.5 819.2,965.8" fill="#8e93c3" stroke="#8e93c3" stroke-width="0.7"/>
<polygon points="819.2,965.8 808.1,974.5 825.7,1010.6 839.0,1000.2" fill="#797fb5" stroke="#797fb5" stroke-width="0.7"/>
<polygon points="839.0,1000.2 825.7,1010.6 843.3,1046.7 858.9,1034.5" fill="#6a71af" stroke="#6a71af" stroke-width="0.7"/>
<polygon points="858.9,1034.5 843.3,1046.7 860.9,1082.9 878.7,1068.9" fill="#565ea2" stroke="#565ea2" stroke-width="0.7"/>
<polygon points="878.7,1068.9 860.9,1082.9 878.5,1119.0 898.5,1103.3" fill="#48519d" stroke="#48519d" stroke-width="0.7"/>
<polygon points="898.5,1103.3 878.5,1119.0 896.1,1155.1 918.4,1137.6" fill="#374090" stroke="#374090" stroke-width="0.7"/>
<polygon points="918.4,1137.6 896.1,1155.1 957.7,1281.4 987.8,1257.9" fill="#303a8f" stroke="#303a8f" stroke-width="0.7"/>
<polygon points="720.0,794.0 720.0,794.0 734.9,830.9 737.6,830.1" fill="#e5e9f2" stroke="#e5e9f2" stroke-width="0.7"/>
<polygon points="737.6,830.1 734.9,830.9 749.8,867.8 755.2,866.2" fill="#c5cde2" stroke="#c5cde2" stroke-width="0.7"/>
<polygon points="755.2,866.2 749.8,867.8 764.8,904.8 772.8,902.3" fill="#adb8d7" stroke="#adb8d7" stroke-width="0.7"/>
<polygon points="772.8,902.3 764.8,904.8 779.7,941.7 790.4,938.4" fill="#94a2c8" stroke="#94a2c8" stroke-width="0.7"/>
<polygon points="790.4,938.4 779.7,941.7 794.6,978.6 808.1,974.5" fill="#8293c1" stroke="#8293c1" stroke-width="0.7"/>
<polygon points="808.1,974.5 794.6,978.6 809.5,1015.5 825.7,1010.6" fill="#6c7fb4" stroke="#6c7fb4" stroke-width="0.7"/>
<polygon points="825.7,1010.6 809.5,1015.5 824.4,1052.5 843.3,1046.7" fill="#5c73af" stroke="#5c73af" stroke-width="0.7"/>
<polygon points="843.3,1046.7 824.4,1052.5 839.3,1089.4 860.9,1082.9" fill="#4962a3" stroke="#4962a3" stroke-width="0.7"/>
<polygon points="860.9,1082.9 839.3,1089.4 854.3,1126.3 878.5,1119.0" fill="#3a569f" stroke="#3a569f" stroke-width="0.7"/>
<polygon points="878.5,1119.0 854.3,1126.3 869.2,1163.2 896.1,1155.1" fill="#294693" stroke="#294693" stroke-width="0.7"/>
<polygon points="896.1,1155.1 869.2,1163.2 921.4,1292.5 957.7,1281.4" fill="#224193" stroke="#224193" stroke-width="0.7"/>
<polygon points="720.0,794.0 720.0,794.0 732.1,831.3 734.9,830.9" fill="#e6ecf5" stroke="#e6ecf5" stroke-width="0.7"/>
<polygon points="734.9,830.9 732.1,831.3 744.2,868.5 749.8,867.8" fill="#c7d3e8" stroke="#c7d3e8" stroke-width="0.7"/>
<polygon points="749.8,867.8 744.2,868.5 756.3,905.8 764.8,904.8" fill="#b0c2e1" stroke="#b0c2e1" stroke-width="0.7"/>
<polygon points="764.8,904.8 756.3,905.8 768.4,943.1 779.7,941.7" fill="#97afd6" stroke="#97afd6" stroke-width="0.7"/>
<polygon points="779.7,941.7 768.4,943.1 780.6,980.4 794.6,978.6" fill="#85a2d2" stroke="#85a2d2" stroke-width="0.7"/>
<polygon points="794.6,978.6 780.6,980.4 792.7,1017.6 809.5,1015.5" fill="#6f8fc5" stroke="#6f8fc5" stroke-width="0.7"/>
<polygon points="809.5,1015.5 792.7,1017.6 804.8,1054.9 824.4,1052.5" fill="#5e84c2" stroke="#5e84c2" stroke-width="0.7"/>
<polygon points="824.4,1052.5 804.8,1054.9 816.9,1092.2 839.3,1089.4" fill="#4a73b6" stroke="#4a73b6" stroke-width="0.7"/>
<polygon points="839.3,1089.4 816.9,1092.2 829.0,1129.5 854.3,1126.3" fill="#3a68b4" stroke="#3a68b4" stroke-width="0.7"/>
<polygon points="854.3,1126.3 829.0,1129.5 841.1,1166.7 869.2,1163.2" fill="#2858a8" stroke="#2858a8" stroke-width="0.7"/>
<polygon points="869.2,1163.2 841.1,1166.7 883.5,1297.2 921.4,1292.5" fill="#2154a9" stroke="#2154a9" stroke-width="0.7"/>
<polygon points="720.0,794.0 720.0,794.0 729.4,831.6 732.1,831.3" fill="#e5ecf6" stroke="#e5ecf6" stroke-width="0.7"/>
<polygon points="732.1,831.3 729.4,831.6 738.8,869.3 744.2,868.5" fill="#c3d4e9" stroke="#c3d4e9" stroke-width="0.7"/>
<polygon points="744.2,868.5 738.8,869.3 748.2,906.9 756.3,905.8" fill="#abc3e2" stroke="#abc3e2" stroke-width="0.7"/>
<polygon points="756.3,905.8 748.2,906.9 757.5,944.6 768.4,943.1" fill="#91b0d6" stroke="#91b0d6" stroke-width="0.7"/>
<polygon points="768.4,943.1 757.5,944.6 766.9,982.2 780.6,980.4" fill="#7fa4d2" stroke="#7fa4d2" stroke-width="0.7"/>
<polygon points="780.6,980.4 766.9,982.2 776.3,1019.9 792.7,1017.6" fill="#6893c6" stroke="#6893c6" stroke-width="0.7"/>
<polygon points="792.7,1017.6 776.3,1019.9 785.7,1057.5 804.8,1054.9" fill="#5889c5" stroke="#5889c5" stroke-width="0.7"/>
<polygon points="804.8,1054.9 785.7,1057.5 795.1,1095.2 816.9,1092.2" fill="#457aba" stroke="#457aba" stroke-width="0.7"/>
<polygon points="816.9,1092.2 795.1,1095.2 804.5,1132.8 829.0,1129.5" fill="#3571b9" stroke="#3571b9" stroke-width="0.7"/>
<polygon points="829.0,1129.5 804.5,1132.8 813.9,1170.4 841.1,1166.7" fill="#2462af" stroke="#2462af" stroke-width="0.7"/>
<polygon points="841.1,1166.7 813.9,1170.4 846.7,1302.2 883.5,1297.2" fill="#1c5fb1" stroke="#1c5fb1" stroke-width="0.7"/>
<polygon points="720.0,794.0 720.0,794.0 726.7,832.1 729.4,831.6" fill="#e5eff8" stroke="#e5eff8" stroke-width="0.7"/>
<polygon points="729.4,831.6 726.7,832.1 733.4,870.1 738.8,869.3" fill="#c5daef" stroke="#c5daef" stroke-width="0.7"/>
<polygon points="738.8,869.3 733.4,870.1 740.1,908.2 748.2,906.9" fill="#aecdea" stroke="#aecdea" stroke-width="0.7"/>
<polygon points="748.2,906.9 740.1,908.2 746.8,946.3 757.5,944.6" fill="#95bce1" stroke="#95bce1" stroke-width="0.7"/>
<polygon points="757.5,944.6 746.8,946.3 753.6,984.3 766.9,982.2" fill="#82b2e0" stroke="#82b2e0" stroke-width="0.7"/>
<polygon points="766.9,982.2 753.6,984.3 760.3,1022.4 776.3,1019.9" fill="#6ba2d6" stroke="#6ba2d6" stroke-width="0.7"/>
<polygon points="776.3,1019.9 760.3,1022.4 767.0,1060.5 785.7,1057.5" fill="#5a99d5" stroke="#5a99d5" stroke-width="0.7"/>
<polygon points="785.7,1057.5 767.0,1060.5 773.7,1098.5 795.1,1095.2" fill="#468acb" stroke="#468acb" stroke-width="0.7"/>
<polygon points="795.1,1095.2 773.7,1098.5 780.4,1136.6 804.5,1132.8" fill="#3582ca" stroke="#3582ca" stroke-width="0.7"/>
<polygon points="804.5,1132.8 780.4,1136.6 787.1,1174.7 813.9,1170.4" fill="#2374c1" stroke="#2374c1" stroke-width="0.7"/>
<polygon points="813.9,1170.4 787.1,1174.7 810.6,1307.9 846.7,1302.2" fill="#1b71c3" stroke="#1b71c3" stroke-width="0.7"/>
<polygon points="720.0,794.0 720.0,794.0 724.0,832.5 726.7,832.1" fill="#e4eff8" stroke="#e4eff8" stroke-width="0.7"/>
<polygon points="726.7,832.1 724.0,832.5 728.1,871.0 733.4,870.1" fill="#c2dbee" stroke="#c2dbee" stroke-width="0.7"/>
<polygon points="733.4,870.1 728.1,871.0 732.1,909.5 740.1,908.2" fill="#a9cde8" stroke="#a9cde8" stroke-width="0.7"/>
<polygon points="740.1,908.2 732.1,909.5 736.2,948.0 746.8,946.3" fill="#8fbcde" stroke="#8fbcde" stroke-width="0.7"/>
<polygon points="746.8,946.3 736.2,948.0 740.2,986.4 753.6,984.3" fill="#7cb2dc" stroke="#7cb2dc" stroke-width="0.7"/>
<polygon points="753.6,984.3 740.2,986.4 744.3,1024.9 760.3,1022.4" fill="#65a3d2" stroke="#65a3d2" stroke-width="0.7"/>
<polygon points="760.3,1022.4 744.3,1024.9 748.3,1063.4 767.0,1060.5" fill="#559cd2" stroke="#559cd2" stroke-width="0.7"/>
<polygon points="767.0,1060.5 748.3,1063.4 752.4,1101.9 773.7,1098.5" fill="#418ec9" stroke="#418ec9" stroke-width="0.7"/>
<polygon points="773.7,1098.5 752.4,1101.9 756.4,1140.4 780.4,1136.6" fill="#3187c9" stroke="#3187c9" stroke-width="0.7"/>
<polygon points="780.4,1136.6 756.4,1140.4 760.5,1178.9 787.1,1174.7" fill="#1f7ac0" stroke="#1f7ac0" stroke-width="0.7"/>
<polygon points="787.1,1174.7 760.5,1178.9 774.6,1313.6 810.6,1307.9" fill="#1778c3" stroke="#1778c3" stroke-width="0.7"/>
<polygon points="720.0,794.0 720.0,794.0 721.4,832.9 724.0,832.5" fill="#e5f2fa" stroke="#e5f2fa" stroke-width="0.7"/>
<polygon points="724.0,832.5 721.4,832.9 722.7,871.9 728.1,871.0" fill="#c4e1f3" stroke="#c4e1f3" stroke-width="0.7"/>
<polygon points="728.1,871.0 722.7,871.9 724.1,910.8 732.1,909.5" fill="#acd6f1" stroke="#acd6f1" stroke-width="0.7"/>
<polygon points="732.1,909.5 724.1,910.8 725.4,949.7 736.2,948.0" fill="#92c7e9" stroke="#92c7e9" stroke-width="0.7"/>
<polygon points="736.2,948.0 725.4,949.7 726.8,988.7 740.2,986.4" fill="#7fc1ea" stroke="#7fc1ea" stroke-width="0.7"/>
<polygon points="740.2,986.4 726.8,988.7 728.2,1027.6 744.3,1024.9" fill="#68b2e1" stroke="#68b2e1" stroke-width="0.7"/>
<polygon points="744.3,1024.9 728.2,1027.6 729.5,1066.5 748.3,1063.4" fill="#56ace2" stroke="#56ace2" stroke-width="0.7"/>
<polygon points="748.3,1063.4 729.5,1066.5 730.9,1105.5 752.4,1101.9" fill="#429ed9" stroke="#429ed9" stroke-width="0.7"/>
<polygon points="752.4,1101.9 730.9,1105.5 732.2,1144.4 756.4,1140.4" fill="#3198da" stroke="#3198da" stroke-width="0.7"/>
<polygon points="756.4,1140.4 732.2,1144.4 733.6,1183.3 760.5,1178.9" fill="#1e8cd2" stroke="#1e8cd2" stroke-width="0.7"/>
<polygon points="760.5,1178.9 733.6,1183.3 738.4,1319.6 774.6,1313.6" fill="#168ad5" stroke="#168ad5" stroke-width="0.7"/>
<polygon points="720.0,794.0 720.0,794.0 718.6,833.4 721.4,832.9" fill="#e4f2fa" stroke="#e4f2fa" stroke-width="0.7"/>
<polygon points="721.4,832.9 718.6,833.4 717.2,872.8 722.7,871.9" fill="#c1e0f2" stroke="#c1e0f2" stroke-width="0.7"/>
<polygon points="722.7,871.9 717.2,872.8 715.9,912.2 724.1,910.8" fill="#a7d5ee" stroke="#a7d5ee" stroke-width="0.7"/>
<polygon points="724.1,910.8 715.9,912.2 714.5,951.6 725.4,949.7" fill="#8dc6e5" stroke="#8dc6e5" stroke-width="0.7"/>
<polygon points="725.4,949.7 714.5,951.6 713.1,991.0 726.8,988.7" fill="#79bee5" stroke="#79bee5" stroke-width="0.7"/>
<polygon points="726.8,988.7 713.1,991.0 711.7,1030.4 728.2,1027.6" fill="#63b0db" stroke="#63b0db" stroke-width="0.7"/>
<polygon points="728.2,1027.6 711.7,1030.4 710.4,1069.8 729.5,1066.5" fill="#52abdd" stroke="#52abdd" stroke-width="0.7"/>
<polygon points="729.5,1066.5 710.4,1069.8 709.0,1109.2 730.9,1105.5" fill="#3e9ed4" stroke="#3e9ed4" stroke-width="0.7"/>
<polygon points="730.9,1105.5 709.0,1109.2 707.6,1148.6 732.2,1144.4" fill="#2d9ad6" stroke="#2d9ad6" stroke-width="0.7"/>
<polygon points="732.2,1144.4 707.6,1148.6 706.2,1188.0 733.6,1183.3" fill="#1b8ece" stroke="#1b8ece" stroke-width="0.7"/>
<polygon points="733.6,1183.3 706.2,1188.0 701.4,1326.0 738.4,1319.6" fill="#138ed2" stroke="#138ed2" stroke-width="0.7"/>
<polygon points="720.0,794.0 720.0,794.0 715.8,833.9 718.6,833.4" fill="#e4f4fb" stroke="#e4f4fb" stroke-width="0.7"/>
<polygon points="718.6,833.4 715.8,833.9 711.6,873.8 717.2,872.8" fill="#c3e5f6" stroke="#c3e5f6" stroke-width="0.7"/>
<polygon points="717.2,872.8 711.6,873.8 707.4,913.7 715.9,912.2" fill="#abdcf5" stroke="#abdcf5" stroke-width="0.7"/>
<polygon points="715.9,912.2 707.4,913.7 703.2,953.6 714.5,951.6" fill="#91cfee" stroke="#91cfee" stroke-width="0.7"/>
<polygon points="714.5,951.6 703.2,953.6 699.0,993.5 713.1,991.0" fill="#7ec9f0" stroke="#7ec9f0" stroke-width="0.7"/>
<polygon points="713.1,991.0 699.0,993.5 694.8,1033.3 711.7,1030.4" fill="#67bce8" stroke="#67bce8" stroke-width="0.7"/>
<polygon points="711.7,1030.4 694.8,1033.3 690.7,1073.2 710.4,1069.8" fill="#55b7ea" stroke="#55b7ea" stroke-width="0.7"/>
<polygon points="710.4,1069.8 690.7,1073.2 686.5,1113.1 709.0,1109.2" fill="#40abe1" stroke="#40abe1" stroke-width="0.7"/>
<polygon points="709.0,1109.2 686.5,1113.1 682.3,1153.0 707.6,1148.6" fill="#2fa6e3" stroke="#2fa6e3" stroke-width="0.7"/>
<polygon points="707.6,1148.6 682.3,1153.0 678.1,1192.9 706.2,1188.0" fill="#1c9bdb" stroke="#1c9bdb" stroke-width="0.7"/>
<polygon points="706.2,1188.0 678.1,1192.9 663.4,1332.5 701.4,1326.0" fill="#149adf" stroke="#149adf" stroke-width="0.7"/>
<polygon points="720.0,794.0 720.0,794.0 712.9,834.4 715.8,833.9" fill="#e3f3fb" stroke="#e3f3fb" stroke-width="0.7"/>
<polygon points="715.8,833.9 712.9,834.4 705.8,874.8 711.6,873.8" fill="#c1e3f3" stroke="#c1e3f3" stroke-width="0.7"/>
<polygon points="711.6,873.8 705.8,874.8 698.6,915.2 707.4,913.7" fill="#a7d9f1" stroke="#a7d9f1" stroke-width="0.7"/>
<polygon points="707.4,913.7 698.6,915.2 691.5,955.6 703.2,953.6" fill="#8ccbe9" stroke="#8ccbe9" stroke-width="0.7"/>
<polygon points="703.2,953.6 691.5,955.6 684.4,996.0 699.0,993.5" fill="#79c5e9" stroke="#79c5e9" stroke-width="0.7"/>
<polygon points="699.0,993.5 684.4,996.0 677.3,1036.4 694.8,1033.3" fill="#62b8e0" stroke="#62b8e0" stroke-width="0.7"/>
<polygon points="694.8,1033.3 677.3,1036.4 670.1,1076.8 690.7,1073.2" fill="#51b4e2" stroke="#51b4e2" stroke-width="0.7"/>
<polygon points="690.7,1073.2 670.1,1076.8 663.0,1117.2 686.5,1113.1" fill="#3da8da" stroke="#3da8da" stroke-width="0.7"/>
<polygon points="686.5,1113.1 663.0,1117.2 655.9,1157.6 682.3,1153.0" fill="#2ca5dd" stroke="#2ca5dd" stroke-width="0.7"/>
<polygon points="682.3,1153.0 655.9,1157.6 648.8,1198.0 678.1,1192.9" fill="#1a9ad5" stroke="#1a9ad5" stroke-width="0.7"/>
<polygon points="678.1,1192.9 648.8,1198.0 623.8,1339.3 663.4,1332.5" fill="#129ad9" stroke="#129ad9" stroke-width="0.7"/>
<polygon points="720.0,794.0 720.0,794.0 709.8,834.9 712.9,834.4" fill="#e4f5fc" stroke="#e4f5fc" stroke-width="0.7"/>
<polygon points="712.9,834.4 709.8,834.9 699.6,875.8 705.8,874.8" fill="#c3e8f7" stroke="#c3e8f7" stroke-width="0.7"/>
<polygon points="705.8,874.8 699.6,875.8 689.4,916.8 698.6,915.2" fill="#aae0f6" stroke="#aae0f6" stroke-width="0.7"/>
<polygon points="698.6,915.2 689.4,916.8 679.2,957.7 691.5,955.6" fill="#90d4f0" stroke="#90d4f0" stroke-width="0.7"/>
<polygon points="691.5,955.6 679.2,957.7 669.0,998.6 684.4,996.0" fill="#7dd0f3" stroke="#7dd0f3" stroke-width="0.7"/>
<polygon points="684.4,996.0 669.0,998.6 658.8,1039.5 677.3,1036.4" fill="#65c4eb" stroke="#65c4eb" stroke-width="0.7"/>
<polygon points="677.3,1036.4 658.8,1039.5 648.6,1080.5 670.1,1076.8" fill="#53c0ee" stroke="#53c0ee" stroke-width="0.7"/>
<polygon points="670.1,1076.8 648.6,1080.5 638.4,1121.4 663.0,1117.2" fill="#3eb4e5" stroke="#3eb4e5" stroke-width="0.7"/>
<polygon points="663.0,1117.2 638.4,1121.4 628.2,1162.3 655.9,1157.6" fill="#2db1e8" stroke="#2db1e8" stroke-width="0.7"/>
<polygon points="655.9,1157.6 628.2,1162.3 618.0,1203.2 648.8,1198.0" fill="#1aa6e0" stroke="#1aa6e0" stroke-width="0.7"/>
<polygon points="648.8,1198.0 618.0,1203.2 582.3,1346.5 623.8,1339.3" fill="#12a6e4" stroke="#12a6e4" stroke-width="0.7"/>
<polygon points="720.0,794.0 720.0,794.0 706.6,835.4 709.8,834.9" fill="#e3f4fa" stroke="#e3f4fa" stroke-width="0.7"/>
<polygon points="709.8,834.9 706.6,835.4 693.1,876.7 699.6,875.8" fill="#c0e5f2" stroke="#c0e5f2" stroke-width="0.7"/>
<polygon points="699.6,875.8 693.1,876.7 679.7,918.1 689.4,916.8" fill="#a5dcef" stroke="#a5dcef" stroke-width="0.7"/>
<polygon points="689.4,916.8 679.7,918.1 666.2,959.5 679.2,957.7" fill="#8bcfe6" stroke="#8bcfe6" stroke-width="0.7"/>
<polygon points="679.2,957.7 666.2,959.5 652.8,1000.8 669.0,998.6" fill="#77cae6" stroke="#77cae6" stroke-width="0.7"/>
<polygon points="669.0,998.6 652.8,1000.8 639.4,1042.2 658.8,1039.5" fill="#5fbddd" stroke="#5fbddd" stroke-width="0.7"/>
<polygon points="658.8,1039.5 639.4,1042.2 625.9,1083.6 648.6,1080.5" fill="#4ebadf" stroke="#4ebadf" stroke-width="0.7"/>
<polygon points="648.6,1080.5 625.9,1083.6 612.5,1124.9 638.4,1121.4" fill="#39afd7" stroke="#39afd7" stroke-width="0.7"/>
<polygon points="638.4,1121.4 612.5,1124.9 599.0,1166.3 628.2,1162.3" fill="#29acd9" stroke="#29acd9" stroke-width="0.7"/>
<polygon points="628.2,1162.3 599.0,1166.3 585.6,1207.7 618.0,1203.2" fill="#16a1d1" stroke="#16a1d1" stroke-width="0.7"/>
<polygon points="618.0,1203.2 585.6,1207.7 538.5,1352.4 582.3,1346.5" fill="#0ea2d5" stroke="#0ea2d5" stroke-width="0.7"/>
<polygon points="720.0,794.0 720.0,794.0 703.2,835.6 706.6,835.4" fill="#e4f6fb" stroke="#e4f6fb" stroke-width="0.7"/>
<polygon points="706.6,835.4 703.2,835.6 686.4,877.2 693.1,876.7" fill="#c1e9f4" stroke="#c1e9f4" stroke-width="0.7"/>
<polygon points="693.1,876.7 686.4,877.2 669.6,918.7 679.7,918.1" fill="#a8e2f2" stroke="#a8e2f2" stroke-width="0.7"/>
<polygon points="679.7,918.1 669.6,918.7 652.8,960.3 666.2,959.5" fill="#8ed7eb" stroke="#8ed7eb" stroke-width="0.7"/>
<polygon points="666.2,959.5 652.8,960.3 636.0,1001.9 652.8,1000.8" fill="#7ad4ec" stroke="#7ad4ec" stroke-width="0.7"/>
<polygon points="652.8,1000.8 636.0,1001.9 619.2,1043.5 639.4,1042.2" fill="#62c7e3" stroke="#62c7e3" stroke-width="0.7"/>
<polygon points="639.4,1042.2 619.2,1043.5 602.4,1085.1 625.9,1083.6" fill="#4fc5e5" stroke="#4fc5e5" stroke-width="0.7"/>
<polygon points="625.9,1083.6 602.4,1085.1 585.6,1126.6 612.5,1124.9" fill="#3ab9dc" stroke="#3ab9dc" stroke-width="0.7"/>
<polygon points="612.5,1124.9 585.6,1126.6 568.8,1168.2 599.0,1166.3" fill="#28b6dd" stroke="#28b6dd" stroke-width="0.7"/>
<polygon points="599.0,1166.3 568.8,1168.2 552.0,1209.8 585.6,1207.7" fill="#14abd5" stroke="#14abd5" stroke-width="0.7"/>
<polygon points="585.6,1207.7 552.0,1209.8 493.2,1355.3 538.5,1352.4" fill="#0cacd8" stroke="#0cacd8" stroke-width="0.7"/>
<polygon points="720.0,794.0 720.0,794.0 701.1,832.8 703.2,835.6" fill="#e2f5f9" stroke="#e2f5f9" stroke-width="0.7"/>
<polygon points="703.2,835.6 701.1,832.8 682.2,871.6 686.4,877.2" fill="#bee6ef" stroke="#bee6ef" stroke-width="0.7"/>
<polygon points="686.4,877.2 682.2,871.6 663.2,910.4 669.6,918.7" fill="#a4deea" stroke="#a4deea" stroke-width="0.7"/>
<polygon points="669.6,918.7 663.2,910.4 644.3,949.1 652.8,960.3" fill="#88d1e0" stroke="#88d1e0" stroke-width="0.7"/>
<polygon points="652.8,960.3 644.3,949.1 625.4,987.9 636.0,1001.9" fill="#74ccdf" stroke="#74ccdf" stroke-width="0.7"/>
<polygon points="636.0,1001.9 625.4,987.9 606.5,1026.7 619.2,1043.5" fill="#5cbfd5" stroke="#5cbfd5" stroke-width="0.7"/>
<polygon points="619.2,1043.5 606.5,1026.7 587.6,1065.5 602.4,1085.1" fill="#4abdd6" stroke="#4abdd6" stroke-width="0.7"/>
<polygon points="602.4,1085.1 587.6,1065.5 568.7,1104.3 585.6,1126.6" fill="#35b2cc" stroke="#35b2cc" stroke-width="0.7"/>
<polygon points="585.6,1126.6 568.7,1104.3 549.7,1143.1 568.8,1168.2" fill="#24afcd" stroke="#24afcd" stroke-width="0.7"/>
<polygon points="568.8,1168.2 549.7,1143.1 530.8,1181.9 552.0,1209.8" fill="#11a5c5" stroke="#11a5c5" stroke-width="0.7"/>
<polygon points="552.0,1209.8 530.8,1181.9 464.6,1317.6 493.2,1355.3" fill="#09a6c8" stroke="#09a6c8" stroke-width="0.7"/>
<polygon points="720.0,794.0 720.0,794.0 699.2,830.1 701.1,832.8" fill="#e3f6f9" stroke="#e3f6f9" stroke-width="0.7"/>
<polygon points="701.1,832.8 699.2,830.1 678.3,866.2 682.2,871.6" fill="#c0e9f0" stroke="#c0e9f0" stroke-width="0.7"/>
<polygon points="682.2,871.6 678.3,866.2 657.5,902.2 663.2,910.4" fill="#a6e2ec" stroke="#a6e2ec" stroke-width="0.7"/>
<polygon points="663.2,910.4 657.5,902.2 636.7,938.3 644.3,949.1" fill="#8cd7e3" stroke="#8cd7e3" stroke-width="0.7"/>
<polygon points="644.3,949.1 636.7,938.3 615.8,974.4 625.4,987.9" fill="#77d3e3" stroke="#77d3e3" stroke-width="0.7"/>
<polygon points="625.4,987.9 615.8,974.4 595.0,1010.5 606.5,1026.7" fill="#5fc7d9" stroke="#5fc7d9" stroke-width="0.7"/>
<polygon points="606.5,1026.7 595.0,1010.5 574.2,1046.6 587.6,1065.5" fill="#4cc5d9" stroke="#4cc5d9" stroke-width="0.7"/>
<polygon points="587.6,1065.5 574.2,1046.6 553.4,1082.6 568.7,1104.3" fill="#36b9cf" stroke="#36b9cf" stroke-width="0.7"/>
<polygon points="568.7,1104.3 553.4,1082.6 532.5,1118.7 549.7,1143.1" fill="#24b6cf" stroke="#24b6cf" stroke-width="0.7"/>
<polygon points="549.7,1143.1 532.5,1118.7 511.7,1154.8 530.8,1181.9" fill="#10abc5" stroke="#10abc5" stroke-width="0.7"/>
<polygon points="530.8,1181.9 511.7,1154.8 438.8,1281.1 464.6,1317.6" fill="#07acc8" stroke="#07acc8" stroke-width="0.7"/>
<polygon points="720.0,794.0 720.0,794.0 697.4,827.5 699.2,830.1" fill="#e2f4f7" stroke="#e2f4f7" stroke-width="0.7"/>
<polygon points="699.2,830.1 697.4,827.5 674.8,861.0 678.3,866.2" fill="#bde6eb" stroke="#bde6eb" stroke-width="0.7"/>
<polygon points="678.3,866.2 674.8,861.0 652.2,894.5 657.5,902.2" fill="#a2dde4" stroke="#a2dde4" stroke-width="0.7"/>
<polygon points="657.5,902.2 652.2,894.5 629.6,928.0 636.7,938.3" fill="#86d0d9" stroke="#86d0d9" stroke-width="0.7"/>
<polygon points="636.7,938.3 629.6,928.0 607.0,961.5 615.8,974.4" fill="#71cbd5" stroke="#71cbd5" stroke-width="0.7"/>
<polygon points="615.8,974.4 607.0,961.5 584.4,995.0 595.0,1010.5" fill="#59beca" stroke="#59beca" stroke-width="0.7"/>
<polygon points="595.0,1010.5 584.4,995.0 561.8,1028.5 574.2,1046.6" fill="#47bbc9" stroke="#47bbc9" stroke-width="0.7"/>
<polygon points="574.2,1046.6 561.8,1028.5 539.2,1062.0 553.4,1082.6" fill="#32b0bf" stroke="#32b0bf" stroke-width="0.7"/>
<polygon points="553.4,1082.6 539.2,1062.0 516.7,1095.5 532.5,1118.7" fill="#20aebe" stroke="#20aebe" stroke-width="0.7"/>
<polygon points="532.5,1118.7 516.7,1095.5 494.1,1129.0 511.7,1154.8" fill="#0ea3b5" stroke="#0ea3b5" stroke-width="0.7"/>
<polygon points="511.7,1154.8 494.1,1129.0 415.0,1246.2 438.8,1281.1" fill="#05a4b6" stroke="#05a4b6" stroke-width="0.7"/>
<polygon points="720.0,794.0 720.0,794.0 695.9,824.9 697.4,827.5" fill="#e3f5f7" stroke="#e3f5f7" stroke-width="0.7"/>
<polygon points="697.4,827.5 695.9,824.9 671.7,855.8 674.8,861.0" fill="#bfe9ec" stroke="#bfe9ec" stroke-width="0.7"/>
<polygon points="674.8,861.0 671.7,855.8 647.6,886.6 652.2,894.5" fill="#a5e1e6" stroke="#a5e1e6" stroke-width="0.7"/>
<polygon points="652.2,894.5 647.6,886.6 623.5,917.5 629.6,928.0" fill="#8ad6dc" stroke="#8ad6dc" stroke-width="0.7"/>
<polygon points="629.6,928.0 623.5,917.5 599.4,948.4 607.0,961.5" fill="#75d2d9" stroke="#75d2d9" stroke-width="0.7"/>
<polygon points="607.0,961.5 599.4,948.4 575.2,979.3 584.4,995.0" fill="#5cc6ce" stroke="#5cc6ce" stroke-width="0.7"/>
<polygon points="584.4,995.0 575.2,979.3 551.1,1010.2 561.8,1028.5" fill="#49c3cc" stroke="#49c3cc" stroke-width="0.7"/>
<polygon points="561.8,1028.5 551.1,1010.2 527.0,1041.0 539.2,1062.0" fill="#33b7c1" stroke="#33b7c1" stroke-width="0.7"/>
<polygon points="539.2,1062.0 527.0,1041.0 502.9,1071.9 516.7,1095.5" fill="#20b5bf" stroke="#20b5bf" stroke-width="0.7"/>
<polygon points="516.7,1095.5 502.9,1071.9 478.7,1102.8 494.1,1129.0" fill="#0daab5" stroke="#0daab5" stroke-width="0.7"/>
<polygon points="494.1,1129.0 478.7,1102.8 394.3,1210.9 415.0,1246.2" fill="#04aab6" stroke="#04aab6" stroke-width="0.7"/>
<polygon points="720.0,794.0 720.0,794.0 694.4,822.4 695.9,824.9" fill="#e2f4f5" stroke="#e2f4f5" stroke-width="0.7"/>
<polygon points="695.9,824.9 694.4,822.4 668.8,850.8 671.7,855.8" fill="#bde5e7" stroke="#bde5e7" stroke-width="0.7"/>
<polygon points="671.7,855.8 668.8,850.8 643.3,879.2 647.6,886.6" fill="#a1dcde" stroke="#a1dcde" stroke-width="0.7"/>
<polygon points="647.6,886.6 643.3,879.2 617.7,907.6 623.5,917.5" fill="#85cfd2" stroke="#85cfd2" stroke-width="0.7"/>
<polygon points="623.5,917.5 617.7,907.6 592.1,936.0 599.4,948.4" fill="#70cacd" stroke="#70cacd" stroke-width="0.7"/>
<polygon points="599.4,948.4 592.1,936.0 566.5,964.4 575.2,979.3" fill="#58bdc1" stroke="#58bdc1" stroke-width="0.7"/>
<polygon points="575.2,979.3 566.5,964.4 541.0,992.8 551.1,1010.2" fill="#45babe" stroke="#45babe" stroke-width="0.7"/>
<polygon points="551.1,1010.2 541.0,992.8 515.4,1021.2 527.0,1041.0" fill="#30afb3" stroke="#30afb3" stroke-width="0.7"/>
<polygon points="527.0,1041.0 515.4,1021.2 489.8,1049.7 502.9,1071.9" fill="#1eacb1" stroke="#1eacb1" stroke-width="0.7"/>
<polygon points="502.9,1071.9 489.8,1049.7 464.2,1078.1 478.7,1102.8" fill="#0ba2a7" stroke="#0ba2a7" stroke-width="0.7"/>
<polygon points="478.7,1102.8 464.2,1078.1 374.7,1177.5 394.3,1210.9" fill="#03a2a8" stroke="#03a2a8" stroke-width="0.7"/>
<polygon points="720.0,794.0 720.0,794.0 693.1,820.0 694.4,822.4" fill="#e2f5f5" stroke="#e2f5f5" stroke-width="0.7"/>
<polygon points="694.4,822.4 693.1,820.0 666.2,846.0 668.8,850.8" fill="#bfe8e8" stroke="#bfe8e8" stroke-width="0.7"/>
<polygon points="668.8,850.8 666.2,846.0 639.3,872.0 643.3,879.2" fill="#a4e1e1" stroke="#a4e1e1" stroke-width="0.7"/>
<polygon points="643.3,879.2 639.3,872.0 612.4,897.9 617.7,907.6" fill="#89d5d5" stroke="#89d5d5" stroke-width="0.7"/>
<polygon points="617.7,907.6 612.4,897.9 585.5,923.9 592.1,936.0" fill="#74d2d1" stroke="#74d2d1" stroke-width="0.7"/>
<polygon points="592.1,936.0 585.5,923.9 558.6,949.9 566.5,964.4" fill="#5bc5c5" stroke="#5bc5c5" stroke-width="0.7"/>
<polygon points="566.5,964.4 558.6,949.9 531.6,975.9 541.0,992.8" fill="#48c2c1" stroke="#48c2c1" stroke-width="0.7"/>
<polygon points="541.0,992.8 531.6,975.9 504.7,1001.9 515.4,1021.2" fill="#32b6b5" stroke="#32b6b5" stroke-width="0.7"/>
<polygon points="515.4,1021.2 504.7,1001.9 477.8,1027.9 489.8,1049.7" fill="#1fb3b2" stroke="#1fb3b2" stroke-width="0.7"/>
<polygon points="489.8,1049.7 477.8,1027.9 450.9,1053.8 464.2,1078.1" fill="#0ba8a7" stroke="#0ba8a7" stroke-width="0.7"/>
<polygon points="464.2,1078.1 450.9,1053.8 356.7,1144.8 374.7,1177.5" fill="#02a9a8" stroke="#02a9a8" stroke-width="0.7"/>
<polygon points="720.0,794.0 720.0,794.0 691.9,817.6 693.1,820.0" fill="#e1f4f3" stroke="#e1f4f3" stroke-width="0.7"/>
<polygon points="693.1,820.0 691.9,817.6 663.8,841.2 666.2,846.0" fill="#bce5e3" stroke="#bce5e3" stroke-width="0.7"/>
<polygon points="666.2,846.0 663.8,841.2 635.7,864.8 639.3,872.0" fill="#a0dcd9" stroke="#a0dcd9" stroke-width="0.7"/>
<polygon points="639.3,872.0 635.7,864.8 607.6,888.3 612.4,897.9" fill="#84cfcb" stroke="#84cfcb" stroke-width="0.7"/>
<polygon points="612.4,897.9 607.6,888.3 579.5,911.9 585.5,923.9" fill="#6fc9c5" stroke="#6fc9c5" stroke-width="0.7"/>
<polygon points="585.5,923.9 579.5,911.9 551.4,935.5 558.6,949.9" fill="#57bcb8" stroke="#57bcb8" stroke-width="0.7"/>
<polygon points="558.6,949.9 551.4,935.5 523.2,959.1 531.6,975.9" fill="#44b9b4" stroke="#44b9b4" stroke-width="0.7"/>
<polygon points="531.6,975.9 523.2,959.1 495.1,982.7 504.7,1001.9" fill="#2faea8" stroke="#2faea8" stroke-width="0.7"/>
<polygon points="504.7,1001.9 495.1,982.7 467.0,1006.3 477.8,1027.9" fill="#1caba5" stroke="#1caba5" stroke-width="0.7"/>
<polygon points="477.8,1027.9 467.0,1006.3 438.9,1029.8 450.9,1053.8" fill="#0aa09a" stroke="#0aa09a" stroke-width="0.7"/>
<polygon points="450.9,1053.8 438.9,1029.8 340.5,1112.4 356.7,1144.8" fill="#01a19a" stroke="#01a19a" stroke-width="0.7"/>
<polygon points="720.0,794.0 720.0,794.0 691.0,815.1 691.9,817.6" fill="#e2f5f3" stroke="#e2f5f3" stroke-width="0.7"/>
<polygon points="691.9,817.6 691.0,815.1 662.0,836.1 663.8,841.2" fill="#bfe8e4" stroke="#bfe8e4" stroke-width="0.7"/>
<polygon points="663.8,841.2 662.0,836.1 633.0,857.2 635.7,864.8" fill="#a4e0db" stroke="#a4e0db" stroke-width="0.7"/>
<polygon points="635.7,864.8 633.0,857.2 604.0,878.3 607.6,888.3" fill="#88d5ce" stroke="#88d5ce" stroke-width="0.7"/>
<polygon points="607.6,888.3 604.0,878.3 575.0,899.4 579.5,911.9" fill="#73d1c9" stroke="#73d1c9" stroke-width="0.7"/>
<polygon points="579.5,911.9 575.0,899.4 546.0,920.4 551.4,935.5" fill="#5ac4bb" stroke="#5ac4bb" stroke-width="0.7"/>
<polygon points="551.4,935.5 546.0,920.4 517.0,941.5 523.2,959.1" fill="#47c1b6" stroke="#47c1b6" stroke-width="0.7"/>
<polygon points="523.2,959.1 517.0,941.5 488.0,962.6 495.1,982.7" fill="#31b5aa" stroke="#31b5aa" stroke-width="0.7"/>
<polygon points="495.1,982.7 488.0,962.6 459.0,983.6 467.0,1006.3" fill="#1eb2a5" stroke="#1eb2a5" stroke-width="0.7"/>
<polygon points="467.0,1006.3 459.0,983.6 430.0,1004.7 438.9,1029.8" fill="#0aa799" stroke="#0aa799" stroke-width="0.7"/>
<polygon points="438.9,1029.8 430.0,1004.7 328.5,1078.5 340.5,1112.4" fill="#00a799" stroke="#00a799" stroke-width="0.7"/>
<polygon points="720.0,794.0 720.0,794.0 690.2,812.6 691.0,815.1" fill="#e2f4f1" stroke="#e2f4f1" stroke-width="0.7"/>
<polygon points="691.0,815.1 690.2,812.6 660.5,831.2 662.0,836.1" fill="#bde5df" stroke="#bde5df" stroke-width="0.7"/>
<polygon points="662.0,836.1 660.5,831.2 630.7,849.8 633.0,857.2" fill="#a1dbd3" stroke="#a1dbd3" stroke-width="0.7"/>
<polygon points="633.0,857.2 630.7,849.8 600.9,868.4 604.0,878.3" fill="#85cec4" stroke="#85cec4" stroke-width="0.7"/>
<polygon points="604.0,878.3 600.9,868.4 571.1,887.0 575.0,899.4" fill="#70c9bc" stroke="#70c9bc" stroke-width="0.7"/>
<polygon points="575.0,899.4 571.1,887.0 541.4,905.6 546.0,920.4" fill="#57bcad" stroke="#57bcad" stroke-width="0.7"/>
<polygon points="546.0,920.4 541.4,905.6 511.6,924.2 517.0,941.5" fill="#45b9a8" stroke="#45b9a8" stroke-width="0.7"/>
<polygon points="517.0,941.5 511.6,924.2 481.8,942.8 488.0,962.6" fill="#30ad9b" stroke="#30ad9b" stroke-width="0.7"/>
<polygon points="488.0,962.6 481.8,942.8 452.0,961.4 459.0,983.6" fill="#1eaa96" stroke="#1eaa96" stroke-width="0.7"/>
<polygon points="459.0,983.6 452.0,961.4 422.3,980.0 430.0,1004.7" fill="#0b9f8a" stroke="#0b9f8a" stroke-width="0.7"/>
<polygon points="430.0,1004.7 422.3,980.0 318.1,1045.2 328.5,1078.5" fill="#02a08a" stroke="#02a08a" stroke-width="0.7"/>
<polygon points="720.0,794.0 720.0,794.0 689.5,810.2 690.2,812.6" fill="#e3f5f1" stroke="#e3f5f1" stroke-width="0.7"/>
<polygon points="690.2,812.6 689.5,810.2 658.9,826.5 660.5,831.2" fill="#bfe8e0" stroke="#bfe8e0" stroke-width="0.7"/>
<polygon points="660.5,831.2 658.9,826.5 628.4,842.7 630.7,849.8" fill="#a5e0d5" stroke="#a5e0d5" stroke-width="0.7"/>
<polygon points="630.7,849.8 628.4,842.7 597.8,859.0 600.9,868.4" fill="#8ad4c6" stroke="#8ad4c6" stroke-width="0.7"/>
<polygon points="600.9,868.4 597.8,859.0 567.3,875.2 571.1,887.0" fill="#75d0be" stroke="#75d0be" stroke-width="0.7"/>
<polygon points="571.1,887.0 567.3,875.2 536.7,891.4 541.4,905.6" fill="#5dc4b0" stroke="#5dc4b0" stroke-width="0.7"/>
<polygon points="541.4,905.6 536.7,891.4 506.2,907.7 511.6,924.2" fill="#49c0a9" stroke="#49c0a9" stroke-width="0.7"/>
<polygon points="511.6,924.2 506.2,907.7 475.6,923.9 481.8,942.8" fill="#33b49b" stroke="#33b49b" stroke-width="0.7"/>
<polygon points="481.8,942.8 475.6,923.9 445.1,940.2 452.0,961.4" fill="#21b195" stroke="#21b195" stroke-width="0.7"/>
<polygon points="452.0,961.4 445.1,940.2 414.6,956.4 422.3,980.0" fill="#0da688" stroke="#0da688" stroke-width="0.7"/>
<polygon points="422.3,980.0 414.6,956.4 307.7,1013.2 318.1,1045.2" fill="#04a787" stroke="#04a787" stroke-width="0.7"/>
<polygon points="720.0,794.0 720.0,794.0 688.6,808.0 689.5,810.2" fill="#e2f4ef" stroke="#e2f4ef" stroke-width="0.7"/>
<polygon points="689.5,810.2 688.6,808.0 657.1,822.0 658.9,826.5" fill="#bde5db" stroke="#bde5db" stroke-width="0.7"/>
<polygon points="658.9,826.5 657.1,822.0 625.7,836.0 628.4,842.7" fill="#a2dbcd" stroke="#a2dbcd" stroke-width="0.7"/>
<polygon points="628.4,842.7 625.7,836.0 594.2,850.0 597.8,859.0" fill="#87cebc" stroke="#87cebc" stroke-width="0.7"/>
<polygon points="597.8,859.0 594.2,850.0 562.8,864.0 567.3,875.2" fill="#72c8b2" stroke="#72c8b2" stroke-width="0.7"/>
<polygon points="567.3,875.2 562.8,864.0 531.4,878.0 536.7,891.4" fill="#5abba2" stroke="#5abba2" stroke-width="0.7"/>
<polygon points="536.7,891.4 531.4,878.0 499.9,892.0 506.2,907.7" fill="#47b89b" stroke="#47b89b" stroke-width="0.7"/>
<polygon points="506.2,907.7 499.9,892.0 468.5,906.0 475.6,923.9" fill="#32ac8d" stroke="#32ac8d" stroke-width="0.7"/>
<polygon points="475.6,923.9 468.5,906.0 437.0,920.0 445.1,940.2" fill="#21a987" stroke="#21a987" stroke-width="0.7"/>
<polygon points="445.1,940.2 437.0,920.0 405.6,934.0 414.6,956.4" fill="#0e9e7a" stroke="#0e9e7a" stroke-width="0.7"/>
<polygon points="414.6,956.4 405.6,934.0 295.6,983.0 307.7,1013.2" fill="#059f78" stroke="#059f78" stroke-width="0.7"/>
<polygon points="720.0,794.0 720.0,794.0 687.6,805.8 688.6,808.0" fill="#e3f5ef" stroke="#e3f5ef" stroke-width="0.7"/>
<polygon points="688.6,808.0 687.6,805.8 655.3,817.6 657.1,822.0" fill="#c0e8db" stroke="#c0e8db" stroke-width="0.7"/>
<polygon points="657.1,822.0 655.3,817.6 622.9,829.3 625.7,836.0" fill="#a6e0ce" stroke="#a6e0ce" stroke-width="0.7"/>
<polygon points="625.7,836.0 622.9,829.3 590.6,841.1 594.2,850.0" fill="#8cd4bd" stroke="#8cd4bd" stroke-width="0.7"/>
<polygon points="594.2,850.0 590.6,841.1 558.2,852.9 562.8,864.0" fill="#77d0b4" stroke="#77d0b4" stroke-width="0.7"/>
<polygon points="562.8,864.0 558.2,852.9 525.9,864.7 531.4,878.0" fill="#5fc3a4" stroke="#5fc3a4" stroke-width="0.7"/>
<polygon points="531.4,878.0 525.9,864.7 493.5,876.4 499.9,892.0" fill="#4cc09c" stroke="#4cc09c" stroke-width="0.7"/>
<polygon points="499.9,892.0 493.5,876.4 461.2,888.2 468.5,906.0" fill="#36b48c" stroke="#36b48c" stroke-width="0.7"/>
<polygon points="468.5,906.0 461.2,888.2 428.8,900.0 437.0,920.0" fill="#24b085" stroke="#24b085" stroke-width="0.7"/>
<polygon points="437.0,920.0 428.8,900.0 396.4,911.8 405.6,934.0" fill="#10a577" stroke="#10a577" stroke-width="0.7"/>
<polygon points="405.6,934.0 396.4,911.8 283.2,953.0 295.6,983.0" fill="#07a674" stroke="#07a674" stroke-width="0.7"/>
<polygon points="720.0,794.0 720.0,794.0 686.6,803.6 687.6,805.8" fill="#e2f4ed" stroke="#e2f4ed" stroke-width="0.7"/>
<polygon points="687.6,805.8 686.6,803.6 653.2,813.2 655.3,817.6" fill="#bee4d7" stroke="#bee4d7" stroke-width="0.7"/>
<polygon points="655.3,817.6 653.2,813.2 619.8,822.7 622.9,829.3" fill="#a3dbc7" stroke="#a3dbc7" stroke-width="0.7"/>
<polygon points="622.9,829.3 619.8,822.7 586.4,832.3 590.6,841.1" fill="#88cdb4" stroke="#88cdb4" stroke-width="0.7"/>
<polygon points="590.6,841.1 586.4,832.3 553.0,841.9 558.2,852.9" fill="#73c8a9" stroke="#73c8a9" stroke-width="0.7"/>
<polygon points="558.2,852.9 553.0,841.9 519.6,851.5 525.9,864.7" fill="#5cbb99" stroke="#5cbb99" stroke-width="0.7"/>
<polygon points="525.9,864.7 519.6,851.5 486.2,861.1 493.5,876.4" fill="#4ab790" stroke="#4ab790" stroke-width="0.7"/>
<polygon points="493.5,876.4 486.2,861.1 452.8,870.6 461.2,888.2" fill="#35ac81" stroke="#35ac81" stroke-width="0.7"/>
<polygon points="461.2,888.2 452.8,870.6 419.4,880.2 428.8,900.0" fill="#24a979" stroke="#24a979" stroke-width="0.7"/>
<polygon points="428.8,900.0 419.4,880.2 385.9,889.8 396.4,911.8" fill="#119e6b" stroke="#119e6b" stroke-width="0.7"/>
<polygon points="396.4,911.8 385.9,889.8 269.0,923.3 283.2,953.0" fill="#099e69" stroke="#099e69" stroke-width="0.7"/>
<polygon points="720.0,794.0 720.0,794.0 686.0,801.2 686.6,803.6" fill="#e3f5ee" stroke="#e3f5ee" stroke-width="0.7"/>
<polygon points="686.6,803.6 686.0,801.2 652.1,808.4 653.2,813.2" fill="#c1e7d8" stroke="#c1e7d8" stroke-width="0.7"/>
<polygon points="653.2,813.2 652.1,808.4 618.1,815.7 619.8,822.7" fill="#a8e0ca" stroke="#a8e0ca" stroke-width="0.7"/>
<polygon points="619.8,822.7 618.1,815.7 584.1,822.9 586.4,832.3" fill="#8dd4b8" stroke="#8dd4b8" stroke-width="0.7"/>
<polygon points="586.4,832.3 584.1,822.9 550.1,830.1 553.0,841.9" fill="#79d0ae" stroke="#79d0ae" stroke-width="0.7"/>
<polygon points="553.0,841.9 550.1,830.1 516.2,837.3 519.6,851.5" fill="#61c39c" stroke="#61c39c" stroke-width="0.7"/>
<polygon points="519.6,851.5 516.2,837.3 482.2,844.5 486.2,861.1" fill="#4ec093" stroke="#4ec093" stroke-width="0.7"/>
<polygon points="486.2,861.1 482.2,844.5 448.2,851.8 452.8,870.6" fill="#38b483" stroke="#38b483" stroke-width="0.7"/>
<polygon points="452.8,870.6 448.2,851.8 414.2,859.0 419.4,880.2" fill="#26b07a" stroke="#26b07a" stroke-width="0.7"/>
<polygon points="419.4,880.2 414.2,859.0 380.3,866.2 385.9,889.8" fill="#13a56c" stroke="#13a56c" stroke-width="0.7"/>
<polygon points="385.9,889.8 380.3,866.2 261.3,891.5 269.0,923.3" fill="#0aa569" stroke="#0aa569" stroke-width="0.7"/>
<polygon points="720.0,794.0 720.0,794.0 685.5,798.9 686.0,801.2" fill="#e3f4ec" stroke="#e3f4ec" stroke-width="0.7"/>
<polygon points="686.0,801.2 685.5,798.9 650.9,803.7 652.1,808.4" fill="#bfe4d4" stroke="#bfe4d4" stroke-width="0.7"/>
<polygon points="652.1,808.4 650.9,803.7 616.4,808.6 618.1,815.7" fill="#a4dbc4" stroke="#a4dbc4" stroke-width="0.7"/>
<polygon points="618.1,815.7 616.4,808.6 581.8,813.4 584.1,822.9" fill="#89cdb0" stroke="#89cdb0" stroke-width="0.7"/>
<polygon points="584.1,822.9 581.8,813.4 547.3,818.3 550.1,830.1" fill="#75c8a4" stroke="#75c8a4" stroke-width="0.7"/>
<polygon points="550.1,830.1 547.3,818.3 512.7,823.1 516.2,837.3" fill="#5dbb93" stroke="#5dbb93" stroke-width="0.7"/>
<polygon points="516.2,837.3 512.7,823.1 478.2,828.0 482.2,844.5" fill="#4cb789" stroke="#4cb789" stroke-width="0.7"/>
<polygon points="482.2,844.5 478.2,828.0 443.6,832.8 448.2,851.8" fill="#37ac7a" stroke="#37ac7a" stroke-width="0.7"/>
<polygon points="448.2,851.8 443.6,832.8 409.1,837.7 414.2,859.0" fill="#26a971" stroke="#26a971" stroke-width="0.7"/>
<polygon points="414.2,859.0 409.1,837.7 374.5,842.6 380.3,866.2" fill="#149e63" stroke="#149e63" stroke-width="0.7"/>
<polygon points="380.3,866.2 374.5,842.6 253.6,859.5 261.3,891.5" fill="#0b9e60" stroke="#0b9e60" stroke-width="0.7"/>
<polygon points="720.0,794.0 720.0,794.0 685.3,796.4 685.5,798.9" fill="#e4f5ed" stroke="#e4f5ed" stroke-width="0.7"/>
<polygon points="685.5,798.9 685.3,796.4 650.7,798.8 650.9,803.7" fill="#c2e7d6" stroke="#c2e7d6" stroke-width="0.7"/>
<polygon points="650.9,803.7 650.7,798.8 616.0,801.3 616.4,808.6" fill="#a9e0c6" stroke="#a9e0c6" stroke-width="0.7"/>
<polygon points="616.4,808.6 616.0,801.3 581.4,803.7 581.8,813.4" fill="#8ed4b4" stroke="#8ed4b4" stroke-width="0.7"/>
<polygon points="581.8,813.4 581.4,803.7 546.7,806.1 547.3,818.3" fill="#7ad0a8" stroke="#7ad0a8" stroke-width="0.7"/>
<polygon points="547.3,818.3 546.7,806.1 512.1,808.5 512.7,823.1" fill="#63c396" stroke="#63c396" stroke-width="0.7"/>
<polygon points="512.7,823.1 512.1,808.5 477.4,811.0 478.2,828.0" fill="#50c08c" stroke="#50c08c" stroke-width="0.7"/>
<polygon points="478.2,828.0 477.4,811.0 442.7,813.4 443.6,832.8" fill="#3bb47c" stroke="#3bb47c" stroke-width="0.7"/>
<polygon points="443.6,832.8 442.7,813.4 408.1,815.8 409.1,837.7" fill="#29b072" stroke="#29b072" stroke-width="0.7"/>
<polygon points="409.1,837.7 408.1,815.8 373.4,818.2 374.5,842.6" fill="#16a563" stroke="#16a563" stroke-width="0.7"/>
<polygon points="374.5,842.6 373.4,818.2 252.1,826.7 253.6,859.5" fill="#0da55f" stroke="#0da55f" stroke-width="0.7"/>
<polygon points="720.0,794.0 720.0,794.0 686.2,794.0 685.3,796.4" fill="#e3f4eb" stroke="#e3f4eb" stroke-width="0.7"/>
<polygon points="685.3,796.4 686.2,794.0 652.4,794.0 650.7,798.8" fill="#c0e4d2" stroke="#c0e4d2" stroke-width="0.7"/>
<polygon points="650.7,798.8 652.4,794.0 618.6,794.0 616.0,801.3" fill="#a5dbc0" stroke="#a5dbc0" stroke-width="0.7"/>
<polygon points="616.0,801.3 618.6,794.0 584.8,794.0 581.4,803.7" fill="#8bcdac" stroke="#8bcdac" stroke-width="0.7"/>
<polygon points="581.4,803.7 584.8,794.0 551.0,794.0 546.7,806.1" fill="#76c89f" stroke="#76c89f" stroke-width="0.7"/>
<polygon points="546.7,806.1 551.0,794.0 517.2,794.0 512.1,808.5" fill="#5fbb8d" stroke="#5fbb8d" stroke-width="0.7"/>
<polygon points="512.1,808.5 517.2,794.0 483.4,794.0 477.4,811.0" fill="#4eb783" stroke="#4eb783" stroke-width="0.7"/>
<polygon points="477.4,811.0 483.4,794.0 449.6,794.0 442.7,813.4" fill="#39ac73" stroke="#39ac73" stroke-width="0.7"/>
<polygon points="442.7,813.4 449.6,794.0 415.8,794.0 408.1,815.8" fill="#28a969" stroke="#28a969" stroke-width="0.7"/>
<polygon points="408.1,815.8 415.8,794.0 382.0,794.0 373.4,818.2" fill="#169e5a" stroke="#169e5a" stroke-width="0.7"/>
<polygon points="373.4,818.2 382.0,794.0 263.6,794.0 252.1,826.7" fill="#0e9e56" stroke="#0e9e56" stroke-width="0.7"/>
</g>
</g>
<g id="front" clip-path="url(#cx)">
<path d="M57.0 368.0L90.7 388.4M90.7 388.4L124.3 409.0M124.3 409.0L157.9 429.6M157.9 429.6L191.4 450.3M191.4 450.3L224.9 471.1M224.9 471.1L258.3 492.0M258.3 492.0L291.6 513.0M291.6 513.0L324.9 534.1M324.9 534.1L358.1 555.2M358.1 555.2L391.3 576.5M391.3 576.5L424.4 597.8M424.4 597.8L457.5 619.3M457.5 619.3L490.5 640.8M490.5 640.8L523.5 662.4M523.5 662.4L556.4 684.1M556.4 684.1L589.2 705.9M589.2 705.9L622.0 727.8M622.0 727.8L654.7 749.8M654.7 749.8L687.4 771.8M687.4 771.8L720.0 794.0M200.0 417.5L229.8 440.6M229.8 440.6L259.7 463.6M259.7 463.6L289.8 486.5M289.8 486.5L319.9 509.2M319.9 509.2L350.1 531.9M350.1 531.9L380.4 554.4M380.4 554.4L410.8 576.8M410.8 576.8L441.3 599.1M441.3 599.1L471.9 621.2M471.9 621.2L502.6 643.2M502.6 643.2L533.4 665.1M533.4 665.1L564.2 686.9M564.2 686.9L595.2 708.6M595.2 708.6L626.3 730.1M626.3 730.1L657.4 751.5M657.4 751.5L688.7 772.8M688.7 772.8L720.0 794.0M631.3 729.8L660.6 751.5M660.6 751.5L690.2 772.8M690.2 772.8L720.0 794.0M628.1 737.7L658.9 756.0M658.9 756.0L689.5 774.7M689.5 774.7L720.0 794.0M400.8 598.3L433.4 616.5M433.4 616.5L465.9 634.9M465.9 634.9L498.2 653.7M498.2 653.7L530.4 672.8M530.4 672.8L562.4 692.2M562.4 692.2L594.2 711.9M594.2 711.9L625.9 732.0M625.9 732.0L657.4 752.3M657.4 752.3L688.8 773.0M688.8 773.0L720.0 794.0M124.3 409.0L170.2 394.2M191.4 450.3L229.8 440.6M258.3 492.0L289.8 486.5M268.8 529.0L258.3 492.0M324.9 534.1L350.1 531.9M335.1 563.0L324.9 534.1M391.3 576.5L410.8 576.8M400.8 598.3L391.3 576.5M457.5 619.3L471.9 621.2M465.9 634.9L457.5 619.3M523.5 662.4L533.4 665.1M533.4 665.1L544.5 663.6M530.4 672.8L523.5 662.4M589.2 705.9L595.2 708.6M595.2 708.6L602.2 708.0M597.1 719.9L594.2 711.9M594.2 711.9L589.2 705.9M654.7 749.8L657.4 751.5M657.4 751.5L660.6 751.5M658.9 756.0L657.4 752.3M657.4 752.3L654.7 749.8" stroke="#3ccc3c" stroke-width="1.9" />
<path d="M111.0 347.3L140.6 370.8M140.6 370.8L170.2 394.2M170.2 394.2L200.0 417.5M544.5 663.6L573.2 685.9M573.2 685.9L602.2 708.0M602.2 708.0L631.3 729.8M410.8 576.8L431.8 572.0M471.9 621.2L487.7 618.2" stroke="#48cc3c" stroke-width="1.9" />
<path d="M165.0 326.7L190.7 352.2M190.7 352.2L216.6 377.6M216.6 377.6L242.8 402.7M242.8 402.7L269.2 427.6M357.6 463.2L381.6 488.5M381.6 488.5L406.0 513.5M406.0 513.5L430.6 538.3M430.6 538.3L455.5 562.9M455.5 562.9L480.7 587.1M480.7 587.1L506.2 611.1M506.2 611.1L531.9 634.9M531.9 634.9L558.0 658.4M558.0 658.4L584.3 681.6M584.3 681.6L610.9 704.6M610.9 704.6L637.7 727.4M216.6 377.6L264.1 359.4M269.2 427.6L310.3 411.8M322.5 476.6L357.6 463.2M376.7 524.8L406.0 513.5M431.8 572.0L455.5 562.9M558.0 658.4L573.4 651.2M610.9 704.6L621.1 699.7M664.9 749.8L670.0 747.3" stroke="#54cc30" stroke-width="1.9" />
<path d="M269.2 427.6L295.7 452.2M295.7 452.2L322.5 476.6M322.5 476.6L349.5 500.8M349.5 500.8L376.7 524.8M376.7 524.8L404.2 548.5M404.2 548.5L431.8 572.0M431.8 572.0L459.7 595.2M459.7 595.2L487.7 618.2M487.7 618.2L516.0 641.0M516.0 641.0L544.5 663.6M637.7 727.4L664.9 749.8M664.9 749.8L692.3 772.0M692.3 772.0L720.0 794.0M170.2 394.2L216.6 377.6M229.8 440.6L269.2 427.6M289.8 486.5L322.5 476.6M350.1 531.9L376.7 524.8M487.7 618.2L506.2 611.1M544.5 663.6L558.0 658.4M602.2 708.0L610.9 704.6M660.6 751.5L664.9 749.8" stroke="#48cc30" stroke-width="1.9" />
<path d="M219.0 306.0L241.4 332.8M241.4 332.8L264.1 359.4M264.1 359.4L287.0 385.8M287.0 385.8L310.3 411.8M310.3 411.8L333.8 437.6M333.8 437.6L357.6 463.2M481.7 551.3L504.2 576.6M504.2 576.6L527.0 601.7M527.0 601.7L550.1 626.6M550.1 626.6L573.4 651.2M573.4 651.2L597.1 675.6M597.1 675.6L621.1 699.7M621.1 699.7L645.4 723.6M645.4 723.6L670.0 747.3M670.0 747.3L694.8 770.8M694.8 770.8L720.0 794.0M310.3 411.8L352.9 394.5M357.6 463.2L394.6 447.7M406.0 513.5L437.6 500.0M455.5 562.9L481.7 551.3M506.2 611.1L527.0 601.7M670.0 747.3L675.5 744.5" stroke="#60cc30" stroke-width="1.9" />
<path d="M273.0 285.3L292.5 313.0M292.5 313.0L312.4 340.4M312.4 340.4L332.5 367.6M332.5 367.6L352.9 394.5M352.9 394.5L373.6 421.2M373.6 421.2L394.6 447.7M394.6 447.7L416.0 474.0M416.0 474.0L437.6 500.0M437.6 500.0L459.5 525.7M459.5 525.7L481.7 551.3M611.0 668.8L632.2 694.2M632.2 694.2L653.7 719.5M653.7 719.5L675.5 744.5M675.5 744.5L697.6 769.3M697.6 769.3L720.0 794.0M264.1 359.4L312.4 340.4M437.6 500.0L470.5 485.5M481.7 551.3L509.2 538.8M527.0 601.7L549.1 591.4M573.4 651.2L590.1 643.2M621.1 699.7L632.2 694.2" stroke="#6ccc30" stroke-width="1.9" />
<path d="M327.0 264.7L343.9 292.9M343.9 292.9L361.1 321.0M361.1 321.0L378.6 348.9M378.6 348.9L396.4 376.6M554.0 553.9L571.3 581.2M571.3 581.2L589.0 608.3M589.0 608.3L606.9 635.3M606.9 635.3L625.0 662.1M625.0 662.1L643.5 688.8M643.5 688.8L662.2 715.3M662.2 715.3L681.2 741.7M681.2 741.7L700.5 767.9M700.5 767.9L720.0 794.0M361.1 321.0L410.0 301.7M396.4 376.6L440.1 358.8M432.9 431.5L471.3 415.3M470.5 485.5L503.5 471.2M509.2 538.8L536.9 526.5M549.1 591.4L571.3 581.2" stroke="#84cc30" stroke-width="1.9" />
<path d="M396.4 376.6L414.5 404.1M414.5 404.1L432.9 431.5M432.9 431.5L451.5 458.6M451.5 458.6L470.5 485.5M470.5 485.5L489.7 512.3M489.7 512.3L509.2 538.8M509.2 538.8L529.0 565.2M529.0 565.2L549.1 591.4M549.1 591.4L569.4 617.4M569.4 617.4L590.1 643.2M590.1 643.2L611.0 668.8M312.4 340.4L361.1 321.0M352.9 394.5L396.4 376.6M394.6 447.7L432.9 431.5M590.1 643.2L606.9 635.3M632.2 694.2L643.5 688.8M675.5 744.5L681.2 741.7" stroke="#78cc30" stroke-width="1.9" />
<path d="M381.0 244.0L395.4 272.9M395.4 272.9L410.0 301.7M410.0 301.7L424.9 330.3M424.9 330.3L440.1 358.8M440.1 358.8L455.5 387.1M455.5 387.1L471.3 415.3M471.3 415.3L487.3 443.3M487.3 443.3L503.5 471.2M503.5 471.2L520.1 498.9M520.1 498.9L536.9 526.5M536.9 526.5L554.0 553.9M686.6 739.1L703.2 766.6M703.2 766.6L720.0 794.0M503.5 471.2L535.9 457.4M536.9 526.5L563.8 514.7M571.3 581.2L592.9 571.5M606.9 635.3L623.0 627.9M643.5 688.8L654.3 683.7M681.2 741.7L686.6 739.1" stroke="#90cc30" stroke-width="1.9" />
<path d="M435.0 223.3L446.7 253.0M446.7 253.0L458.6 282.6M458.6 282.6L470.8 312.0M470.8 312.0L483.3 341.3M483.3 341.3L496.0 370.5M613.3 562.2L625.6 591.6M625.6 591.6L638.2 620.8M638.2 620.8L651.1 649.9M651.1 649.9L664.3 678.9M664.3 678.9L677.8 707.8M677.8 707.8L691.6 736.7M691.6 736.7L705.6 765.4M705.6 765.4L720.0 794.0M483.3 341.3L525.7 324.1M509.0 399.6L545.8 384.2M535.9 457.4L567.1 444.0M563.8 514.7L589.6 503.3M592.9 571.5L613.3 562.2M623.0 627.9L638.2 620.8" stroke="#a8cc30" stroke-width="1.9" />
<path d="M496.0 370.5L509.0 399.6M509.0 399.6L522.3 428.6M522.3 428.6L535.9 457.4M535.9 457.4L549.7 486.1M549.7 486.1L563.8 514.7M563.8 514.7L578.2 543.2M578.2 543.2L592.9 571.5M592.9 571.5L607.8 599.8M607.8 599.8L623.0 627.9M623.0 627.9L638.5 655.9M638.5 655.9L654.3 683.7M654.3 683.7L670.3 711.5M670.3 711.5L686.6 739.1M410.0 301.7L458.6 282.6M440.1 358.8L483.3 341.3M471.3 415.3L509.0 399.6M654.3 683.7L664.3 678.9M686.6 739.1L691.6 736.7" stroke="#9ccc30" stroke-width="1.9" />
<path d="M489.0 202.7L497.7 233.2M497.7 233.2L506.8 263.6M506.8 263.6L516.1 293.9M516.1 293.9L525.7 324.1M525.7 324.1L535.6 354.2M535.6 354.2L545.8 384.2M545.8 384.2L556.3 414.2M556.3 414.2L567.1 444.0M567.1 444.0L578.2 473.7M578.2 473.7L589.6 503.3M589.6 503.3L601.3 532.8M601.3 532.8L613.3 562.2M684.9 704.2L696.3 734.2M696.3 734.2L708.0 764.1M708.0 764.1L720.0 794.0M458.6 282.6L506.8 263.6M589.6 503.3L614.7 491.9M613.3 562.2L633.1 552.9M638.2 620.8L652.8 613.7M664.3 678.9L673.9 674.1M691.6 736.7L696.3 734.2" stroke="#b4cc30" stroke-width="1.9" />
<path d="M543.0 182.0L548.7 213.3M548.7 213.3L554.7 244.6M554.7 244.6L561.0 275.8M561.0 275.8L567.7 306.9M567.7 306.9L574.7 337.9M574.7 337.9L582.0 368.9M618.6 273.7L621.5 303.0M621.5 303.0L624.7 332.2M624.7 332.2L628.2 361.4M628.2 361.4L632.1 390.5M632.1 390.5L636.2 419.6M636.2 419.6L640.7 448.6M640.7 448.6L645.5 477.6M645.5 477.6L650.7 506.6M650.7 506.6L656.1 535.5M656.1 535.5L661.9 564.4M661.9 564.4L668.1 593.3M668.1 593.3L674.5 622.1M674.5 622.1L681.3 650.8M681.3 650.8L688.4 679.5M688.4 679.5L695.8 708.2M695.8 708.2L703.5 736.9M703.5 736.9L711.6 765.4M711.6 765.4L720.0 794.0M554.7 244.6L618.6 273.7M567.7 306.9L624.7 332.2M582.0 368.9L632.1 390.5M597.7 430.5L640.7 448.6M614.7 491.9L650.7 506.6M633.1 552.9L661.9 564.4M652.8 613.7L674.5 622.1M674.5 622.1L698.3 629.7M688.4 679.5L704.4 684.5M703.5 736.9L711.7 739.3" stroke="#cccc30" stroke-width="1.9" />
<path d="M582.0 368.9L589.7 399.7M589.7 399.7L597.7 430.5M597.7 430.5L606.0 461.2M606.0 461.2L614.7 491.9M614.7 491.9L623.7 522.4M623.7 522.4L633.1 552.9M633.1 552.9L642.8 583.3M642.8 583.3L652.8 613.7M652.8 613.7L663.2 643.9M663.2 643.9L673.9 674.1M673.9 674.1L684.9 704.2M506.8 263.6L554.7 244.6M525.7 324.1L567.7 306.9M545.8 384.2L582.0 368.9M567.1 444.0L597.7 430.5M673.9 674.1L688.4 679.5M696.3 734.2L703.5 736.9" stroke="#c0cc30" stroke-width="1.9" />
<path d="M613.9 215.1L616.1 244.4M616.1 244.4L618.6 273.7M685.8 245.9L684.9 273.4M684.9 273.4L684.3 300.8M684.3 300.8L684.0 328.2M684.0 328.2L683.9 355.6M683.9 355.6L684.1 383.1M684.1 383.1L684.6 410.5M684.6 410.5L685.3 437.9M685.3 437.9L686.4 465.3M686.4 465.3L687.7 492.7M687.7 492.7L689.2 520.1M689.2 520.1L691.1 547.5M691.1 547.5L693.2 574.9M693.2 574.9L695.6 602.3M695.6 602.3L698.3 629.7M698.3 629.7L701.2 657.1M701.2 657.1L704.4 684.5M704.4 684.5L707.9 711.9M707.9 711.9L711.7 739.3M711.7 739.3L715.7 766.6M715.7 766.6L720.0 794.0M618.6 273.7L684.3 300.8M624.7 332.2L683.9 355.6M632.1 390.5L684.6 410.5M640.7 448.6L686.4 465.3M650.7 506.6L689.2 520.1M661.9 564.4L693.2 574.9M698.3 629.7L723.8 637.2M704.4 684.5L721.8 689.4M711.7 739.3L720.5 741.7" stroke="#ccc030" stroke-width="1.9" />
<path d="M758.7 274.3L755.0 300.1M755.0 300.1L751.5 325.9M751.5 325.9L748.1 351.7M748.1 351.7L745.0 377.6M745.0 377.6L742.0 403.4M742.0 403.4L739.2 429.3M739.2 429.3L736.6 455.3M736.6 455.3L734.2 481.2M734.2 481.2L732.0 507.1M732.0 507.1L730.0 533.1" stroke="#ccb424" stroke-width="1.9" />
<path d="M730.0 533.1L728.2 559.1M728.2 559.1L726.5 585.1M726.5 585.1L725.0 611.2M725.0 611.2L723.8 637.2M723.8 637.2L722.7 663.3M722.7 663.3L721.8 689.4M721.8 689.4L721.0 715.5M721.0 715.5L720.5 741.7M720.5 741.7L720.2 767.8M720.2 767.8L720.0 794.0M684.3 300.8L751.5 325.9M683.9 355.6L745.0 377.6M684.6 410.5L739.2 429.3M686.4 465.3L734.2 481.2M689.2 520.1L730.0 533.1M693.2 574.9L726.5 585.1" stroke="#ccb430" stroke-width="1.9" />
<path d="M832.4 300.5L826.0 325.0M826.0 325.0L819.6 349.4M819.6 349.4L813.3 374.0M813.3 374.0L807.1 398.5M807.1 398.5L801.0 423.0M801.0 423.0L795.0 447.6M795.0 447.6L789.0 472.2M789.0 472.2L783.2 496.8M783.2 496.8L777.5 521.5M777.5 521.5L771.8 546.1M771.8 546.1L766.2 570.8M766.2 570.8L760.7 595.5M760.7 595.5L755.3 620.3M755.3 620.3L750.0 645.0M750.0 645.0L744.8 669.8M744.8 669.8L739.7 694.6M739.7 694.6L734.6 719.4M734.6 719.4L729.6 744.3M729.6 744.3L724.8 769.1M724.8 769.1L720.0 794.0M751.5 325.9L819.6 349.4M745.0 377.6L807.1 398.5M739.2 429.3L795.0 447.6M734.2 481.2L783.2 496.8M730.0 533.1L771.8 546.1M726.5 585.1L760.7 595.5M723.8 637.2L750.0 645.0M721.8 689.4L739.7 694.6M720.5 741.7L729.6 744.3" stroke="#cca824" stroke-width="1.9" />
<path d="M907.8 321.3L898.4 344.9M898.4 344.9L889.0 368.5M889.0 368.5L879.5 392.1M879.5 392.1L870.1 415.8M870.1 415.8L860.7 439.4M860.7 439.4L851.3 463.0M851.3 463.0L841.9 486.6M841.9 486.6L832.5 510.3M832.5 510.3L823.1 533.9M823.1 533.9L813.7 557.5M813.7 557.5L804.3 581.2M804.3 581.2L794.9 604.8M794.9 604.8L785.5 628.5M785.5 628.5L776.1 652.1M776.1 652.1L766.8 675.7M766.8 675.7L757.4 699.4M757.4 699.4L748.0 723.0M748.0 723.0L738.7 746.7M738.7 746.7L729.3 770.3M729.3 770.3L720.0 794.0" stroke="#cc9024" stroke-width="1.9" />
<path d="M984.9 334.7L972.0 357.9M972.0 357.9L959.1 381.0M959.1 381.0L946.1 404.2M946.1 404.2L933.1 427.3M933.1 427.3L920.1 450.3M920.1 450.3L907.0 473.4M907.0 473.4L893.9 496.5M893.9 496.5L880.8 519.5M880.8 519.5L867.6 542.5M867.6 542.5L854.4 565.4M854.4 565.4L841.1 588.4M841.1 588.4L827.8 611.3M827.8 611.3L814.5 634.2M814.5 634.2L801.1 657.1M801.1 657.1L787.7 680.0M787.7 680.0L774.2 702.8M774.2 702.8L760.7 725.7M760.7 725.7L747.2 748.5M747.2 748.5L733.6 771.2M733.6 771.2L720.0 794.0" stroke="#d87824" stroke-width="1.9" />
<path d="M1061.4 351.0L1044.7 373.4M1044.7 373.4L1027.9 395.8M1027.9 395.8L1011.1 418.2M1011.1 418.2L994.3 440.5M994.3 440.5L977.4 462.8M977.4 462.8L960.5 485.1M960.5 485.1L943.6 507.3M943.6 507.3L926.6 529.5M926.6 529.5L909.6 551.7M909.6 551.7L892.5 573.9M892.5 573.9L875.4 596.0M875.4 596.0L858.3 618.1M858.3 618.1L841.2 640.2M841.2 640.2L824.0 662.3M824.0 662.3L806.7 684.3M806.7 684.3L789.4 706.3M789.4 706.3L772.1 728.3M772.1 728.3L754.8 750.2M754.8 750.2L737.4 772.1M737.4 772.1L720.0 794.0" stroke="#d85430" stroke-width="1.9" />
<path d="M1135.0 377.0L1114.3 397.9M1114.3 397.9L1093.6 418.8M1093.6 418.8L1072.9 439.7M1072.9 439.7L1052.2 460.6M1052.2 460.6L1031.5 481.5M1031.5 481.5L1010.8 502.4M1010.8 502.4L990.1 523.3M990.1 523.3L969.3 544.1M969.3 544.1L948.6 565.0M948.6 565.0L927.9 585.9M927.9 585.9L907.1 606.7M907.1 606.7L886.3 627.5M886.3 627.5L865.6 648.4M865.6 648.4L844.8 669.2M844.8 669.2L824.0 690.0M824.0 690.0L803.2 710.8M803.2 710.8L782.4 731.6M782.4 731.6L761.6 752.4M761.6 752.4L740.8 773.2M740.8 773.2L720.0 794.0M1093.6 418.8L1112.2 490.9M1052.2 460.6L1068.5 524.3M1010.8 502.4L1024.8 557.9M969.3 544.1L981.1 591.4M927.9 585.9L937.5 625.0M886.3 627.5L893.9 658.7M844.8 669.2L850.4 692.5M803.2 710.8L806.9 726.3M761.6 752.4L763.4 760.1" stroke="#d83030" stroke-width="1.9" />
<path d="M1156.0 457.5L1134.1 474.2M1134.1 474.2L1112.2 490.9M1112.2 490.9L1090.3 507.6M1090.3 507.6L1068.5 524.3M1068.5 524.3L1046.6 541.1M1046.6 541.1L1024.8 557.9M1024.8 557.9L1002.9 574.6M1002.9 574.6L981.1 591.4M981.1 591.4L959.3 608.2M959.3 608.2L937.5 625.0M937.5 625.0L915.7 641.9M915.7 641.9L893.9 658.7M893.9 658.7L872.1 675.6M872.1 675.6L850.4 692.5M850.4 692.5L828.6 709.4M828.6 709.4L806.9 726.3M806.9 726.3L785.1 743.2M785.1 743.2L763.4 760.1M763.4 760.1L741.7 777.0M741.7 777.0L720.0 794.0" stroke="#d8303c" stroke-width="1.9" />
<path d="M1177.3 537.9L1154.5 550.7M1154.5 550.7L1131.6 563.6M1131.6 563.6L1108.8 576.4M1108.8 576.4L1085.9 589.3M1085.9 589.3L1063.1 602.1M1063.1 602.1L1040.2 615.0M1040.2 615.0L1017.4 627.8M1017.4 627.8L994.5 640.6M994.5 640.6L971.7 653.4M971.7 653.4L948.8 666.2M948.8 666.2L925.9 679.0M925.9 679.0L903.1 691.8M903.1 691.8L880.2 704.6M880.2 704.6L857.3 717.4M857.3 717.4L834.4 730.2M834.4 730.2L811.6 743.0M811.6 743.0L788.7 755.7M788.7 755.7L765.8 768.5M765.8 768.5L742.9 781.2M742.9 781.2L720.0 794.0M1112.2 490.9L1131.6 563.6M1131.6 563.6L1156.8 635.6M1068.5 524.3L1085.9 589.3M1024.8 557.9L1040.2 615.0M981.1 591.4L994.5 640.6M937.5 625.0L948.8 666.2M893.9 658.7L903.1 691.8M850.4 692.5L857.3 717.4M806.9 726.3L811.6 743.0M763.4 760.1L765.8 768.5" stroke="#d83c54" stroke-width="1.9" />
<path d="M1204.7 616.4L1180.8 626.0M1180.8 626.0L1156.8 635.6M1156.8 635.6L1132.8 645.0M1132.8 645.0L1108.7 654.4M1108.7 654.4L1084.6 663.7M1084.6 663.7L1060.5 672.9M1060.5 672.9L1036.4 682.1M1036.4 682.1L1012.3 691.2M1012.3 691.2L988.1 700.2M988.1 700.2L963.8 709.1M963.8 709.1L939.6 717.9M939.6 717.9L915.3 726.7M915.3 726.7L891.0 735.4M891.0 735.4L866.7 744.0M866.7 744.0L842.3 752.5M842.3 752.5L817.9 761.0M817.9 761.0L793.5 769.3M793.5 769.3L769.0 777.6M769.0 777.6L744.5 785.9M744.5 785.9L720.0 794.0M1085.9 589.3L1108.7 654.4M1040.2 615.0L1060.5 672.9M994.5 640.6L1012.3 691.2M948.8 666.2L963.8 709.1M903.1 691.8L915.3 726.7M857.3 717.4L866.7 744.0M811.6 743.0L817.9 761.0M765.8 768.5L769.0 777.6" stroke="#d83c60" stroke-width="1.9" />
<path d="M1233.4 694.5L1208.2 701.3M1208.2 701.3L1182.9 707.9M1182.9 707.9L1157.5 714.3M1157.5 714.3L1132.2 720.5M1132.2 720.5L1106.7 726.6M1106.7 726.6L1081.3 732.4M1081.3 732.4L1055.7 738.0M1055.7 738.0L1030.2 743.5M1030.2 743.5L1004.6 748.8M1004.6 748.8L978.9 753.8M978.9 753.8L953.2 758.7M953.2 758.7L927.5 763.4M927.5 763.4L901.7 767.9M901.7 767.9L875.9 772.2M875.9 772.2L850.0 776.3M850.0 776.3L824.1 780.2M824.1 780.2L798.1 784.0M798.1 784.0L772.1 787.5M772.1 787.5L746.1 790.8M746.1 790.8L720.0 794.0M1182.9 707.9L1210.0 780.1" stroke="#d83c78" stroke-width="1.9" />
<path d="M1263.8 771.9L1236.9 776.2M1236.9 776.2L1210.0 780.1M1210.0 780.1L1183.1 783.7M1132.2 720.5L1156.1 786.9M1081.3 732.4L1102.1 792.4M1030.2 743.5L1047.9 796.6M978.9 753.8L993.6 799.5M927.5 763.4L939.1 801.0M875.9 772.2L884.5 801.3M824.1 780.2L829.8 800.2M772.1 787.5L775.0 797.7" stroke="#d83c84" stroke-width="1.9" />
<path d="M1183.1 783.7L1156.1 786.9M1156.1 786.9L1129.1 789.8M1129.1 789.8L1102.1 792.4M1102.1 792.4L1075.0 794.7M1075.0 794.7L1047.9 796.6M1047.9 796.6L1020.7 798.2M1020.7 798.2L993.6 799.5M993.6 799.5L966.4 800.4M966.4 800.4L939.1 801.0M939.1 801.0L911.9 801.3M911.9 801.3L884.5 801.3M884.5 801.3L857.2 800.9M857.2 800.9L829.8 800.2M829.8 800.2L802.4 799.1M1210.0 780.1L1238.4 851.6M1156.1 786.9L1180.7 852.7" stroke="#d83c90" stroke-width="1.9" />
<path d="M802.4 799.1L775.0 797.7M775.0 797.7L747.5 796.0M747.5 796.0L720.0 794.0M1296.1 848.6L1267.3 850.3M1267.3 850.3L1238.4 851.6M1238.4 851.6L1209.6 852.4M1209.6 852.4L1180.7 852.7M1180.7 852.7L1151.9 852.6M1151.9 852.6L1123.0 852.0M1102.1 792.4L1123.0 852.0M1047.9 796.6L1065.4 849.4M993.6 799.5L1007.8 844.8M939.1 801.0L950.2 838.4M884.5 801.3L892.6 830.2" stroke="#d83c9c" stroke-width="1.9" />
<path d="M1123.0 852.0L1094.2 850.9M1094.2 850.9L1065.4 849.4M1065.4 849.4L1036.6 847.3M1036.6 847.3L1007.8 844.8M1238.4 851.6L1267.6 922.2M829.8 800.2L835.0 820.0M775.0 797.7L777.5 807.9" stroke="#d83ca8" stroke-width="1.9" />
<path d="M1007.8 844.8L979.0 841.9M979.0 841.9L950.2 838.4M950.2 838.4L921.4 834.5M921.4 834.5L892.6 830.2M892.6 830.2L863.8 825.3M863.8 825.3L835.0 820.0M835.0 820.0L806.3 814.2M806.3 814.2L777.5 807.9M777.5 807.9L748.7 801.2M748.7 801.2L720.0 794.0M1329.8 924.7L1298.6 923.7M1298.6 923.7L1267.6 922.2M1267.6 922.2L1236.6 920.1M1236.6 920.1L1205.6 917.4M1205.6 917.4L1174.8 914.1M1180.7 852.7L1205.6 917.4M1123.0 852.0L1144.0 910.2M1065.4 849.4L1082.6 900.7M1007.8 844.8L1021.5 888.8" stroke="#d854b4" stroke-width="1.9" />
<path d="M1174.8 914.1L1144.0 910.2M1144.0 910.2L1113.2 905.7M1113.2 905.7L1082.6 900.7M1082.6 900.7L1052.0 895.0M1052.0 895.0L1021.5 888.8M1021.5 888.8L991.0 882.0M991.0 882.0L960.6 874.5M960.6 874.5L930.3 866.5M930.3 866.5L900.1 857.9M900.1 857.9L869.9 848.8M1364.7 1000.1L1331.2 996.1M1331.2 996.1L1297.7 991.4M1297.7 991.4L1264.5 986.0M1264.5 986.0L1231.3 980.0M1267.6 922.2L1297.7 991.4M1205.6 917.4L1231.3 980.0M1144.0 910.2L1165.4 966.0M1082.6 900.7L1100.1 949.3M950.2 838.4L960.6 874.5M892.6 830.2L900.1 857.9M835.0 820.0L839.8 839.0M777.5 807.9L779.7 817.7" stroke="#d854c0" stroke-width="1.9" />
<path d="M869.9 848.8L839.8 839.0M839.8 839.0L809.7 828.6M809.7 828.6L779.7 817.7M779.7 817.7L749.8 806.1M749.8 806.1L720.0 794.0M1231.3 980.0L1198.3 973.3M1198.3 973.3L1165.4 966.0M1165.4 966.0L1132.7 958.0M1132.7 958.0L1100.1 949.3M1100.1 949.3L1067.7 940.0M1067.7 940.0L1035.4 930.0M1035.4 930.0L1003.2 919.4M1003.2 919.4L971.2 908.1M971.2 908.1L939.3 896.2M1400.7 1075.2L1364.7 1067.4M1364.7 1067.4L1328.9 1059.0M1328.9 1059.0L1293.4 1050.0M1293.4 1050.0L1258.0 1040.2M1258.0 1040.2L1222.9 1029.8M1297.7 991.4L1328.9 1059.0M1231.3 980.0L1258.0 1040.2M1165.4 966.0L1187.9 1018.8M1100.1 949.3L1118.6 994.6M1021.5 888.8L1035.4 930.0M960.6 874.5L971.2 908.1M900.1 857.9L907.5 883.5M839.8 839.0L844.5 856.3M779.7 817.7L781.9 826.5" stroke="#d854cc" stroke-width="1.9" />
<path d="M939.3 896.2L907.5 883.5M907.5 883.5L875.9 870.3M875.9 870.3L844.5 856.3M844.5 856.3L813.1 841.7M813.1 841.7L781.9 826.5M1222.9 1029.8L1187.9 1018.8M1187.9 1018.8L1153.2 1007.0M1153.2 1007.0L1118.6 994.6M1118.6 994.6L1084.3 981.6M1437.0 1150.0L1398.9 1138.0M1398.9 1138.0L1361.0 1125.3M1328.9 1059.0L1361.0 1125.3M1258.0 1040.2L1285.9 1098.2M1035.4 930.0L1050.1 967.8M971.2 908.1L982.5 938.4" stroke="#d854d8" stroke-width="1.9" />
<path d="M781.9 826.5L750.9 810.6M750.9 810.6L720.0 794.0M1084.3 981.6L1050.1 967.8M1050.1 967.8L1016.2 953.5M1016.2 953.5L982.5 938.4M982.5 938.4L949.0 922.7M949.0 922.7L915.6 906.3M915.6 906.3L882.5 889.2M882.5 889.2L849.6 871.5M849.6 871.5L816.9 853.1M816.9 853.1L784.4 834.1M784.4 834.1L752.1 814.4M752.1 814.4L720.0 794.0M1361.0 1125.3L1323.3 1112.1M1323.3 1112.1L1285.9 1098.2M1285.9 1098.2L1248.7 1083.7M1248.7 1083.7L1211.8 1068.7M1211.8 1068.7L1175.1 1053.0M1175.1 1053.0L1138.6 1036.7M1138.6 1036.7L1102.4 1019.8M1102.4 1019.8L1066.4 1002.3M1066.4 1002.3L1030.7 984.2M1030.7 984.2L995.2 965.5M995.2 965.5L960.0 946.2M960.0 946.2L925.0 926.3M925.0 926.3L890.2 905.7M890.2 905.7L855.7 884.6M855.7 884.6L821.4 862.9M1409.6 1204.3L1372.8 1188.4M1372.8 1188.4L1336.2 1172.0M1336.2 1172.0L1299.9 1155.1M1299.9 1155.1L1263.8 1137.8M1263.8 1137.8L1227.9 1120.0M1227.9 1120.0L1192.4 1101.6M1192.4 1101.6L1157.0 1082.8M1157.0 1082.8L1121.9 1063.5M1361.0 1125.3L1336.2 1172.0M1336.2 1172.0L1311.6 1219.0M1285.9 1098.2L1263.8 1137.8M1187.9 1018.8L1211.8 1068.7M1211.8 1068.7L1192.4 1101.6M1118.6 994.6L1138.6 1036.7M1138.6 1036.7L1121.9 1063.5M1050.1 967.8L1066.4 1002.3M1066.4 1002.3L1052.5 1023.5M982.5 938.4L995.2 965.5M995.2 965.5L984.0 981.5M907.5 883.5L915.6 906.3M915.6 906.3L925.0 926.3M844.5 856.3L849.6 871.5M849.6 871.5L855.7 884.6M781.9 826.5L784.4 834.1M784.4 834.1L787.4 840.5" stroke="#cc54d8" stroke-width="1.9" />
<path d="M821.4 862.9L787.4 840.5M787.4 840.5L753.6 817.6M753.6 817.6L720.0 794.0M1121.9 1063.5L1087.1 1043.7M1087.1 1043.7L1052.5 1023.5M1052.5 1023.5L1018.1 1002.7M1018.1 1002.7L984.0 981.5M984.0 981.5L950.1 959.7M950.1 959.7L916.5 937.5M916.5 937.5L883.2 914.8M883.2 914.8L850.0 891.6M850.0 891.6L817.2 867.9M817.2 867.9L784.5 843.8M784.5 843.8L752.1 819.1M752.1 819.1L720.0 794.0M1382.1 1258.6L1346.8 1239.0M1346.8 1239.0L1311.6 1219.0M1311.6 1219.0L1276.7 1198.7M1276.7 1198.7L1242.1 1178.0M1242.1 1178.0L1207.7 1156.8M1207.7 1156.8L1173.5 1135.3M1173.5 1135.3L1139.5 1113.5M1139.5 1113.5L1105.8 1091.2M1105.8 1091.2L1072.4 1068.5M1072.4 1068.5L1039.1 1045.5M1039.1 1045.5L1006.2 1022.1M1006.2 1022.1L973.4 998.3M973.4 998.3L940.9 974.1M940.9 974.1L908.6 949.5M908.6 949.5L876.6 924.5M876.6 924.5L844.8 899.2M844.8 899.2L813.2 873.5M813.2 873.5L781.9 847.4M1354.7 1312.9L1320.9 1289.8M1320.9 1289.8L1287.2 1266.4M1287.2 1266.4L1253.8 1242.7M1253.8 1242.7L1220.6 1218.7M1220.6 1218.7L1187.7 1194.4M1311.6 1219.0L1287.2 1266.4M1263.8 1137.8L1242.1 1178.0M1242.1 1178.0L1220.6 1218.7M1192.4 1101.6L1173.5 1135.3M1173.5 1135.3L1154.9 1169.8M1121.9 1063.5L1105.8 1091.2M1105.8 1091.2L1090.1 1119.7M1052.5 1023.5L1039.1 1045.5M1039.1 1045.5L1026.2 1068.4M984.0 981.5L973.4 998.3M973.4 998.3L963.2 1015.9M925.0 926.3L916.5 937.5M916.5 937.5L908.6 949.5M855.7 884.6L850.0 891.6M850.0 891.6L844.8 899.2M787.4 840.5L784.5 843.8M784.5 843.8L781.9 847.4" stroke="#c054d8" stroke-width="1.9" />
<path d="M781.9 847.4L750.8 820.9M750.8 820.9L720.0 794.0M1187.7 1194.4L1154.9 1169.8M1154.9 1169.8L1122.4 1144.9M1122.4 1144.9L1090.1 1119.7M1090.1 1119.7L1058.0 1094.2M1058.0 1094.2L1026.2 1068.4M1026.2 1068.4L994.6 1042.3M994.6 1042.3L963.2 1015.9M963.2 1015.9L932.0 989.3M932.0 989.3L901.0 962.3M901.0 962.3L870.3 935.0M870.3 935.0L839.8 907.4M839.8 907.4L809.5 879.5M809.5 879.5L779.5 851.3M779.5 851.3L749.6 822.8M749.6 822.8L720.0 794.0M1327.3 1367.1L1295.1 1340.5M1295.1 1340.5L1263.2 1313.6M1263.2 1313.6L1231.4 1286.6M1231.4 1286.6L1199.9 1259.3M1199.9 1259.3L1168.5 1231.8M1287.2 1266.4L1263.2 1313.6M1220.6 1218.7L1199.9 1259.3M1154.9 1169.8L1137.3 1204.1M1090.1 1119.7L1075.4 1148.1M1026.2 1068.4L1014.3 1091.2M963.2 1015.9L953.9 1033.4M908.6 949.5L901.0 962.3M844.8 899.2L839.8 907.4M781.9 847.4L779.5 851.3" stroke="#b454d8" stroke-width="1.9" />
<path d="M1168.5 1231.8L1137.3 1204.1M1137.3 1204.1L1106.2 1176.2M1106.2 1176.2L1075.4 1148.1M1075.4 1148.1L1044.8 1119.7M1044.8 1119.7L1014.3 1091.2M1014.3 1091.2L984.0 1062.4M984.0 1062.4L953.9 1033.4M953.9 1033.4L924.1 1004.2M924.1 1004.2L894.3 974.8M894.3 974.8L864.8 945.2M864.8 945.2L835.5 915.4M835.5 915.4L806.3 885.4M806.3 885.4L777.4 855.1M777.4 855.1L748.6 824.7M748.6 824.7L720.0 794.0M1299.9 1421.4L1270.0 1390.9M1270.0 1390.9L1240.2 1360.3M1240.2 1360.3L1210.5 1329.6M1210.5 1329.6L1180.9 1298.8M1263.2 1313.6L1240.2 1360.3M1199.9 1259.3L1180.9 1298.8M1137.3 1204.1L1122.0 1237.0M1075.4 1148.1L1063.4 1174.8M1014.3 1091.2L1005.2 1112.2M953.9 1033.4L947.4 1049.3M901.0 962.3L894.3 974.8M894.3 974.8L890.0 986.0M839.8 907.4L835.5 915.4M835.5 915.4L833.0 922.4M779.5 851.3L777.4 855.1" stroke="#a854d8" stroke-width="1.9" />
<path d="M1180.9 1298.8L1151.4 1267.9M1151.4 1267.9L1122.0 1237.0M1122.0 1237.0L1092.6 1205.9M1092.6 1205.9L1063.4 1174.8M1063.4 1174.8L1034.3 1143.5M1034.3 1143.5L1005.2 1112.2M1005.2 1112.2L976.3 1080.8M976.3 1080.8L947.4 1049.3M947.4 1049.3L918.7 1017.7M918.7 1017.7L890.0 986.0M890.0 986.0L861.4 954.2M861.4 954.2L833.0 922.4M833.0 922.4L804.6 890.4M804.6 890.4L776.3 858.4M776.3 858.4L748.1 826.2M748.1 826.2L720.0 794.0M1272.4 1475.7L1245.8 1440.9M1245.8 1440.9L1219.0 1406.1M1219.0 1406.1L1192.1 1371.4M1192.1 1371.4L1165.2 1336.8M1165.2 1336.8L1138.1 1302.3M1138.1 1302.3L1110.9 1267.9M1110.9 1267.9L1083.7 1233.5M1083.7 1233.5L1056.3 1199.2M1056.3 1199.2L1028.8 1165.0M1028.8 1165.0L1001.3 1130.9M1001.3 1130.9L973.6 1096.9M973.6 1096.9L945.8 1062.9M945.8 1062.9L917.9 1029.0M917.9 1029.0L890.0 995.2M890.0 995.2L861.9 961.5M861.9 961.5L833.7 927.8M833.7 927.8L805.4 894.2M805.4 894.2L777.1 860.7M777.1 860.7L748.6 827.3M748.6 827.3L720.0 794.0M976.5 1112.3L949.6 1075.9M949.6 1075.9L922.3 1039.8M922.3 1039.8L894.7 1003.9M894.7 1003.9L866.6 968.3M866.6 968.3L838.1 932.9M838.1 932.9L809.2 897.8M809.2 897.8L779.9 862.9M779.9 862.9L750.1 828.3M750.1 828.3L720.0 794.0M879.4 991.5L854.5 957.7M854.5 957.7L828.9 924.3M828.9 924.3L802.7 891.2M802.7 891.2L775.8 858.5M775.8 858.5L748.2 826.1M748.2 826.1L720.0 794.0M769.8 855.3L745.3 824.5M745.3 824.5L720.0 794.0M1240.2 1360.3L1219.0 1406.1M1180.9 1298.8L1165.2 1336.8M1122.0 1237.0L1110.9 1267.9M1063.4 1174.8L1056.3 1199.2M1005.2 1112.2L1001.3 1130.9M1001.3 1130.9L1002.9 1149.0M947.4 1049.3L945.8 1062.9M945.8 1062.9L949.6 1075.9M890.0 986.0L890.0 995.2M890.0 995.2L894.7 1003.9M894.7 1003.9L879.4 991.5M833.0 922.4L833.7 927.8M833.7 927.8L838.1 932.9M838.1 932.9L828.9 924.3M777.4 855.1L776.3 858.4M776.3 858.4L777.1 860.7M777.1 860.7L779.9 862.9M779.9 862.9L775.8 858.5M775.8 858.5L769.8 855.3" stroke="#9c54d8" stroke-width="1.9" />
<path d="M1245.0 1530.0L1222.6 1490.7M1222.6 1490.7L1199.9 1451.7M1199.9 1451.7L1176.7 1413.0M1035.0 1237.1L1014.8 1201.0M1014.8 1201.0L993.9 1165.2M899.7 1046.6L880.1 1013.9M741.2 823.4L720.0 794.0M1104.7 1298.3L1054.5 1273.5M816.3 917.8L799.7 913.0" stroke="#8454d8" stroke-width="1.9" />
<path d="M1176.7 1413.0L1153.1 1374.5M1153.1 1374.5L1129.1 1336.3M1129.1 1336.3L1104.7 1298.3M1104.7 1298.3L1079.8 1260.6M1079.8 1260.6L1054.6 1223.1M1054.6 1223.1L1029.0 1185.9M1029.0 1185.9L1002.9 1149.0M1002.9 1149.0L976.5 1112.3M993.9 1165.2L972.3 1129.8M972.3 1129.8L950.1 1094.7M950.1 1094.7L927.2 1060.0M927.2 1060.0L903.6 1025.5M903.6 1025.5L879.4 991.5M880.1 1013.9L859.6 981.6M859.6 981.6L838.4 949.5M838.4 949.5L816.3 917.8M816.3 917.8L793.4 886.4M793.4 886.4L769.8 855.3M1219.0 1406.1L1199.9 1451.7M1165.2 1336.8L1153.1 1374.5M1110.9 1267.9L1104.7 1298.3M1056.3 1199.2L1054.6 1223.1M1054.6 1223.1L1014.8 1201.0M1002.9 1149.0L972.3 1129.8M949.6 1075.9L927.2 1060.0M927.2 1060.0L899.7 1046.6M879.4 991.5L859.6 981.6M828.9 924.3L816.3 917.8M769.8 855.3L761.5 853.0" stroke="#9054d8" stroke-width="1.9" />
<path d="M1157.9 1499.2L1142.3 1460.7M1142.3 1460.7L1126.1 1422.6M1126.1 1422.6L1109.2 1384.8M1109.2 1384.8L1091.6 1347.4M1027.9 1319.2L1014.7 1284.0M1014.7 1284.0L1000.7 1249.1M1000.7 1249.1L985.9 1214.6M985.9 1214.6L970.3 1180.4M970.3 1180.4L953.8 1146.4M894.8 1098.4L881.0 1066.9M881.0 1066.9L866.4 1035.7M866.4 1035.7L851.0 1004.7M851.0 1004.7L834.7 973.9M834.7 973.9L817.6 943.3M817.6 943.3L799.7 913.0M1126.1 1422.6L1051.9 1390.4M1091.6 1347.4L1027.9 1319.2M1054.5 1273.5L1000.7 1249.1M970.3 1180.4L920.0 1162.1M936.6 1112.8L894.8 1098.4M899.7 1046.6L866.4 1035.7M799.7 913.0L780.5 908.7M761.5 853.0L751.7 851.1" stroke="#606ce4" stroke-width="1.9" />
<path d="M1091.6 1347.4L1073.4 1310.3M953.8 1146.4L936.6 1112.8M936.6 1112.8L918.6 1079.6M799.7 913.0L781.0 882.9M1199.9 1451.7L1126.1 1422.6M1014.8 1201.0L970.3 1180.4" stroke="#6c60d8" stroke-width="1.9" />
<path d="M1073.4 1310.3L1054.5 1273.5M1054.5 1273.5L1035.0 1237.1M918.6 1079.6L899.7 1046.6M781.0 882.9L761.5 853.0M761.5 853.0L741.2 823.4M1153.1 1374.5L1091.6 1347.4M859.6 981.6L834.7 973.9" stroke="#7860d8" stroke-width="1.9" />
<path d="M1072.7 1463.0L1062.7 1426.6M1062.7 1426.6L1051.9 1390.4M1051.9 1390.4L1040.3 1354.6M1040.3 1354.6L1027.9 1319.2M968.6 1325.3L960.5 1292.2M960.5 1292.2L951.6 1259.3M951.6 1259.3L941.9 1226.7M941.9 1226.7L931.3 1194.3M931.3 1194.3L920.0 1162.1M920.0 1162.1L907.8 1130.1M907.8 1130.1L894.8 1098.4M829.1 1025.6L818.0 996.2M818.0 996.2L806.3 966.9M806.3 966.9L793.8 937.7M793.8 937.7L780.5 908.7M780.5 908.7L766.5 879.8M766.5 879.8L751.7 851.1M751.7 851.1L736.2 822.5M736.2 822.5L720.0 794.0M1051.9 1390.4L975.8 1358.7M1027.9 1319.2L960.5 1292.2M1000.7 1249.1L941.9 1226.7M920.0 1162.1L865.7 1144.6M894.8 1098.4L848.9 1084.8M866.4 1035.7L829.1 1025.6M834.7 973.9L806.3 966.9" stroke="#5478e4" stroke-width="1.9" />
<path d="M987.9 1426.1L982.3 1392.2M982.3 1392.2L975.8 1358.7M975.8 1358.7L968.6 1325.3M894.7 1296.3L890.4 1265.7M890.4 1265.7L885.4 1235.2M885.4 1235.2L879.6 1204.8M879.6 1204.8L873.0 1174.6M873.0 1174.6L865.7 1144.6M865.7 1144.6L857.7 1114.6M857.7 1114.6L848.9 1084.8M848.9 1084.8L839.3 1055.1M839.3 1055.1L829.1 1025.6M768.2 931.6L759.8 904.0M759.8 904.0L750.8 876.5M750.8 876.5L741.2 848.9M741.2 848.9L730.9 821.4M730.9 821.4L720.0 794.0M975.8 1358.7L898.3 1327.0M960.5 1292.2L890.4 1265.7M941.9 1226.7L879.6 1204.8M848.9 1084.8L800.8 1070.3M829.1 1025.6L789.6 1014.7M806.3 966.9L776.0 959.3M780.5 908.7L759.8 904.0M751.7 851.1L741.2 848.9" stroke="#5484e4" stroke-width="1.9" />
<path d="M903.2 1388.9L901.1 1357.9M901.1 1357.9L898.3 1327.0M898.3 1327.0L894.7 1296.3M820.3 1294.2L820.1 1266.1M820.1 1266.1L819.2 1238.0M819.2 1238.0L817.7 1209.9M817.7 1209.9L815.5 1181.9M815.5 1181.9L812.8 1153.9M812.8 1153.9L809.4 1126.0M809.4 1126.0L805.4 1098.1M805.4 1098.1L800.8 1070.3M800.8 1070.3L795.5 1042.5M795.5 1042.5L789.6 1014.7M789.6 1014.7L783.1 987.0M783.1 987.0L776.0 959.3M776.0 959.3L768.2 931.6M725.4 820.0L720.0 794.0M898.3 1327.0L820.3 1294.2M890.4 1265.7L819.2 1238.0M879.6 1204.8L815.5 1181.9M865.7 1144.6L809.4 1126.0M800.8 1070.3L752.5 1052.6M789.6 1014.7L749.8 1001.1M776.0 959.3L745.2 949.5M759.8 904.0L738.8 897.8M741.2 848.9L730.3 845.9" stroke="#5490e4" stroke-width="1.9" />
<path d="M819.0 1350.6L820.0 1322.4M820.0 1322.4L820.3 1294.2M746.6 1231.8L748.8 1206.3M748.8 1206.3L750.6 1180.7M750.6 1180.7L752.0 1155.2M752.0 1155.2L752.8 1129.6M752.8 1129.6L753.2 1103.9M753.2 1103.9L753.1 1078.3M753.1 1078.3L752.5 1052.6M752.5 1052.6L751.4 1026.8M751.4 1026.8L749.8 1001.1M749.8 1001.1L747.8 975.3M747.8 975.3L745.2 949.5M745.2 949.5L742.2 923.6M742.2 923.6L738.8 897.8M738.8 897.8L734.8 871.9M734.8 871.9L730.3 845.9M730.3 845.9L725.4 820.0M820.3 1294.2L743.8 1257.3M819.2 1238.0L748.8 1206.3M815.5 1181.9L752.0 1155.2M809.4 1126.0L753.2 1103.9M745.2 949.5L715.0 937.1M738.8 897.8L718.0 889.7M730.3 845.9L719.7 842.0" stroke="#549ce4" stroke-width="1.9" />
<path d="M736.8 1308.2L740.5 1282.7M740.5 1282.7L743.8 1257.3M743.8 1257.3L746.6 1231.8M674.9 1193.0L680.2 1170.1M680.2 1170.1L685.2 1147.1M685.2 1147.1L689.8 1124.1M689.8 1124.1L694.1 1100.9M698.1 1077.7L701.7 1054.5M701.7 1054.5L705.0 1031.1M705.0 1031.1L708.0 1007.7M708.0 1007.7L710.7 984.3M710.7 984.3L713.0 960.7M713.0 960.7L715.0 937.1M715.0 937.1L716.7 913.4M716.7 913.4L718.0 889.7M718.0 889.7L719.0 865.9M719.0 865.9L719.7 842.0M719.7 842.0L720.0 818.0M720.0 818.0L720.0 794.0M743.8 1257.3L669.3 1215.9M748.8 1206.3L680.2 1170.1M752.0 1155.2L689.8 1124.1M753.2 1103.9L698.1 1077.7M752.5 1052.6L705.0 1031.1M749.8 1001.1L710.7 984.3" stroke="#54a8e4" stroke-width="1.9" />
<path d="M657.0 1261.4L663.3 1238.7M663.3 1238.7L669.3 1215.9M669.3 1215.9L674.9 1193.0M694.1 1100.9L698.1 1077.7M671.8 965.9L678.5 944.6M678.5 944.6L685.0 923.3M685.0 923.3L691.3 902.0M691.3 902.0L697.4 880.5M697.4 880.5L703.4 859.0M703.4 859.0L709.1 837.4M709.1 837.4L714.6 815.7M714.6 815.7L720.0 794.0M669.3 1215.9L594.7 1174.1M680.2 1170.1L611.7 1133.0M689.8 1124.1L627.8 1091.7M698.1 1077.7L643.3 1050.0M705.0 1031.1L657.9 1008.1M710.7 984.3L671.8 965.9M715.0 937.1L685.0 923.3M718.0 889.7L697.4 880.5M719.7 842.0L709.1 837.4" stroke="#54b4e4" stroke-width="1.9" />
<path d="M577.1 1214.9L586.0 1194.5M586.0 1194.5L594.7 1174.1M594.7 1174.1L603.3 1153.6M603.3 1153.6L611.7 1133.0M611.7 1133.0L619.8 1112.4M619.8 1112.4L627.8 1091.7M627.8 1091.7L635.6 1070.9M635.6 1070.9L643.3 1050.0M643.3 1050.0L650.7 1029.1M650.7 1029.1L657.9 1008.1M657.9 1008.1L665.0 987.0M665.0 987.0L671.8 965.9M671.8 965.9L634.7 944.6M685.0 923.3L656.4 907.2M697.4 880.5L677.9 869.6M709.1 837.4L699.1 831.9" stroke="#54c0e4" stroke-width="1.9" />
<path d="M498.8 1165.5L510.5 1147.3M510.5 1147.3L522.1 1129.1M522.1 1129.1L533.7 1110.8M533.7 1110.8L545.2 1092.5M545.2 1092.5L556.6 1074.2M556.6 1074.2L567.9 1055.8M567.9 1055.8L579.2 1037.3M579.2 1037.3L590.4 1018.9M590.4 1018.9L601.6 1000.3M601.6 1000.3L612.7 981.8M612.7 981.8L623.7 963.2M623.7 963.2L634.7 944.6M634.7 944.6L645.6 925.9M645.6 925.9L656.4 907.2M656.4 907.2L667.2 888.4M667.2 888.4L677.9 869.6M677.9 869.6L688.5 850.8M688.5 850.8L699.1 831.9M699.1 831.9L709.6 813.0M709.6 813.0L720.0 794.0M522.1 1129.1L452.1 1080.5M545.2 1092.5L481.4 1048.2M567.9 1055.8L510.8 1016.1M590.4 1018.9L540.4 984.1M612.7 981.8L570.1 952.2M634.7 944.6L599.8 920.3M656.4 907.2L629.7 888.6M677.9 869.6L659.7 857.0M699.1 831.9L689.8 825.4" stroke="#54ccd8" stroke-width="1.9" />
<path d="M422.8 1112.8L437.4 1096.6M437.4 1096.6L452.1 1080.5M452.1 1080.5L466.7 1064.3M466.7 1064.3L481.4 1048.2M481.4 1048.2L496.1 1032.2M496.1 1032.2L510.8 1016.1M510.8 1016.1L525.6 1000.1M525.6 1000.1L540.4 984.1M540.4 984.1L555.2 968.1M555.2 968.1L570.1 952.2M570.1 952.2L584.9 936.2M584.9 936.2L599.8 920.3M599.8 920.3L614.8 904.4M614.8 904.4L629.7 888.6M629.7 888.6L644.7 872.8M644.7 872.8L659.7 857.0M659.7 857.0L674.7 841.2M674.7 841.2L689.8 825.4M689.8 825.4L704.9 809.7M704.9 809.7L720.0 794.0" stroke="#48ccd8" stroke-width="1.9" />
<path d="M350.5 1055.2L368.1 1041.1M368.1 1041.1L385.9 1027.0M385.9 1027.0L403.7 1013.1M403.7 1013.1L421.7 999.3M421.7 999.3L439.7 985.7M439.7 985.7L457.8 972.1M457.8 972.1L475.9 958.6M475.9 958.6L494.2 945.3M494.2 945.3L512.5 932.1M512.5 932.1L531.0 919.0M531.0 919.0L549.5 906.0M549.5 906.0L568.1 893.1M568.1 893.1L586.8 880.3M586.8 880.3L605.6 867.6M605.6 867.6L624.4 855.1M624.4 855.1L643.4 842.6M643.4 842.6L662.4 830.3M662.4 830.3L681.5 818.1M681.5 818.1L700.7 806.0M700.7 806.0L720.0 794.0M452.1 1080.5L385.9 1027.0M481.4 1048.2L421.7 999.3M510.8 1016.1L457.8 972.1M540.4 984.1L494.2 945.3M570.1 952.2L531.0 919.0M599.8 920.3L568.1 893.1M629.7 888.6L605.6 867.6M659.7 857.0L643.4 842.6M689.8 825.4L681.5 818.1" stroke="#48cccc" stroke-width="1.9" />
<path d="M282.0 993.0L302.9 981.0M302.9 981.0L323.8 969.3M323.8 969.3L344.9 957.7M344.9 957.7L366.1 946.4M366.1 946.4L387.4 935.2M387.4 935.2L408.8 924.3M408.8 924.3L430.3 913.6M430.3 913.6L451.9 903.1M451.9 903.1L473.6 892.9M385.9 1027.0L323.8 969.3M421.7 999.3L366.1 946.4M457.8 972.1L408.8 924.3M494.2 945.3L451.9 903.1M531.0 919.0L495.5 882.8M568.1 893.1L539.5 863.3M605.6 867.6L584.0 844.7M643.4 842.6L628.9 827.0M681.5 818.1L674.2 810.1" stroke="#48ccc0" stroke-width="1.9" />
<path d="M473.6 892.9L495.5 882.8M495.5 882.8L517.4 873.0M517.4 873.0L539.5 863.3M539.5 863.3L561.7 853.9M561.7 853.9L584.0 844.7M584.0 844.7L606.4 835.7M606.4 835.7L628.9 827.0M628.9 827.0L651.5 818.4M651.5 818.4L674.2 810.1M674.2 810.1L697.1 801.9M697.1 801.9L720.0 794.0M250.0 934.0L272.5 924.4M272.5 924.4L295.2 915.1M295.2 915.1L317.9 906.0M317.9 906.0L340.8 897.2M340.8 897.2L363.7 888.7M363.7 888.7L386.8 880.4M386.8 880.4L409.9 872.5M409.9 872.5L433.2 864.8M323.8 969.3L295.2 915.1M366.1 946.4L340.8 897.2M408.8 924.3L386.8 880.4M451.9 903.1L433.2 864.8M495.5 882.8L480.0 850.2M539.5 863.3L527.2 836.8M584.0 844.7L574.8 824.4M628.9 827.0L622.8 813.2M674.2 810.1L671.2 803.0" stroke="#48ccb4" stroke-width="1.9" />
<path d="M433.2 864.8L456.5 857.4M456.5 857.4L480.0 850.2M480.0 850.2L503.5 843.4M503.5 843.4L527.2 836.8M527.2 836.8L550.9 830.5M550.9 830.5L574.8 824.4M574.8 824.4L598.7 818.7M598.7 818.7L622.8 813.2M622.8 813.2L646.9 808.0M646.9 808.0L671.2 803.0M671.2 803.0L695.5 798.4M695.5 798.4L720.0 794.0M217.8 875.1L242.1 867.8M242.1 867.8L266.6 860.8M266.6 860.8L291.1 854.2M291.1 854.2L315.7 847.9M315.7 847.9L340.3 842.0M340.3 842.0L365.1 836.4M295.2 915.1L266.6 860.8M340.8 897.2L315.7 847.9M386.8 880.4L365.1 836.4M433.2 864.8L414.8 826.2M480.0 850.2L464.9 817.4M527.2 836.8L515.3 810.0M574.8 824.4L566.0 803.9" stroke="#48cca8" stroke-width="1.9" />
<path d="M365.1 836.4L389.9 831.1M389.9 831.1L414.8 826.2M414.8 826.2L439.8 821.6M439.8 821.6L464.9 817.4M464.9 817.4L490.0 813.5M490.0 813.5L515.3 810.0M515.3 810.0L540.6 806.8M540.6 806.8L566.0 803.9M566.0 803.9L591.4 801.4M591.4 801.4L617.0 799.3M617.0 799.3L642.6 797.4M642.6 797.4L668.3 795.9M668.3 795.9L694.1 794.8M694.1 794.8L720.0 794.0M186.1 816.0L212.3 810.9M212.3 810.9L238.6 806.3M238.6 806.3L264.9 802.1M264.9 802.1L291.3 798.3M291.3 798.3L317.7 794.9M266.6 860.8L238.6 806.3M315.7 847.9L291.3 798.3M365.1 836.4L344.2 792.0M414.8 826.2L397.3 787.3M464.9 817.4L450.6 784.3M515.3 810.0L504.1 782.9M622.8 813.2L617.0 799.3M671.2 803.0L668.3 795.9" stroke="#48cc9c" stroke-width="1.9" />
<path d="M317.7 794.9L344.2 792.0M344.2 792.0L370.7 789.4M370.7 789.4L397.3 787.3M397.3 787.3L423.9 785.6M423.9 785.6L450.6 784.3M450.6 784.3L477.3 783.4M477.3 783.4L504.1 782.9M504.1 782.9L530.9 782.8M530.9 782.8L557.7 783.2M557.7 783.2L584.7 784.0M584.7 784.0L611.6 785.1M611.6 785.1L638.6 786.7M638.6 786.7L665.7 788.7M155.8 756.1L183.9 753.4M183.9 753.4L212.1 751.2M212.1 751.2L240.2 749.4M240.2 749.4L268.4 748.2M238.6 806.3L212.1 751.2M291.3 798.3L268.4 748.2M344.2 792.0L324.7 747.1M397.3 787.3L381.1 748.0M450.6 784.3L437.5 750.9M566.0 803.9L557.7 783.2M617.0 799.3L611.6 785.1M668.3 795.9L665.7 788.7" stroke="#48cc90" stroke-width="1.9" />
<path d="M665.7 788.7L692.8 791.2M692.8 791.2L720.0 794.0M268.4 748.2L296.5 747.4M296.5 747.4L324.7 747.1M324.7 747.1L352.9 747.3M504.1 782.9L493.9 755.6" stroke="#48cc84" stroke-width="1.9" />
<path d="M352.9 747.3L381.1 748.0M381.1 748.0L409.3 749.2M409.3 749.2L437.5 750.9M437.5 750.9L465.7 753.0M465.7 753.0L493.9 755.6M212.1 751.2L187.4 695.4M268.4 748.2L247.2 697.7M557.7 783.2L550.4 762.3M611.6 785.1L606.9 770.9M665.7 788.7L663.4 781.5" stroke="#48d884" stroke-width="1.9" />
<path d="M493.9 755.6L522.1 758.7M522.1 758.7L550.4 762.3M550.4 762.3L578.6 766.4M578.6 766.4L606.9 770.9M127.4 695.3L157.4 695.1M157.4 695.1L187.4 695.4M187.4 695.4L217.3 696.3M217.3 696.3L247.2 697.7M324.7 747.1L306.9 702.2M381.1 748.0L366.4 708.8" stroke="#54d884" stroke-width="1.9" />
<path d="M606.9 770.9L635.1 776.0M635.1 776.0L663.4 781.5M663.4 781.5L691.7 787.5M691.7 787.5L720.0 794.0M247.2 697.7L277.1 699.7M277.1 699.7L306.9 702.2M306.9 702.2L336.7 705.2M336.7 705.2L366.4 708.8M366.4 708.8L396.1 712.9M396.1 712.9L425.7 717.6M425.7 717.6L455.3 722.8M106.4 631.6L138.0 634.3M187.4 695.4L169.5 637.5M247.2 697.7L232.2 645.7M437.5 750.9L425.7 717.6M493.9 755.6L484.9 728.5M550.4 762.3L543.9 741.6M606.9 770.9L602.8 756.9" stroke="#54d878" stroke-width="1.9" />
<path d="M455.3 722.8L484.9 728.5M484.9 728.5L514.4 734.8M514.4 734.8L543.9 741.6M543.9 741.6L573.4 749.0M573.4 749.0L602.8 756.9M602.8 756.9L632.1 765.4M632.1 765.4L661.5 774.4M661.5 774.4L690.8 783.9M690.8 783.9L720.0 794.0M138.0 634.3L169.5 637.5M169.5 637.5L200.9 641.3M200.9 641.3L232.2 645.7M232.2 645.7L263.4 650.7M263.4 650.7L294.5 656.2M294.5 656.2L325.6 662.3M325.6 662.3L356.5 669.0M169.5 637.5L156.1 579.1M306.9 702.2L294.5 656.2M366.4 708.8L356.5 669.0M425.7 717.6L418.0 684.1M484.9 728.5L479.2 701.5M663.4 781.5L661.5 774.4" stroke="#54d86c" stroke-width="1.9" />
<path d="M356.5 669.0L387.3 676.3M387.3 676.3L418.0 684.1M418.0 684.1L448.7 692.5M448.7 692.5L479.2 701.5M479.2 701.5L509.6 711.0M509.6 711.0L540.0 721.2M540.0 721.2L570.2 731.9M570.2 731.9L600.4 743.2M600.4 743.2L630.4 755.0M630.4 755.0L660.4 767.4M660.4 767.4L690.2 780.4M690.2 780.4L720.0 794.0M90.4 566.4L123.3 572.5M123.3 572.5L156.1 579.1M156.1 579.1L188.7 586.2M188.7 586.2L221.1 594.0M221.1 594.0L253.4 602.2M253.4 602.2L285.6 611.1M285.6 611.1L317.6 620.5M317.6 620.5L349.4 630.5M349.4 630.5L381.1 641.0M381.1 641.0L412.7 652.1M412.7 652.1L444.1 663.8M444.1 663.8L475.4 676.0M475.4 676.0L506.5 688.8M506.5 688.8L537.4 702.1M537.4 702.1L568.2 716.0M568.2 716.0L598.9 730.5M598.9 730.5L629.4 745.5M629.4 745.5L659.7 761.1M76.8 500.7L110.6 510.8M110.6 510.8L144.3 521.4M144.3 521.4L177.8 532.4M177.8 532.4L211.1 543.9M211.1 543.9L244.3 555.9M244.3 555.9L277.3 568.4M277.3 568.4L310.0 581.4M310.0 581.4L342.7 594.9M342.7 594.9L375.1 608.8M375.1 608.8L407.3 623.2M156.1 579.1L144.3 521.4M144.3 521.4L134.3 464.7M232.2 645.7L221.1 594.0M221.1 594.0L211.1 543.9M211.1 543.9L201.8 496.2M294.5 656.2L285.6 611.1M285.6 611.1L277.3 568.4M356.5 669.0L349.4 630.5M349.4 630.5L342.7 594.9M418.0 684.1L412.7 652.1M412.7 652.1L407.3 623.2M479.2 701.5L475.4 676.0M475.4 676.0L471.3 653.5M543.9 741.6L540.0 721.2M540.0 721.2L537.4 702.1M537.4 702.1L534.5 685.7M602.8 756.9L600.4 743.2M600.4 743.2L598.9 730.5M661.5 774.4L660.4 767.4M660.4 767.4L659.7 761.1" stroke="#54d860" stroke-width="1.9" />
<path d="M659.7 761.1L689.9 777.3M689.9 777.3L720.0 794.0M407.3 623.2L439.4 638.1M439.4 638.1L471.3 653.5M471.3 653.5L503.0 669.4M66.1 434.5L100.2 449.4M100.2 449.4L134.3 464.7M134.3 464.7L168.1 480.3M168.1 480.3L201.8 496.2M277.3 568.4L268.8 529.0M342.7 594.9L335.1 563.0M598.9 730.5L597.1 719.9" stroke="#54d854" stroke-width="1.9" />
<path d="M503.0 669.4L534.5 685.7M534.5 685.7L565.9 702.6M565.9 702.6L597.1 719.9M597.1 719.9L628.1 737.7M201.8 496.2L235.4 512.4M235.4 512.4L268.8 529.0M268.8 529.0L302.0 545.8M302.0 545.8L335.1 563.0M335.1 563.0L368.1 580.5M368.1 580.5L400.8 598.3M134.3 464.7L124.3 409.0M201.8 496.2L191.4 450.3M407.3 623.2L400.8 598.3M471.3 653.5L465.9 634.9M534.5 685.7L530.4 672.8M659.7 761.1L658.9 756.0" stroke="#3cd83c" stroke-width="1.9" />
<path d="M819.6 349.4L889.0 368.5M807.1 398.5L870.1 415.8M795.0 447.6L851.3 463.0M783.2 496.8L832.5 510.3M771.8 546.1L813.7 557.5M760.7 595.5L794.9 604.8M750.0 645.0L776.1 652.1M739.7 694.6L757.4 699.4M729.6 744.3L738.7 746.7" stroke="#cc9c24" stroke-width="1.9" />
<path d="M889.0 368.5L959.1 381.0M870.1 415.8L933.1 427.3M851.3 463.0L907.0 473.4M832.5 510.3L880.8 519.5M813.7 557.5L854.4 565.4M794.9 604.8L827.8 611.3M776.1 652.1L801.1 657.1M757.4 699.4L774.2 702.8M738.7 746.7L747.2 748.5" stroke="#cc8424" stroke-width="1.9" />
<path d="M959.1 381.0L1027.9 395.8M933.1 427.3L994.3 440.5M907.0 473.4L960.5 485.1" stroke="#d86c24" stroke-width="1.9" />
<path d="M1027.9 395.8L1093.6 418.8M994.3 440.5L1052.2 460.6M960.5 485.1L1010.8 502.4M926.6 529.5L969.3 544.1M892.5 573.9L927.9 585.9M858.3 618.1L886.3 627.5M824.0 662.3L844.8 669.2M789.4 706.3L803.2 710.8M754.8 750.2L761.6 752.4" stroke="#d83c30" stroke-width="1.9" />
<path d="M1156.8 635.6L1182.9 707.9M1108.7 654.4L1132.2 720.5M1060.5 672.9L1081.3 732.4M1012.3 691.2L1030.2 743.5M963.8 709.1L978.9 753.8M915.3 726.7L927.5 763.4M866.7 744.0L875.9 772.2M817.9 761.0L824.1 780.2M769.0 777.6L772.1 787.5" stroke="#d83c6c" stroke-width="1.9" />
<path d="M594.7 1174.1L522.1 1129.1M611.7 1133.0L545.2 1092.5M627.8 1091.7L567.9 1055.8M643.3 1050.0L590.4 1018.9M657.9 1008.1L612.7 981.8" stroke="#54c0d8" stroke-width="1.9" />
<path d="M880.8 519.5L926.6 529.5M854.4 565.4L892.5 573.9M827.8 611.3L858.3 618.1M801.1 657.1L824.0 662.3" stroke="#d86024" stroke-width="1.9" />
<path d="M972.3 1129.8L936.6 1112.8" stroke="#8460d8" stroke-width="1.9" />
<path d="M774.2 702.8L789.4 706.3M747.2 748.5L754.8 750.2" stroke="#d86030" stroke-width="1.9" />
</g>
<g id="frontin" clip-path="url(#cs)">
<path d="M57.0 368.0L90.7 388.4M90.7 388.4L124.3 409.0M124.3 409.0L157.9 429.6M157.9 429.6L191.4 450.3M191.4 450.3L224.9 471.1M224.9 471.1L258.3 492.0M258.3 492.0L291.6 513.0M291.6 513.0L324.9 534.1M324.9 534.1L358.1 555.2M358.1 555.2L391.3 576.5M391.3 576.5L424.4 597.8M424.4 597.8L457.5 619.3M457.5 619.3L490.5 640.8M490.5 640.8L523.5 662.4M523.5 662.4L556.4 684.1M556.4 684.1L589.2 705.9M589.2 705.9L622.0 727.8M622.0 727.8L654.7 749.8M654.7 749.8L687.4 771.8M687.4 771.8L720.0 794.0M200.0 417.5L229.8 440.6M229.8 440.6L259.7 463.6M259.7 463.6L289.8 486.5M289.8 486.5L319.9 509.2M319.9 509.2L350.1 531.9M350.1 531.9L380.4 554.4M380.4 554.4L410.8 576.8M410.8 576.8L441.3 599.1M441.3 599.1L471.9 621.2M471.9 621.2L502.6 643.2M502.6 643.2L533.4 665.1M533.4 665.1L564.2 686.9M564.2 686.9L595.2 708.6M595.2 708.6L626.3 730.1M626.3 730.1L657.4 751.5M657.4 751.5L688.7 772.8M688.7 772.8L720.0 794.0M631.3 729.8L660.6 751.5M660.6 751.5L690.2 772.8M690.2 772.8L720.0 794.0M628.1 737.7L658.9 756.0M658.9 756.0L689.5 774.7M689.5 774.7L720.0 794.0M400.8 598.3L433.4 616.5M433.4 616.5L465.9 634.9M465.9 634.9L498.2 653.7M498.2 653.7L530.4 672.8M530.4 672.8L562.4 692.2M562.4 692.2L594.2 711.9M594.2 711.9L625.9 732.0M625.9 732.0L657.4 752.3M657.4 752.3L688.8 773.0M688.8 773.0L720.0 794.0M124.3 409.0L170.2 394.2M191.4 450.3L229.8 440.6M258.3 492.0L289.8 486.5M268.8 529.0L258.3 492.0M324.9 534.1L350.1 531.9M335.1 563.0L324.9 534.1M391.3 576.5L410.8 576.8M400.8 598.3L391.3 576.5M457.5 619.3L471.9 621.2M465.9 634.9L457.5 619.3M523.5 662.4L533.4 665.1M533.4 665.1L544.5 663.6M530.4 672.8L523.5 662.4M589.2 705.9L595.2 708.6M595.2 708.6L602.2 708.0M597.1 719.9L594.2 711.9M594.2 711.9L589.2 705.9M654.7 749.8L657.4 751.5M657.4 751.5L660.6 751.5M658.9 756.0L657.4 752.3M657.4 752.3L654.7 749.8M111.0 347.3L140.6 370.8M140.6 370.8L170.2 394.2M170.2 394.2L200.0 417.5M544.5 663.6L573.2 685.9M573.2 685.9L602.2 708.0M602.2 708.0L631.3 729.8M410.8 576.8L431.8 572.0M471.9 621.2L487.7 618.2M165.0 326.7L190.7 352.2M190.7 352.2L216.6 377.6M216.6 377.6L242.8 402.7M242.8 402.7L269.2 427.6M357.6 463.2L381.6 488.5M381.6 488.5L406.0 513.5M406.0 513.5L430.6 538.3M430.6 538.3L455.5 562.9M455.5 562.9L480.7 587.1M480.7 587.1L506.2 611.1M506.2 611.1L531.9 634.9M531.9 634.9L558.0 658.4M558.0 658.4L584.3 681.6M584.3 681.6L610.9 704.6M610.9 704.6L637.7 727.4M216.6 377.6L264.1 359.4M269.2 427.6L310.3 411.8M322.5 476.6L357.6 463.2M376.7 524.8L406.0 513.5M431.8 572.0L455.5 562.9M558.0 658.4L573.4 651.2M610.9 704.6L621.1 699.7M664.9 749.8L670.0 747.3M269.2 427.6L295.7 452.2M295.7 452.2L322.5 476.6M322.5 476.6L349.5 500.8M349.5 500.8L376.7 524.8M376.7 524.8L404.2 548.5M404.2 548.5L431.8 572.0M431.8 572.0L459.7 595.2M459.7 595.2L487.7 618.2M487.7 618.2L516.0 641.0M516.0 641.0L544.5 663.6M637.7 727.4L664.9 749.8M664.9 749.8L692.3 772.0M692.3 772.0L720.0 794.0M170.2 394.2L216.6 377.6M229.8 440.6L269.2 427.6M289.8 486.5L322.5 476.6M350.1 531.9L376.7 524.8M487.7 618.2L506.2 611.1M544.5 663.6L558.0 658.4M602.2 708.0L610.9 704.6M660.6 751.5L664.9 749.8M219.0 306.0L241.4 332.8M241.4 332.8L264.1 359.4M264.1 359.4L287.0 385.8M287.0 385.8L310.3 411.8M310.3 411.8L333.8 437.6M333.8 437.6L357.6 463.2M481.7 551.3L504.2 576.6M504.2 576.6L527.0 601.7M527.0 601.7L550.1 626.6M550.1 626.6L573.4 651.2M573.4 651.2L597.1 675.6M597.1 675.6L621.1 699.7M621.1 699.7L645.4 723.6M645.4 723.6L670.0 747.3M670.0 747.3L694.8 770.8M694.8 770.8L720.0 794.0M310.3 411.8L352.9 394.5M357.6 463.2L394.6 447.7M406.0 513.5L437.6 500.0M455.5 562.9L481.7 551.3M506.2 611.1L527.0 601.7M670.0 747.3L675.5 744.5M273.0 285.3L292.5 313.0M292.5 313.0L312.4 340.4M312.4 340.4L332.5 367.6M332.5 367.6L352.9 394.5M352.9 394.5L373.6 421.2M373.6 421.2L394.6 447.7M394.6 447.7L416.0 474.0M416.0 474.0L437.6 500.0M437.6 500.0L459.5 525.7M459.5 525.7L481.7 551.3M611.0 668.8L632.2 694.2M632.2 694.2L653.7 719.5M653.7 719.5L675.5 744.5M675.5 744.5L697.6 769.3M697.6 769.3L720.0 794.0M264.1 359.4L312.4 340.4M437.6 500.0L470.5 485.5M481.7 551.3L509.2 538.8M527.0 601.7L549.1 591.4M573.4 651.2L590.1 643.2M621.1 699.7L632.2 694.2M327.0 264.7L343.9 292.9M343.9 292.9L361.1 321.0M361.1 321.0L378.6 348.9M378.6 348.9L396.4 376.6M554.0 553.9L571.3 581.2M571.3 581.2L589.0 608.3M589.0 608.3L606.9 635.3M606.9 635.3L625.0 662.1M625.0 662.1L643.5 688.8M643.5 688.8L662.2 715.3M662.2 715.3L681.2 741.7M681.2 741.7L700.5 767.9M700.5 767.9L720.0 794.0M361.1 321.0L410.0 301.7M396.4 376.6L440.1 358.8M432.9 431.5L471.3 415.3M470.5 485.5L503.5 471.2M509.2 538.8L536.9 526.5M549.1 591.4L571.3 581.2M396.4 376.6L414.5 404.1M414.5 404.1L432.9 431.5M432.9 431.5L451.5 458.6M451.5 458.6L470.5 485.5M470.5 485.5L489.7 512.3M489.7 512.3L509.2 538.8M509.2 538.8L529.0 565.2M529.0 565.2L549.1 591.4M549.1 591.4L569.4 617.4M569.4 617.4L590.1 643.2M590.1 643.2L611.0 668.8M312.4 340.4L361.1 321.0M352.9 394.5L396.4 376.6M394.6 447.7L432.9 431.5M590.1 643.2L606.9 635.3M632.2 694.2L643.5 688.8M675.5 744.5L681.2 741.7M381.0 244.0L395.4 272.9M395.4 272.9L410.0 301.7M410.0 301.7L424.9 330.3M424.9 330.3L440.1 358.8M440.1 358.8L455.5 387.1M455.5 387.1L471.3 415.3M471.3 415.3L487.3 443.3M487.3 443.3L503.5 471.2M503.5 471.2L520.1 498.9M520.1 498.9L536.9 526.5M536.9 526.5L554.0 553.9M686.6 739.1L703.2 766.6M703.2 766.6L720.0 794.0M503.5 471.2L535.9 457.4M536.9 526.5L563.8 514.7M571.3 581.2L592.9 571.5M606.9 635.3L623.0 627.9M643.5 688.8L654.3 683.7M681.2 741.7L686.6 739.1M435.0 223.3L446.7 253.0M446.7 253.0L458.6 282.6M458.6 282.6L470.8 312.0M470.8 312.0L483.3 341.3M483.3 341.3L496.0 370.5M613.3 562.2L625.6 591.6M625.6 591.6L638.2 620.8M638.2 620.8L651.1 649.9M651.1 649.9L664.3 678.9M664.3 678.9L677.8 707.8M677.8 707.8L691.6 736.7M691.6 736.7L705.6 765.4M705.6 765.4L720.0 794.0M483.3 341.3L525.7 324.1M509.0 399.6L545.8 384.2M535.9 457.4L567.1 444.0M563.8 514.7L589.6 503.3M592.9 571.5L613.3 562.2M623.0 627.9L638.2 620.8M496.0 370.5L509.0 399.6M509.0 399.6L522.3 428.6M522.3 428.6L535.9 457.4M535.9 457.4L549.7 486.1M549.7 486.1L563.8 514.7M563.8 514.7L578.2 543.2M578.2 543.2L592.9 571.5M592.9 571.5L607.8 599.8M607.8 599.8L623.0 627.9M623.0 627.9L638.5 655.9M638.5 655.9L654.3 683.7M654.3 683.7L670.3 711.5M670.3 711.5L686.6 739.1M410.0 301.7L458.6 282.6M440.1 358.8L483.3 341.3M471.3 415.3L509.0 399.6M654.3 683.7L664.3 678.9M686.6 739.1L691.6 736.7M489.0 202.7L497.7 233.2M497.7 233.2L506.8 263.6M506.8 263.6L516.1 293.9M516.1 293.9L525.7 324.1M525.7 324.1L535.6 354.2M535.6 354.2L545.8 384.2M545.8 384.2L556.3 414.2M556.3 414.2L567.1 444.0M567.1 444.0L578.2 473.7M578.2 473.7L589.6 503.3M589.6 503.3L601.3 532.8M601.3 532.8L613.3 562.2M684.9 704.2L696.3 734.2M696.3 734.2L708.0 764.1M708.0 764.1L720.0 794.0M458.6 282.6L506.8 263.6M589.6 503.3L614.7 491.9M613.3 562.2L633.1 552.9M638.2 620.8L652.8 613.7M664.3 678.9L673.9 674.1M691.6 736.7L696.3 734.2M543.0 182.0L548.7 213.3M548.7 213.3L554.7 244.6M554.7 244.6L561.0 275.8M561.0 275.8L567.7 306.9M567.7 306.9L574.7 337.9M574.7 337.9L582.0 368.9M618.6 273.7L621.5 303.0M621.5 303.0L624.7 332.2M624.7 332.2L628.2 361.4M628.2 361.4L632.1 390.5M632.1 390.5L636.2 419.6M636.2 419.6L640.7 448.6M640.7 448.6L645.5 477.6M645.5 477.6L650.7 506.6M650.7 506.6L656.1 535.5M656.1 535.5L661.9 564.4M661.9 564.4L668.1 593.3M668.1 593.3L674.5 622.1M674.5 622.1L681.3 650.8M681.3 650.8L688.4 679.5M688.4 679.5L695.8 708.2M695.8 708.2L703.5 736.9M703.5 736.9L711.6 765.4M711.6 765.4L720.0 794.0M554.7 244.6L618.6 273.7M567.7 306.9L624.7 332.2M582.0 368.9L632.1 390.5M597.7 430.5L640.7 448.6M614.7 491.9L650.7 506.6M633.1 552.9L661.9 564.4M652.8 613.7L674.5 622.1M674.5 622.1L698.3 629.7M688.4 679.5L704.4 684.5M703.5 736.9L711.7 739.3M582.0 368.9L589.7 399.7M589.7 399.7L597.7 430.5M597.7 430.5L606.0 461.2M606.0 461.2L614.7 491.9M614.7 491.9L623.7 522.4M623.7 522.4L633.1 552.9M633.1 552.9L642.8 583.3M642.8 583.3L652.8 613.7M652.8 613.7L663.2 643.9M663.2 643.9L673.9 674.1M673.9 674.1L684.9 704.2M506.8 263.6L554.7 244.6M525.7 324.1L567.7 306.9M545.8 384.2L582.0 368.9M567.1 444.0L597.7 430.5M673.9 674.1L688.4 679.5M696.3 734.2L703.5 736.9M613.9 215.1L616.1 244.4M616.1 244.4L618.6 273.7M685.8 245.9L684.9 273.4M684.9 273.4L684.3 300.8M684.3 300.8L684.0 328.2M684.0 328.2L683.9 355.6M683.9 355.6L684.1 383.1M684.1 383.1L684.6 410.5M684.6 410.5L685.3 437.9M685.3 437.9L686.4 465.3M686.4 465.3L687.7 492.7M687.7 492.7L689.2 520.1M689.2 520.1L691.1 547.5M691.1 547.5L693.2 574.9M693.2 574.9L695.6 602.3M695.6 602.3L698.3 629.7M698.3 629.7L701.2 657.1M701.2 657.1L704.4 684.5M704.4 684.5L707.9 711.9M707.9 711.9L711.7 739.3M711.7 739.3L715.7 766.6M715.7 766.6L720.0 794.0M618.6 273.7L684.3 300.8M624.7 332.2L683.9 355.6M632.1 390.5L684.6 410.5M640.7 448.6L686.4 465.3M650.7 506.6L689.2 520.1M661.9 564.4L693.2 574.9M698.3 629.7L723.8 637.2M704.4 684.5L721.8 689.4M711.7 739.3L720.5 741.7M758.7 274.3L755.0 300.1M755.0 300.1L751.5 325.9M751.5 325.9L748.1 351.7M748.1 351.7L745.0 377.6M745.0 377.6L742.0 403.4M742.0 403.4L739.2 429.3M739.2 429.3L736.6 455.3M736.6 455.3L734.2 481.2M734.2 481.2L732.0 507.1M732.0 507.1L730.0 533.1M730.0 533.1L728.2 559.1M728.2 559.1L726.5 585.1M726.5 585.1L725.0 611.2M725.0 611.2L723.8 637.2M723.8 637.2L722.7 663.3M722.7 663.3L721.8 689.4M721.8 689.4L721.0 715.5M721.0 715.5L720.5 741.7M720.5 741.7L720.2 767.8M720.2 767.8L720.0 794.0M684.3 300.8L751.5 325.9M683.9 355.6L745.0 377.6M684.6 410.5L739.2 429.3M686.4 465.3L734.2 481.2M689.2 520.1L730.0 533.1M693.2 574.9L726.5 585.1M832.4 300.5L826.0 325.0M826.0 325.0L819.6 349.4M819.6 349.4L813.3 374.0M813.3 374.0L807.1 398.5M807.1 398.5L801.0 423.0M801.0 423.0L795.0 447.6M795.0 447.6L789.0 472.2M789.0 472.2L783.2 496.8M783.2 496.8L777.5 521.5M777.5 521.5L771.8 546.1M771.8 546.1L766.2 570.8M766.2 570.8L760.7 595.5M760.7 595.5L755.3 620.3M755.3 620.3L750.0 645.0M750.0 645.0L744.8 669.8M744.8 669.8L739.7 694.6M739.7 694.6L734.6 719.4M734.6 719.4L729.6 744.3M729.6 744.3L724.8 769.1M724.8 769.1L720.0 794.0M751.5 325.9L819.6 349.4M745.0 377.6L807.1 398.5M739.2 429.3L795.0 447.6M734.2 481.2L783.2 496.8M730.0 533.1L771.8 546.1M726.5 585.1L760.7 595.5M723.8 637.2L750.0 645.0M721.8 689.4L739.7 694.6M720.5 741.7L729.6 744.3M907.8 321.3L898.4 344.9M898.4 344.9L889.0 368.5M889.0 368.5L879.5 392.1M879.5 392.1L870.1 415.8M870.1 415.8L860.7 439.4M860.7 439.4L851.3 463.0M851.3 463.0L841.9 486.6M841.9 486.6L832.5 510.3M832.5 510.3L823.1 533.9M823.1 533.9L813.7 557.5M813.7 557.5L804.3 581.2M804.3 581.2L794.9 604.8M794.9 604.8L785.5 628.5M785.5 628.5L776.1 652.1M776.1 652.1L766.8 675.7M766.8 675.7L757.4 699.4M757.4 699.4L748.0 723.0M748.0 723.0L738.7 746.7M738.7 746.7L729.3 770.3M729.3 770.3L720.0 794.0M984.9 334.7L972.0 357.9M972.0 357.9L959.1 381.0M959.1 381.0L946.1 404.2M946.1 404.2L933.1 427.3M933.1 427.3L920.1 450.3M920.1 450.3L907.0 473.4M907.0 473.4L893.9 496.5M893.9 496.5L880.8 519.5M880.8 519.5L867.6 542.5M867.6 542.5L854.4 565.4M854.4 565.4L841.1 588.4M841.1 588.4L827.8 611.3M827.8 611.3L814.5 634.2M814.5 634.2L801.1 657.1M801.1 657.1L787.7 680.0M787.7 680.0L774.2 702.8M774.2 702.8L760.7 725.7M760.7 725.7L747.2 748.5M747.2 748.5L733.6 771.2M733.6 771.2L720.0 794.0M1061.4 351.0L1044.7 373.4M1044.7 373.4L1027.9 395.8M1027.9 395.8L1011.1 418.2M1011.1 418.2L994.3 440.5M994.3 440.5L977.4 462.8M977.4 462.8L960.5 485.1M960.5 485.1L943.6 507.3M943.6 507.3L926.6 529.5M926.6 529.5L909.6 551.7M909.6 551.7L892.5 573.9M892.5 573.9L875.4 596.0M875.4 596.0L858.3 618.1M858.3 618.1L841.2 640.2M841.2 640.2L824.0 662.3M824.0 662.3L806.7 684.3M806.7 684.3L789.4 706.3M789.4 706.3L772.1 728.3M772.1 728.3L754.8 750.2M754.8 750.2L737.4 772.1M737.4 772.1L720.0 794.0M1135.0 377.0L1114.3 397.9M1114.3 397.9L1093.6 418.8M1093.6 418.8L1072.9 439.7M1072.9 439.7L1052.2 460.6M1052.2 460.6L1031.5 481.5M1031.5 481.5L1010.8 502.4M1010.8 502.4L990.1 523.3M990.1 523.3L969.3 544.1M969.3 544.1L948.6 565.0M948.6 565.0L927.9 585.9M927.9 585.9L907.1 606.7M907.1 606.7L886.3 627.5M886.3 627.5L865.6 648.4M865.6 648.4L844.8 669.2M844.8 669.2L824.0 690.0M824.0 690.0L803.2 710.8M803.2 710.8L782.4 731.6M782.4 731.6L761.6 752.4M761.6 752.4L740.8 773.2M740.8 773.2L720.0 794.0M1093.6 418.8L1112.2 490.9M1052.2 460.6L1068.5 524.3M1010.8 502.4L1024.8 557.9M969.3 544.1L981.1 591.4M927.9 585.9L937.5 625.0M886.3 627.5L893.9 658.7M844.8 669.2L850.4 692.5M803.2 710.8L806.9 726.3M761.6 752.4L763.4 760.1M1156.0 457.5L1134.1 474.2M1134.1 474.2L1112.2 490.9M1112.2 490.9L1090.3 507.6M1090.3 507.6L1068.5 524.3M1068.5 524.3L1046.6 541.1M1046.6 541.1L1024.8 557.9M1024.8 557.9L1002.9 574.6M1002.9 574.6L981.1 591.4M981.1 591.4L959.3 608.2M959.3 608.2L937.5 625.0M937.5 625.0L915.7 641.9M915.7 641.9L893.9 658.7M893.9 658.7L872.1 675.6M872.1 675.6L850.4 692.5M850.4 692.5L828.6 709.4M828.6 709.4L806.9 726.3M806.9 726.3L785.1 743.2M785.1 743.2L763.4 760.1M763.4 760.1L741.7 777.0M741.7 777.0L720.0 794.0M1177.3 537.9L1154.5 550.7M1154.5 550.7L1131.6 563.6M1131.6 563.6L1108.8 576.4M1108.8 576.4L1085.9 589.3M1085.9 589.3L1063.1 602.1M1063.1 602.1L1040.2 615.0M1040.2 615.0L1017.4 627.8M1017.4 627.8L994.5 640.6M994.5 640.6L971.7 653.4M971.7 653.4L948.8 666.2M948.8 666.2L925.9 679.0M925.9 679.0L903.1 691.8M903.1 691.8L880.2 704.6M880.2 704.6L857.3 717.4M857.3 717.4L834.4 730.2M834.4 730.2L811.6 743.0M811.6 743.0L788.7 755.7M788.7 755.7L765.8 768.5M765.8 768.5L742.9 781.2M742.9 781.2L720.0 794.0M1112.2 490.9L1131.6 563.6M1131.6 563.6L1156.8 635.6M1068.5 524.3L1085.9 589.3M1024.8 557.9L1040.2 615.0M981.1 591.4L994.5 640.6M937.5 625.0L948.8 666.2M893.9 658.7L903.1 691.8M850.4 692.5L857.3 717.4M806.9 726.3L811.6 743.0M763.4 760.1L765.8 768.5M1204.7 616.4L1180.8 626.0M1180.8 626.0L1156.8 635.6M1156.8 635.6L1132.8 645.0M1132.8 645.0L1108.7 654.4M1108.7 654.4L1084.6 663.7M1084.6 663.7L1060.5 672.9M1060.5 672.9L1036.4 682.1M1036.4 682.1L1012.3 691.2M1012.3 691.2L988.1 700.2M988.1 700.2L963.8 709.1M963.8 709.1L939.6 717.9M939.6 717.9L915.3 726.7M915.3 726.7L891.0 735.4M891.0 735.4L866.7 744.0M866.7 744.0L842.3 752.5M842.3 752.5L817.9 761.0M817.9 761.0L793.5 769.3M793.5 769.3L769.0 777.6M769.0 777.6L744.5 785.9M744.5 785.9L720.0 794.0M1085.9 589.3L1108.7 654.4M1040.2 615.0L1060.5 672.9M994.5 640.6L1012.3 691.2M948.8 666.2L963.8 709.1M903.1 691.8L915.3 726.7M857.3 717.4L866.7 744.0M811.6 743.0L817.9 761.0M765.8 768.5L769.0 777.6M1233.4 694.5L1208.2 701.3M1208.2 701.3L1182.9 707.9M1182.9 707.9L1157.5 714.3M1157.5 714.3L1132.2 720.5M1132.2 720.5L1106.7 726.6M1106.7 726.6L1081.3 732.4M1081.3 732.4L1055.7 738.0M1055.7 738.0L1030.2 743.5M1030.2 743.5L1004.6 748.8M1004.6 748.8L978.9 753.8M978.9 753.8L953.2 758.7M953.2 758.7L927.5 763.4M927.5 763.4L901.7 767.9M901.7 767.9L875.9 772.2M875.9 772.2L850.0 776.3M850.0 776.3L824.1 780.2M824.1 780.2L798.1 784.0M798.1 784.0L772.1 787.5M772.1 787.5L746.1 790.8M746.1 790.8L720.0 794.0M1182.9 707.9L1210.0 780.1M1263.8 771.9L1236.9 776.2M1236.9 776.2L1210.0 780.1M1210.0 780.1L1183.1 783.7M1132.2 720.5L1156.1 786.9M1081.3 732.4L1102.1 792.4M1030.2 743.5L1047.9 796.6M978.9 753.8L993.6 799.5M927.5 763.4L939.1 801.0M875.9 772.2L884.5 801.3M824.1 780.2L829.8 800.2M772.1 787.5L775.0 797.7M1183.1 783.7L1156.1 786.9M1156.1 786.9L1129.1 789.8M1129.1 789.8L1102.1 792.4M1102.1 792.4L1075.0 794.7M1075.0 794.7L1047.9 796.6M1047.9 796.6L1020.7 798.2M1020.7 798.2L993.6 799.5M993.6 799.5L966.4 800.4M966.4 800.4L939.1 801.0M939.1 801.0L911.9 801.3M911.9 801.3L884.5 801.3M884.5 801.3L857.2 800.9M857.2 800.9L829.8 800.2M829.8 800.2L802.4 799.1M1210.0 780.1L1238.4 851.6M1156.1 786.9L1180.7 852.7M802.4 799.1L775.0 797.7M775.0 797.7L747.5 796.0M747.5 796.0L720.0 794.0M1296.1 848.6L1267.3 850.3M1267.3 850.3L1238.4 851.6M1238.4 851.6L1209.6 852.4M1209.6 852.4L1180.7 852.7M1180.7 852.7L1151.9 852.6M1151.9 852.6L1123.0 852.0M1102.1 792.4L1123.0 852.0M1047.9 796.6L1065.4 849.4M993.6 799.5L1007.8 844.8M939.1 801.0L950.2 838.4M884.5 801.3L892.6 830.2M1123.0 852.0L1094.2 850.9M1094.2 850.9L1065.4 849.4M1065.4 849.4L1036.6 847.3M1036.6 847.3L1007.8 844.8M1238.4 851.6L1267.6 922.2M829.8 800.2L835.0 820.0M775.0 797.7L777.5 807.9M1007.8 844.8L979.0 841.9M979.0 841.9L950.2 838.4M950.2 838.4L921.4 834.5M921.4 834.5L892.6 830.2M892.6 830.2L863.8 825.3M863.8 825.3L835.0 820.0M835.0 820.0L806.3 814.2M806.3 814.2L777.5 807.9M777.5 807.9L748.7 801.2M748.7 801.2L720.0 794.0M1329.8 924.7L1298.6 923.7M1298.6 923.7L1267.6 922.2M1267.6 922.2L1236.6 920.1M1236.6 920.1L1205.6 917.4M1205.6 917.4L1174.8 914.1M1180.7 852.7L1205.6 917.4M1123.0 852.0L1144.0 910.2M1065.4 849.4L1082.6 900.7M1007.8 844.8L1021.5 888.8M1174.8 914.1L1144.0 910.2M1144.0 910.2L1113.2 905.7M1113.2 905.7L1082.6 900.7M1082.6 900.7L1052.0 895.0M1052.0 895.0L1021.5 888.8M1021.5 888.8L991.0 882.0M991.0 882.0L960.6 874.5M960.6 874.5L930.3 866.5M930.3 866.5L900.1 857.9M900.1 857.9L869.9 848.8M1364.7 1000.1L1331.2 996.1M1331.2 996.1L1297.7 991.4M1297.7 991.4L1264.5 986.0M1264.5 986.0L1231.3 980.0M1267.6 922.2L1297.7 991.4M1205.6 917.4L1231.3 980.0M1144.0 910.2L1165.4 966.0M1082.6 900.7L1100.1 949.3M950.2 838.4L960.6 874.5M892.6 830.2L900.1 857.9M835.0 820.0L839.8 839.0M777.5 807.9L779.7 817.7M869.9 848.8L839.8 839.0M839.8 839.0L809.7 828.6M809.7 828.6L779.7 817.7M779.7 817.7L749.8 806.1M749.8 806.1L720.0 794.0M1231.3 980.0L1198.3 973.3M1198.3 973.3L1165.4 966.0M1165.4 966.0L1132.7 958.0M1132.7 958.0L1100.1 949.3M1100.1 949.3L1067.7 940.0M1067.7 940.0L1035.4 930.0M1035.4 930.0L1003.2 919.4M1003.2 919.4L971.2 908.1M971.2 908.1L939.3 896.2M1400.7 1075.2L1364.7 1067.4M1364.7 1067.4L1328.9 1059.0M1328.9 1059.0L1293.4 1050.0M1293.4 1050.0L1258.0 1040.2M1258.0 1040.2L1222.9 1029.8M1297.7 991.4L1328.9 1059.0M1231.3 980.0L1258.0 1040.2M1165.4 966.0L1187.9 1018.8M1100.1 949.3L1118.6 994.6M1021.5 888.8L1035.4 930.0M960.6 874.5L971.2 908.1M900.1 857.9L907.5 883.5M839.8 839.0L844.5 856.3M779.7 817.7L781.9 826.5M939.3 896.2L907.5 883.5M907.5 883.5L875.9 870.3M875.9 870.3L844.5 856.3M844.5 856.3L813.1 841.7M813.1 841.7L781.9 826.5M1222.9 1029.8L1187.9 1018.8M1187.9 1018.8L1153.2 1007.0M1153.2 1007.0L1118.6 994.6M1118.6 994.6L1084.3 981.6M1437.0 1150.0L1398.9 1138.0M1398.9 1138.0L1361.0 1125.3M1328.9 1059.0L1361.0 1125.3M1258.0 1040.2L1285.9 1098.2M1035.4 930.0L1050.1 967.8M971.2 908.1L982.5 938.4M781.9 826.5L750.9 810.6M750.9 810.6L720.0 794.0M1084.3 981.6L1050.1 967.8M1050.1 967.8L1016.2 953.5M1016.2 953.5L982.5 938.4M982.5 938.4L949.0 922.7M949.0 922.7L915.6 906.3M915.6 906.3L882.5 889.2M882.5 889.2L849.6 871.5M849.6 871.5L816.9 853.1M816.9 853.1L784.4 834.1M784.4 834.1L752.1 814.4M752.1 814.4L720.0 794.0M1361.0 1125.3L1323.3 1112.1M1323.3 1112.1L1285.9 1098.2M1285.9 1098.2L1248.7 1083.7M1248.7 1083.7L1211.8 1068.7M1211.8 1068.7L1175.1 1053.0M1175.1 1053.0L1138.6 1036.7M1138.6 1036.7L1102.4 1019.8M1102.4 1019.8L1066.4 1002.3M1066.4 1002.3L1030.7 984.2M1030.7 984.2L995.2 965.5M995.2 965.5L960.0 946.2M960.0 946.2L925.0 926.3M925.0 926.3L890.2 905.7M890.2 905.7L855.7 884.6M855.7 884.6L821.4 862.9M1409.6 1204.3L1372.8 1188.4M1372.8 1188.4L1336.2 1172.0M1336.2 1172.0L1299.9 1155.1M1299.9 1155.1L1263.8 1137.8M1263.8 1137.8L1227.9 1120.0M1227.9 1120.0L1192.4 1101.6M1192.4 1101.6L1157.0 1082.8M1157.0 1082.8L1121.9 1063.5M1361.0 1125.3L1336.2 1172.0M1336.2 1172.0L1311.6 1219.0M1285.9 1098.2L1263.8 1137.8M1187.9 1018.8L1211.8 1068.7M1211.8 1068.7L1192.4 1101.6M1118.6 994.6L1138.6 1036.7M1138.6 1036.7L1121.9 1063.5M1050.1 967.8L1066.4 1002.3M1066.4 1002.3L1052.5 1023.5M982.5 938.4L995.2 965.5M995.2 965.5L984.0 981.5M907.5 883.5L915.6 906.3M915.6 906.3L925.0 926.3M844.5 856.3L849.6 871.5M849.6 871.5L855.7 884.6M781.9 826.5L784.4 834.1M784.4 834.1L787.4 840.5M821.4 862.9L787.4 840.5M787.4 840.5L753.6 817.6M753.6 817.6L720.0 794.0M1121.9 1063.5L1087.1 1043.7M1087.1 1043.7L1052.5 1023.5M1052.5 1023.5L1018.1 1002.7M1018.1 1002.7L984.0 981.5M984.0 981.5L950.1 959.7M950.1 959.7L916.5 937.5M916.5 937.5L883.2 914.8M883.2 914.8L850.0 891.6M850.0 891.6L817.2 867.9M817.2 867.9L784.5 843.8M784.5 843.8L752.1 819.1M752.1 819.1L720.0 794.0M1382.1 1258.6L1346.8 1239.0M1346.8 1239.0L1311.6 1219.0M1311.6 1219.0L1276.7 1198.7M1276.7 1198.7L1242.1 1178.0M1242.1 1178.0L1207.7 1156.8M1207.7 1156.8L1173.5 1135.3M1173.5 1135.3L1139.5 1113.5M1139.5 1113.5L1105.8 1091.2M1105.8 1091.2L1072.4 1068.5M1072.4 1068.5L1039.1 1045.5M1039.1 1045.5L1006.2 1022.1M1006.2 1022.1L973.4 998.3M973.4 998.3L940.9 974.1M940.9 974.1L908.6 949.5M908.6 949.5L876.6 924.5M876.6 924.5L844.8 899.2M844.8 899.2L813.2 873.5M813.2 873.5L781.9 847.4M1354.7 1312.9L1320.9 1289.8M1320.9 1289.8L1287.2 1266.4M1287.2 1266.4L1253.8 1242.7M1253.8 1242.7L1220.6 1218.7M1220.6 1218.7L1187.7 1194.4M1311.6 1219.0L1287.2 1266.4M1263.8 1137.8L1242.1 1178.0M1242.1 1178.0L1220.6 1218.7M1192.4 1101.6L1173.5 1135.3M1173.5 1135.3L1154.9 1169.8M1121.9 1063.5L1105.8 1091.2M1105.8 1091.2L1090.1 1119.7M1052.5 1023.5L1039.1 1045.5M1039.1 1045.5L1026.2 1068.4M984.0 981.5L973.4 998.3M973.4 998.3L963.2 1015.9M925.0 926.3L916.5 937.5M916.5 937.5L908.6 949.5M855.7 884.6L850.0 891.6M850.0 891.6L844.8 899.2M787.4 840.5L784.5 843.8M784.5 843.8L781.9 847.4M781.9 847.4L750.8 820.9M750.8 820.9L720.0 794.0M1187.7 1194.4L1154.9 1169.8M1154.9 1169.8L1122.4 1144.9M1122.4 1144.9L1090.1 1119.7M1090.1 1119.7L1058.0 1094.2M1058.0 1094.2L1026.2 1068.4M1026.2 1068.4L994.6 1042.3M994.6 1042.3L963.2 1015.9M963.2 1015.9L932.0 989.3M932.0 989.3L901.0 962.3M901.0 962.3L870.3 935.0M870.3 935.0L839.8 907.4M839.8 907.4L809.5 879.5M809.5 879.5L779.5 851.3M779.5 851.3L749.6 822.8M749.6 822.8L720.0 794.0M1327.3 1367.1L1295.1 1340.5M1295.1 1340.5L1263.2 1313.6M1263.2 1313.6L1231.4 1286.6M1231.4 1286.6L1199.9 1259.3M1199.9 1259.3L1168.5 1231.8M1287.2 1266.4L1263.2 1313.6M1220.6 1218.7L1199.9 1259.3M1154.9 1169.8L1137.3 1204.1M1090.1 1119.7L1075.4 1148.1M1026.2 1068.4L1014.3 1091.2M963.2 1015.9L953.9 1033.4M908.6 949.5L901.0 962.3M844.8 899.2L839.8 907.4M781.9 847.4L779.5 851.3M1168.5 1231.8L1137.3 1204.1M1137.3 1204.1L1106.2 1176.2M1106.2 1176.2L1075.4 1148.1M1075.4 1148.1L1044.8 1119.7M1044.8 1119.7L1014.3 1091.2M1014.3 1091.2L984.0 1062.4M984.0 1062.4L953.9 1033.4M953.9 1033.4L924.1 1004.2M924.1 1004.2L894.3 974.8M894.3 974.8L864.8 945.2M864.8 945.2L835.5 915.4M835.5 915.4L806.3 885.4M806.3 885.4L777.4 855.1M777.4 855.1L748.6 824.7M748.6 824.7L720.0 794.0M1299.9 1421.4L1270.0 1390.9M1270.0 1390.9L1240.2 1360.3M1240.2 1360.3L1210.5 1329.6M1210.5 1329.6L1180.9 1298.8M1263.2 1313.6L1240.2 1360.3M1199.9 1259.3L1180.9 1298.8M1137.3 1204.1L1122.0 1237.0M1075.4 1148.1L1063.4 1174.8M1014.3 1091.2L1005.2 1112.2M953.9 1033.4L947.4 1049.3M901.0 962.3L894.3 974.8M894.3 974.8L890.0 986.0M839.8 907.4L835.5 915.4M835.5 915.4L833.0 922.4M779.5 851.3L777.4 855.1M1180.9 1298.8L1151.4 1267.9M1151.4 1267.9L1122.0 1237.0M1122.0 1237.0L1092.6 1205.9M1092.6 1205.9L1063.4 1174.8M1063.4 1174.8L1034.3 1143.5M1034.3 1143.5L1005.2 1112.2M1005.2 1112.2L976.3 1080.8M976.3 1080.8L947.4 1049.3M947.4 1049.3L918.7 1017.7M918.7 1017.7L890.0 986.0M890.0 986.0L861.4 954.2M861.4 954.2L833.0 922.4M833.0 922.4L804.6 890.4M804.6 890.4L776.3 858.4M776.3 858.4L748.1 826.2M748.1 826.2L720.0 794.0M1272.4 1475.7L1245.8 1440.9M1245.8 1440.9L1219.0 1406.1M1219.0 1406.1L1192.1 1371.4M1192.1 1371.4L1165.2 1336.8M1165.2 1336.8L1138.1 1302.3M1138.1 1302.3L1110.9 1267.9M1110.9 1267.9L1083.7 1233.5M1083.7 1233.5L1056.3 1199.2M1056.3 1199.2L1028.8 1165.0M1028.8 1165.0L1001.3 1130.9M1001.3 1130.9L973.6 1096.9M973.6 1096.9L945.8 1062.9M945.8 1062.9L917.9 1029.0M917.9 1029.0L890.0 995.2M890.0 995.2L861.9 961.5M861.9 961.5L833.7 927.8M833.7 927.8L805.4 894.2M805.4 894.2L777.1 860.7M777.1 860.7L748.6 827.3M748.6 827.3L720.0 794.0M976.5 1112.3L949.6 1075.9M949.6 1075.9L922.3 1039.8M922.3 1039.8L894.7 1003.9M894.7 1003.9L866.6 968.3M866.6 968.3L838.1 932.9M838.1 932.9L809.2 897.8M809.2 897.8L779.9 862.9M779.9 862.9L750.1 828.3M750.1 828.3L720.0 794.0M879.4 991.5L854.5 957.7M854.5 957.7L828.9 924.3M828.9 924.3L802.7 891.2M802.7 891.2L775.8 858.5M775.8 858.5L748.2 826.1M748.2 826.1L720.0 794.0M769.8 855.3L745.3 824.5M745.3 824.5L720.0 794.0M1240.2 1360.3L1219.0 1406.1M1180.9 1298.8L1165.2 1336.8M1122.0 1237.0L1110.9 1267.9M1063.4 1174.8L1056.3 1199.2M1005.2 1112.2L1001.3 1130.9M1001.3 1130.9L1002.9 1149.0M947.4 1049.3L945.8 1062.9M945.8 1062.9L949.6 1075.9M890.0 986.0L890.0 995.2M890.0 995.2L894.7 1003.9M894.7 1003.9L879.4 991.5M833.0 922.4L833.7 927.8M833.7 927.8L838.1 932.9M838.1 932.9L828.9 924.3M777.4 855.1L776.3 858.4M776.3 858.4L777.1 860.7M777.1 860.7L779.9 862.9M779.9 862.9L775.8 858.5M775.8 858.5L769.8 855.3M1245.0 1530.0L1222.6 1490.7M1222.6 1490.7L1199.9 1451.7M1199.9 1451.7L1176.7 1413.0M1035.0 1237.1L1014.8 1201.0M1014.8 1201.0L993.9 1165.2M899.7 1046.6L880.1 1013.9M741.2 823.4L720.0 794.0M1104.7 1298.3L1054.5 1273.5M816.3 917.8L799.7 913.0M1176.7 1413.0L1153.1 1374.5M1153.1 1374.5L1129.1 1336.3M1129.1 1336.3L1104.7 1298.3M1104.7 1298.3L1079.8 1260.6M1079.8 1260.6L1054.6 1223.1M1054.6 1223.1L1029.0 1185.9M1029.0 1185.9L1002.9 1149.0M1002.9 1149.0L976.5 1112.3M993.9 1165.2L972.3 1129.8M972.3 1129.8L950.1 1094.7M950.1 1094.7L927.2 1060.0M927.2 1060.0L903.6 1025.5M903.6 1025.5L879.4 991.5M880.1 1013.9L859.6 981.6M859.6 981.6L838.4 949.5M838.4 949.5L816.3 917.8M816.3 917.8L793.4 886.4M793.4 886.4L769.8 855.3M1219.0 1406.1L1199.9 1451.7M1165.2 1336.8L1153.1 1374.5M1110.9 1267.9L1104.7 1298.3M1056.3 1199.2L1054.6 1223.1M1054.6 1223.1L1014.8 1201.0M1002.9 1149.0L972.3 1129.8M949.6 1075.9L927.2 1060.0M927.2 1060.0L899.7 1046.6M879.4 991.5L859.6 981.6M828.9 924.3L816.3 917.8M769.8 855.3L761.5 853.0M1157.9 1499.2L1142.3 1460.7M1142.3 1460.7L1126.1 1422.6M1126.1 1422.6L1109.2 1384.8M1109.2 1384.8L1091.6 1347.4M1027.9 1319.2L1014.7 1284.0M1014.7 1284.0L1000.7 1249.1M1000.7 1249.1L985.9 1214.6M985.9 1214.6L970.3 1180.4M970.3 1180.4L953.8 1146.4M894.8 1098.4L881.0 1066.9M881.0 1066.9L866.4 1035.7M866.4 1035.7L851.0 1004.7M851.0 1004.7L834.7 973.9M834.7 973.9L817.6 943.3M817.6 943.3L799.7 913.0M1126.1 1422.6L1051.9 1390.4M1091.6 1347.4L1027.9 1319.2M1054.5 1273.5L1000.7 1249.1M970.3 1180.4L920.0 1162.1M936.6 1112.8L894.8 1098.4M899.7 1046.6L866.4 1035.7M799.7 913.0L780.5 908.7M761.5 853.0L751.7 851.1M1091.6 1347.4L1073.4 1310.3M953.8 1146.4L936.6 1112.8M936.6 1112.8L918.6 1079.6M799.7 913.0L781.0 882.9M1199.9 1451.7L1126.1 1422.6M1014.8 1201.0L970.3 1180.4M1073.4 1310.3L1054.5 1273.5M1054.5 1273.5L1035.0 1237.1M918.6 1079.6L899.7 1046.6M781.0 882.9L761.5 853.0M761.5 853.0L741.2 823.4M1153.1 1374.5L1091.6 1347.4M859.6 981.6L834.7 973.9M1072.7 1463.0L1062.7 1426.6M1062.7 1426.6L1051.9 1390.4M1051.9 1390.4L1040.3 1354.6M1040.3 1354.6L1027.9 1319.2M968.6 1325.3L960.5 1292.2M960.5 1292.2L951.6 1259.3M951.6 1259.3L941.9 1226.7M941.9 1226.7L931.3 1194.3M931.3 1194.3L920.0 1162.1M920.0 1162.1L907.8 1130.1M907.8 1130.1L894.8 1098.4M829.1 1025.6L818.0 996.2M818.0 996.2L806.3 966.9M806.3 966.9L793.8 937.7M793.8 937.7L780.5 908.7M780.5 908.7L766.5 879.8M766.5 879.8L751.7 851.1M751.7 851.1L736.2 822.5M736.2 822.5L720.0 794.0M1051.9 1390.4L975.8 1358.7M1027.9 1319.2L960.5 1292.2M1000.7 1249.1L941.9 1226.7M920.0 1162.1L865.7 1144.6M894.8 1098.4L848.9 1084.8M866.4 1035.7L829.1 1025.6M834.7 973.9L806.3 966.9M987.9 1426.1L982.3 1392.2M982.3 1392.2L975.8 1358.7M975.8 1358.7L968.6 1325.3M894.7 1296.3L890.4 1265.7M890.4 1265.7L885.4 1235.2M885.4 1235.2L879.6 1204.8M879.6 1204.8L873.0 1174.6M873.0 1174.6L865.7 1144.6M865.7 1144.6L857.7 1114.6M857.7 1114.6L848.9 1084.8M848.9 1084.8L839.3 1055.1M839.3 1055.1L829.1 1025.6M768.2 931.6L759.8 904.0M759.8 904.0L750.8 876.5M750.8 876.5L741.2 848.9M741.2 848.9L730.9 821.4M730.9 821.4L720.0 794.0M975.8 1358.7L898.3 1327.0M960.5 1292.2L890.4 1265.7M941.9 1226.7L879.6 1204.8M848.9 1084.8L800.8 1070.3M829.1 1025.6L789.6 1014.7M806.3 966.9L776.0 959.3M780.5 908.7L759.8 904.0M751.7 851.1L741.2 848.9M903.2 1388.9L901.1 1357.9M901.1 1357.9L898.3 1327.0M898.3 1327.0L894.7 1296.3M820.3 1294.2L820.1 1266.1M820.1 1266.1L819.2 1238.0M819.2 1238.0L817.7 1209.9M817.7 1209.9L815.5 1181.9M815.5 1181.9L812.8 1153.9M812.8 1153.9L809.4 1126.0M809.4 1126.0L805.4 1098.1M805.4 1098.1L800.8 1070.3M800.8 1070.3L795.5 1042.5M795.5 1042.5L789.6 1014.7M789.6 1014.7L783.1 987.0M783.1 987.0L776.0 959.3M776.0 959.3L768.2 931.6M725.4 820.0L720.0 794.0M898.3 1327.0L820.3 1294.2M890.4 1265.7L819.2 1238.0M879.6 1204.8L815.5 1181.9M865.7 1144.6L809.4 1126.0M800.8 1070.3L752.5 1052.6M789.6 1014.7L749.8 1001.1M776.0 959.3L745.2 949.5M759.8 904.0L738.8 897.8M741.2 848.9L730.3 845.9M819.0 1350.6L820.0 1322.4M820.0 1322.4L820.3 1294.2M746.6 1231.8L748.8 1206.3M748.8 1206.3L750.6 1180.7M750.6 1180.7L752.0 1155.2M752.0 1155.2L752.8 1129.6M752.8 1129.6L753.2 1103.9M753.2 1103.9L753.1 1078.3M753.1 1078.3L752.5 1052.6M752.5 1052.6L751.4 1026.8M751.4 1026.8L749.8 1001.1M749.8 1001.1L747.8 975.3M747.8 975.3L745.2 949.5M745.2 949.5L742.2 923.6M742.2 923.6L738.8 897.8M738.8 897.8L734.8 871.9M734.8 871.9L730.3 845.9M730.3 845.9L725.4 820.0M820.3 1294.2L743.8 1257.3M819.2 1238.0L748.8 1206.3M815.5 1181.9L752.0 1155.2M809.4 1126.0L753.2 1103.9M745.2 949.5L715.0 937.1M738.8 897.8L718.0 889.7M730.3 845.9L719.7 842.0M736.8 1308.2L740.5 1282.7M740.5 1282.7L743.8 1257.3M743.8 1257.3L746.6 1231.8M674.9 1193.0L680.2 1170.1M680.2 1170.1L685.2 1147.1M685.2 1147.1L689.8 1124.1M689.8 1124.1L694.1 1100.9M698.1 1077.7L701.7 1054.5M701.7 1054.5L705.0 1031.1M705.0 1031.1L708.0 1007.7M708.0 1007.7L710.7 984.3M710.7 984.3L713.0 960.7M713.0 960.7L715.0 937.1M715.0 937.1L716.7 913.4M716.7 913.4L718.0 889.7M718.0 889.7L719.0 865.9M719.0 865.9L719.7 842.0M719.7 842.0L720.0 818.0M720.0 818.0L720.0 794.0M743.8 1257.3L669.3 1215.9M748.8 1206.3L680.2 1170.1M752.0 1155.2L689.8 1124.1M753.2 1103.9L698.1 1077.7M752.5 1052.6L705.0 1031.1M749.8 1001.1L710.7 984.3M657.0 1261.4L663.3 1238.7M663.3 1238.7L669.3 1215.9M669.3 1215.9L674.9 1193.0M694.1 1100.9L698.1 1077.7M671.8 965.9L678.5 944.6M678.5 944.6L685.0 923.3M685.0 923.3L691.3 902.0M691.3 902.0L697.4 880.5M697.4 880.5L703.4 859.0M703.4 859.0L709.1 837.4M709.1 837.4L714.6 815.7M714.6 815.7L720.0 794.0M669.3 1215.9L594.7 1174.1M680.2 1170.1L611.7 1133.0M689.8 1124.1L627.8 1091.7M698.1 1077.7L643.3 1050.0M705.0 1031.1L657.9 1008.1M710.7 984.3L671.8 965.9M715.0 937.1L685.0 923.3M718.0 889.7L697.4 880.5M719.7 842.0L709.1 837.4M577.1 1214.9L586.0 1194.5M586.0 1194.5L594.7 1174.1M594.7 1174.1L603.3 1153.6M603.3 1153.6L611.7 1133.0M611.7 1133.0L619.8 1112.4M619.8 1112.4L627.8 1091.7M627.8 1091.7L635.6 1070.9M635.6 1070.9L643.3 1050.0M643.3 1050.0L650.7 1029.1M650.7 1029.1L657.9 1008.1M657.9 1008.1L665.0 987.0M665.0 987.0L671.8 965.9M671.8 965.9L634.7 944.6M685.0 923.3L656.4 907.2M697.4 880.5L677.9 869.6M709.1 837.4L699.1 831.9M498.8 1165.5L510.5 1147.3M510.5 1147.3L522.1 1129.1M522.1 1129.1L533.7 1110.8M533.7 1110.8L545.2 1092.5M545.2 1092.5L556.6 1074.2M556.6 1074.2L567.9 1055.8M567.9 1055.8L579.2 1037.3M579.2 1037.3L590.4 1018.9M590.4 1018.9L601.6 1000.3M601.6 1000.3L612.7 981.8M612.7 981.8L623.7 963.2M623.7 963.2L634.7 944.6M634.7 944.6L645.6 925.9M645.6 925.9L656.4 907.2M656.4 907.2L667.2 888.4M667.2 888.4L677.9 869.6M677.9 869.6L688.5 850.8M688.5 850.8L699.1 831.9M699.1 831.9L709.6 813.0M709.6 813.0L720.0 794.0M522.1 1129.1L452.1 1080.5M545.2 1092.5L481.4 1048.2M567.9 1055.8L510.8 1016.1M590.4 1018.9L540.4 984.1M612.7 981.8L570.1 952.2M634.7 944.6L599.8 920.3M656.4 907.2L629.7 888.6M677.9 869.6L659.7 857.0M699.1 831.9L689.8 825.4M422.8 1112.8L437.4 1096.6M437.4 1096.6L452.1 1080.5M452.1 1080.5L466.7 1064.3M466.7 1064.3L481.4 1048.2M481.4 1048.2L496.1 1032.2M496.1 1032.2L510.8 1016.1M510.8 1016.1L525.6 1000.1M525.6 1000.1L540.4 984.1M540.4 984.1L555.2 968.1M555.2 968.1L570.1 952.2M570.1 952.2L584.9 936.2M584.9 936.2L599.8 920.3M599.8 920.3L614.8 904.4M614.8 904.4L629.7 888.6M629.7 888.6L644.7 872.8M644.7 872.8L659.7 857.0M659.7 857.0L674.7 841.2M674.7 841.2L689.8 825.4M689.8 825.4L704.9 809.7M704.9 809.7L720.0 794.0M350.5 1055.2L368.1 1041.1M368.1 1041.1L385.9 1027.0M385.9 1027.0L403.7 1013.1M403.7 1013.1L421.7 999.3M421.7 999.3L439.7 985.7M439.7 985.7L457.8 972.1M457.8 972.1L475.9 958.6M475.9 958.6L494.2 945.3M494.2 945.3L512.5 932.1M512.5 932.1L531.0 919.0M531.0 919.0L549.5 906.0M549.5 906.0L568.1 893.1M568.1 893.1L586.8 880.3M586.8 880.3L605.6 867.6M605.6 867.6L624.4 855.1M624.4 855.1L643.4 842.6M643.4 842.6L662.4 830.3M662.4 830.3L681.5 818.1M681.5 818.1L700.7 806.0M700.7 806.0L720.0 794.0M452.1 1080.5L385.9 1027.0M481.4 1048.2L421.7 999.3M510.8 1016.1L457.8 972.1M540.4 984.1L494.2 945.3M570.1 952.2L531.0 919.0M599.8 920.3L568.1 893.1M629.7 888.6L605.6 867.6M659.7 857.0L643.4 842.6M689.8 825.4L681.5 818.1M282.0 993.0L302.9 981.0M302.9 981.0L323.8 969.3M323.8 969.3L344.9 957.7M344.9 957.7L366.1 946.4M366.1 946.4L387.4 935.2M387.4 935.2L408.8 924.3M408.8 924.3L430.3 913.6M430.3 913.6L451.9 903.1M451.9 903.1L473.6 892.9M385.9 1027.0L323.8 969.3M421.7 999.3L366.1 946.4M457.8 972.1L408.8 924.3M494.2 945.3L451.9 903.1M531.0 919.0L495.5 882.8M568.1 893.1L539.5 863.3M605.6 867.6L584.0 844.7M643.4 842.6L628.9 827.0M681.5 818.1L674.2 810.1M473.6 892.9L495.5 882.8M495.5 882.8L517.4 873.0M517.4 873.0L539.5 863.3M539.5 863.3L561.7 853.9M561.7 853.9L584.0 844.7M584.0 844.7L606.4 835.7M606.4 835.7L628.9 827.0M628.9 827.0L651.5 818.4M651.5 818.4L674.2 810.1M674.2 810.1L697.1 801.9M697.1 801.9L720.0 794.0M250.0 934.0L272.5 924.4M272.5 924.4L295.2 915.1M295.2 915.1L317.9 906.0M317.9 906.0L340.8 897.2M340.8 897.2L363.7 888.7M363.7 888.7L386.8 880.4M386.8 880.4L409.9 872.5M409.9 872.5L433.2 864.8M323.8 969.3L295.2 915.1M366.1 946.4L340.8 897.2M408.8 924.3L386.8 880.4M451.9 903.1L433.2 864.8M495.5 882.8L480.0 850.2M539.5 863.3L527.2 836.8M584.0 844.7L574.8 824.4M628.9 827.0L622.8 813.2M674.2 810.1L671.2 803.0M433.2 864.8L456.5 857.4M456.5 857.4L480.0 850.2M480.0 850.2L503.5 843.4M503.5 843.4L527.2 836.8M527.2 836.8L550.9 830.5M550.9 830.5L574.8 824.4M574.8 824.4L598.7 818.7M598.7 818.7L622.8 813.2M622.8 813.2L646.9 808.0M646.9 808.0L671.2 803.0M671.2 803.0L695.5 798.4M695.5 798.4L720.0 794.0M217.8 875.1L242.1 867.8M242.1 867.8L266.6 860.8M266.6 860.8L291.1 854.2M291.1 854.2L315.7 847.9M315.7 847.9L340.3 842.0M340.3 842.0L365.1 836.4M295.2 915.1L266.6 860.8M340.8 897.2L315.7 847.9M386.8 880.4L365.1 836.4M433.2 864.8L414.8 826.2M480.0 850.2L464.9 817.4M527.2 836.8L515.3 810.0M574.8 824.4L566.0 803.9M365.1 836.4L389.9 831.1M389.9 831.1L414.8 826.2M414.8 826.2L439.8 821.6M439.8 821.6L464.9 817.4M464.9 817.4L490.0 813.5M490.0 813.5L515.3 810.0M515.3 810.0L540.6 806.8M540.6 806.8L566.0 803.9M566.0 803.9L591.4 801.4M591.4 801.4L617.0 799.3M617.0 799.3L642.6 797.4M642.6 797.4L668.3 795.9M668.3 795.9L694.1 794.8M694.1 794.8L720.0 794.0M186.1 816.0L212.3 810.9M212.3 810.9L238.6 806.3M238.6 806.3L264.9 802.1M264.9 802.1L291.3 798.3M291.3 798.3L317.7 794.9M266.6 860.8L238.6 806.3M315.7 847.9L291.3 798.3M365.1 836.4L344.2 792.0M414.8 826.2L397.3 787.3M464.9 817.4L450.6 784.3M515.3 810.0L504.1 782.9M622.8 813.2L617.0 799.3M671.2 803.0L668.3 795.9M317.7 794.9L344.2 792.0M344.2 792.0L370.7 789.4M370.7 789.4L397.3 787.3M397.3 787.3L423.9 785.6M423.9 785.6L450.6 784.3M450.6 784.3L477.3 783.4M477.3 783.4L504.1 782.9M504.1 782.9L530.9 782.8M530.9 782.8L557.7 783.2M557.7 783.2L584.7 784.0M584.7 784.0L611.6 785.1M611.6 785.1L638.6 786.7M638.6 786.7L665.7 788.7M155.8 756.1L183.9 753.4M183.9 753.4L212.1 751.2M212.1 751.2L240.2 749.4M240.2 749.4L268.4 748.2M238.6 806.3L212.1 751.2M291.3 798.3L268.4 748.2M344.2 792.0L324.7 747.1M397.3 787.3L381.1 748.0M450.6 784.3L437.5 750.9M566.0 803.9L557.7 783.2M617.0 799.3L611.6 785.1M668.3 795.9L665.7 788.7M665.7 788.7L692.8 791.2M692.8 791.2L720.0 794.0M268.4 748.2L296.5 747.4M296.5 747.4L324.7 747.1M324.7 747.1L352.9 747.3M504.1 782.9L493.9 755.6M352.9 747.3L381.1 748.0M381.1 748.0L409.3 749.2M409.3 749.2L437.5 750.9M437.5 750.9L465.7 753.0M465.7 753.0L493.9 755.6M212.1 751.2L187.4 695.4M268.4 748.2L247.2 697.7M557.7 783.2L550.4 762.3M611.6 785.1L606.9 770.9M665.7 788.7L663.4 781.5M493.9 755.6L522.1 758.7M522.1 758.7L550.4 762.3M550.4 762.3L578.6 766.4M578.6 766.4L606.9 770.9M127.4 695.3L157.4 695.1M157.4 695.1L187.4 695.4M187.4 695.4L217.3 696.3M217.3 696.3L247.2 697.7M324.7 747.1L306.9 702.2M381.1 748.0L366.4 708.8M606.9 770.9L635.1 776.0M635.1 776.0L663.4 781.5M663.4 781.5L691.7 787.5M691.7 787.5L720.0 794.0M247.2 697.7L277.1 699.7M277.1 699.7L306.9 702.2M306.9 702.2L336.7 705.2M336.7 705.2L366.4 708.8M366.4 708.8L396.1 712.9M396.1 712.9L425.7 717.6M425.7 717.6L455.3 722.8M106.4 631.6L138.0 634.3M187.4 695.4L169.5 637.5M247.2 697.7L232.2 645.7M437.5 750.9L425.7 717.6M493.9 755.6L484.9 728.5M550.4 762.3L543.9 741.6M606.9 770.9L602.8 756.9M455.3 722.8L484.9 728.5M484.9 728.5L514.4 734.8M514.4 734.8L543.9 741.6M543.9 741.6L573.4 749.0M573.4 749.0L602.8 756.9M602.8 756.9L632.1 765.4M632.1 765.4L661.5 774.4M661.5 774.4L690.8 783.9M690.8 783.9L720.0 794.0M138.0 634.3L169.5 637.5M169.5 637.5L200.9 641.3M200.9 641.3L232.2 645.7M232.2 645.7L263.4 650.7M263.4 650.7L294.5 656.2M294.5 656.2L325.6 662.3M325.6 662.3L356.5 669.0M169.5 637.5L156.1 579.1M306.9 702.2L294.5 656.2M366.4 708.8L356.5 669.0M425.7 717.6L418.0 684.1M484.9 728.5L479.2 701.5M663.4 781.5L661.5 774.4M356.5 669.0L387.3 676.3M387.3 676.3L418.0 684.1M418.0 684.1L448.7 692.5M448.7 692.5L479.2 701.5M479.2 701.5L509.6 711.0M509.6 711.0L540.0 721.2M540.0 721.2L570.2 731.9M570.2 731.9L600.4 743.2M600.4 743.2L630.4 755.0M630.4 755.0L660.4 767.4M660.4 767.4L690.2 780.4M690.2 780.4L720.0 794.0M90.4 566.4L123.3 572.5M123.3 572.5L156.1 579.1M156.1 579.1L188.7 586.2M188.7 586.2L221.1 594.0M221.1 594.0L253.4 602.2M253.4 602.2L285.6 611.1M285.6 611.1L317.6 620.5M317.6 620.5L349.4 630.5M349.4 630.5L381.1 641.0M381.1 641.0L412.7 652.1M412.7 652.1L444.1 663.8M444.1 663.8L475.4 676.0M475.4 676.0L506.5 688.8M506.5 688.8L537.4 702.1M537.4 702.1L568.2 716.0M568.2 716.0L598.9 730.5M598.9 730.5L629.4 745.5M629.4 745.5L659.7 761.1M76.8 500.7L110.6 510.8M110.6 510.8L144.3 521.4M144.3 521.4L177.8 532.4M177.8 532.4L211.1 543.9M211.1 543.9L244.3 555.9M244.3 555.9L277.3 568.4M277.3 568.4L310.0 581.4M310.0 581.4L342.7 594.9M342.7 594.9L375.1 608.8M375.1 608.8L407.3 623.2M156.1 579.1L144.3 521.4M144.3 521.4L134.3 464.7M232.2 645.7L221.1 594.0M221.1 594.0L211.1 543.9M211.1 543.9L201.8 496.2M294.5 656.2L285.6 611.1M285.6 611.1L277.3 568.4M356.5 669.0L349.4 630.5M349.4 630.5L342.7 594.9M418.0 684.1L412.7 652.1M412.7 652.1L407.3 623.2M479.2 701.5L475.4 676.0M475.4 676.0L471.3 653.5M543.9 741.6L540.0 721.2M540.0 721.2L537.4 702.1M537.4 702.1L534.5 685.7M602.8 756.9L600.4 743.2M600.4 743.2L598.9 730.5M661.5 774.4L660.4 767.4M660.4 767.4L659.7 761.1M659.7 761.1L689.9 777.3M689.9 777.3L720.0 794.0M407.3 623.2L439.4 638.1M439.4 638.1L471.3 653.5M471.3 653.5L503.0 669.4M66.1 434.5L100.2 449.4M100.2 449.4L134.3 464.7M134.3 464.7L168.1 480.3M168.1 480.3L201.8 496.2M277.3 568.4L268.8 529.0M342.7 594.9L335.1 563.0M598.9 730.5L597.1 719.9M503.0 669.4L534.5 685.7M534.5 685.7L565.9 702.6M565.9 702.6L597.1 719.9M597.1 719.9L628.1 737.7M201.8 496.2L235.4 512.4M235.4 512.4L268.8 529.0M268.8 529.0L302.0 545.8M302.0 545.8L335.1 563.0M335.1 563.0L368.1 580.5M368.1 580.5L400.8 598.3M134.3 464.7L124.3 409.0M201.8 496.2L191.4 450.3M407.3 623.2L400.8 598.3M471.3 653.5L465.9 634.9M534.5 685.7L530.4 672.8M659.7 761.1L658.9 756.0M819.6 349.4L889.0 368.5M807.1 398.5L870.1 415.8M795.0 447.6L851.3 463.0M783.2 496.8L832.5 510.3M771.8 546.1L813.7 557.5M760.7 595.5L794.9 604.8M750.0 645.0L776.1 652.1M739.7 694.6L757.4 699.4M729.6 744.3L738.7 746.7M889.0 368.5L959.1 381.0M870.1 415.8L933.1 427.3M851.3 463.0L907.0 473.4M832.5 510.3L880.8 519.5M813.7 557.5L854.4 565.4M794.9 604.8L827.8 611.3M776.1 652.1L801.1 657.1M757.4 699.4L774.2 702.8M738.7 746.7L747.2 748.5M959.1 381.0L1027.9 395.8M933.1 427.3L994.3 440.5M907.0 473.4L960.5 485.1M1027.9 395.8L1093.6 418.8M994.3 440.5L1052.2 460.6M960.5 485.1L1010.8 502.4M926.6 529.5L969.3 544.1M892.5 573.9L927.9 585.9M858.3 618.1L886.3 627.5M824.0 662.3L844.8 669.2M789.4 706.3L803.2 710.8M754.8 750.2L761.6 752.4M1156.8 635.6L1182.9 707.9M1108.7 654.4L1132.2 720.5M1060.5 672.9L1081.3 732.4M1012.3 691.2L1030.2 743.5M963.8 709.1L978.9 753.8M915.3 726.7L927.5 763.4M866.7 744.0L875.9 772.2M817.9 761.0L824.1 780.2M769.0 777.6L772.1 787.5M594.7 1174.1L522.1 1129.1M611.7 1133.0L545.2 1092.5M627.8 1091.7L567.9 1055.8M643.3 1050.0L590.4 1018.9M657.9 1008.1L612.7 981.8M880.8 519.5L926.6 529.5M854.4 565.4L892.5 573.9M827.8 611.3L858.3 618.1M801.1 657.1L824.0 662.3M972.3 1129.8L936.6 1112.8M774.2 702.8L789.4 706.3M747.2 748.5L754.8 750.2" stroke="#e8e8e8" stroke-opacity="0.4" stroke-width="2.1"/>
<path d="M57.0 368.0L90.7 388.4M90.7 388.4L124.3 409.0M124.3 409.0L157.9 429.6M157.9 429.6L191.4 450.3M191.4 450.3L224.9 471.1M224.9 471.1L258.3 492.0M258.3 492.0L291.6 513.0M291.6 513.0L324.9 534.1M324.9 534.1L358.1 555.2M358.1 555.2L391.3 576.5M391.3 576.5L424.4 597.8M424.4 597.8L457.5 619.3M457.5 619.3L490.5 640.8M490.5 640.8L523.5 662.4M523.5 662.4L556.4 684.1M556.4 684.1L589.2 705.9M589.2 705.9L622.0 727.8M622.0 727.8L654.7 749.8M654.7 749.8L687.4 771.8M687.4 771.8L720.0 794.0M200.0 417.5L229.8 440.6M229.8 440.6L259.7 463.6M259.7 463.6L289.8 486.5M289.8 486.5L319.9 509.2M319.9 509.2L350.1 531.9M350.1 531.9L380.4 554.4M380.4 554.4L410.8 576.8M410.8 576.8L441.3 599.1M441.3 599.1L471.9 621.2M471.9 621.2L502.6 643.2M502.6 643.2L533.4 665.1M533.4 665.1L564.2 686.9M564.2 686.9L595.2 708.6M595.2 708.6L626.3 730.1M626.3 730.1L657.4 751.5M657.4 751.5L688.7 772.8M688.7 772.8L720.0 794.0M631.3 729.8L660.6 751.5M660.6 751.5L690.2 772.8M690.2 772.8L720.0 794.0M628.1 737.7L658.9 756.0M658.9 756.0L689.5 774.7M689.5 774.7L720.0 794.0M400.8 598.3L433.4 616.5M433.4 616.5L465.9 634.9M465.9 634.9L498.2 653.7M498.2 653.7L530.4 672.8M530.4 672.8L562.4 692.2M562.4 692.2L594.2 711.9M594.2 711.9L625.9 732.0M625.9 732.0L657.4 752.3M657.4 752.3L688.8 773.0M688.8 773.0L720.0 794.0M124.3 409.0L170.2 394.2M191.4 450.3L229.8 440.6M258.3 492.0L289.8 486.5M268.8 529.0L258.3 492.0M324.9 534.1L350.1 531.9M335.1 563.0L324.9 534.1M391.3 576.5L410.8 576.8M400.8 598.3L391.3 576.5M457.5 619.3L471.9 621.2M465.9 634.9L457.5 619.3M523.5 662.4L533.4 665.1M533.4 665.1L544.5 663.6M530.4 672.8L523.5 662.4M589.2 705.9L595.2 708.6M595.2 708.6L602.2 708.0M597.1 719.9L594.2 711.9M594.2 711.9L589.2 705.9M654.7 749.8L657.4 751.5M657.4 751.5L660.6 751.5M658.9 756.0L657.4 752.3M657.4 752.3L654.7 749.8M111.0 347.3L140.6 370.8M140.6 370.8L170.2 394.2M170.2 394.2L200.0 417.5M544.5 663.6L573.2 685.9M573.2 685.9L602.2 708.0M602.2 708.0L631.3 729.8M410.8 576.8L431.8 572.0M471.9 621.2L487.7 618.2M165.0 326.7L190.7 352.2M190.7 352.2L216.6 377.6M216.6 377.6L242.8 402.7M242.8 402.7L269.2 427.6M357.6 463.2L381.6 488.5M381.6 488.5L406.0 513.5M406.0 513.5L430.6 538.3M430.6 538.3L455.5 562.9M455.5 562.9L480.7 587.1M480.7 587.1L506.2 611.1M506.2 611.1L531.9 634.9M531.9 634.9L558.0 658.4M558.0 658.4L584.3 681.6M584.3 681.6L610.9 704.6M610.9 704.6L637.7 727.4M216.6 377.6L264.1 359.4M269.2 427.6L310.3 411.8M322.5 476.6L357.6 463.2M376.7 524.8L406.0 513.5M431.8 572.0L455.5 562.9M558.0 658.4L573.4 651.2M610.9 704.6L621.1 699.7M664.9 749.8L670.0 747.3M269.2 427.6L295.7 452.2M295.7 452.2L322.5 476.6M322.5 476.6L349.5 500.8M349.5 500.8L376.7 524.8M376.7 524.8L404.2 548.5M404.2 548.5L431.8 572.0M431.8 572.0L459.7 595.2M459.7 595.2L487.7 618.2M487.7 618.2L516.0 641.0M516.0 641.0L544.5 663.6M637.7 727.4L664.9 749.8M664.9 749.8L692.3 772.0M692.3 772.0L720.0 794.0M170.2 394.2L216.6 377.6M229.8 440.6L269.2 427.6M289.8 486.5L322.5 476.6M350.1 531.9L376.7 524.8M487.7 618.2L506.2 611.1M544.5 663.6L558.0 658.4M602.2 708.0L610.9 704.6M660.6 751.5L664.9 749.8M219.0 306.0L241.4 332.8M241.4 332.8L264.1 359.4M264.1 359.4L287.0 385.8M287.0 385.8L310.3 411.8M310.3 411.8L333.8 437.6M333.8 437.6L357.6 463.2M481.7 551.3L504.2 576.6M504.2 576.6L527.0 601.7M527.0 601.7L550.1 626.6M550.1 626.6L573.4 651.2M573.4 651.2L597.1 675.6M597.1 675.6L621.1 699.7M621.1 699.7L645.4 723.6M645.4 723.6L670.0 747.3M670.0 747.3L694.8 770.8M694.8 770.8L720.0 794.0M310.3 411.8L352.9 394.5M357.6 463.2L394.6 447.7M406.0 513.5L437.6 500.0M455.5 562.9L481.7 551.3M506.2 611.1L527.0 601.7M670.0 747.3L675.5 744.5M273.0 285.3L292.5 313.0M292.5 313.0L312.4 340.4M312.4 340.4L332.5 367.6M332.5 367.6L352.9 394.5M352.9 394.5L373.6 421.2M373.6 421.2L394.6 447.7M394.6 447.7L416.0 474.0M416.0 474.0L437.6 500.0M437.6 500.0L459.5 525.7M459.5 525.7L481.7 551.3M611.0 668.8L632.2 694.2M632.2 694.2L653.7 719.5M653.7 719.5L675.5 744.5M675.5 744.5L697.6 769.3M697.6 769.3L720.0 794.0M264.1 359.4L312.4 340.4M437.6 500.0L470.5 485.5M481.7 551.3L509.2 538.8M527.0 601.7L549.1 591.4M573.4 651.2L590.1 643.2M621.1 699.7L632.2 694.2M327.0 264.7L343.9 292.9M343.9 292.9L361.1 321.0M361.1 321.0L378.6 348.9M378.6 348.9L396.4 376.6M554.0 553.9L571.3 581.2M571.3 581.2L589.0 608.3M589.0 608.3L606.9 635.3M606.9 635.3L625.0 662.1M625.0 662.1L643.5 688.8M643.5 688.8L662.2 715.3M662.2 715.3L681.2 741.7M681.2 741.7L700.5 767.9M700.5 767.9L720.0 794.0M361.1 321.0L410.0 301.7M396.4 376.6L440.1 358.8M432.9 431.5L471.3 415.3M470.5 485.5L503.5 471.2M509.2 538.8L536.9 526.5M549.1 591.4L571.3 581.2M396.4 376.6L414.5 404.1M414.5 404.1L432.9 431.5M432.9 431.5L451.5 458.6M451.5 458.6L470.5 485.5M470.5 485.5L489.7 512.3M489.7 512.3L509.2 538.8M509.2 538.8L529.0 565.2M529.0 565.2L549.1 591.4M549.1 591.4L569.4 617.4M569.4 617.4L590.1 643.2M590.1 643.2L611.0 668.8M312.4 340.4L361.1 321.0M352.9 394.5L396.4 376.6M394.6 447.7L432.9 431.5M590.1 643.2L606.9 635.3M632.2 694.2L643.5 688.8M675.5 744.5L681.2 741.7M381.0 244.0L395.4 272.9M395.4 272.9L410.0 301.7M410.0 301.7L424.9 330.3M424.9 330.3L440.1 358.8M440.1 358.8L455.5 387.1M455.5 387.1L471.3 415.3M471.3 415.3L487.3 443.3M487.3 443.3L503.5 471.2M503.5 471.2L520.1 498.9M520.1 498.9L536.9 526.5M536.9 526.5L554.0 553.9M686.6 739.1L703.2 766.6M703.2 766.6L720.0 794.0M503.5 471.2L535.9 457.4M536.9 526.5L563.8 514.7M571.3 581.2L592.9 571.5M606.9 635.3L623.0 627.9M643.5 688.8L654.3 683.7M681.2 741.7L686.6 739.1M435.0 223.3L446.7 253.0M446.7 253.0L458.6 282.6M458.6 282.6L470.8 312.0M470.8 312.0L483.3 341.3M483.3 341.3L496.0 370.5M613.3 562.2L625.6 591.6M625.6 591.6L638.2 620.8M638.2 620.8L651.1 649.9M651.1 649.9L664.3 678.9M664.3 678.9L677.8 707.8M677.8 707.8L691.6 736.7M691.6 736.7L705.6 765.4M705.6 765.4L720.0 794.0M483.3 341.3L525.7 324.1M509.0 399.6L545.8 384.2M535.9 457.4L567.1 444.0M563.8 514.7L589.6 503.3M592.9 571.5L613.3 562.2M623.0 627.9L638.2 620.8M496.0 370.5L509.0 399.6M509.0 399.6L522.3 428.6M522.3 428.6L535.9 457.4M535.9 457.4L549.7 486.1M549.7 486.1L563.8 514.7M563.8 514.7L578.2 543.2M578.2 543.2L592.9 571.5M592.9 571.5L607.8 599.8M607.8 599.8L623.0 627.9M623.0 627.9L638.5 655.9M638.5 655.9L654.3 683.7M654.3 683.7L670.3 711.5M670.3 711.5L686.6 739.1M410.0 301.7L458.6 282.6M440.1 358.8L483.3 341.3M471.3 415.3L509.0 399.6M654.3 683.7L664.3 678.9M686.6 739.1L691.6 736.7M489.0 202.7L497.7 233.2M497.7 233.2L506.8 263.6M506.8 263.6L516.1 293.9M516.1 293.9L525.7 324.1M525.7 324.1L535.6 354.2M535.6 354.2L545.8 384.2M545.8 384.2L556.3 414.2M556.3 414.2L567.1 444.0M567.1 444.0L578.2 473.7M578.2 473.7L589.6 503.3M589.6 503.3L601.3 532.8M601.3 532.8L613.3 562.2M684.9 704.2L696.3 734.2M696.3 734.2L708.0 764.1M708.0 764.1L720.0 794.0M458.6 282.6L506.8 263.6M589.6 503.3L614.7 491.9M613.3 562.2L633.1 552.9M638.2 620.8L652.8 613.7M664.3 678.9L673.9 674.1M691.6 736.7L696.3 734.2M543.0 182.0L548.7 213.3M548.7 213.3L554.7 244.6M554.7 244.6L561.0 275.8M561.0 275.8L567.7 306.9M567.7 306.9L574.7 337.9M574.7 337.9L582.0 368.9M618.6 273.7L621.5 303.0M621.5 303.0L624.7 332.2M624.7 332.2L628.2 361.4M628.2 361.4L632.1 390.5M632.1 390.5L636.2 419.6M636.2 419.6L640.7 448.6M640.7 448.6L645.5 477.6M645.5 477.6L650.7 506.6M650.7 506.6L656.1 535.5M656.1 535.5L661.9 564.4M661.9 564.4L668.1 593.3M668.1 593.3L674.5 622.1M674.5 622.1L681.3 650.8M681.3 650.8L688.4 679.5M688.4 679.5L695.8 708.2M695.8 708.2L703.5 736.9M703.5 736.9L711.6 765.4M711.6 765.4L720.0 794.0M554.7 244.6L618.6 273.7M567.7 306.9L624.7 332.2M582.0 368.9L632.1 390.5M597.7 430.5L640.7 448.6M614.7 491.9L650.7 506.6M633.1 552.9L661.9 564.4M652.8 613.7L674.5 622.1M674.5 622.1L698.3 629.7M688.4 679.5L704.4 684.5M703.5 736.9L711.7 739.3M582.0 368.9L589.7 399.7M589.7 399.7L597.7 430.5M597.7 430.5L606.0 461.2M606.0 461.2L614.7 491.9M614.7 491.9L623.7 522.4M623.7 522.4L633.1 552.9M633.1 552.9L642.8 583.3M642.8 583.3L652.8 613.7M652.8 613.7L663.2 643.9M663.2 643.9L673.9 674.1M673.9 674.1L684.9 704.2M506.8 263.6L554.7 244.6M525.7 324.1L567.7 306.9M545.8 384.2L582.0 368.9M567.1 444.0L597.7 430.5M673.9 674.1L688.4 679.5M696.3 734.2L703.5 736.9M613.9 215.1L616.1 244.4M616.1 244.4L618.6 273.7M685.8 245.9L684.9 273.4M684.9 273.4L684.3 300.8M684.3 300.8L684.0 328.2M684.0 328.2L683.9 355.6M683.9 355.6L684.1 383.1M684.1 383.1L684.6 410.5M684.6 410.5L685.3 437.9M685.3 437.9L686.4 465.3M686.4 465.3L687.7 492.7M687.7 492.7L689.2 520.1M689.2 520.1L691.1 547.5M691.1 547.5L693.2 574.9M693.2 574.9L695.6 602.3M695.6 602.3L698.3 629.7M698.3 629.7L701.2 657.1M701.2 657.1L704.4 684.5M704.4 684.5L707.9 711.9M707.9 711.9L711.7 739.3M711.7 739.3L715.7 766.6M715.7 766.6L720.0 794.0M618.6 273.7L684.3 300.8M624.7 332.2L683.9 355.6M632.1 390.5L684.6 410.5M640.7 448.6L686.4 465.3M650.7 506.6L689.2 520.1M661.9 564.4L693.2 574.9M698.3 629.7L723.8 637.2M704.4 684.5L721.8 689.4M711.7 739.3L720.5 741.7M758.7 274.3L755.0 300.1M755.0 300.1L751.5 325.9M751.5 325.9L748.1 351.7M748.1 351.7L745.0 377.6M745.0 377.6L742.0 403.4M742.0 403.4L739.2 429.3M739.2 429.3L736.6 455.3M736.6 455.3L734.2 481.2M734.2 481.2L732.0 507.1M732.0 507.1L730.0 533.1M730.0 533.1L728.2 559.1M728.2 559.1L726.5 585.1M726.5 585.1L725.0 611.2M725.0 611.2L723.8 637.2M723.8 637.2L722.7 663.3M722.7 663.3L721.8 689.4M721.8 689.4L721.0 715.5M721.0 715.5L720.5 741.7M720.5 741.7L720.2 767.8M720.2 767.8L720.0 794.0M684.3 300.8L751.5 325.9M683.9 355.6L745.0 377.6M684.6 410.5L739.2 429.3M686.4 465.3L734.2 481.2M689.2 520.1L730.0 533.1M693.2 574.9L726.5 585.1M832.4 300.5L826.0 325.0M826.0 325.0L819.6 349.4M819.6 349.4L813.3 374.0M813.3 374.0L807.1 398.5M807.1 398.5L801.0 423.0M801.0 423.0L795.0 447.6M795.0 447.6L789.0 472.2M789.0 472.2L783.2 496.8M783.2 496.8L777.5 521.5M777.5 521.5L771.8 546.1M771.8 546.1L766.2 570.8M766.2 570.8L760.7 595.5M760.7 595.5L755.3 620.3M755.3 620.3L750.0 645.0M750.0 645.0L744.8 669.8M744.8 669.8L739.7 694.6M739.7 694.6L734.6 719.4M734.6 719.4L729.6 744.3M729.6 744.3L724.8 769.1M724.8 769.1L720.0 794.0M751.5 325.9L819.6 349.4M745.0 377.6L807.1 398.5M739.2 429.3L795.0 447.6M734.2 481.2L783.2 496.8M730.0 533.1L771.8 546.1M726.5 585.1L760.7 595.5M723.8 637.2L750.0 645.0M721.8 689.4L739.7 694.6M720.5 741.7L729.6 744.3M907.8 321.3L898.4 344.9M898.4 344.9L889.0 368.5M889.0 368.5L879.5 392.1M879.5 392.1L870.1 415.8M870.1 415.8L860.7 439.4M860.7 439.4L851.3 463.0M851.3 463.0L841.9 486.6M841.9 486.6L832.5 510.3M832.5 510.3L823.1 533.9M823.1 533.9L813.7 557.5M813.7 557.5L804.3 581.2M804.3 581.2L794.9 604.8M794.9 604.8L785.5 628.5M785.5 628.5L776.1 652.1M776.1 652.1L766.8 675.7M766.8 675.7L757.4 699.4M757.4 699.4L748.0 723.0M748.0 723.0L738.7 746.7M738.7 746.7L729.3 770.3M729.3 770.3L720.0 794.0M984.9 334.7L972.0 357.9M972.0 357.9L959.1 381.0M959.1 381.0L946.1 404.2M946.1 404.2L933.1 427.3M933.1 427.3L920.1 450.3M920.1 450.3L907.0 473.4M907.0 473.4L893.9 496.5M893.9 496.5L880.8 519.5M880.8 519.5L867.6 542.5M867.6 542.5L854.4 565.4M854.4 565.4L841.1 588.4M841.1 588.4L827.8 611.3M827.8 611.3L814.5 634.2M814.5 634.2L801.1 657.1M801.1 657.1L787.7 680.0M787.7 680.0L774.2 702.8M774.2 702.8L760.7 725.7M760.7 725.7L747.2 748.5M747.2 748.5L733.6 771.2M733.6 771.2L720.0 794.0M1061.4 351.0L1044.7 373.4M1044.7 373.4L1027.9 395.8M1027.9 395.8L1011.1 418.2M1011.1 418.2L994.3 440.5M994.3 440.5L977.4 462.8M977.4 462.8L960.5 485.1M960.5 485.1L943.6 507.3M943.6 507.3L926.6 529.5M926.6 529.5L909.6 551.7M909.6 551.7L892.5 573.9M892.5 573.9L875.4 596.0M875.4 596.0L858.3 618.1M858.3 618.1L841.2 640.2M841.2 640.2L824.0 662.3M824.0 662.3L806.7 684.3M806.7 684.3L789.4 706.3M789.4 706.3L772.1 728.3M772.1 728.3L754.8 750.2M754.8 750.2L737.4 772.1M737.4 772.1L720.0 794.0M1135.0 377.0L1114.3 397.9M1114.3 397.9L1093.6 418.8M1093.6 418.8L1072.9 439.7M1072.9 439.7L1052.2 460.6M1052.2 460.6L1031.5 481.5M1031.5 481.5L1010.8 502.4M1010.8 502.4L990.1 523.3M990.1 523.3L969.3 544.1M969.3 544.1L948.6 565.0M948.6 565.0L927.9 585.9M927.9 585.9L907.1 606.7M907.1 606.7L886.3 627.5M886.3 627.5L865.6 648.4M865.6 648.4L844.8 669.2M844.8 669.2L824.0 690.0M824.0 690.0L803.2 710.8M803.2 710.8L782.4 731.6M782.4 731.6L761.6 752.4M761.6 752.4L740.8 773.2M740.8 773.2L720.0 794.0M1093.6 418.8L1112.2 490.9M1052.2 460.6L1068.5 524.3M1010.8 502.4L1024.8 557.9M969.3 544.1L981.1 591.4M927.9 585.9L937.5 625.0M886.3 627.5L893.9 658.7M844.8 669.2L850.4 692.5M803.2 710.8L806.9 726.3M761.6 752.4L763.4 760.1M1156.0 457.5L1134.1 474.2M1134.1 474.2L1112.2 490.9M1112.2 490.9L1090.3 507.6M1090.3 507.6L1068.5 524.3M1068.5 524.3L1046.6 541.1M1046.6 541.1L1024.8 557.9M1024.8 557.9L1002.9 574.6M1002.9 574.6L981.1 591.4M981.1 591.4L959.3 608.2M959.3 608.2L937.5 625.0M937.5 625.0L915.7 641.9M915.7 641.9L893.9 658.7M893.9 658.7L872.1 675.6M872.1 675.6L850.4 692.5M850.4 692.5L828.6 709.4M828.6 709.4L806.9 726.3M806.9 726.3L785.1 743.2M785.1 743.2L763.4 760.1M763.4 760.1L741.7 777.0M741.7 777.0L720.0 794.0M1177.3 537.9L1154.5 550.7M1154.5 550.7L1131.6 563.6M1131.6 563.6L1108.8 576.4M1108.8 576.4L1085.9 589.3M1085.9 589.3L1063.1 602.1M1063.1 602.1L1040.2 615.0M1040.2 615.0L1017.4 627.8M1017.4 627.8L994.5 640.6M994.5 640.6L971.7 653.4M971.7 653.4L948.8 666.2M948.8 666.2L925.9 679.0M925.9 679.0L903.1 691.8M903.1 691.8L880.2 704.6M880.2 704.6L857.3 717.4M857.3 717.4L834.4 730.2M834.4 730.2L811.6 743.0M811.6 743.0L788.7 755.7M788.7 755.7L765.8 768.5M765.8 768.5L742.9 781.2M742.9 781.2L720.0 794.0M1112.2 490.9L1131.6 563.6M1131.6 563.6L1156.8 635.6M1068.5 524.3L1085.9 589.3M1024.8 557.9L1040.2 615.0M981.1 591.4L994.5 640.6M937.5 625.0L948.8 666.2M893.9 658.7L903.1 691.8M850.4 692.5L857.3 717.4M806.9 726.3L811.6 743.0M763.4 760.1L765.8 768.5M1204.7 616.4L1180.8 626.0M1180.8 626.0L1156.8 635.6M1156.8 635.6L1132.8 645.0M1132.8 645.0L1108.7 654.4M1108.7 654.4L1084.6 663.7M1084.6 663.7L1060.5 672.9M1060.5 672.9L1036.4 682.1M1036.4 682.1L1012.3 691.2M1012.3 691.2L988.1 700.2M988.1 700.2L963.8 709.1M963.8 709.1L939.6 717.9M939.6 717.9L915.3 726.7M915.3 726.7L891.0 735.4M891.0 735.4L866.7 744.0M866.7 744.0L842.3 752.5M842.3 752.5L817.9 761.0M817.9 761.0L793.5 769.3M793.5 769.3L769.0 777.6M769.0 777.6L744.5 785.9M744.5 785.9L720.0 794.0M1085.9 589.3L1108.7 654.4M1040.2 615.0L1060.5 672.9M994.5 640.6L1012.3 691.2M948.8 666.2L963.8 709.1M903.1 691.8L915.3 726.7M857.3 717.4L866.7 744.0M811.6 743.0L817.9 761.0M765.8 768.5L769.0 777.6M1233.4 694.5L1208.2 701.3M1208.2 701.3L1182.9 707.9M1182.9 707.9L1157.5 714.3M1157.5 714.3L1132.2 720.5M1132.2 720.5L1106.7 726.6M1106.7 726.6L1081.3 732.4M1081.3 732.4L1055.7 738.0M1055.7 738.0L1030.2 743.5M1030.2 743.5L1004.6 748.8M1004.6 748.8L978.9 753.8M978.9 753.8L953.2 758.7M953.2 758.7L927.5 763.4M927.5 763.4L901.7 767.9M901.7 767.9L875.9 772.2M875.9 772.2L850.0 776.3M850.0 776.3L824.1 780.2M824.1 780.2L798.1 784.0M798.1 784.0L772.1 787.5M772.1 787.5L746.1 790.8M746.1 790.8L720.0 794.0M1182.9 707.9L1210.0 780.1M1263.8 771.9L1236.9 776.2M1236.9 776.2L1210.0 780.1M1210.0 780.1L1183.1 783.7M1132.2 720.5L1156.1 786.9M1081.3 732.4L1102.1 792.4M1030.2 743.5L1047.9 796.6M978.9 753.8L993.6 799.5M927.5 763.4L939.1 801.0M875.9 772.2L884.5 801.3M824.1 780.2L829.8 800.2M772.1 787.5L775.0 797.7M1183.1 783.7L1156.1 786.9M1156.1 786.9L1129.1 789.8M1129.1 789.8L1102.1 792.4M1102.1 792.4L1075.0 794.7M1075.0 794.7L1047.9 796.6M1047.9 796.6L1020.7 798.2M1020.7 798.2L993.6 799.5M993.6 799.5L966.4 800.4M966.4 800.4L939.1 801.0M939.1 801.0L911.9 801.3M911.9 801.3L884.5 801.3M884.5 801.3L857.2 800.9M857.2 800.9L829.8 800.2M829.8 800.2L802.4 799.1M1210.0 780.1L1238.4 851.6M1156.1 786.9L1180.7 852.7M802.4 799.1L775.0 797.7M775.0 797.7L747.5 796.0M747.5 796.0L720.0 794.0M1296.1 848.6L1267.3 850.3M1267.3 850.3L1238.4 851.6M1238.4 851.6L1209.6 852.4M1209.6 852.4L1180.7 852.7M1180.7 852.7L1151.9 852.6M1151.9 852.6L1123.0 852.0M1102.1 792.4L1123.0 852.0M1047.9 796.6L1065.4 849.4M993.6 799.5L1007.8 844.8M939.1 801.0L950.2 838.4M884.5 801.3L892.6 830.2M1123.0 852.0L1094.2 850.9M1094.2 850.9L1065.4 849.4M1065.4 849.4L1036.6 847.3M1036.6 847.3L1007.8 844.8M1238.4 851.6L1267.6 922.2M829.8 800.2L835.0 820.0M775.0 797.7L777.5 807.9M1007.8 844.8L979.0 841.9M979.0 841.9L950.2 838.4M950.2 838.4L921.4 834.5M921.4 834.5L892.6 830.2M892.6 830.2L863.8 825.3M863.8 825.3L835.0 820.0M835.0 820.0L806.3 814.2M806.3 814.2L777.5 807.9M777.5 807.9L748.7 801.2M748.7 801.2L720.0 794.0M1329.8 924.7L1298.6 923.7M1298.6 923.7L1267.6 922.2M1267.6 922.2L1236.6 920.1M1236.6 920.1L1205.6 917.4M1205.6 917.4L1174.8 914.1M1180.7 852.7L1205.6 917.4M1123.0 852.0L1144.0 910.2M1065.4 849.4L1082.6 900.7M1007.8 844.8L1021.5 888.8M1174.8 914.1L1144.0 910.2M1144.0 910.2L1113.2 905.7M1113.2 905.7L1082.6 900.7M1082.6 900.7L1052.0 895.0M1052.0 895.0L1021.5 888.8M1021.5 888.8L991.0 882.0M991.0 882.0L960.6 874.5M960.6 874.5L930.3 866.5M930.3 866.5L900.1 857.9M900.1 857.9L869.9 848.8M1364.7 1000.1L1331.2 996.1M1331.2 996.1L1297.7 991.4M1297.7 991.4L1264.5 986.0M1264.5 986.0L1231.3 980.0M1267.6 922.2L1297.7 991.4M1205.6 917.4L1231.3 980.0M1144.0 910.2L1165.4 966.0M1082.6 900.7L1100.1 949.3M950.2 838.4L960.6 874.5M892.6 830.2L900.1 857.9M835.0 820.0L839.8 839.0M777.5 807.9L779.7 817.7M869.9 848.8L839.8 839.0M839.8 839.0L809.7 828.6M809.7 828.6L779.7 817.7M779.7 817.7L749.8 806.1M749.8 806.1L720.0 794.0M1231.3 980.0L1198.3 973.3M1198.3 973.3L1165.4 966.0M1165.4 966.0L1132.7 958.0M1132.7 958.0L1100.1 949.3M1100.1 949.3L1067.7 940.0M1067.7 940.0L1035.4 930.0M1035.4 930.0L1003.2 919.4M1003.2 919.4L971.2 908.1M971.2 908.1L939.3 896.2M1400.7 1075.2L1364.7 1067.4M1364.7 1067.4L1328.9 1059.0M1328.9 1059.0L1293.4 1050.0M1293.4 1050.0L1258.0 1040.2M1258.0 1040.2L1222.9 1029.8M1297.7 991.4L1328.9 1059.0M1231.3 980.0L1258.0 1040.2M1165.4 966.0L1187.9 1018.8M1100.1 949.3L1118.6 994.6M1021.5 888.8L1035.4 930.0M960.6 874.5L971.2 908.1M900.1 857.9L907.5 883.5M839.8 839.0L844.5 856.3M779.7 817.7L781.9 826.5M939.3 896.2L907.5 883.5M907.5 883.5L875.9 870.3M875.9 870.3L844.5 856.3M844.5 856.3L813.1 841.7M813.1 841.7L781.9 826.5M1222.9 1029.8L1187.9 1018.8M1187.9 1018.8L1153.2 1007.0M1153.2 1007.0L1118.6 994.6M1118.6 994.6L1084.3 981.6M1437.0 1150.0L1398.9 1138.0M1398.9 1138.0L1361.0 1125.3M1328.9 1059.0L1361.0 1125.3M1258.0 1040.2L1285.9 1098.2M1035.4 930.0L1050.1 967.8M971.2 908.1L982.5 938.4M781.9 826.5L750.9 810.6M750.9 810.6L720.0 794.0M1084.3 981.6L1050.1 967.8M1050.1 967.8L1016.2 953.5M1016.2 953.5L982.5 938.4M982.5 938.4L949.0 922.7M949.0 922.7L915.6 906.3M915.6 906.3L882.5 889.2M882.5 889.2L849.6 871.5M849.6 871.5L816.9 853.1M816.9 853.1L784.4 834.1M784.4 834.1L752.1 814.4M752.1 814.4L720.0 794.0M1361.0 1125.3L1323.3 1112.1M1323.3 1112.1L1285.9 1098.2M1285.9 1098.2L1248.7 1083.7M1248.7 1083.7L1211.8 1068.7M1211.8 1068.7L1175.1 1053.0M1175.1 1053.0L1138.6 1036.7M1138.6 1036.7L1102.4 1019.8M1102.4 1019.8L1066.4 1002.3M1066.4 1002.3L1030.7 984.2M1030.7 984.2L995.2 965.5M995.2 965.5L960.0 946.2M960.0 946.2L925.0 926.3M925.0 926.3L890.2 905.7M890.2 905.7L855.7 884.6M855.7 884.6L821.4 862.9M1409.6 1204.3L1372.8 1188.4M1372.8 1188.4L1336.2 1172.0M1336.2 1172.0L1299.9 1155.1M1299.9 1155.1L1263.8 1137.8M1263.8 1137.8L1227.9 1120.0M1227.9 1120.0L1192.4 1101.6M1192.4 1101.6L1157.0 1082.8M1157.0 1082.8L1121.9 1063.5M1361.0 1125.3L1336.2 1172.0M1336.2 1172.0L1311.6 1219.0M1285.9 1098.2L1263.8 1137.8M1187.9 1018.8L1211.8 1068.7M1211.8 1068.7L1192.4 1101.6M1118.6 994.6L1138.6 1036.7M1138.6 1036.7L1121.9 1063.5M1050.1 967.8L1066.4 1002.3M1066.4 1002.3L1052.5 1023.5M982.5 938.4L995.2 965.5M995.2 965.5L984.0 981.5M907.5 883.5L915.6 906.3M915.6 906.3L925.0 926.3M844.5 856.3L849.6 871.5M849.6 871.5L855.7 884.6M781.9 826.5L784.4 834.1M784.4 834.1L787.4 840.5M821.4 862.9L787.4 840.5M787.4 840.5L753.6 817.6M753.6 817.6L720.0 794.0M1121.9 1063.5L1087.1 1043.7M1087.1 1043.7L1052.5 1023.5M1052.5 1023.5L1018.1 1002.7M1018.1 1002.7L984.0 981.5M984.0 981.5L950.1 959.7M950.1 959.7L916.5 937.5M916.5 937.5L883.2 914.8M883.2 914.8L850.0 891.6M850.0 891.6L817.2 867.9M817.2 867.9L784.5 843.8M784.5 843.8L752.1 819.1M752.1 819.1L720.0 794.0M1382.1 1258.6L1346.8 1239.0M1346.8 1239.0L1311.6 1219.0M1311.6 1219.0L1276.7 1198.7M1276.7 1198.7L1242.1 1178.0M1242.1 1178.0L1207.7 1156.8M1207.7 1156.8L1173.5 1135.3M1173.5 1135.3L1139.5 1113.5M1139.5 1113.5L1105.8 1091.2M1105.8 1091.2L1072.4 1068.5M1072.4 1068.5L1039.1 1045.5M1039.1 1045.5L1006.2 1022.1M1006.2 1022.1L973.4 998.3M973.4 998.3L940.9 974.1M940.9 974.1L908.6 949.5M908.6 949.5L876.6 924.5M876.6 924.5L844.8 899.2M844.8 899.2L813.2 873.5M813.2 873.5L781.9 847.4M1354.7 1312.9L1320.9 1289.8M1320.9 1289.8L1287.2 1266.4M1287.2 1266.4L1253.8 1242.7M1253.8 1242.7L1220.6 1218.7M1220.6 1218.7L1187.7 1194.4M1311.6 1219.0L1287.2 1266.4M1263.8 1137.8L1242.1 1178.0M1242.1 1178.0L1220.6 1218.7M1192.4 1101.6L1173.5 1135.3M1173.5 1135.3L1154.9 1169.8M1121.9 1063.5L1105.8 1091.2M1105.8 1091.2L1090.1 1119.7M1052.5 1023.5L1039.1 1045.5M1039.1 1045.5L1026.2 1068.4M984.0 981.5L973.4 998.3M973.4 998.3L963.2 1015.9M925.0 926.3L916.5 937.5M916.5 937.5L908.6 949.5M855.7 884.6L850.0 891.6M850.0 891.6L844.8 899.2M787.4 840.5L784.5 843.8M784.5 843.8L781.9 847.4M781.9 847.4L750.8 820.9M750.8 820.9L720.0 794.0M1187.7 1194.4L1154.9 1169.8M1154.9 1169.8L1122.4 1144.9M1122.4 1144.9L1090.1 1119.7M1090.1 1119.7L1058.0 1094.2M1058.0 1094.2L1026.2 1068.4M1026.2 1068.4L994.6 1042.3M994.6 1042.3L963.2 1015.9M963.2 1015.9L932.0 989.3M932.0 989.3L901.0 962.3M901.0 962.3L870.3 935.0M870.3 935.0L839.8 907.4M839.8 907.4L809.5 879.5M809.5 879.5L779.5 851.3M779.5 851.3L749.6 822.8M749.6 822.8L720.0 794.0M1327.3 1367.1L1295.1 1340.5M1295.1 1340.5L1263.2 1313.6M1263.2 1313.6L1231.4 1286.6M1231.4 1286.6L1199.9 1259.3M1199.9 1259.3L1168.5 1231.8M1287.2 1266.4L1263.2 1313.6M1220.6 1218.7L1199.9 1259.3M1154.9 1169.8L1137.3 1204.1M1090.1 1119.7L1075.4 1148.1M1026.2 1068.4L1014.3 1091.2M963.2 1015.9L953.9 1033.4M908.6 949.5L901.0 962.3M844.8 899.2L839.8 907.4M781.9 847.4L779.5 851.3M1168.5 1231.8L1137.3 1204.1M1137.3 1204.1L1106.2 1176.2M1106.2 1176.2L1075.4 1148.1M1075.4 1148.1L1044.8 1119.7M1044.8 1119.7L1014.3 1091.2M1014.3 1091.2L984.0 1062.4M984.0 1062.4L953.9 1033.4M953.9 1033.4L924.1 1004.2M924.1 1004.2L894.3 974.8M894.3 974.8L864.8 945.2M864.8 945.2L835.5 915.4M835.5 915.4L806.3 885.4M806.3 885.4L777.4 855.1M777.4 855.1L748.6 824.7M748.6 824.7L720.0 794.0M1299.9 1421.4L1270.0 1390.9M1270.0 1390.9L1240.2 1360.3M1240.2 1360.3L1210.5 1329.6M1210.5 1329.6L1180.9 1298.8M1263.2 1313.6L1240.2 1360.3M1199.9 1259.3L1180.9 1298.8M1137.3 1204.1L1122.0 1237.0M1075.4 1148.1L1063.4 1174.8M1014.3 1091.2L1005.2 1112.2M953.9 1033.4L947.4 1049.3M901.0 962.3L894.3 974.8M894.3 974.8L890.0 986.0M839.8 907.4L835.5 915.4M835.5 915.4L833.0 922.4M779.5 851.3L777.4 855.1M1180.9 1298.8L1151.4 1267.9M1151.4 1267.9L1122.0 1237.0M1122.0 1237.0L1092.6 1205.9M1092.6 1205.9L1063.4 1174.8M1063.4 1174.8L1034.3 1143.5M1034.3 1143.5L1005.2 1112.2M1005.2 1112.2L976.3 1080.8M976.3 1080.8L947.4 1049.3M947.4 1049.3L918.7 1017.7M918.7 1017.7L890.0 986.0M890.0 986.0L861.4 954.2M861.4 954.2L833.0 922.4M833.0 922.4L804.6 890.4M804.6 890.4L776.3 858.4M776.3 858.4L748.1 826.2M748.1 826.2L720.0 794.0M1272.4 1475.7L1245.8 1440.9M1245.8 1440.9L1219.0 1406.1M1219.0 1406.1L1192.1 1371.4M1192.1 1371.4L1165.2 1336.8M1165.2 1336.8L1138.1 1302.3M1138.1 1302.3L1110.9 1267.9M1110.9 1267.9L1083.7 1233.5M1083.7 1233.5L1056.3 1199.2M1056.3 1199.2L1028.8 1165.0M1028.8 1165.0L1001.3 1130.9M1001.3 1130.9L973.6 1096.9M973.6 1096.9L945.8 1062.9M945.8 1062.9L917.9 1029.0M917.9 1029.0L890.0 995.2M890.0 995.2L861.9 961.5M861.9 961.5L833.7 927.8M833.7 927.8L805.4 894.2M805.4 894.2L777.1 860.7M777.1 860.7L748.6 827.3M748.6 827.3L720.0 794.0M976.5 1112.3L949.6 1075.9M949.6 1075.9L922.3 1039.8M922.3 1039.8L894.7 1003.9M894.7 1003.9L866.6 968.3M866.6 968.3L838.1 932.9M838.1 932.9L809.2 897.8M809.2 897.8L779.9 862.9M779.9 862.9L750.1 828.3M750.1 828.3L720.0 794.0M879.4 991.5L854.5 957.7M854.5 957.7L828.9 924.3M828.9 924.3L802.7 891.2M802.7 891.2L775.8 858.5M775.8 858.5L748.2 826.1M748.2 826.1L720.0 794.0M769.8 855.3L745.3 824.5M745.3 824.5L720.0 794.0M1240.2 1360.3L1219.0 1406.1M1180.9 1298.8L1165.2 1336.8M1122.0 1237.0L1110.9 1267.9M1063.4 1174.8L1056.3 1199.2M1005.2 1112.2L1001.3 1130.9M1001.3 1130.9L1002.9 1149.0M947.4 1049.3L945.8 1062.9M945.8 1062.9L949.6 1075.9M890.0 986.0L890.0 995.2M890.0 995.2L894.7 1003.9M894.7 1003.9L879.4 991.5M833.0 922.4L833.7 927.8M833.7 927.8L838.1 932.9M838.1 932.9L828.9 924.3M777.4 855.1L776.3 858.4M776.3 858.4L777.1 860.7M777.1 860.7L779.9 862.9M779.9 862.9L775.8 858.5M775.8 858.5L769.8 855.3M1245.0 1530.0L1222.6 1490.7M1222.6 1490.7L1199.9 1451.7M1199.9 1451.7L1176.7 1413.0M1035.0 1237.1L1014.8 1201.0M1014.8 1201.0L993.9 1165.2M899.7 1046.6L880.1 1013.9M741.2 823.4L720.0 794.0M1104.7 1298.3L1054.5 1273.5M816.3 917.8L799.7 913.0M1176.7 1413.0L1153.1 1374.5M1153.1 1374.5L1129.1 1336.3M1129.1 1336.3L1104.7 1298.3M1104.7 1298.3L1079.8 1260.6M1079.8 1260.6L1054.6 1223.1M1054.6 1223.1L1029.0 1185.9M1029.0 1185.9L1002.9 1149.0M1002.9 1149.0L976.5 1112.3M993.9 1165.2L972.3 1129.8M972.3 1129.8L950.1 1094.7M950.1 1094.7L927.2 1060.0M927.2 1060.0L903.6 1025.5M903.6 1025.5L879.4 991.5M880.1 1013.9L859.6 981.6M859.6 981.6L838.4 949.5M838.4 949.5L816.3 917.8M816.3 917.8L793.4 886.4M793.4 886.4L769.8 855.3M1219.0 1406.1L1199.9 1451.7M1165.2 1336.8L1153.1 1374.5M1110.9 1267.9L1104.7 1298.3M1056.3 1199.2L1054.6 1223.1M1054.6 1223.1L1014.8 1201.0M1002.9 1149.0L972.3 1129.8M949.6 1075.9L927.2 1060.0M927.2 1060.0L899.7 1046.6M879.4 991.5L859.6 981.6M828.9 924.3L816.3 917.8M769.8 855.3L761.5 853.0M1157.9 1499.2L1142.3 1460.7M1142.3 1460.7L1126.1 1422.6M1126.1 1422.6L1109.2 1384.8M1109.2 1384.8L1091.6 1347.4M1027.9 1319.2L1014.7 1284.0M1014.7 1284.0L1000.7 1249.1M1000.7 1249.1L985.9 1214.6M985.9 1214.6L970.3 1180.4M970.3 1180.4L953.8 1146.4M894.8 1098.4L881.0 1066.9M881.0 1066.9L866.4 1035.7M866.4 1035.7L851.0 1004.7M851.0 1004.7L834.7 973.9M834.7 973.9L817.6 943.3M817.6 943.3L799.7 913.0M1126.1 1422.6L1051.9 1390.4M1091.6 1347.4L1027.9 1319.2M1054.5 1273.5L1000.7 1249.1M970.3 1180.4L920.0 1162.1M936.6 1112.8L894.8 1098.4M899.7 1046.6L866.4 1035.7M799.7 913.0L780.5 908.7M761.5 853.0L751.7 851.1M1091.6 1347.4L1073.4 1310.3M953.8 1146.4L936.6 1112.8M936.6 1112.8L918.6 1079.6M799.7 913.0L781.0 882.9M1199.9 1451.7L1126.1 1422.6M1014.8 1201.0L970.3 1180.4M1073.4 1310.3L1054.5 1273.5M1054.5 1273.5L1035.0 1237.1M918.6 1079.6L899.7 1046.6M781.0 882.9L761.5 853.0M761.5 853.0L741.2 823.4M1153.1 1374.5L1091.6 1347.4M859.6 981.6L834.7 973.9M1072.7 1463.0L1062.7 1426.6M1062.7 1426.6L1051.9 1390.4M1051.9 1390.4L1040.3 1354.6M1040.3 1354.6L1027.9 1319.2M968.6 1325.3L960.5 1292.2M960.5 1292.2L951.6 1259.3M951.6 1259.3L941.9 1226.7M941.9 1226.7L931.3 1194.3M931.3 1194.3L920.0 1162.1M920.0 1162.1L907.8 1130.1M907.8 1130.1L894.8 1098.4M829.1 1025.6L818.0 996.2M818.0 996.2L806.3 966.9M806.3 966.9L793.8 937.7M793.8 937.7L780.5 908.7M780.5 908.7L766.5 879.8M766.5 879.8L751.7 851.1M751.7 851.1L736.2 822.5M736.2 822.5L720.0 794.0M1051.9 1390.4L975.8 1358.7M1027.9 1319.2L960.5 1292.2M1000.7 1249.1L941.9 1226.7M920.0 1162.1L865.7 1144.6M894.8 1098.4L848.9 1084.8M866.4 1035.7L829.1 1025.6M834.7 973.9L806.3 966.9M987.9 1426.1L982.3 1392.2M982.3 1392.2L975.8 1358.7M975.8 1358.7L968.6 1325.3M894.7 1296.3L890.4 1265.7M890.4 1265.7L885.4 1235.2M885.4 1235.2L879.6 1204.8M879.6 1204.8L873.0 1174.6M873.0 1174.6L865.7 1144.6M865.7 1144.6L857.7 1114.6M857.7 1114.6L848.9 1084.8M848.9 1084.8L839.3 1055.1M839.3 1055.1L829.1 1025.6M768.2 931.6L759.8 904.0M759.8 904.0L750.8 876.5M750.8 876.5L741.2 848.9M741.2 848.9L730.9 821.4M730.9 821.4L720.0 794.0M975.8 1358.7L898.3 1327.0M960.5 1292.2L890.4 1265.7M941.9 1226.7L879.6 1204.8M848.9 1084.8L800.8 1070.3M829.1 1025.6L789.6 1014.7M806.3 966.9L776.0 959.3M780.5 908.7L759.8 904.0M751.7 851.1L741.2 848.9M903.2 1388.9L901.1 1357.9M901.1 1357.9L898.3 1327.0M898.3 1327.0L894.7 1296.3M820.3 1294.2L820.1 1266.1M820.1 1266.1L819.2 1238.0M819.2 1238.0L817.7 1209.9M817.7 1209.9L815.5 1181.9M815.5 1181.9L812.8 1153.9M812.8 1153.9L809.4 1126.0M809.4 1126.0L805.4 1098.1M805.4 1098.1L800.8 1070.3M800.8 1070.3L795.5 1042.5M795.5 1042.5L789.6 1014.7M789.6 1014.7L783.1 987.0M783.1 987.0L776.0 959.3M776.0 959.3L768.2 931.6M725.4 820.0L720.0 794.0M898.3 1327.0L820.3 1294.2M890.4 1265.7L819.2 1238.0M879.6 1204.8L815.5 1181.9M865.7 1144.6L809.4 1126.0M800.8 1070.3L752.5 1052.6M789.6 1014.7L749.8 1001.1M776.0 959.3L745.2 949.5M759.8 904.0L738.8 897.8M741.2 848.9L730.3 845.9M819.0 1350.6L820.0 1322.4M820.0 1322.4L820.3 1294.2M746.6 1231.8L748.8 1206.3M748.8 1206.3L750.6 1180.7M750.6 1180.7L752.0 1155.2M752.0 1155.2L752.8 1129.6M752.8 1129.6L753.2 1103.9M753.2 1103.9L753.1 1078.3M753.1 1078.3L752.5 1052.6M752.5 1052.6L751.4 1026.8M751.4 1026.8L749.8 1001.1M749.8 1001.1L747.8 975.3M747.8 975.3L745.2 949.5M745.2 949.5L742.2 923.6M742.2 923.6L738.8 897.8M738.8 897.8L734.8 871.9M734.8 871.9L730.3 845.9M730.3 845.9L725.4 820.0M820.3 1294.2L743.8 1257.3M819.2 1238.0L748.8 1206.3M815.5 1181.9L752.0 1155.2M809.4 1126.0L753.2 1103.9M745.2 949.5L715.0 937.1M738.8 897.8L718.0 889.7M730.3 845.9L719.7 842.0M736.8 1308.2L740.5 1282.7M740.5 1282.7L743.8 1257.3M743.8 1257.3L746.6 1231.8M674.9 1193.0L680.2 1170.1M680.2 1170.1L685.2 1147.1M685.2 1147.1L689.8 1124.1M689.8 1124.1L694.1 1100.9M698.1 1077.7L701.7 1054.5M701.7 1054.5L705.0 1031.1M705.0 1031.1L708.0 1007.7M708.0 1007.7L710.7 984.3M710.7 984.3L713.0 960.7M713.0 960.7L715.0 937.1M715.0 937.1L716.7 913.4M716.7 913.4L718.0 889.7M718.0 889.7L719.0 865.9M719.0 865.9L719.7 842.0M719.7 842.0L720.0 818.0M720.0 818.0L720.0 794.0M743.8 1257.3L669.3 1215.9M748.8 1206.3L680.2 1170.1M752.0 1155.2L689.8 1124.1M753.2 1103.9L698.1 1077.7M752.5 1052.6L705.0 1031.1M749.8 1001.1L710.7 984.3M657.0 1261.4L663.3 1238.7M663.3 1238.7L669.3 1215.9M669.3 1215.9L674.9 1193.0M694.1 1100.9L698.1 1077.7M671.8 965.9L678.5 944.6M678.5 944.6L685.0 923.3M685.0 923.3L691.3 902.0M691.3 902.0L697.4 880.5M697.4 880.5L703.4 859.0M703.4 859.0L709.1 837.4M709.1 837.4L714.6 815.7M714.6 815.7L720.0 794.0M669.3 1215.9L594.7 1174.1M680.2 1170.1L611.7 1133.0M689.8 1124.1L627.8 1091.7M698.1 1077.7L643.3 1050.0M705.0 1031.1L657.9 1008.1M710.7 984.3L671.8 965.9M715.0 937.1L685.0 923.3M718.0 889.7L697.4 880.5M719.7 842.0L709.1 837.4M577.1 1214.9L586.0 1194.5M586.0 1194.5L594.7 1174.1M594.7 1174.1L603.3 1153.6M603.3 1153.6L611.7 1133.0M611.7 1133.0L619.8 1112.4M619.8 1112.4L627.8 1091.7M627.8 1091.7L635.6 1070.9M635.6 1070.9L643.3 1050.0M643.3 1050.0L650.7 1029.1M650.7 1029.1L657.9 1008.1M657.9 1008.1L665.0 987.0M665.0 987.0L671.8 965.9M671.8 965.9L634.7 944.6M685.0 923.3L656.4 907.2M697.4 880.5L677.9 869.6M709.1 837.4L699.1 831.9M498.8 1165.5L510.5 1147.3M510.5 1147.3L522.1 1129.1M522.1 1129.1L533.7 1110.8M533.7 1110.8L545.2 1092.5M545.2 1092.5L556.6 1074.2M556.6 1074.2L567.9 1055.8M567.9 1055.8L579.2 1037.3M579.2 1037.3L590.4 1018.9M590.4 1018.9L601.6 1000.3M601.6 1000.3L612.7 981.8M612.7 981.8L623.7 963.2M623.7 963.2L634.7 944.6M634.7 944.6L645.6 925.9M645.6 925.9L656.4 907.2M656.4 907.2L667.2 888.4M667.2 888.4L677.9 869.6M677.9 869.6L688.5 850.8M688.5 850.8L699.1 831.9M699.1 831.9L709.6 813.0M709.6 813.0L720.0 794.0M522.1 1129.1L452.1 1080.5M545.2 1092.5L481.4 1048.2M567.9 1055.8L510.8 1016.1M590.4 1018.9L540.4 984.1M612.7 981.8L570.1 952.2M634.7 944.6L599.8 920.3M656.4 907.2L629.7 888.6M677.9 869.6L659.7 857.0M699.1 831.9L689.8 825.4M422.8 1112.8L437.4 1096.6M437.4 1096.6L452.1 1080.5M452.1 1080.5L466.7 1064.3M466.7 1064.3L481.4 1048.2M481.4 1048.2L496.1 1032.2M496.1 1032.2L510.8 1016.1M510.8 1016.1L525.6 1000.1M525.6 1000.1L540.4 984.1M540.4 984.1L555.2 968.1M555.2 968.1L570.1 952.2M570.1 952.2L584.9 936.2M584.9 936.2L599.8 920.3M599.8 920.3L614.8 904.4M614.8 904.4L629.7 888.6M629.7 888.6L644.7 872.8M644.7 872.8L659.7 857.0M659.7 857.0L674.7 841.2M674.7 841.2L689.8 825.4M689.8 825.4L704.9 809.7M704.9 809.7L720.0 794.0M350.5 1055.2L368.1 1041.1M368.1 1041.1L385.9 1027.0M385.9 1027.0L403.7 1013.1M403.7 1013.1L421.7 999.3M421.7 999.3L439.7 985.7M439.7 985.7L457.8 972.1M457.8 972.1L475.9 958.6M475.9 958.6L494.2 945.3M494.2 945.3L512.5 932.1M512.5 932.1L531.0 919.0M531.0 919.0L549.5 906.0M549.5 906.0L568.1 893.1M568.1 893.1L586.8 880.3M586.8 880.3L605.6 867.6M605.6 867.6L624.4 855.1M624.4 855.1L643.4 842.6M643.4 842.6L662.4 830.3M662.4 830.3L681.5 818.1M681.5 818.1L700.7 806.0M700.7 806.0L720.0 794.0M452.1 1080.5L385.9 1027.0M481.4 1048.2L421.7 999.3M510.8 1016.1L457.8 972.1M540.4 984.1L494.2 945.3M570.1 952.2L531.0 919.0M599.8 920.3L568.1 893.1M629.7 888.6L605.6 867.6M659.7 857.0L643.4 842.6M689.8 825.4L681.5 818.1M282.0 993.0L302.9 981.0M302.9 981.0L323.8 969.3M323.8 969.3L344.9 957.7M344.9 957.7L366.1 946.4M366.1 946.4L387.4 935.2M387.4 935.2L408.8 924.3M408.8 924.3L430.3 913.6M430.3 913.6L451.9 903.1M451.9 903.1L473.6 892.9M385.9 1027.0L323.8 969.3M421.7 999.3L366.1 946.4M457.8 972.1L408.8 924.3M494.2 945.3L451.9 903.1M531.0 919.0L495.5 882.8M568.1 893.1L539.5 863.3M605.6 867.6L584.0 844.7M643.4 842.6L628.9 827.0M681.5 818.1L674.2 810.1M473.6 892.9L495.5 882.8M495.5 882.8L517.4 873.0M517.4 873.0L539.5 863.3M539.5 863.3L561.7 853.9M561.7 853.9L584.0 844.7M584.0 844.7L606.4 835.7M606.4 835.7L628.9 827.0M628.9 827.0L651.5 818.4M651.5 818.4L674.2 810.1M674.2 810.1L697.1 801.9M697.1 801.9L720.0 794.0M250.0 934.0L272.5 924.4M272.5 924.4L295.2 915.1M295.2 915.1L317.9 906.0M317.9 906.0L340.8 897.2M340.8 897.2L363.7 888.7M363.7 888.7L386.8 880.4M386.8 880.4L409.9 872.5M409.9 872.5L433.2 864.8M323.8 969.3L295.2 915.1M366.1 946.4L340.8 897.2M408.8 924.3L386.8 880.4M451.9 903.1L433.2 864.8M495.5 882.8L480.0 850.2M539.5 863.3L527.2 836.8M584.0 844.7L574.8 824.4M628.9 827.0L622.8 813.2M674.2 810.1L671.2 803.0M433.2 864.8L456.5 857.4M456.5 857.4L480.0 850.2M480.0 850.2L503.5 843.4M503.5 843.4L527.2 836.8M527.2 836.8L550.9 830.5M550.9 830.5L574.8 824.4M574.8 824.4L598.7 818.7M598.7 818.7L622.8 813.2M622.8 813.2L646.9 808.0M646.9 808.0L671.2 803.0M671.2 803.0L695.5 798.4M695.5 798.4L720.0 794.0M217.8 875.1L242.1 867.8M242.1 867.8L266.6 860.8M266.6 860.8L291.1 854.2M291.1 854.2L315.7 847.9M315.7 847.9L340.3 842.0M340.3 842.0L365.1 836.4M295.2 915.1L266.6 860.8M340.8 897.2L315.7 847.9M386.8 880.4L365.1 836.4M433.2 864.8L414.8 826.2M480.0 850.2L464.9 817.4M527.2 836.8L515.3 810.0M574.8 824.4L566.0 803.9M365.1 836.4L389.9 831.1M389.9 831.1L414.8 826.2M414.8 826.2L439.8 821.6M439.8 821.6L464.9 817.4M464.9 817.4L490.0 813.5M490.0 813.5L515.3 810.0M515.3 810.0L540.6 806.8M540.6 806.8L566.0 803.9M566.0 803.9L591.4 801.4M591.4 801.4L617.0 799.3M617.0 799.3L642.6 797.4M642.6 797.4L668.3 795.9M668.3 795.9L694.1 794.8M694.1 794.8L720.0 794.0M186.1 816.0L212.3 810.9M212.3 810.9L238.6 806.3M238.6 806.3L264.9 802.1M264.9 802.1L291.3 798.3M291.3 798.3L317.7 794.9M266.6 860.8L238.6 806.3M315.7 847.9L291.3 798.3M365.1 836.4L344.2 792.0M414.8 826.2L397.3 787.3M464.9 817.4L450.6 784.3M515.3 810.0L504.1 782.9M622.8 813.2L617.0 799.3M671.2 803.0L668.3 795.9M317.7 794.9L344.2 792.0M344.2 792.0L370.7 789.4M370.7 789.4L397.3 787.3M397.3 787.3L423.9 785.6M423.9 785.6L450.6 784.3M450.6 784.3L477.3 783.4M477.3 783.4L504.1 782.9M504.1 782.9L530.9 782.8M530.9 782.8L557.7 783.2M557.7 783.2L584.7 784.0M584.7 784.0L611.6 785.1M611.6 785.1L638.6 786.7M638.6 786.7L665.7 788.7M155.8 756.1L183.9 753.4M183.9 753.4L212.1 751.2M212.1 751.2L240.2 749.4M240.2 749.4L268.4 748.2M238.6 806.3L212.1 751.2M291.3 798.3L268.4 748.2M344.2 792.0L324.7 747.1M397.3 787.3L381.1 748.0M450.6 784.3L437.5 750.9M566.0 803.9L557.7 783.2M617.0 799.3L611.6 785.1M668.3 795.9L665.7 788.7M665.7 788.7L692.8 791.2M692.8 791.2L720.0 794.0M268.4 748.2L296.5 747.4M296.5 747.4L324.7 747.1M324.7 747.1L352.9 747.3M504.1 782.9L493.9 755.6M352.9 747.3L381.1 748.0M381.1 748.0L409.3 749.2M409.3 749.2L437.5 750.9M437.5 750.9L465.7 753.0M465.7 753.0L493.9 755.6M212.1 751.2L187.4 695.4M268.4 748.2L247.2 697.7M557.7 783.2L550.4 762.3M611.6 785.1L606.9 770.9M665.7 788.7L663.4 781.5M493.9 755.6L522.1 758.7M522.1 758.7L550.4 762.3M550.4 762.3L578.6 766.4M578.6 766.4L606.9 770.9M127.4 695.3L157.4 695.1M157.4 695.1L187.4 695.4M187.4 695.4L217.3 696.3M217.3 696.3L247.2 697.7M324.7 747.1L306.9 702.2M381.1 748.0L366.4 708.8M606.9 770.9L635.1 776.0M635.1 776.0L663.4 781.5M663.4 781.5L691.7 787.5M691.7 787.5L720.0 794.0M247.2 697.7L277.1 699.7M277.1 699.7L306.9 702.2M306.9 702.2L336.7 705.2M336.7 705.2L366.4 708.8M366.4 708.8L396.1 712.9M396.1 712.9L425.7 717.6M425.7 717.6L455.3 722.8M106.4 631.6L138.0 634.3M187.4 695.4L169.5 637.5M247.2 697.7L232.2 645.7M437.5 750.9L425.7 717.6M493.9 755.6L484.9 728.5M550.4 762.3L543.9 741.6M606.9 770.9L602.8 756.9M455.3 722.8L484.9 728.5M484.9 728.5L514.4 734.8M514.4 734.8L543.9 741.6M543.9 741.6L573.4 749.0M573.4 749.0L602.8 756.9M602.8 756.9L632.1 765.4M632.1 765.4L661.5 774.4M661.5 774.4L690.8 783.9M690.8 783.9L720.0 794.0M138.0 634.3L169.5 637.5M169.5 637.5L200.9 641.3M200.9 641.3L232.2 645.7M232.2 645.7L263.4 650.7M263.4 650.7L294.5 656.2M294.5 656.2L325.6 662.3M325.6 662.3L356.5 669.0M169.5 637.5L156.1 579.1M306.9 702.2L294.5 656.2M366.4 708.8L356.5 669.0M425.7 717.6L418.0 684.1M484.9 728.5L479.2 701.5M663.4 781.5L661.5 774.4M356.5 669.0L387.3 676.3M387.3 676.3L418.0 684.1M418.0 684.1L448.7 692.5M448.7 692.5L479.2 701.5M479.2 701.5L509.6 711.0M509.6 711.0L540.0 721.2M540.0 721.2L570.2 731.9M570.2 731.9L600.4 743.2M600.4 743.2L630.4 755.0M630.4 755.0L660.4 767.4M660.4 767.4L690.2 780.4M690.2 780.4L720.0 794.0M90.4 566.4L123.3 572.5M123.3 572.5L156.1 579.1M156.1 579.1L188.7 586.2M188.7 586.2L221.1 594.0M221.1 594.0L253.4 602.2M253.4 602.2L285.6 611.1M285.6 611.1L317.6 620.5M317.6 620.5L349.4 630.5M349.4 630.5L381.1 641.0M381.1 641.0L412.7 652.1M412.7 652.1L444.1 663.8M444.1 663.8L475.4 676.0M475.4 676.0L506.5 688.8M506.5 688.8L537.4 702.1M537.4 702.1L568.2 716.0M568.2 716.0L598.9 730.5M598.9 730.5L629.4 745.5M629.4 745.5L659.7 761.1M76.8 500.7L110.6 510.8M110.6 510.8L144.3 521.4M144.3 521.4L177.8 532.4M177.8 532.4L211.1 543.9M211.1 543.9L244.3 555.9M244.3 555.9L277.3 568.4M277.3 568.4L310.0 581.4M310.0 581.4L342.7 594.9M342.7 594.9L375.1 608.8M375.1 608.8L407.3 623.2M156.1 579.1L144.3 521.4M144.3 521.4L134.3 464.7M232.2 645.7L221.1 594.0M221.1 594.0L211.1 543.9M211.1 543.9L201.8 496.2M294.5 656.2L285.6 611.1M285.6 611.1L277.3 568.4M356.5 669.0L349.4 630.5M349.4 630.5L342.7 594.9M418.0 684.1L412.7 652.1M412.7 652.1L407.3 623.2M479.2 701.5L475.4 676.0M475.4 676.0L471.3 653.5M543.9 741.6L540.0 721.2M540.0 721.2L537.4 702.1M537.4 702.1L534.5 685.7M602.8 756.9L600.4 743.2M600.4 743.2L598.9 730.5M661.5 774.4L660.4 767.4M660.4 767.4L659.7 761.1M659.7 761.1L689.9 777.3M689.9 777.3L720.0 794.0M407.3 623.2L439.4 638.1M439.4 638.1L471.3 653.5M471.3 653.5L503.0 669.4M66.1 434.5L100.2 449.4M100.2 449.4L134.3 464.7M134.3 464.7L168.1 480.3M168.1 480.3L201.8 496.2M277.3 568.4L268.8 529.0M342.7 594.9L335.1 563.0M598.9 730.5L597.1 719.9M503.0 669.4L534.5 685.7M534.5 685.7L565.9 702.6M565.9 702.6L597.1 719.9M597.1 719.9L628.1 737.7M201.8 496.2L235.4 512.4M235.4 512.4L268.8 529.0M268.8 529.0L302.0 545.8M302.0 545.8L335.1 563.0M335.1 563.0L368.1 580.5M368.1 580.5L400.8 598.3M134.3 464.7L124.3 409.0M201.8 496.2L191.4 450.3M407.3 623.2L400.8 598.3M471.3 653.5L465.9 634.9M534.5 685.7L530.4 672.8M659.7 761.1L658.9 756.0M819.6 349.4L889.0 368.5M807.1 398.5L870.1 415.8M795.0 447.6L851.3 463.0M783.2 496.8L832.5 510.3M771.8 546.1L813.7 557.5M760.7 595.5L794.9 604.8M750.0 645.0L776.1 652.1M739.7 694.6L757.4 699.4M729.6 744.3L738.7 746.7M889.0 368.5L959.1 381.0M870.1 415.8L933.1 427.3M851.3 463.0L907.0 473.4M832.5 510.3L880.8 519.5M813.7 557.5L854.4 565.4M794.9 604.8L827.8 611.3M776.1 652.1L801.1 657.1M757.4 699.4L774.2 702.8M738.7 746.7L747.2 748.5M959.1 381.0L1027.9 395.8M933.1 427.3L994.3 440.5M907.0 473.4L960.5 485.1M1027.9 395.8L1093.6 418.8M994.3 440.5L1052.2 460.6M960.5 485.1L1010.8 502.4M926.6 529.5L969.3 544.1M892.5 573.9L927.9 585.9M858.3 618.1L886.3 627.5M824.0 662.3L844.8 669.2M789.4 706.3L803.2 710.8M754.8 750.2L761.6 752.4M1156.8 635.6L1182.9 707.9M1108.7 654.4L1132.2 720.5M1060.5 672.9L1081.3 732.4M1012.3 691.2L1030.2 743.5M963.8 709.1L978.9 753.8M915.3 726.7L927.5 763.4M866.7 744.0L875.9 772.2M817.9 761.0L824.1 780.2M769.0 777.6L772.1 787.5M594.7 1174.1L522.1 1129.1M611.7 1133.0L545.2 1092.5M627.8 1091.7L567.9 1055.8M643.3 1050.0L590.4 1018.9M657.9 1008.1L612.7 981.8M880.8 519.5L926.6 529.5M854.4 565.4L892.5 573.9M827.8 611.3L858.3 618.1M801.1 657.1L824.0 662.3M972.3 1129.8L936.6 1112.8M774.2 702.8L789.4 706.3M747.2 748.5L754.8 750.2" stroke="#161616" stroke-opacity="0.85" stroke-width="2.1" stroke-dasharray="2.6 1.6" stroke-linecap="butt"/>
<path d="M713.1 798.0L584.3 872.3M712.9 797.6L574.2 868.2M712.7 797.2L564.3 863.1M712.5 796.9L554.9 857.0M712.4 796.5L546.0 850.0M712.3 796.0L537.8 842.1M712.2 795.6L530.5 833.4M712.1 795.2L524.2 824.0M712.0 794.8L519.1 814.0M712.0 794.4L515.2 803.4M712.0 793.9L512.5 792.6M712.0 793.5L511.3 781.5M712.1 793.1L511.4 770.3M712.1 792.7L513.0 759.3M712.2 792.3L515.9 748.5M712.3 791.8L520.2 738.2M712.4 791.4L525.7 728.5M712.6 791.0L532.4 719.4M712.7 790.7L540.1 711.2M712.9 790.3L548.7 703.9M713.1 789.9L558.1 697.5M713.4 789.5L568.2 692.2M713.6 789.2L578.6 687.9M713.9 788.9L589.4 684.7M714.1 788.5L600.3 682.5M714.4 788.2L611.2 681.3M726.9 790.0L855.7 715.7M727.1 790.4L865.8 719.8M727.3 790.8L875.7 724.9M727.5 791.1L885.1 731.0M727.6 791.5L894.0 738.0M727.7 792.0L902.2 745.9M727.8 792.4L909.5 754.6M727.9 792.8L915.8 764.0M728.0 793.2L920.9 774.0M728.0 793.6L924.8 784.6M728.0 794.1L927.5 795.4M728.0 794.5L928.7 806.5M727.9 794.9L928.6 817.7M727.9 795.3L927.0 828.7M727.8 795.7L924.1 839.5M727.7 796.2L919.8 849.8M727.6 796.6L914.3 859.5M727.4 797.0L907.6 868.6M727.3 797.3L899.9 876.8M727.1 797.7L891.3 884.1M726.9 798.1L881.9 890.5M726.6 798.5L871.8 895.8M726.4 798.8L861.4 900.1M726.1 799.1L850.6 903.3M725.9 799.5L839.7 905.5M725.6 799.8L828.8 906.7" stroke="#333" stroke-opacity="0.6" stroke-width="1.3" stroke-dasharray="2 2" stroke-linecap="butt"/>
<circle cx="719" cy="793" r="24" fill="url(#hub)" stroke="none"/>
</g>
</svg>
<div id="panel">
<div id="ptitle"></div>
<div id="pbottom"></div>
<div id="pglow"></div>
</div>
<span class="t" style="left:1412.8px;top:100.9px;font-size:22px;transform:scaleX(1.076);color:#8e8e8e;">Plot Items</span>
<div class="abs" style="left:1856px;top:90px;width:40px;height:40px;background:#d8d8d8"></div>
<svg class="abs" style="left:1869px;top:104px" width="14" height="14" viewBox="0 0 14 14"><path d="M2 2 L12 12 M12 2 L2 12" stroke="#f2f2f2" stroke-width="1.6"/></svg>
<span class="t" style="left:1420.4px;top:141.4px;font-size:24px;transform:scaleX(0.961);color:#000;font-weight:bold;">Plot List</span>
<span class="t" style="left:1872.5px;top:141.2px;font-size:24px;transform:scaleX(0.95);color:#0a0ad8;font-weight:bold;">?</span>
<div id="list"></div>
<div class="abs" style="left:1417px;top:227px;width:438px;height:26px;background:#d4d0c8"></div>
<div class="abs" style="left:1857px;top:173px;width:34px;height:163px;background:#f0f0f0"></div>
<svg class="abs" style="left:1864px;top:186px" width="18" height="13" viewBox="0 0 18 13"><path d="M9 1 L17.5 12 L0.5 12Z" fill="#a6a6a6"/></svg>
<svg class="abs" style="left:1864px;top:312px" width="18" height="13" viewBox="0 0 18 13"><path d="M9 12 L17.5 1 L0.5 1Z" fill="#a6a6a6"/></svg>
<div class="cb" style="left:1425px;top:177px;width:22px;height:22px;background:#f6f6f6;border-color:#7b7b7b"></div>
<svg class="abs" style="left:1470px;top:177.5px" width="22" height="22" viewBox="-11 -11 22 22"><circle r="10.3" fill="#000"/><path d="M0 0 L-4.60 -7.97 A9.2 9.2 0 0 1 4.60 -7.97Z" fill="#ff0000"/><path d="M0 0 L4.60 -7.97 A9.2 9.2 0 0 1 9.20 0.00Z" fill="#ff00ff"/><path d="M0 0 L9.20 0.00 A9.2 9.2 0 0 1 4.60 7.97Z" fill="#0000ff"/><path d="M0 0 L4.60 7.97 A9.2 9.2 0 0 1 -4.60 7.97Z" fill="#00ffff"/><path d="M0 0 L-4.60 7.97 A9.2 9.2 0 0 1 -9.20 0.00Z" fill="#00ff00"/><path d="M0 0 L-9.20 0.00 A9.2 9.2 0 0 1 -4.60 -7.97Z" fill="#ffff00"/></svg>
<span class="t" style="left:1506.0px;top:177.8px;font-size:23px;transform:scaleX(0.881);color:#000;">Profile</span>
<span class="t" style="left:1595.0px;top:177.8px;font-size:23px;transform:scaleX(0.922);color:#000;">Adobe RGB (1998)</span>
<div class="cb" style="left:1425px;top:203px;width:22px;height:22px;background:#0a5ebd;border-color:#0a5ebd"><svg width="22" height="22" viewBox="0 0 22 22" style="position:absolute;left:-2px;top:-2px"><path d="M7.2 12 L9.8 14 L14.6 8.8" fill="none" stroke="#cfe0f6" stroke-width="1.8"/></svg></div>
<svg class="abs" style="left:1470px;top:203.5px" width="22" height="22" viewBox="-11 -11 22 22"><circle r="10.3" fill="#000"/><path d="M0 0 L-4.60 -7.97 A9.2 9.2 0 0 1 4.60 -7.97Z" fill="#ff0000"/><path d="M0 0 L4.60 -7.97 A9.2 9.2 0 0 1 9.20 0.00Z" fill="#ff00ff"/><path d="M0 0 L9.20 0.00 A9.2 9.2 0 0 1 4.60 7.97Z" fill="#0000ff"/><path d="M0 0 L4.60 7.97 A9.2 9.2 0 0 1 -4.60 7.97Z" fill="#00ffff"/><path d="M0 0 L-4.60 7.97 A9.2 9.2 0 0 1 -9.20 0.00Z" fill="#00ff00"/><path d="M0 0 L-9.20 0.00 A9.2 9.2 0 0 1 -4.60 -7.97Z" fill="#ffff00"/></svg>
<span class="t" style="left:1506.0px;top:203.8px;font-size:23px;transform:scaleX(0.881);color:#000;">Profile</span>
<span class="t" style="left:1595.0px;top:203.8px;font-size:23px;transform:scaleX(0.916);color:#000;">Display P3</span>
<div class="cb" style="left:1425px;top:229px;width:22px;height:22px;background:#0a5ebd;border-color:#0a5ebd"><svg width="22" height="22" viewBox="0 0 22 22" style="position:absolute;left:-2px;top:-2px"><path d="M7.2 12 L9.8 14 L14.6 8.8" fill="none" stroke="#cfe0f6" stroke-width="1.8"/></svg></div>
<svg class="abs" style="left:1470px;top:229.5px" width="22" height="22" viewBox="-11 -11 22 22"><circle r="10.3" fill="#000"/><path d="M0 0 L-4.60 -7.97 A9.2 9.2 0 0 1 4.60 -7.97Z" fill="#ff0000"/><path d="M0 0 L4.60 -7.97 A9.2 9.2 0 0 1 9.20 0.00Z" fill="#ff00ff"/><path d="M0 0 L9.20 0.00 A9.2 9.2 0 0 1 4.60 7.97Z" fill="#0000ff"/><path d="M0 0 L4.60 7.97 A9.2 9.2 0 0 1 -4.60 7.97Z" fill="#00ffff"/><path d="M0 0 L-4.60 7.97 A9.2 9.2 0 0 1 -9.20 0.00Z" fill="#00ff00"/><path d="M0 0 L-9.20 0.00 A9.2 9.2 0 0 1 -4.60 -7.97Z" fill="#ffff00"/></svg>
<span class="t" style="left:1506.0px;top:229.8px;font-size:23px;transform:scaleX(0.881);color:#000;">Profile</span>
<span class="t" style="left:1595.0px;top:229.8px;font-size:23px;transform:scaleX(0.912);color:#000;">ISO Coated v2 (ECI)</span>
<div class="abs" style="left:1853px;top:345px;width:40px;height:39px;background:#000"></div>
<div class="abs" style="left:1855px;top:347px;width:36px;height:35px;background:#a0a0a0"></div>
<div class="abs" style="left:1855px;top:347px;width:33px;height:32px;background:#fff"></div>
<div class="abs" style="left:1857px;top:349px;width:31px;height:30px;background:#f0f0f0"></div>
<svg class="abs" style="left:1865px;top:362px" width="18" height="13" viewBox="0 0 18 13"><path d="M0 1 H18 V4 H15 L9 10 L3 4 H0Z" fill="#000"/></svg>
<div class="grp" style="left:1421px;top:394px;width:470px;height:223px"></div>
<div class="abs" style="left:1434px;top:388px;width:102px;height:14px;background:#f0f0f0"></div>
<span class="t" style="left:1439.8px;top:382.7px;font-size:23.5px;transform:scaleX(0.868);color:#000;">Plot Color</span>
<div class="rd" style="left:1459.1px;top:429.5px;background:#0a5ebd;border-color:#0a5ebd"><i style="position:absolute;left:6.2px;top:6.2px;width:9.4px;height:9.4px;border-radius:50%;background:#fff"></i></div>
<span class="t" style="left:1492.4px;top:430.9px;font-size:23.5px;transform:scaleX(0.886);color:#000;">true color</span>
<div class="cb" style="left:1629px;top:430px;width:24px;height:23px;background:#0a5ebd;border-color:#0a5ebd"><svg width="24" height="23" viewBox="0 0 22 22" style="position:absolute;left:-2px;top:-2px"><path d="M7.2 12 L9.8 14 L14.6 8.8" fill="none" stroke="#cfe0f6" stroke-width="1.8"/></svg></div>
<span class="t" style="left:1663.0px;top:430.9px;font-size:23.5px;transform:scaleX(0.919);color:#000;">Tone using L*</span>
<div class="rd" style="left:1459.1px;top:472.0px;border-color:#858585;background:#f4f4f4"></div>
<span class="t" style="left:1492.4px;top:473.6px;font-size:23.5px;transform:scaleX(0.873);color:#000;">single color:</span>
<div class="abs" style="left:1633px;top:465px;width:207px;height:42px;box-sizing:border-box;border:1px solid #e2e2e2;background:linear-gradient(#f6f6f6,#ececec)"></div>
<div class="abs" style="left:1635px;top:467px;width:203px;height:38px;background:linear-gradient(#f6f6f6,#ececec)"></div>
<span class="t" style="left:1641.8px;top:475.1px;font-size:23.5px;transform:scaleX(0.926);color:#6d6d6d;">Red</span>
<svg class="abs" style="left:1813px;top:481px" width="18" height="12" viewBox="0 0 18 12"><path d="M2 2.5 L9 9.5 L16 2.5" fill="none" stroke="#b4b4b4" stroke-width="1.6"/></svg>
<div class="rd" style="left:1459.1px;top:513.5px;border-color:#c4c4c4;background:#f7f7f7"></div>
<span class="t" style="left:1492.7px;top:515.2px;font-size:23.5px;transform:scaleX(0.882);color:#6d6d6d;">deltaE color:</span>
<span class="t" style="left:1452.3px;top:561.7px;font-size:23.5px;transform:scaleX(0.878);color:#000;">Opacity:</span>
<div class="abs" style="left:1551px;top:572px;width:297px;height:6px;box-sizing:border-box;background:#e7eaea;border:1px solid #d6d6d6"></div>
<svg class="abs" style="left:1839px;top:568px" width="10" height="18" viewBox="0 0 10 18"><path d="M0 0 H10 V13 L5 18 L0 13Z" fill="#0a70d6"/></svg>
<span class="t" style="left:1418.4px;top:647.0px;font-size:23.5px;transform:scaleX(0.861);color:#000;">Plot as:</span>
<div class="rd" style="left:1497.0px;top:647.7px;border-color:#c4c4c4;background:#f7f7f7"></div>
<span class="t" style="left:1530.0px;top:649.1px;font-size:23.5px;transform:scaleX(0.881);color:#6d6d6d;">Points</span>
<div class="rd" style="left:1598.7px;top:647.7px;border-color:#c4c4c4;background:#f7f7f7"></div>
<span class="t" style="left:1630.8px;top:649.1px;font-size:23.5px;transform:scaleX(0.923);color:#6d6d6d;">Vectors</span>
<div class="rd" style="left:1713.5px;top:647.7px;background:#0a5ebd;border-color:#0a5ebd"><i style="position:absolute;left:6.2px;top:6.2px;width:9.4px;height:9.4px;border-radius:50%;background:#fff"></i></div>
<span class="t" style="left:1745.6px;top:649.1px;font-size:23.5px;transform:scaleX(0.884);color:#000;">Volume</span>
<div class="grp" style="left:1425px;top:716px;width:189px;height:136px"></div>
<div class="abs" style="left:1438px;top:708px;width:168px;height:16px;background:#fafafa"></div>
<span class="t" style="left:1443.7px;top:705.5px;font-size:23.5px;transform:scaleX(0.91);color:#000;">Surface Shading</span>
<div class="rd" style="left:1439.5px;top:741.3px;border-color:#858585;background:#f4f4f4"></div>
<span class="t" style="left:1473.0px;top:743.4px;font-size:23.5px;transform:scaleX(0.858);color:#000;">wireframe</span>
<div class="rd" style="left:1439.5px;top:777.3px;background:#0a5ebd;border-color:#0a5ebd"><i style="position:absolute;left:6.2px;top:6.2px;width:9.4px;height:9.4px;border-radius:50%;background:#fff"></i></div>
<span class="t" style="left:1472.8px;top:779.8px;font-size:23.5px;transform:scaleX(0.838);color:#000;">flat</span>
<div class="rd" style="left:1439.5px;top:813.0px;border-color:#858585;background:#f4f4f4"></div>
<span class="t" style="left:1472.8px;top:815.5px;font-size:23.5px;transform:scaleX(0.86);color:#000;">smooth</span>
<span class="t" style="left:1653.9px;top:718.1px;font-size:23.5px;transform:scaleX(0.852);color:#000;">Res:</span>
<div class="cmb" style="left:1697px;top:714px;width:190px;height:40px"></div>
<span class="t" style="left:1706.0px;top:723.8px;font-size:23.5px;transform:scaleX(0.87);color:#000;">10% steps</span>
<svg class="abs" style="left:1859.8px;top:730px" width="18" height="12" viewBox="0 0 18 12"><path d="M2 2.5 L9 9.5 L16 2.5" fill="none" stroke="#555" stroke-width="1.6"/></svg>
<div class="rd" style="left:1667.3px;top:819.4px;border-color:#858585;background:#f4f4f4"></div>
<span class="t" style="left:1700.4px;top:821.5px;font-size:23.5px;transform:scaleX(0.911);color:#000;">device gamut</span>
<div class="rd" style="left:1667.3px;top:857.3px;background:#0a5ebd;border-color:#0a5ebd"><i style="position:absolute;left:6.2px;top:6.2px;width:9.4px;height:9.4px;border-radius:50%;background:#fff"></i></div>
<div class="cmb" style="left:1711px;top:860px;width:160px;height:40px"></div>
<div class="abs" style="left:1712px;top:862px;width:119px;height:36px;overflow:hidden"><span class="t" style="left:6.7px;top:6.2px;font-size:23.5px;transform:scaleX(0.905);color:#000;">Abs. Colorimetric</span></div>
<svg class="abs" style="left:1844px;top:875.5px" width="18" height="12" viewBox="0 0 18 12"><path d="M2 2.5 L9 9.5 L16 2.5" fill="none" stroke="#555" stroke-width="1.6"/></svg>
<svg width="1926" height="1582" viewBox="0 0 1926 1582" style="position:absolute;left:0;top:0"><g id="red" stroke="#e01f1f" stroke-width="7.5" stroke-linecap="round" stroke-linejoin="round" fill="none"><path d="M1423.0 212.0C1419.5 212.8 1408.5 215.2 1402.0 217.0C1395.5 218.8 1392.5 219.5 1384.0 223.0C1375.5 226.5 1362.2 232.5 1351.0 238.0C1339.8 243.5 1328.2 250.8 1317.0 256.0C1305.8 261.2 1303.5 263.3 1284.0 269.0C1264.5 274.7 1227.8 283.4 1200.0 290.0C1172.2 296.6 1144.7 302.7 1117.0 308.5C1089.3 314.3 1057.3 320.8 1034.0 325.0C1010.7 329.2 986.5 332.5 977.0 334.0"/><path d="M1428.0 241.0C1424.8 245.3 1417.7 257.2 1409.0 267.0C1400.3 276.8 1385.7 287.5 1376.0 300.0C1366.3 312.5 1360.8 328.0 1351.0 342.0C1341.2 356.0 1328.2 372.8 1317.0 384.0C1305.8 395.2 1296.5 397.2 1284.0 409.0C1271.5 420.8 1256.0 439.0 1242.0 455.0C1228.0 471.0 1213.8 490.5 1200.0 505.0C1186.2 519.5 1172.8 530.2 1159.0 542.0C1145.2 553.8 1131.0 565.8 1117.0 575.5C1103.0 585.2 1087.8 591.8 1075.0 600.5C1062.2 609.2 1045.8 623.4 1040.0 628.0"/><path d="M636.0 1067.0C640.3 1067.8 653.2 1071.2 662.0 1072.0C670.8 1072.8 676.2 1070.5 689.0 1072.0C701.8 1073.5 722.2 1076.2 739.0 1081.0C755.8 1085.8 777.3 1095.5 790.0 1101.0C802.7 1106.5 809.5 1107.8 815.0 1114.0C820.5 1120.2 821.3 1127.7 823.0 1138.0C824.7 1148.3 825.2 1156.7 825.0 1176.0C824.8 1195.3 824.2 1228.2 822.0 1254.0C819.8 1279.8 816.2 1308.5 812.0 1331.0C807.8 1353.5 800.8 1376.2 797.0 1389.0C793.2 1401.8 793.7 1403.5 789.0 1408.0C784.3 1412.5 779.3 1414.7 769.0 1416.0C758.7 1417.3 751.3 1417.5 727.0 1416.0C702.7 1414.5 657.5 1411.2 623.0 1407.0C588.5 1402.8 554.5 1397.5 520.0 1391.0C485.5 1384.5 447.2 1376.2 416.0 1368.0C384.8 1359.8 353.0 1349.8 333.0 1342.0C313.0 1334.2 304.0 1329.7 296.0 1321.0C288.0 1312.3 287.2 1305.5 285.0 1290.0C282.8 1274.5 283.3 1248.8 283.0 1228.0C282.7 1207.2 280.0 1183.3 283.0 1165.0C286.0 1146.7 291.8 1131.8 301.0 1118.0C310.2 1104.2 322.3 1093.2 338.0 1082.0C353.7 1070.8 376.0 1058.8 395.0 1051.0C414.0 1043.2 432.5 1037.2 452.0 1035.0C471.5 1032.8 493.7 1035.3 512.0 1038.0C530.3 1040.7 545.2 1046.0 562.0 1051.0C578.8 1056.0 598.2 1062.2 613.0 1068.0C627.8 1073.8 642.0 1081.7 651.0 1086.0C660.0 1090.3 664.3 1092.7 667.0 1094.0"/></g></svg>
</div>
</body></html>
